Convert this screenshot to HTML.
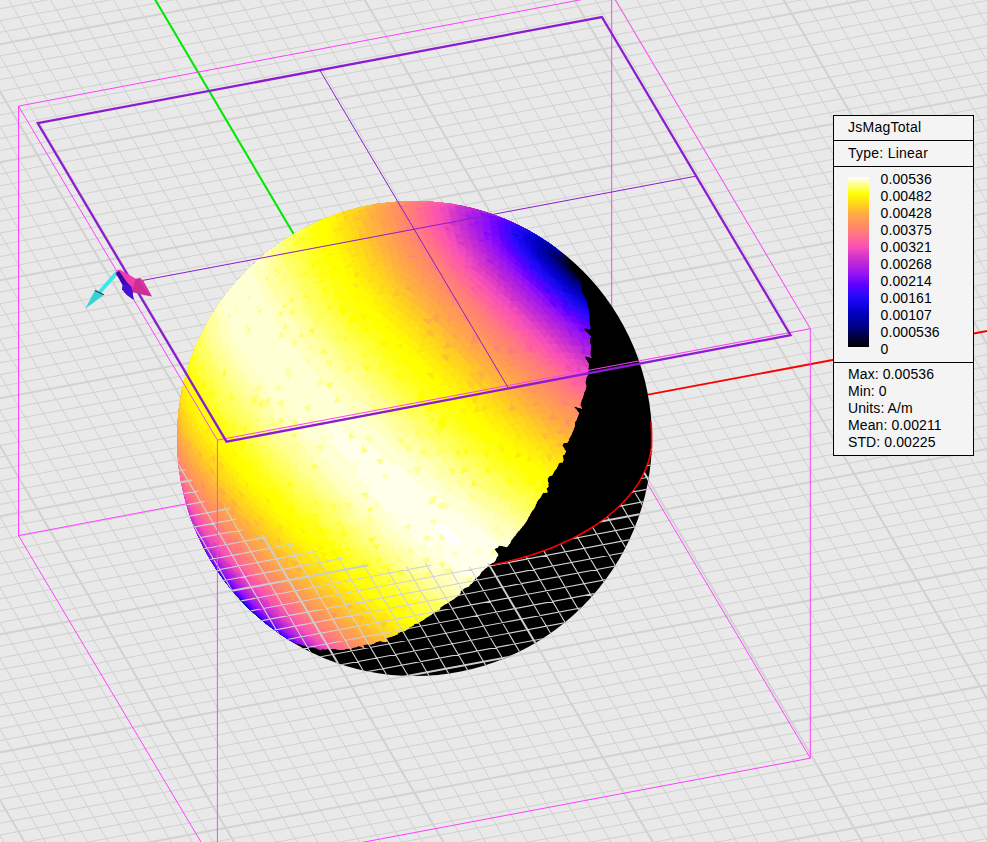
<!DOCTYPE html>
<html><head><meta charset="utf-8"><title>JsMagTotal</title>
<style>
html,body{margin:0;padding:0;background:#e9e9e9;}
body{width:987px;height:842px;overflow:hidden;position:relative;font-family:"Liberation Sans",Arial,sans-serif;font-size:14px;color:#000;}
.lg{position:absolute;left:833px;top:115px;width:139px;height:339px;border:1px solid #000;background:#f4f4f4;}
.lg .hr{position:absolute;left:0;right:0;height:1px;background:#000;}
.lg .t,.lg .v{position:absolute;left:14px;line-height:16px;white-space:nowrap;letter-spacing:0.25px;}
.lg .v{left:46.5px;letter-spacing:0.1px;}
.lg .s{letter-spacing:0.1px;}
.lg .bar{position:absolute;left:14px;top:61px;width:21px;height:170px;}
</style></head><body>
<svg width="987" height="842" viewBox="0 0 987 842" style="display:block">
<rect width="987" height="842" fill="#e9e9e9"/>
<path id="gmin" d="M-5.0 -2.1L10.6 -5.0M-5.0 9.7L73.5 -5.0M-5.0 21.5L136.4 -5.0M-5.0 33.3L199.2 -5.0M-5.0 56.9L325.0 -5.0M-5.0 68.7L387.9 -5.0M-5.0 80.5L450.8 -5.0M-5.0 92.3L513.7 -5.0M-5.0 104.1L576.6 -5.0M-5.0 115.9L639.4 -5.0M-5.0 127.8L702.3 -5.0M-5.0 139.6L765.2 -5.0M-5.0 827.3L6.7 847.0M-5.0 151.4L828.1 -5.0M-5.0 756.4L48.6 847.0M-5.0 175.0L953.9 -5.0M-5.0 721.0L69.5 847.0M-5.0 186.8L992.0 -0.4M-5.0 685.5L90.4 847.0M-5.0 198.6L992.0 11.5M-5.0 650.1L111.4 847.0M-5.0 210.4L992.0 23.3M-5.0 614.6L132.3 847.0M-5.0 222.2L992.0 35.1M-5.0 579.2L153.3 847.0M-5.0 234.0L992.0 46.9M-5.0 543.8L174.2 847.0M-5.0 245.8L992.0 58.7M-5.0 508.3L195.2 847.0M-5.0 257.6L992.0 70.5M-5.0 472.9L216.1 847.0M-5.0 269.4L992.0 82.3M-5.0 402.0L258.0 847.0M-5.0 293.0L992.0 105.9M-5.0 366.6L278.9 847.0M-5.0 304.8L992.0 117.7M-5.0 331.1L299.9 847.0M-5.0 316.6L992.0 129.5M-5.0 295.7L320.8 847.0M-5.0 328.4L992.0 141.3M-5.0 260.3L341.8 847.0M-5.0 340.2L992.0 153.1M-5.0 224.8L362.7 847.0M-5.0 352.0L992.0 164.9M-5.0 189.4L383.7 847.0M-5.0 363.8L992.0 176.7M-5.0 153.9L404.6 847.0M-5.0 375.6L992.0 188.5M-5.0 118.5L425.5 847.0M-5.0 387.4L992.0 200.3M-5.0 47.6L467.4 847.0M-5.0 411.0L992.0 223.9M-5.0 12.2L488.4 847.0M-5.0 422.8L992.0 235.7M5.8 -5.0L509.3 847.0M-5.0 434.6L992.0 247.5M26.7 -5.0L530.3 847.0M-5.0 446.4L992.0 259.3M47.7 -5.0L551.2 847.0M-5.0 458.2L992.0 271.1M68.6 -5.0L572.1 847.0M-5.0 470.0L992.0 282.9M89.6 -5.0L593.1 847.0M-5.0 481.8L992.0 294.7M110.5 -5.0L614.0 847.0M-5.0 493.6L992.0 306.5M131.4 -5.0L635.0 847.0M-5.0 505.4L992.0 318.3M173.3 -5.0L676.9 847.0M-5.0 529.0L992.0 341.9M194.3 -5.0L697.8 847.0M-5.0 540.8L992.0 353.7M215.2 -5.0L718.8 847.0M-5.0 552.6L992.0 365.5M236.2 -5.0L739.7 847.0M-5.0 564.4L992.0 377.3M257.1 -5.0L760.6 847.0M-5.0 576.2L992.0 389.1M278.1 -5.0L781.6 847.0M-5.0 588.0L992.0 400.9M299.0 -5.0L802.5 847.0M-5.0 599.8L992.0 412.7M319.9 -5.0L823.5 847.0M-5.0 611.7L992.0 424.5M340.9 -5.0L844.4 847.0M-5.0 623.5L992.0 436.3M382.8 -5.0L886.3 847.0M-5.0 647.1L992.0 459.9M403.7 -5.0L907.2 847.0M-5.0 658.9L992.0 471.7M424.7 -5.0L928.2 847.0M-5.0 670.7L992.0 483.5M445.6 -5.0L949.1 847.0M-5.0 682.5L992.0 495.3M466.5 -5.0L970.1 847.0M-5.0 694.3L992.0 507.2M487.5 -5.0L991.0 847.0M-5.0 706.1L992.0 519.0M508.4 -5.0L992.0 813.2M-5.0 717.9L992.0 530.8M529.4 -5.0L992.0 777.8M-5.0 729.7L992.0 542.6M550.3 -5.0L992.0 742.3M-5.0 741.5L992.0 554.4M592.2 -5.0L992.0 671.5M-5.0 765.1L992.0 578.0M613.2 -5.0L992.0 636.0M-5.0 776.9L992.0 589.8M634.1 -5.0L992.0 600.6M-5.0 788.7L992.0 601.6M655.0 -5.0L992.0 565.1M-5.0 800.5L992.0 613.4M676.0 -5.0L992.0 529.7M-5.0 812.3L992.0 625.2M696.9 -5.0L992.0 494.3M-5.0 824.1L992.0 637.0M717.9 -5.0L992.0 458.8M-5.0 835.9L992.0 648.8M738.8 -5.0L992.0 423.4M-1.3 847.0L992.0 660.6M759.8 -5.0L992.0 388.0M61.6 847.0L992.0 672.4M801.7 -5.0L992.0 317.1M187.4 847.0L992.0 696.0M822.6 -5.0L992.0 281.6M250.3 847.0L992.0 707.8M843.5 -5.0L992.0 246.2M313.2 847.0L992.0 719.6M864.5 -5.0L992.0 210.8M376.0 847.0L992.0 731.4M885.4 -5.0L992.0 175.3M438.9 847.0L992.0 743.2M906.4 -5.0L992.0 139.9M501.8 847.0L992.0 755.0M927.3 -5.0L992.0 104.4M564.7 847.0L992.0 766.8M948.3 -5.0L992.0 69.0M627.6 847.0L992.0 778.6M969.2 -5.0L992.0 33.6M690.5 847.0L992.0 790.4M816.2 847.0L992.0 814.0M879.1 847.0L992.0 825.8M942.0 847.0L992.0 837.6" stroke="#d1d1d1" stroke-width="1" fill="none"/>
<path id="gmaj" d="M-5.0 45.1L262.1 -5.0M-5.0 791.8L27.6 847.0M-5.0 163.2L891.0 -5.0M-5.0 437.4L237.0 847.0M-5.0 281.2L992.0 94.1M-5.0 83.1L446.5 847.0M-5.0 399.2L992.0 212.1M152.4 -5.0L655.9 847.0M-5.0 517.2L992.0 330.1M361.8 -5.0L865.4 847.0M-5.0 635.3L992.0 448.1M571.3 -5.0L992.0 706.9M-5.0 753.3L992.0 566.2M780.7 -5.0L992.0 352.5M124.5 847.0L992.0 684.2M990.1 -5.0L992.0 -1.9M753.4 847.0L992.0 802.2" stroke="#d2d2d2" stroke-width="2" fill="none"/>
<path d="M414.5 438.5L992.0 330.1" stroke="#ff0000" stroke-width="1.8" fill="none"/>
<path d="M414.5 438.5L152.4 -5.0" stroke="#00ea00" stroke-width="2" fill="none"/>
<path d="M18.5 106.1L611.7 -6.1M611.7 -6.1L810.3 328.7M18.5 106.1L18.5 535.6M611.7 -6.1L611.7 423.4M810.3 328.7L810.3 758.2M18.5 535.6L611.7 423.4M611.7 423.4L810.3 758.2M810.3 758.2L217.4 869.6M217.4 869.6L18.5 535.6" stroke="#ff40ff" stroke-width="1" fill="none"/>
<circle cx="414.5" cy="438.5" r="237.5" fill="#000"/>
<clipPath id="sc"><circle cx="414.5" cy="438.5" r="237.5"/></clipPath>
<clipPath id="tc"><path d="M546.3 241.0L547.7 241.9L548.6 242.5L550.5 243.8L551.9 244.8L553.2 245.9L555.1 247.3L556.3 248.4L557.7 249.6L559.0 250.8L560.2 251.9L560.5 252.5L561.6 253.7L562.7 254.9L563.8 256.1L564.9 257.4L566.0 258.8L567.1 260.1L568.1 261.5L571.2 264.3L569.9 264.1L570.8 265.6L571.7 267.0L572.6 268.5L573.1 269.4L575.0 271.6L575.6 273.0L576.4 274.5L577.1 276.0L578.3 278.0L579.6 280.0L580.3 281.6L581.1 283.3L581.1 284.6L581.8 286.3L581.4 287.4L582.0 289.2L582.6 291.0L580.6 291.0L583.7 294.7L584.3 296.5L585.5 298.9L586.6 301.2L587.5 303.5L587.9 305.4L588.1 307.3L588.7 309.4L589.1 311.4L589.1 313.2L589.4 315.3L589.7 317.3L589.3 319.0L589.6 321.1L589.8 323.2L590.1 325.4L590.3 327.6L590.4 329.8L584.7 328.0L584.8 330.2L591.4 336.8L589.9 338.0L589.9 340.3L589.9 342.5L591.3 345.8L590.8 347.8L590.7 350.1L590.6 352.4L590.4 354.7L591.9 358.2L585.6 356.3L585.4 358.7L589.0 363.7L588.8 366.1L588.5 368.5L588.5 371.1L588.2 373.5L587.8 375.9L586.4 377.7L586.0 380.1L585.6 382.6L586.4 385.9L585.9 388.4L585.4 390.8L584.2 392.8L583.6 395.3L583.0 397.8L581.8 399.9L581.1 402.4L580.5 404.9L582.3 409.1L573.8 406.3L579.2 413.0L578.4 415.5L577.3 417.8L576.5 420.3L575.0 422.4L575.0 425.5L574.1 428.0L573.2 430.6L572.0 432.9L571.1 435.5L569.6 437.6L568.6 440.2L567.6 442.7L563.6 443.2L562.5 445.8L566.0 451.4L564.9 453.9L562.8 455.8L563.7 459.7L562.5 462.2L559.1 463.2L557.9 465.7L556.7 468.3L554.9 470.4L553.6 472.9L552.3 475.4L549.0 476.5L547.6 479.0L548.3 482.8L548.5 486.4L546.7 488.6L547.6 492.6L543.1 493.0L541.7 495.4L540.2 497.8L538.3 500.0L536.8 502.4L535.8 505.1L534.7 507.9L532.9 510.1L531.3 512.4L529.8 514.8L528.5 517.4L527.4 520.1L525.8 522.5L524.1 524.8L522.1 526.9L520.5 529.2L518.5 531.3L516.8 533.5L515.1 535.8L513.2 538.0L511.5 540.2L510.4 542.9L508.6 545.1L506.8 547.2L499.4 545.6L497.6 547.8L494.6 549.1L498.5 555.2L496.6 557.3L495.8 560.1L494.0 562.2L491.0 563.5L489.1 565.5L487.1 567.5L484.7 569.1L482.7 571.1L480.8 573.1L479.6 575.5L477.3 577.2L475.1 578.9L473.9 581.3L471.9 583.2L469.9 585.0L468.2 587.1L465.0 588.1L462.8 589.7L460.7 591.5L460.2 594.2L458.2 595.9L455.9 597.5L453.9 599.1L451.3 600.4L449.2 602.0L447.1 603.6L444.5 604.8L442.4 606.3L440.3 607.8L439.6 610.3L436.5 611.1L434.4 612.5L432.3 613.9L430.3 615.4L428.2 616.7L426.1 618.1L424.0 619.4L421.9 620.7L420.0 622.1L418.2 623.6L414.8 623.9L413.3 625.5L411.2 626.7L409.1 627.8L407.4 629.2L405.6 630.5L403.5 631.6L400.5 631.9L398.4 632.9L397.5 634.7L394.8 635.3L392.7 636.2L390.6 637.1L388.3 637.7L385.6 638.2L387.4 641.6L385.3 642.3L380.0 640.9L378.0 641.6L375.9 642.3L374.6 643.5L372.6 644.1L370.5 644.7L366.9 644.2L364.9 644.7L363.3 645.5L364.7 648.3L358.8 646.1L357.4 646.9L355.4 647.3L353.1 647.4L352.3 648.5L350.3 648.8L347.8 648.7L345.8 648.9L344.6 649.6L342.6 649.7L340.7 649.9L338.8 650.0L335.5 649.1L333.3 648.9L331.4 648.9L329.5 648.9L328.3 649.3L326.4 649.2L324.9 649.3L323.1 649.2L321.3 649.0L321.6 650.2L319.8 650.0L315.9 648.2L313.6 647.6L311.9 647.3L310.2 646.9L308.8 646.8L307.1 646.4L305.4 645.9L303.4 645.2L301.8 644.7L300.2 644.2L299.1 644.0L298.3 644.0L296.9 643.5L294.7 642.4L293.1 641.7L291.6 641.0L290.7 640.6L291.1 641.2L289.6 640.4L285.0 637.4L283.5 636.5L282.7 636.1L280.6 634.6L279.2 633.7L279.3 633.7L-298.8 238.9L-31.7 -153.8z"/></clipPath>
<g clip-path="url(#sc)"><g clip-path="url(#tc)"><g shape-rendering="crispEdges" transform="translate(0.03 0.04)">
<path fill="#ff8c65" stroke="#ff8c65" stroke-width="0.7" d="M361.9 648.2l5.2 3.8-7.8-.7zM264.1 564.8l4.3 7.1-7.3-3.7zM285.1 588.9l7.9 2.9-3 3.5zM277.4 585.6l3-3.4 4.7 6.7zM307.8 611.5l-5-6.5 8.2 2.4zM297.9 598.1l8.2 2.6-3.3 4.3zM297.9 598.1l4.9 6.9-8.1-2.8zM322.2 620.3l-8.8-2.3 3.1-4zM361.9 648.2l-9.2-1.1 2.8-3.4zM349.3 638.9l6.2 4.8-9.1-1.2zM343.1 633.7l-2.9 3.7-6.1-5.3zM264.1 564.8l-3 3.4-3.5-7.9zM251.3 555.7l6.3 4.6-2.9 3.4zM239.4 545.9l2.9-3.4 3 8.3zM184.2 469.9l1.6-3.1 .6 8zM179.3 454.9l1.3 5-.9 3.1zM233.2 541.2l-2.7-8.4 6.1 4.7zM222.4 519.1l2.3 8.7-5.5-5.1zM188.2 471.7l1 9.4-2.8-6.3zM194.4 484.1l3.8 6.1-2.4 3.3zM202.3 496.1l-2.6 3.3-1.5-9.2zM211.7 507.9l5.2 5.7-3.1 3.5zM211.7 507.9l-2.9 3.4-2-9.3zM396.8 203.7l7.5-1.1 .6 1zM411.2 201.3l-7.5 .6-.6-.5zM403.1 201.4l.6 .5-8.1 .3zM410.5 244.1l8.6 2.5-7.2 2.3zM413.3 253.9l7.2-2.4 1.4 5.2zM401.3 214.2l1 2.7-8.5-.8zM403.4 219.9l-8.5-1 7.4-2zM403.4 219.9l1 3.3-8.5-1.1zM405.5 226.8l1.2 3.9-8.6-1.6zM408 234.9l-8.6-1.8 7.3-2.4zM401.3 214.2l-8.4-.7 7.4-2.2zM397.4 204.9l7.5-1.3 1 1.5zM397.4 204.9l8.5 .2-7.5 1.5zM178.6 457.9l-.9-6.7 .6-1.2zM177.2 444.4l.5 6.8-.2 1.2zM177.2 444.4l.3 8-.4-6.8zM428.3 272.7l7.2-2.4-1.1 6.8zM423.3 262.1l6.1 4-7.2 2.5zM428.3 272.7l1.1-6.6 6.1 4.2zM487.7 332l-7.5 2 1.7-7.8zM462.6 317.1l1.6-7.7 6 5.5zM474.4 328.2l1.7-7.8 5.8 5.8zM470.2 314.9l5.9 5.5-7.6 2.2zM440.5 281.6l6.4 4.9-7.6 2.3zM453.2 291.5l-1.2 7.4-6.4-5.2zM570.5 406.4l7.1 .1-3 6.7zM581.5 413.3l-6.9-.1 3-6.7zM521.2 359.2l-3 6.9-5.3-6.4zM536.5 378.6l-8 .5 3-7zM526.4 365.6l5.1 6.5-8.1 .4zM526.4 365.6l-3 6.9-5.2-6.4zM546.4 392.4l-4.9-6.9 8-.1zM546.4 392.4l3.1-7 4.8 6.9zM485.9 339.8l1.8-7.8 6.7 6.9zM494.4 338.9l6.7 7.2-8.5 .8z"/>
<path fill="#ff8273" stroke="#ff8273" stroke-width="0.7" d="M356.8 654.1l2.5-2.8 5.2 3.6zM258.3 571.5l2.8-3.3 4.3 7.1zM282.2 592.2l-7.6-3.3 2.8-3.3zM359.3 651.3l-9.1-1.3 2.5-2.9zM307.8 611.5l-3 3.9-5.1-6.5zM282.2 592.2l7.8 3.1-3.2 4zM290 595.3l4.7 6.9-7.9-2.9zM307.8 611.5l5.6 6.5-8.6-2.6zM343.7 645.7l2.7-3.2 6.3 4.6zM331.3 635.6l8.9 1.8-2.8 3.4zM337.4 640.8l2.8-3.4 6.2 5.1zM331.3 635.6l-6.1-5.5 8.9 2zM248.5 559l6.2 4.7-2.7 3.2zM239.4 545.9l-2.8-8.4 5.7 5zM181.2 468l-.7 2.9-.8-7.9zM239.4 545.9l3.1 8.2-6.3-4.5zM216.3 526.2l2.9-3.5 2.4 8.6zM227.2 536.3l-5.6-5 3.1-3.5zM239.4 545.9l-3.2 3.7-3-8.4zM193.8 496.6l-1.5-9.3 3.5 6.2zM185 477.9l1.4-3.1 1.2 9.4zM190.5 490.4l-2.9-6.2 1.6-3.1zM186.4 474.8l2.8 6.3-1.6 3.1zM194.4 484.1l-2.1 3.2-1.2-9.4zM190.5 490.4l-1.3-9.3 3.1 6.2zM197.5 502.7l-1.7-9.2 3.9 5.9zM216.3 526.2l-2.5-9.1 5.4 5.6zM199.7 499.4l4.4 6-2.5 3.3zM211 520.5l-2.2-9.2 5 5.8zM202.3 496.1l4.5 5.9-2.7 3.4zM206.2 514.7l-2.1-9.3 4.7 5.9zM411.2 201.3l8 .2-7.4 .4zM411.2 201.3l7.7-.2 .3 .4zM410.5 201.1l8.1-.1-7.8 0zM427.7 249.3l1.4 5.1-8.6-2.9zM404.4 223.2l7.4-1.9 1.1 3.5zM409.7 215.2l1.1 2.9-8.5-1.2zM405.5 226.8l-8.5-1.3 7.4-2.3zM405.5 226.8l7.4-2 1.3 3.8zM417.9 241.7l8.6 2.6-7.4 2.3zM412.4 202.7l1 1.3-8.5-.4zM401.3 214.2l7.5-2.1 .9 3.1zM178.6 457.9l.6 8-1-6.7zM178 460.4l-.5-8 .7 6.8zM178 460.4l-.5-6.8 0-1.2zM442.7 268.1l-1.1 6.7-6.1-4.5zM442.7 268.1l-7.2 2.2 1.1-6.5zM489.4 324.2l-7.5 2 1.7-7.7zM477.7 312.8l5.9 5.7-7.5 1.9zM458.2 304.2l-6.2-5.3 7.5-2.2zM453.2 291.5l7.6-2.2-1.3 7.4zM448 279.4l6.4 4.9-7.5 2.2zM531.5 372.1l2.9-6.9 5 6.6zM515.8 352.9l8.1-.5-2.7 6.8zM526.4 365.6l-5.2-6.4 8-.4zM526.4 365.6l2.8-6.8 5.2 6.4zM584.4 406.7l-6.8-.2 2.8-6.9zM577.6 406.5l-4.1-7 6.9 .1zM570.5 406.4l-7.3-.1 3.1-6.9zM558.9 399.3l7.4 .1-3.1 6.9zM561.9 392.4l7.3 0-2.9 7zM566.3 399.4l2.9-7 4.3 7.1zM552.4 378.4l-2.9 7-5-6.9zM552.4 378.4l4.8 7-7.7 0zM489.4 324.2l6.8 6.9-8.5 .9zM502.9 338.2l-8.5 .7 1.8-7.8z"/>
<path fill="#ff896a" stroke="#ff896a" stroke-width="0.7" d="M367.1 652l-2.6 2.9-5.2-3.6zM272.8 578.9l-7.4-3.6 3-3.4zM268.4 571.9l-3 3.4-4.3-7.1zM282.2 592.2l2.9-3.3 4.9 6.4zM272.8 578.9l7.6 3.3-3 3.4zM361.9 648.2l-2.6 3.1-6.6-4.2zM297.9 598.1l-3.2 4.1-4.7-6.9zM319.2 624.2l3-3.9 5.9 6zM307.8 611.5l8.7 2.5-3.1 4zM352.7 647.1l-6.3-4.6 9.1 1.2zM349.3 638.9l-2.9 3.6-6.2-5.1zM337.1 628.2l-3 3.9-6-5.8zM251.3 555.7l-2.8 3.3-3.2-8.2zM261.1 568.2l-6.4-4.5 2.9-3.4zM185 477.9l-.8-8 2.2 4.9zM178.6 457.9l.7-3 .4 8.1zM182.9 472.9l-.7-8 2 5zM181.2 468l-.6-8.1 1.6 5zM227.2 536.3l-2.5-8.5 5.8 5zM194.4 484.1l1.4 9.4-3.5-6.2zM192.3 487.3l-3.1-6.2 1.9-3.2zM195.8 493.5l2.4-3.3 1.5 9.2zM213.8 517.1l3.1-3.5 2.3 9.1zM202.3 496.1l1.8 9.3-4.4-6zM211.7 507.9l2.1 9.2-5-5.8zM206.8 502l2 9.3-4.7-5.9zM584.4 406.7l2.8 9-5.7-2.4zM412.4 202.7l-7.5 .9-.6-1zM411.2 201.3l.6 .6-8.1 0zM404.3 202.6l-.6-.7 8.1 0zM411.2 201.3l-8.1 .1 7.7-.4zM410.5 201.1l7.7 .2 .4-.3zM430.5 259.8l-7.2 2.3-1.4-5.4zM419.1 246.6l1.4 4.9-8.6-2.6zM413.3 253.9l1.4 5.3-8.7-2.6zM406.7 230.7l-7.3 2.4-1.3-4zM410.5 244.1l7.4-2.4 1.2 4.9zM408 234.9l-1.3-4.2 8.7 2zM410.5 244.1l-1.3-4.7 8.7 2.3zM408 234.9l8.7 2.2-7.5 2.3zM399.3 208.7l-.9-2.1 8.4 .5zM399.3 208.7l8.5 .7-7.5 1.9zM178.6 457.9l-.4 1.3-.5-8zM178.2 459.2l-.7-6.8 .2-1.2zM177.4 446.8l-.3-1.2 .4 8zM177.1 445.6l.4 6.8 0 1.2zM440.5 281.6l-6.1-4.5 7.2-2.3zM434.4 277.1l1.1-6.8 6.1 4.5zM430.5 259.8l-1.1 6.3-6.1-4zM465.7 302l-1.5 7.4-6-5.2zM471.7 307.4l-1.5 7.5-6-5.5zM450.7 306.5l1.3-7.6 6.2 5.3zM453.2 291.5l6.3 5.2-7.5 2.2zM584.4 406.7l-2.9 6.6-3.9-6.8zM515.8 352.9l-2.9 6.8-5.4-6.2zM536.5 378.6l-5-6.5 7.9-.3zM526.4 365.6l-8.2 .5 3-6.9zM509.9 366.7l3-7 5.3 6.4zM570.5 406.4l3-6.9 4.1 7zM561.9 392.4l4.4 7-7.4-.1zM570.5 406.4l-4.2-7 7.2 .1zM536.5 378.6l8-.1-3 7zM544.5 378.5l5 6.9-8 .1zM561.9 392.4l-3 6.9-4.6-7zM507.5 353.5l-6.4-7.4 8.3-.6z"/>
<path fill="#ffe810" stroke="#ffe810" stroke-width="0.7" d="M385.3 612.5l5.1 4.7-8.2 .8zM390.4 617.2l-3.1 5.4-5.1-4.6zM392.4 626.9l-8.2 .8 3.1-5.1zM410.9 633.8l-3 4.9-5.1-3.7zM285.7 541.3l4.2-4.3 4 7.1zM302.2 546.7l4.2 6.9-8.4-2.5zM302.2 546.7l-4.2 4.4-4.1-7zM367 611.7l4.1-4.5 5 5zM375.3 602.5l-9.2-.5 4.2-4.8zM367 611.7l-5-5.1 9.1 .6zM357.1 601.2l9 .8-4.1 4.6zM347.3 589.8l-8.9-1.3 4.1-4.6zM333.6 582.5l8.9 1.4-4.1 4.6zM347.3 589.8l4.8 5.8-8.9-1.2zM337.8 577.8l-4.2 4.7-4.8-6.5zM310.8 560.4l8.7 2.2-4.2 4.7zM319.9 574l-4.6-6.7 8.8 2.1zM319.9 574l4.2-4.6 4.7 6.6zM367 611.7l9.1 .5-3.1 5.4zM382.2 618l-9.2-.4 3.1-5.4zM556.4 459.8l6.1 2.5-6.6 5.7zM568.3 464.8l-6.4 5.7 .6-8.2zM562.5 462.3l-.6 8.2-6-2.5zM568.3 464.8l-.6 8.2-5.8-2.5zM555.2 476.1l6.7-5.6-.8 8.2zM556.4 459.8l-6.4 2.5 2.8-9.1zM539.6 458.2l2.9-9.2 3.8 6.7zM521.7 456.4l-7.2 2.3 3-9.1zM527.4 438.1l-7 2.4 2.7-9.1zM535.7 451.5l-4-6.7 6.8-2.4zM527.4 438.1l4.3 6.7-7.1 2.4zM472.9 389.9l5.3 6.3-7.8 2.3zM483.5 402.6l-7.8 2.3 2.5-8.7zM493.7 415.6l-5.1-6.5 7.7-2.3zM493.7 415.6l7.6-2.3-2.6 9.1zM501.3 413.3l5 6.8-7.6 2.3zM503.7 429.2l2.6-9.1 4.9 6.9zM377.1 294.8l9.4-2.3-3.4 6.2zM398 318.3l-6.1-4.6 9.4-2zM385.8 309.4l9.4-2.2-3.3 6.5zM383.1 298.7l6.1 4.2-9.4 2.3zM385.8 309.4l3.4-6.5 6 4.3zM416.5 353.4l3.2-7.3 5.9 5.5zM428.8 344.4l-3.2 7.2-5.9-5.5zM437.4 362.8l-5.9-5.6 9.1-1.7zM434.7 349.9l-3.2 7.3-5.9-5.6zM422.9 339l-3.2 7.1-6.2-5.3zM422.9 339l-9.4 1.8 3.2-7.2zM410.4 328.3l6.3 5.3-9.5 1.9zM413.5 340.8l-6.3-5.3 9.5-1.9zM410.4 328.3l-9.4 2 3.2-7.1zM404.2 323.2l-3.2 7.1-6.2-5zM472.9 389.9l-2.5 8.6-6.5-7.2zM446.4 361.2l-2.4 8.6-6.6-7zM435 371.5l-2.5 8.7-6.6-7zM472.9 389.9l-9 1.4 2.5-8.7zM463.9 391.3l-6.5-7.3 9-1.4zM453.2 368.2l-2.5 8.7-6.7-7.1zM459.8 375.3l-2.4 8.7-6.7-7.1zM268.5 514.6l6.1 4.6-4.1 4.4zM274.6 519.2l2.2 8.9-6.3-4.5zM285.7 541.3l-2.5-8.7 6.7 4.4zM224.8 475.5l-.5-9.2 4.5 4.9zM243.6 486l4.4-4.4 .9 9.2zM244.6 495.1l-5.2-4.8 4.2-4.3zM234.3 485.4l4.1-4.3 1 9.2zM239.4 490.3l-1-9.2 5.2 4.9zM228.8 471.2l4.7 5-4 4.3zM234.3 485.4l-.8-9.2 4.9 4.9zM268.5 514.6l2 9-6.4-4.6zM244.6 495.1l4.3-4.3 1.4 9.3zM256.1 505l-5.8-4.9 4.3-4.4zM268.5 514.6l-4.4 4.4-1.9-9.2zM256.1 505l6.1 4.8-4.3 4.4zM193 405.9l-3.3 3.3 1.7-7.9zM183.7 394.4l.4 4.4-2 3.5zM186.8 412.5l-1.2-4.6 2.7-3.4zM184.7 403.3l2.5-3.3-1.6 7.9zM214.7 445.3l-4.5 3.4 .9-8.3zM206.8 443.8l4.3-3.4-.9 8.3zM194.4 432.4l1.2-8.3 2.4 4.9zM195.6 424.1l3.7-3.4-1.3 8.3zM207.8 435.4l-3.1-4.9 4.4-3.4zM192.1 427.4l1.2-8.3 2.3 5zM186.8 412.5l2.9-3.3-1.4 8.2zM189.7 409.2l1.7 4.9-3.1 3.3zM190 422.4l1.4-8.3 1.9 5zM224.1 457.1l-4.8 3.4-.1-9.3zM335.8 218.4l7.2-3 .7 1.3zM349.1 210.9l-7.8 2.1 7.3-2.4zM349.1 210.9l-7.3 2.6-.5-.5zM348.2 210.4l-.3 .2 7.8-2.2zM361.7 272l8-.5-6.5 5.9zM352.2 267.4l-7.8 .8 6.4-5.9zM357.4 256.7l1.3 4.9-7.9 .7zM352.2 267.4l6.5-5.8 1.5 5.1zM344 240.3l-1.3-3.5 8-1.2zM341.6 233.5l8-1.2-6.9 4.5zM341.6 233.5l-1-3 7.9-1.4zM349.4 257.5l-1.5-4.6 8.1-.8zM347.9 252.9l6.7-5.3 1.4 4.5zM344 240.3l7.9-1.1-6.7 5zM346.5 248.4l-1.3-4.2 8-.9zM339.6 227.7l-1.1-2.8 8.1-1.2zM337.4 222.4l8.1-1.4-7 3.9zM343.7 216.7l.8 2-8 1.5zM337.4 222.4l7.1-3.7 1 2.3zM380.5 288.6l-3.4 6.2-4.7-6zM371.2 277.1l-3.4 5.9-4.6-5.6zM372.4 288.8l-4.6-5.8 8-.3zM359.8 283.4l-3.5 6.2-4.5-5.5zM183.7 394.4l-1.6 7.9 .4-7.2zM183.7 383.7l0-1-1.8 7.9zM181.9 390.6l1.8-7.9-1.6 6.9zM181.6 395.9l1.7-7.9-.8 7.1zM183.9 381.7l-1.3 7.1-.5 .8zM181.6 395.9l1-7.1 .7-.8z"/>
<path fill="#fff308" stroke="#fff308" stroke-width="0.7" d="M395.5 621.7l-8.2 .9 3.1-5.4zM298.6 527.9l8.5 2.4-4.5 4.7zM328.4 564.5l-8.9-1.9 4.4-4.6zM315.1 555.9l8.8 2.1-4.4 4.6zM294.2 532.5l3.9 7.1-8.2-2.6zM319.6 551.3l-4.3-6.9 8.8 2.1zM302.2 546.7l8.6 2.4-4.4 4.5zM306.4 553.6l4.4-4.5 4.3 6.8zM302.2 546.7l-4.1-7.1 8.5 2.5zM302.2 546.7l4.4-4.6 4.2 7zM385.3 612.5l-9.2-.3 4.2-4.6zM375.3 602.5l5 5.1-9.2-.4zM376.1 612.2l-5-5 9.2 .4zM370.3 597.2l-4.2 4.8-4.9-5.5zM375.3 602.5l-4.2 4.7-5-5.2zM347.3 589.8l4.2-4.8 4.8 5.8zM347.3 589.8l-4.8-5.9 9 1.1zM337.8 577.8l9 1.3-4.3 4.8zM351.5 585l-9-1.1 4.3-4.8zM337.8 577.8l-4.8-6.5 9.1 1.6zM328.4 564.5l-4.3 4.9-4.6-6.8zM328.4 564.5l4.6 6.8-8.9-1.9zM400.6 626l4.1-4.6 5.2 4.2zM405.8 630l9.3-.5-4.2 4.3zM416.1 637.4l-5.2-3.6 9.3-.6zM555.2 476.1l-5.8-5.6 6.5-2.5zM543.3 464.8l6.7-2.5-.6 8.2zM555.9 468l-6.5 2.5 .6-8.2zM388.5 606.7l9.2-.1-3.2 5.9zM555.2 476.1l.7-8.1 6 2.5zM535.7 451.5l3.9 6.7-6.8 2.4zM535.7 451.5l-2.9 9.1-4-6.7zM513.2 442.9l7.2-2.4-2.9 9.1zM520.4 440.5l4.2 6.7-7.1 2.4zM467.8 407.3l2.6-8.8 5.3 6.4zM497.9 447.5l7.7-2.3-3 9.1zM493.7 415.6l-2.7 9.1-5-6.8zM513.2 442.9l-4.7-6.8 7.5-2.3zM503.7 429.2l-7.7 2.3 2.7-9.1zM498.7 422.4l-2.7 9.1-5-6.8zM503.7 429.2l4.8 6.9-7.6 2.3zM373.8 301.1l6 4.1-9.3 2.4zM385.8 309.4l-9.3 2.3 3.3-6.5zM388.7 320.4l-6.1-4.4 9.3-2.3zM385.8 309.4l-3.2 6.6-6.1-4.3zM416.5 353.4l9.1-1.8-3.2 7.4zM428.3 364.6l-5.9-5.6 9.1-1.8zM404 342.8l-3.1 7.3-6.2-5.2zM416.5 353.4l-6.2-5.3 9.4-2zM404 342.8l9.5-2-3.2 7.3zM419.7 346.1l-9.4 2 3.2-7.3zM404 342.8l3.2-7.3 6.3 5.3zM391.6 332.5l3.2-7.2 6.2 5zM397.8 337.6l3.2-7.3 6.2 5.2zM467.8 407.3l-2.7 8.8-6.4-7.3zM467.8 407.3l-6.4-7.3 9-1.5zM454.9 392.8l9-1.5-2.5 8.7zM470.4 398.5l-9 1.5 2.5-8.7zM441.6 378.5l-6.6-7 9-1.7zM441.6 378.5l6.7 7.1-9.2 1.6zM454.9 392.8l-6.6-7.2 9.1-1.6zM294.2 532.5l-4.3 4.5-2.4-8.9zM268.5 514.6l-1.8-9.2 6.1 4.6zM268.5 514.6l4.3-4.6 1.8 9.2zM281 523.7l-6.4-4.5 4.4-4.6zM272.8 510l6.2 4.6-4.4 4.6zM224.1 457.1l4.3 4.9-4.1 4.3zM233 466.9l-4.2 4.3-.4-9.2zM242.8 476.7l5.2 4.9-4.4 4.4zM242.8 476.7l.8 9.3-5.2-4.9zM242.8 476.7l-4.4 4.4-.6-9.3zM233 466.9l4.8 4.9-4.3 4.4zM262.2 509.8l-1.6-9.2 6.1 4.8zM253.3 486.4l1.3 9.3-5.7-4.9zM260.6 500.6l-6-4.9 4.6-4.4zM183.7 394.4l1.9-7.8 .3 4.3zM190.2 396.6l1.2 4.7-3.1 3.2zM188.3 404.5l3.1-3.2-1.7 7.9zM190.2 396.6l-1.9 7.9-1.1-4.5zM187.2 400l-.8-4.6 2.8-3.3zM197 415.9l2.3 4.8-3.7 3.4zM201.8 425.6l-3.8 3.4 1.3-8.3zM193 405.9l-1.6 8.2-1.7-4.9zM197 415.9l-3.7 3.2 1.5-8.2zM193 405.9l1.8 5-3.4 3.2zM333.5 215.4l7.3-2.6 .5 .2zM334.5 216.4l-.5-.6 7.8-2.3zM340.5 212.9l-.3 .3 7.7-2.6zM349.4 257.5l1.4 4.8-7.8 1zM340.6 230.5l-6.8 4.5-1-2.9zM336.1 241.6l-1.2-3.4 7.8-1.4zM341.6 233.5l-6.7 4.7-1.1-3.2zM349.4 257.5l-6.4 5.8-1.6-4.8zM344 240.3l-6.8 5.2-1.1-3.9zM330.6 251l1.4 4.2-7.9 1.6zM345.2 244.2l-6.7 5.4-1.3-4.1zM349.4 257.5l-8 1 6.5-5.6zM341.4 258.5l-1.5-4.6 8-1zM346.5 248.4l-6.6 5.5-1.4-4.3zM339.6 227.7l-6.8 4.4-1.3-3zM337.4 222.4l1.1 2.5-8.1 1.5zM331.5 229.1l-1.1-2.7 8.1-1.5zM321.5 226.2l.9 2.1-7.7 2.2zM335.8 218.4l.7 1.8-7.9 1.9zM337.4 222.4l-8 1.7 7.1-3.9zM337.4 222.4l-7 4-1-2.3zM373.8 301.1l-4.8-6.1 8.1-.2zM364.4 289.1l8-.3-3.4 6.2zM355.3 278l7.9-.6-3.4 6zM364.4 289.1l-4.6-5.7 8-.4zM183.7 394.4l.6-7.2 1.3-.6zM183.9 381.7l-.2 1 2-7.9zM185.7 374.8l-2 7.9 1.9-6.9zM185.3 380.1l-1 7.1-1 .8zM183.9 381.7l2.2-7.8-1.6 7z"/>
<path fill="#ffdc18" stroke="#ffdc18" stroke-width="0.7" d="M379.1 623.2l3.1-5.2 5.1 4.6zM379.1 623.2l5.1 4.5-8.1 .4zM399.8 639.7l8.1-1-2.9 4.6zM399.8 639.7l-5.2-3.8 8.2-.9zM285.7 541.3l4 7.1-8-2.8zM293.9 555.4l4.1-4.3 4.3 6.9zM293.9 555.4l-4.2-7 8.3 2.7zM357.1 601.2l4.9 5.4-9-.9zM353 605.7l9 .9-4 4.3zM357.1 601.2l-4.1 4.5-5-5.6zM329.6 587l8.8 1.5-4.1 4.5zM338.4 588.5l4.8 5.9-8.9-1.4zM339.1 598.8l4.1-4.4 4.8 5.7zM329.6 587l-4.9-6.4 8.9 1.9zM319.5 562.6l4.6 6.8-8.8-2.1zM306.6 565l-8.4-2.5 4.1-4.5zM319.9 574l4.8 6.6-8.9-2zM319.9 574l-8.7-2.1 4.1-4.6zM315.3 567.3l-4.1 4.6-4.6-6.9zM367 611.7l-3.1 5.3-5.9-6.1zM379.1 623.2l-9.1-.5 3-5.1zM367 611.7l6 5.9-9.1-.6zM549.1 446.5l-6.6 2.5 2.7-9.1zM545.2 439.9l-2.7 9.1-4-6.6zM527.4 438.1l2.7-9.1 4.2 6.6zM527.4 438.1l-4.3-6.7 7-2.4zM518.6 424.8l7-2.5-2.5 9.1zM472.9 389.9l2.4-8.6 5.4 6.2zM496.3 406.8l7.6-2.2-2.6 8.7zM478.2 396.2l-2.5 8.7-5.3-6.4zM483.5 402.6l5.1 6.5-7.7 2.3zM472.9 389.9l7.8-2.4-2.5 8.7zM480.7 387.5l5.3 6.4-7.8 2.3zM483.5 402.6l2.5-8.7 5.2 6.4zM508.7 411.1l-2.4 9-5-6.8zM518.6 424.8l-7.4 2.2 2.5-9.1zM508.7 411.1l5 6.8-7.4 2.2zM380.5 288.6l6 3.9-9.4 2.3zM380.5 288.6l9.4-2.2-3.4 6.1zM392.5 296.5l6.1 4.3-9.4 2.1zM395.2 307.2l-6-4.3 9.4-2.1zM434.7 349.9l9.1-1.6-3.2 7.2zM422.9 339l9.1-1.8-3.2 7.2zM434.7 349.9l-5.9-5.5 9.1-1.7zM422.9 339l-6.2-5.4 9.4-1.7zM416.7 333.6l3.1-7 6.3 5.3zM407.4 316.3l6.2 5.1-9.4 1.8zM410.4 328.3l3.2-6.9 6.2 5.2zM459.8 375.3l9-1.3-2.4 8.6zM459.8 375.3l-6.6-7.1 8.9-1.4zM285.7 541.3l-4 4.3-2.6-8.7zM272.7 532.4l4.1-4.3 2.3 8.8zM281 523.7l2.2 8.9-6.4-4.5zM224.8 475.5l4.7 5-3.8 4.1zM234.3 485.4l-3.9 4.2-.9-9.1zM234.3 485.4l5.1 4.9-4 4.2zM240.6 499.3l-5.2-4.8 4-4.2zM272.7 532.4l-6.5-4.5 4.3-4.3zM270.5 523.6l-4.3 4.3-2.1-8.9zM244.6 495.1l1.5 9.3-5.5-5.1zM250.3 500.1l1.6 9.2-5.8-4.9zM180.8 410.2l1.3-7.9 .4 4.4zM184.3 415.8l-1-4.5 2.3-3.4zM194.4 432.4l2.6 4.9-3.4 3.3zM186.8 412.5l-1.3 8.3-1.2-5zM194.4 432.4l-3.3 3.3 1-8.3zM190 422.4l2.1 5-3.1 3.3zM190 422.4l-2.9 3.3 1.2-8.3zM188.3 417.4l-1.2 8.3-1.6-4.9zM224.8 475.5l-5.2-5.8 4.7-3.4zM224.8 475.5l-4.5 3.5-.7-9.3zM568.3 464.8l-5.8-2.5 4-6.6zM560.6 453.2l5.9 2.5-4 6.6zM349.1 210.9l7.5-2.2 .5 .5zM356.6 208.7l-8 1.9 7.5-2.2zM350.3 212.6l-.6-1 8-1.5zM349.1 210.9l8-1.7-7.4 2.4zM363.3 206.6l-7.6 1.8-.3 .3zM371.2 277.1l6.5-5.8 1.6 5.6zM371.2 277.1l-1.5-5.6 8-.2zM368.2 266.2l8.1-.3-6.6 5.6zM349.4 257.5l6.6-5.4 1.4 4.6zM362.7 246.9l1.3 4.5-8 .7zM365.3 256.1l-7.9 .6 6.6-5.3zM356 252.1l8-.7-6.6 5.3zM355.3 278l-1.6-5.4 8-.6zM365.3 256.1l1.4 4.9-8 .6zM346.6 223.7l7.9-1.3-7 3.9zM350.7 235.6l8.1-.9-6.9 4.5zM357.6 231.3l-6.9 4.3-1.1-3.3zM339.6 227.7l7.9-1.4-6.9 4.2zM355.5 225.1l-7 4-1-2.8zM349.6 232.3l-1.1-3.2 8-1.1zM346.5 248.4l8.1-.8-6.7 5.3zM362.7 246.9l-6.7 5.2-1.4-4.5zM359.9 238.4l-6.7 4.9-1.3-4.1zM354.6 247.6l-1.4-4.3 8.1-.8zM353.6 220l-7 3.7-1.1-2.7zM351.7 215.3l.9 2.1-8.1 1.3zM345.5 221l-1-2.3 8.1-1.3zM380.5 288.6l-4.7-5.9 8.1 0zM371.2 277.1l8.1-.2-3.5 5.8zM383.9 282.7l-8.1 0 3.5-5.8zM371.2 277.1l4.6 5.6-8 .3zM181.6 395.9l-1.5 7.9 .8-7.1zM180.8 410.2l.2-7.2 1.1-.7zM181.6 395.9l-.6 7.1-.9 .8zM180.6 397.6l1.3-7 .2-1zM180.6 397.6l1.5-8-1.2 7.1zM556.4 459.8l-3.6-6.6 7.8 0z"/>
<path fill="#ffed0c" stroke="#ffed0c" stroke-width="0.7" d="M405.8 630l-8.3 1.1 3.1-5.1zM395.5 621.7l5.1 4.3-8.2 .9zM397.5 631.1l-5.1-4.2 8.2-.9zM395.5 621.7l-3.1 5.2-5.1-4.3zM405.8 630l5.1 3.8-8.1 1.2zM416.1 637.4l-8.2 1.3 3-4.9zM405.8 630l-3 5-5.3-3.9zM310.8 560.4l4.3-4.5 4.4 6.7zM328.4 564.5l-4.5-6.5 9 1.9zM319.6 551.3l8.9 2-4.6 4.7zM302.2 546.7l-8.3-2.6 4.2-4.5zM298.1 539.6l-4.2 4.5-4-7.1zM310.8 560.4l-4.4-6.8 8.7 2.3zM357.1 601.2l4.1-4.7 4.9 5.5zM362 606.6l4.1-4.6 5 5.2zM337.8 577.8l4.7 6.1-8.9-1.4zM357.1 601.2l-5-5.6 9.1 .9zM347.3 589.8l9 1-4.2 4.8zM361.2 596.5l-9.1-.9 4.2-4.8zM337.8 577.8l-9-1.8 4.2-4.7zM328.8 576l-4.7-6.6 8.9 1.9zM385.3 612.5l-3.1 5.5-6.1-5.8zM556.4 459.8l-.5 8.2-5.9-5.7zM567.7 473l-6.6 5.7 .8-8.2zM543.3 464.8l3-9.1 3.7 6.6zM543.3 464.8l-3.7-6.6 6.7-2.5zM535.7 451.5l6.8-2.5-2.9 9.2zM513.2 442.9l2.8-9.1 4.4 6.7zM525.7 463l3.1-9.1 4 6.7zM527.4 438.1l-2.8 9.1-4.2-6.7zM535.7 451.5l-6.9 2.4 2.9-9.1zM524.6 447.2l7.1-2.4-2.9 9.1zM493.7 415.6l-7.7 2.3 2.6-8.8zM486 417.9l-5.1-6.5 7.7-2.3zM483.5 402.6l-2.6 8.8-5.2-6.5zM503.7 429.2l7.5-2.2-2.7 9.1zM508.5 436.1l2.7-9.1 4.8 6.8zM503.7 429.2l-5-6.8 7.6-2.3zM493.7 415.6l5 6.8-7.7 2.3zM373.8 301.1l3.3-6.3 6 3.9zM398 318.3l-9.3 2.1 3.2-6.7zM385.8 309.4l6.1 4.3-9.3 2.3zM373.8 301.1l9.3-2.4-3.3 6.5zM385.8 309.4l-6-4.2 9.4-2.3zM428.3 364.6l3.2-7.4 5.9 5.6zM425.6 351.6l5.9 5.6-9.1 1.8zM398 318.3l-3.2 7-6.1-4.9zM398 318.3l6.2 4.9-9.4 2.1zM410.4 328.3l-3.2 7.2-6.2-5.2zM428.3 364.6l9.1-1.8-2.4 8.7zM444 369.8l-9 1.7 2.4-8.7zM454.9 392.8l2.5-8.8 6.5 7.3zM441.6 378.5l2.4-8.7 6.7 7.1zM441.6 378.5l9.1-1.6-2.4 8.7zM448.3 385.6l2.4-8.7 6.7 7.1zM281 523.7l-4.2 4.4-2.2-8.9zM281 523.7l6.5 4.4-4.3 4.5zM289.9 537l-6.7-4.4 4.3-4.5zM265.2 496.2l5.9 4.6-4.4 4.6zM224.3 466.3l4.1-4.3 .4 9.2zM244.6 495.1l-1-9.1 5.3 4.8zM233 466.9l.5 9.3-4.7-5zM238.4 481.1l-4.9-4.9 4.3-4.4zM268.5 514.6l-6.3-4.8 4.5-4.4zM256.1 505l4.5-4.4 1.6 9.2zM248.9 490.8l5.7 4.9-4.3 4.4zM256.1 505l-1.5-9.3 6 4.9zM186.8 412.5l1.5-8 1.4 4.7zM185.6 407.9l1.6-7.9 1.1 4.5zM183.7 394.4l2.2-3.5-1.8 7.9zM184.7 403.3l-.6-4.5 2.3-3.4zM185.9 390.9l.5 4.5-2.3 3.4zM184.7 403.3l1.7-7.9 .8 4.6zM207.8 435.4l3.3 5-4.3 3.4zM207.8 435.4l-1 8.4-3.2-5zM201.8 425.6l-1.1 8.3-2.7-4.9zM201.8 425.6l2.9 4.9-4 3.4zM207.8 435.4l-4.2 3.4 1.1-8.3zM200.7 433.9l4-3.4-1.1 8.3zM197 415.9l-1.4 8.2-2.3-5zM193.3 419.1l-1.9-5 3.4-3.2zM224.1 457.1l.2 9.2-5-5.8zM214.7 445.3l-.1 9.3-4.4-5.9zM214.7 445.3l4.5 5.9-4.6 3.4zM219.3 460.5l-4.7-5.9 4.6-3.4zM333.5 215.4l.5 .4-7.6 2.5zM348.2 210.4l.4 .2-7.8 2.2zM340.8 212.8l7.8-2.2-7.3 2.4zM335.8 218.4l-.7-1.1 7.9-1.9zM335.1 217.3l7.2-3 .7 1.1zM341.3 213l.5 .5-7.8 2.3zM334.5 216.4l7.3-2.9 .5 .8zM355.3 278l6.4-6 1.5 5.4zM352.2 267.4l8-.7-6.5 5.9zM353.7 272.6l6.5-5.9 1.5 5.3zM349.4 257.5l8-.8-6.6 5.6zM352.2 267.4l-1.4-5.1 7.9-.7zM341.6 233.5l-7.8 1.5 6.8-4.5zM344 240.3l-7.9 1.3 6.6-4.8zM341.6 233.5l1.1 3.3-7.8 1.4zM344 240.3l1.2 3.9-8 1.3zM346.5 248.4l-8 1.2 6.7-5.4zM346.5 248.4l1.4 4.5-8 1zM335.8 218.4l7.9-1.7-7.2 3.5zM337.4 222.4l-.9-2.2 8-1.5zM339.6 227.7l-8.1 1.4 7-4.2zM369 295l3.4-6.2 4.7 6zM363.2 277.4l4.6 5.6-8 .4zM364.4 289.1l3.4-6.1 4.6 5.8zM183.9 381.7l-1.8 7.9 1.6-6.9zM183.7 394.4l-1.2 .7 1.8-7.9zM182.5 395.1l.8-7.1 1-.8zM183.9 381.7l.6-.8-1.9 7.9zM185.3 380.1l-2 7.9 1.2-7.1zM182.6 388.8l1.9-7.9-1.2 7.1z"/>
<path fill="#ffe214" stroke="#ffe214" stroke-width="0.7" d="M389.4 631.9l3-5 5.1 4.2zM389.4 631.9l-5.2-4.2 8.2-.8zM399.8 639.7l3-4.7 5.1 3.7zM389.4 631.9l8.1-.8-2.9 4.8zM402.8 635l-8.2 .9 2.9-4.8zM310.8 560.4l-8.5-2.4 4.1-4.4zM302.3 558l-4.3-6.9 8.4 2.5zM285.7 541.3l8.2 2.8-4.2 4.3zM293.9 544.1l4.1 7-8.3-2.7zM329.6 587l4-4.5 4.8 6zM347.3 589.8l-4.1 4.6-4.8-5.9zM357.1 601.2l-9.1-1.1 4.1-4.5zM343.2 594.4l8.9 1.2-4.1 4.5zM319.9 574l8.9 2-4.1 4.6zM324.7 580.6l4.1-4.6 4.8 6.5zM310.8 560.4l-4.2 4.6-4.3-7zM310.8 560.4l4.5 6.9-8.7-2.3zM379.1 623.2l-6.1-5.6 9.2 .4zM549.1 446.5l3.7 6.7-6.5 2.5zM535.7 451.5l2.8-9.1 4 6.6zM549.1 446.5l-2.8 9.2-3.8-6.7zM518.6 424.8l4.5 6.6-7.1 2.4zM516 433.8l7.1-2.4-2.7 9.1zM527.4 438.1l6.9-2.5-2.6 9.2zM538.5 442.4l-6.8 2.4 2.6-9.2zM493.7 415.6l2.6-8.8 5 6.5zM475.7 404.9l5.2 6.5-7.9 2.3zM483.5 402.6l7.7-2.3-2.6 8.8zM488.6 409.1l2.6-8.8 5.1 6.5zM483.5 402.6l-5.3-6.4 7.8-2.3zM518.6 424.8l-2.6 9-4.8-6.8zM511.2 427l-4.9-6.9 7.4-2.2zM392.5 296.5l-9.4 2.2 3.4-6.2zM398 318.3l3.3-6.6 6.1 4.6zM391.9 313.7l3.3-6.5 6.1 4.5zM392.5 296.5l-3.3 6.4-6.1-4.2zM422.9 339l5.9 5.4-9.1 1.7zM434.7 349.9l-9.1 1.7 3.2-7.2zM446.4 361.2l-9 1.6 3.2-7.3zM434.7 349.9l5.9 5.6-9.1 1.7zM410.4 328.3l9.4-1.7-3.1 7zM398 318.3l9.4-2-3.2 6.9zM410.4 328.3l-6.2-5.1 9.4-1.8zM459.8 375.3l6.6 7.3-9 1.4zM446.4 361.2l6.8 7-9.2 1.6zM459.8 375.3l-9.1 1.6 2.5-8.7zM272.7 532.4l-2.2-8.8 6.3 4.5zM285.7 541.3l-6.6-4.4 4.1-4.3zM276.8 528.1l6.4 4.5-4.1 4.3zM224.8 475.5l4-4.3 .7 9.3zM234.3 485.4l-4.8-4.9 4-4.3zM244.6 495.1l5.7 5-4.2 4.3zM256.1 505l-4.2 4.3-1.6-9.2zM264.1 519l-6.2-4.8 4.3-4.4zM256.1 505l1.8 9.2-6-4.9zM184.7 403.3l-2.2 3.4 1.6-7.9zM184.1 398.8l-1.6 7.9-.4-4.4zM186.8 412.5l-2.5 3.3 1.3-7.9zM184.7 403.3l.9 4.6-2.3 3.4zM184.7 403.3l-1.4 8-.8-4.6zM206.1 452.1l.7-8.3 3.4 4.9zM206.1 452.1l-3.3-5 4-3.3zM199.7 442.2l3.9-3.4-.8 8.3zM202.8 447.1l.8-8.3 3.2 5zM194.4 432.4l3.6-3.4-1 8.3zM199.7 442.2l-2.7-4.9 3.7-3.4zM198 429l2.7 4.9-3.7 3.4zM199.7 442.2l1-8.3 2.9 4.9zM194.4 432.4l-2.3-5 3.5-3.3zM190 422.4l3.3-3.3-1.2 8.3zM190 422.4l-1.7-5 3.1-3.3zM214.8 463.9l4.5-3.4 .3 9.2zM206.1 452.1l4.1-3.4 .1 9.3zM210.2 448.7l4.4 5.9-4.3 3.4zM214.8 463.9l-.2-9.3 4.7 5.9zM556.4 459.8l4.2-6.6 1.9 9.1zM350.3 212.6l.6 1.2-7.9 1.6zM343 215.4l7.9-1.6-7.2 2.9zM348.2 210.4l7.5-2 .4 0zM349.1 210.9l-.5-.3 8-1.9zM334.5 216.4l7.8-2.1-7.2 3zM350.3 212.6l-7.3 2.8-.7-1.1zM349.1 210.9l.6 .7-7.9 1.9zM350.3 212.6l-8 1.7 7.4-2.7zM355.7 208.4l-7.8 2.2 7.5-1.9zM348.2 210.4l-7.7 2.5 7.4-2.3zM368.2 266.2l1.5 5.3-8 .5zM371.2 277.1l-8 .3 6.5-5.9zM368.2 266.2l-6.5 5.8-1.5-5.3zM365.3 256.1l-6.6 5.5-1.3-4.9zM368.2 266.2l-8 .5 6.5-5.7zM358.7 261.6l8-.6-6.5 5.7zM339.6 227.7l7-4 .9 2.6zM344 240.3l6.7-4.7 1.2 3.6zM339.6 227.7l1 2.8-7.8 1.6zM342.7 236.8l6.9-4.5 1.1 3.3zM347.5 226.3l1 2.8-7.9 1.4zM341.6 233.5l6.9-4.4 1.1 3.2zM351.9 239.2l1.3 4.1-8 .9zM346.5 248.4l6.7-5.1 1.4 4.3zM338.5 224.9l7-3.9 1.1 2.7zM380.5 288.6l-8.1 .2 3.4-6.1zM181.6 395.9l.9-.8-1.5 7.9zM182.1 402.3l-1.1 .7 1.5-7.9zM181.6 395.9l-.7 .8 1.7-7.9z"/>
<path fill="#ffca26" stroke="#ffca26" stroke-width="0.7" d="M373.1 632.8l3-4.7 5.1 4.4zM388.7 644.7l2.9-4.2 5.2 3.6zM381.2 632.5l5.2 4.1-8.2 .4zM383.4 641l3-4.4 5.2 3.9zM277.8 549.7l3.9-4.1 4.1 7.1zM334.3 593l-3.9 4.3-4.8-6zM349 609.9l-8.8-1.3 3.8-4.1zM339.1 598.8l-3.9 4.2-4.8-5.7zM325.6 591.3l-8.9-2 3.9-4.2zM302.6 569.4l-8.4-2.5 4-4.4zM311.9 582.9l3.9-4.3 4.8 6.5zM311.9 582.9l-4.8-6.6 8.7 2.3zM373.1 632.8l-6.2-5.3 9.2 .6zM360.9 622l9.1 .7-3.1 4.8zM532.5 419.9l-6.9 2.4 2.4-9zM528 413.3l-2.4 9-4.5-6.6zM532.5 419.9l4.4 6.7-6.8 2.4zM498.8 398.1l7.5-2.3-2.4 8.8zM503.9 404.6l2.4-8.8 5 6.5zM498.8 398.1l-5.1-6.5 7.5-2.2zM488.4 385.2l-2.4 8.7-5.3-6.4zM399.3 284.5l-9.4 1.9 3.4-5.8zM401.9 294.6l-6-4.2 9.4-1.8zM399.3 284.5l-3.4 5.9-6-4zM404.7 305.2l3.3-6.2 6 4.5zM416.7 314.5l-6-4.7 9.4-1.7zM404.7 305.2l9.3-1.7-3.3 6.3zM408 299l-9.4 1.8 3.3-6.2zM452.9 346.8l5.7 5.7-8.9 1.5zM464.4 358.4l-9 1.4 3.2-7.3zM429.2 325l6 5.2-9.1 1.7zM441.1 335.6l-9.1 1.6 3.2-7zM441.1 335.6l5.9 5.5-9.1 1.6zM416.7 314.5l9.4-1.5-3.1 6.7zM477.6 372.7l-8.8 1.3 2.2-8.5zM464.4 358.4l6.6 7.1-8.9 1.3zM275.1 541.2l4-4.3 2.6 8.7zM226.8 493.7l3.6-4.1 1.3 9.1zM236.8 503.5l-5.1-4.8 3.7-4.2zM277.8 549.7l-6.7-4.3 4-4.2zM271.1 545.4l-2.5-8.7 6.5 4.5zM259.9 523.3l2.2 8.9-6.2-4.7zM247.9 513.6l-3.8 4.2-1.9-9.2zM247.9 513.6l5.9 4.9-3.9 4.2zM249.9 522.7l3.9-4.2 2.1 9zM180.8 410.2l.5 4.5-1.6 3.4zM182.1 419.2l-1.8 3.4 1-7.9zM179.7 418.1l1.6-3.4-1 7.9zM193.1 448.9l.5-8.3 2.6 4.9zM196.2 445.5l2.9 5-3.3 3.3zM193.1 448.9l-2.6-4.9 3.1-3.4zM188.2 439.1l2.9-3.4-.6 8.3zM193.6 440.6l-3.1 3.4 .6-8.3zM182.1 419.2l1.1 4.9-2 3.4zM188.2 439.1l-2-5 2.8-3.4zM184.5 429.1l2.6-3.4-.9 8.4zM214.8 463.9l-4.5-5.9 4.3-3.4zM226.8 493.7l-5.5-5.6 4.4-3.5zM216.1 482.4l4.2-3.4 1 9.1zM225.7 484.6l-4.4 3.5-1-9.1zM206.2 461.4l-3.6 3.3-.3-9.3zM216.1 482.4l-.8-9.2 5 5.8zM206.7 470.7l-.5-9.3 4.4 5.9zM564.5 446.5l6 2.5-4 6.7zM576.2 451.5l-3.8 6.7-1.9-9.2zM365.1 207.9l.7 1-8.1 1.2zM365.8 208.9l-7.5 2.3-.6-1.1zM366.4 210.2l-7.4 2.4-.7-1.4zM365.1 207.9l-8 1.3 7.5-2zM384.3 265.8l1.5 5.4-8.1 .1zM384.3 265.8l-8 .1 6.6-5.4zM368.2 266.2l6.6-5.5 1.5 5.2zM382.9 260.5l-6.6 5.4-1.5-5.2zM362.7 246.9l6.7-4.8 1.3 4.3zM381.5 255.5l-6.7 5.2-1.4-5zM355.5 225.1l7.1-3.7 .9 2.7zM362.6 221.4l-8.1 1 7.1-3.6zM359.9 238.4l6.9-4.3 1.2 3.8zM357.6 231.3l7-4.1 1.1 3.3zM357.6 231.3l8.1-.8-6.9 4.2zM358.8 234.7l6.9-4.2 1.1 3.6zM357.6 231.3l-1.1-3.3 8.1-.8zM364.6 227.2l-8.1 .8 7-3.9zM369.4 242.1l-8.1 .4 6.7-4.6zM360.7 216.6l-8.1 .8 7.2-3.2zM351.7 215.3l-7.2 3.4-.8-2zM364.1 206.7l-.5-.2 7.9-1.5zM371.1 205l.4 0-7.9 1.5zM363.3 206.6l7.4-1.3 .4-.3zM180.8 410.2l-1.1 7.9 0-7.2zM180.6 397.6l.3-.9-1.3 7.9zM179.6 404.6l-1.1 8.3 .8-7.1zM179.3 405.8l0 1.2 1.1-8.3zM549.1 433.2l4 6.7-7.9 0zM553.1 439.9l7.7 0-3.9 6.7zM541.1 433.2l-4.2-6.6 8.1-.1zM541.1 433.2l3.9-6.7 4.1 6.7z"/>
<path fill="#ffd61c" stroke="#ffd61c" stroke-width="0.7" d="M389.4 631.9l-8.2 .6 3-4.8zM376.1 628.1l8.1-.4-3 4.8zM399.8 639.7l5.2 3.6-8.2 .8zM389.4 631.9l-3 4.7-5.2-4.1zM399.8 639.7l-8.2 .8 3-4.6zM389.4 631.9l5.2 4-8.2 .7zM293.9 555.4l-8.1-2.7 3.9-4.3zM281.7 545.6l8 2.8-3.9 4.3zM349 609.9l4-4.2 5 5.2zM339.1 598.8l8.9 1.3-4 4.4zM344 604.5l4-4.4 5 5.6zM339.1 598.8l-4.8-5.8 8.9 1.4zM293.9 555.4l8.4 2.6-4.1 4.5zM329.6 587l-9-1.9 4.1-4.5zM320.6 585.1l-4.8-6.5 8.9 2zM302.6 569.4l4-4.4 4.6 6.9zM319.9 574l-4.1 4.6-4.6-6.7zM379.1 623.2l-3 4.9-6.1-5.4zM550 462.3l-3.7-6.6 6.5-2.5zM541.1 433.2l4.1 6.7-6.7 2.5zM518.6 424.8l2.5-9.1 4.5 6.6zM534.3 435.6l-4.2-6.6 6.8-2.4zM530.1 429l-7 2.4 2.5-9.1zM541.1 433.2l-2.6 9.2-4.2-6.8zM498.8 398.1l5.1 6.5-7.6 2.2zM508.7 411.1l-7.4 2.2 2.6-8.7zM498.8 398.1l-2.5 8.7-5.1-6.5zM491.2 400.3l-5.2-6.4 7.7-2.3zM518.6 424.8l-4.9-6.9 7.4-2.2zM380.5 288.6l3.4-5.9 6 3.7zM392.5 296.5l-6-4 9.4-2.1zM395.9 290.4l-9.4 2.1 3.4-6.1zM404.7 305.2l6 4.6-9.4 1.9zM401.3 311.7l9.4-1.9-3.3 6.5zM392.5 296.5l9.4-1.9-3.3 6.2zM404.7 305.2l-3.4 6.5-6.1-4.5zM404.7 305.2l-9.5 2 3.4-6.4zM446.4 361.2l3.3-7.2 5.7 5.8zM422.9 339l3.2-7.1 5.9 5.3zM440.6 355.5l3.2-7.2 5.9 5.7zM432 337.2l5.9 5.5-9.1 1.7zM434.7 349.9l3.2-7.2 5.9 5.6zM416.7 314.5l-3.1 6.9-6.2-5.1zM419.8 326.6l-6.2-5.2 9.4-1.7zM466.4 382.6l2.4-8.6 6.5 7.3zM446.4 361.2l9-1.4-2.2 8.4zM455.4 359.8l6.7 7-8.9 1.4zM459.8 375.3l2.3-8.5 6.7 7.2zM272.7 532.4l6.4 4.5-4 4.3zM229.5 480.5l.9 9.1-4.7-5zM234.3 485.4l1.1 9.1-5-4.9zM259.9 523.3l4.2-4.3 2.1 8.9zM272.7 532.4l-4.1 4.3-2.4-8.8zM246.1 504.4l-3.9 4.2-1.6-9.3zM247.9 513.6l-1.8-9.2 5.8 4.9zM259.9 523.3l-6.1-4.8 4.1-4.3zM251.9 509.3l6 4.9-4.1 4.3zM182.1 419.2l1.2-7.9 1 4.5zM180.8 410.2l1.7-3.5-1.2 8zM182.5 406.7l.8 4.6-2 3.4zM199.7 442.2l-3.5 3.3 .8-8.2zM197 437.3l-.8 8.2-2.6-4.9zM206.1 452.1l-3.8 3.3 .5-8.3zM199.7 442.2l3.1 4.9-3.7 3.4zM202.3 455.4l-3.2-4.9 3.7-3.4zM199.7 442.2l-.6 8.3-2.9-5zM194.4 432.4l-.8 8.2-2.5-4.9zM185.5 420.8l-2.3 3.3 1.1-8.3zM191.1 435.7l-2.1-5 3.1-3.3zM186.8 412.5l1.5 4.9-2.8 3.4zM190 422.4l-1 8.3-1.9-5zM219.6 469.7l-.3-9.2 5 5.8zM224.8 475.5l.9 9.1-5.4-5.6zM206.1 452.1l.1 9.3-3.9-6zM214.8 463.9l4.8 5.8-4.3 3.5zM220.3 479l-5-5.8 4.3-3.5zM206.1 452.1l4.2 5.9-4.1 3.4zM214.8 463.9l-4.2 3.4-.3-9.3zM214.8 463.9l.5 9.3-4.7-5.9zM568.3 464.8l-1.8-9.1 5.9 2.5zM351.7 215.3l-8 1.4 7.2-2.9zM350.3 212.6l7.4-2.5 .6 1.1zM351.7 215.3l-.8-1.5 8.1-1.2zM350.3 212.6l8-1.4-7.4 2.6zM363.3 206.6l.3-.1-7.9 1.9zM363.6 206.5l-7.5 1.9-.4 0zM364.1 206.7l-7.5 2-.5-.3zM357.7 210.1l-8 1.5 7.4-2.4zM369.7 271.5l6.6-5.6 1.4 5.4zM368.2 266.2l-1.5-5.2 8.1-.3zM365.3 256.1l8.1-.4-6.7 5.3zM353.6 220l.9 2.4-7.9 1.3zM355.5 225.1l-8 1.2 7-3.9zM357.6 231.3l1.2 3.4-8.1 .9zM359.9 238.4l-8 .8 6.9-4.5zM357.6 231.3l-8 1 6.9-4.3zM362.7 246.9l-8.1 .7 6.7-5.1zM359.9 238.4l1.4 4.1-8.1 .8zM353.6 220l-8.1 1 7.1-3.6zM387.3 276.9l-3.4 5.8-4.6-5.8zM180.9 396.7l-.8 7.1-.5 .8zM180.8 410.2l-1.1 .7 1.3-7.9zM549.1 446.5l7.8 .1-4.1 6.6zM552.8 453.2l4.1-6.6 3.7 6.6zM549.1 446.5l-3.9-6.6 7.9 0z"/>
<path fill="#ffd020" stroke="#ffd020" stroke-width="0.7" d="M379.1 623.2l8.2-.6-3.1 5.1zM399.8 639.7l-3 4.4-5.2-3.6zM391.6 640.5l-5.2-3.9 8.2-.7zM367 611.7l-9-.8 4-4.3zM329.6 587l4.7 6-8.7-1.7zM339.1 598.8l-8.7-1.5 3.9-4.3zM329.6 587l-4 4.3-5-6.2zM293.9 555.4l-4 4.4-4.1-7.1zM302.6 569.4l-4.4-6.9 8.4 2.5zM293.9 555.4l4.3 7.1-8.3-2.7zM302.6 569.4l8.6 2.5-4.1 4.4zM307.1 576.3l4.1-4.4 4.6 6.7zM366.9 627.5l3.1-4.8 6.1 5.4zM349 609.9l9 1-3.1 5.2zM358 610.9l5.9 6.1-9-.9zM360.9 622l3-5 6.1 5.7zM370 622.7l-6.1-5.7 9.1 .6zM541.1 433.2l-6.8 2.4 2.6-9zM532.5 419.9l-2.4 9.1-4.5-6.7zM488.4 385.2l-7.7 2.3 2.3-8.6zM508.7 411.1l-4.8-6.5 7.4-2.3zM498.8 398.1l-7.6 2.2 2.5-8.7zM488.4 385.2l5.3 6.4-7.7 2.3zM508.7 411.1l7.4-2.2-2.4 9zM521.1 415.7l-7.4 2.2 2.4-9zM387.3 276.9l6 3.7-9.4 2.1zM393.3 280.6l-3.4 5.8-6-3.7zM416.7 314.5l-9.3 1.8 3.3-6.5zM404.7 305.2l-6.1-4.4 9.4-1.8zM449.7 354l8.9-1.5-3.2 7.3zM452.9 346.8l-3.2 7.2-5.9-5.7zM441.1 335.6l-3.2 7.1-5.9-5.5zM437.9 342.7l9.1-1.6-3.2 7.2zM429.2 325l-3.1 6.9-6.3-5.3zM429.2 325l-9.4 1.6 3.2-6.9zM416.7 314.5l6.3 5.2-9.4 1.7zM472.9 389.9l-6.5-7.3 8.9-1.3zM464.4 358.4l-2.3 8.4-6.7-7zM468.8 374l-6.7-7.2 8.9-1.3zM277.8 549.7l-2.7-8.5 6.6 4.4zM226.8 493.7l-1.1-9.1 4.7 5zM244.6 495.1l-4 4.2-1.2-9zM236.8 503.5l-1.4-9 5.2 4.8zM230.4 489.6l5 4.9-3.7 4.2zM272.7 532.4l2.4 8.8-6.5-4.5zM259.9 523.3l6.3 4.6-4.1 4.3zM262.1 532.2l4.1-4.3 2.4 8.8zM247.9 513.6l-5.7-5 3.9-4.2zM236.8 503.5l3.8-4.2 1.6 9.3zM259.9 523.3l-2-9.1 6.2 4.8zM247.9 513.6l4-4.3 1.9 9.2zM182.1 419.2l-.8-4.5 2-3.4zM184.5 429.1l-1.3-5 2.3-3.3zM182.1 419.2l2.2-3.4-1.1 8.3zM188.2 439.1l.8-8.4 2.1 5zM184.5 429.1l1-8.3 1.6 4.9zM186.2 434.1l.9-8.4 1.9 5zM210.3 458l.3 9.3-4.4-5.9zM564.5 446.5l2 9.2-5.9-2.5zM568.3 464.8l4.1-6.6 1.6 9.1zM570.5 449l1.9 9.2-5.9-2.5zM351.7 215.3l7.3-2.7 .8 1.6zM350.9 213.8l7.4-2.6 .7 1.4zM364.1 206.7l-8 1.7 7.5-1.9zM364.1 206.7l.5 .5-8 1.5zM357.1 209.2l-.5-.5 8-1.5zM348.2 210.4l7.9-2-7.5 2.2zM365.1 207.9l-7.4 2.2-.6-.9zM341.8 213.5l7.9-1.9-7.4 2.7zM387.3 276.9l-8 0 6.5-5.7zM379.3 276.9l-1.6-5.6 8.1-.1zM384.3 265.8l-6.6 5.5-1.4-5.4zM365.3 256.1l6.7-5.2 1.4 4.8zM365.3 256.1l-1.3-4.7 8-.5zM362.7 246.9l8-.5-6.7 5zM372 250.9l-8 .5 6.7-5zM374.8 260.7l-8.1 .3 6.7-5.3zM355.5 225.1l-1-2.7 8.1-1zM353.6 220l8-1.2-7.1 3.6zM355.5 225.1l8-1-7 3.9zM355.5 225.1l1 2.9-8 1.1zM362.7 246.9l-1.4-4.4 8.1-.4zM359.9 238.4l8.1-.5-6.7 4.6zM353.6 220l-1-2.6 8.1-.8zM351.7 215.3l8.1-1.1-7.2 3.2zM363.3 206.6l7.8-1.6-7.5 1.5zM179 411.7l.6-7.1 .5-.8zM179 411.7l1.1-7.9-.4 7.1zM180.1 403.8l.9-.8-1.3 7.9zM182.1 389.6l.5-.8-1.7 7.9zM180.6 397.6l-1 7-.3 1.2zM180.6 397.6l-1.3 8.2 1.1-7.1zM564.5 446.5l-3.9 6.7-3.7-6.6zM549.1 446.5l4-6.6 3.8 6.7z"/>
<path fill="#ff9858" stroke="#ff9858" stroke-width="0.7" d="M361.9 648.2l2.7-3.4 5.2 3.8zM369.8 648.6l5.2 3.7-7.9-.3zM264.1 564.8l3.2-3.5 4.2 7.1zM297.9 598.1l3.2-3.5 5 6.1zM288.2 585.4l8 2.8-3.2 3.6zM279.1 571.7l-3.3 3.7-4.3-7zM288.2 585.4l-7.8-3.2 3.2-3.6zM314.4 603.1l-3.4 4.3-4.9-6.7zM355.5 643.7l2.8-3.5 6.3 4.6zM337.1 628.2l8.9 1.6-2.9 3.9zM349.3 638.9l-6.2-5.2 8.9 1.4zM349.3 638.9l2.7-3.8 6.3 5.1zM322.9 605.2l5.5 6.5-8.6-1.9zM337.1 628.2l-5.9-5.8 8.7 1.6zM325.5 616.2l-9-2.2 3.3-4.2zM319.8 609.8l-3.3 4.2-5.5-6.6zM234.1 529l5.5 5.1-3 3.4zM245.4 539l-3.1 3.5-2.7-8.4zM264.1 564.8l-3.3-8 6.5 4.5zM257.7 548.6l6.3 4.5-3.2 3.7zM245.4 539l2.8 8.4-5.9-4.9zM251.4 543.8l3 8.4-6.2-4.8zM178.2 442l.9 5-.8 3zM180.3 451.9l-1 3-.2-7.9zM188.2 471.7l-2.4-4.9 1.9-3.2zM183.7 461.9l1.7-3.2 .4 8.1zM183.7 461.9l-1.9-5 1.6-3.1zM222.4 519.1l3.6-3.7 2.1 8.7zM188.2 471.7l2.1-3.2 .8 9.4zM193.4 474.8l-2.3 3.1-.8-9.4zM194.4 484.1l-1-9.3 3.6 6zM202.3 496.1l-1.3-9.3 4.3 5.9zM200 477.3l4.1 6-3.1 3.5zM201 486.8l-2.8 3.4-1.2-9.4zM211.7 507.9l-1.7-9.4 5 5.8zM222.4 519.1l-5.5-5.5 3.4-3.7zM216.9 513.6l-1.9-9.3 5.3 5.6zM210 498.5l-3.2 3.5-1.5-9.3zM578.5 419.9l5.8 2.4-3.2 6.7zM397.4 204.9l-7.4 1.6-.7-1.3zM395.1 201.9l8-.5-7.5 .8zM397.4 204.9l-8.1 .3 7.5-1.5zM381.2 205.8l7.5-1.7 .6 1.1zM396.2 202.8l.6 .9-8.1 .4zM395.1 201.9l7.7-.6 .3 .1zM395.1 201.9l-.4-.1 8.1-.5zM411.9 248.9l-7.3 2.6-1.4-4.9zM413.3 253.9l-7.3 2.7-1.4-5.1zM393.8 216.1l-8.3-.5 7.4-2.1zM398.1 229.1l-8.5-1.2 7.4-2.4zM386.4 218.3l7.4-2.2 1.1 2.8zM388.5 224.5l7.4-2.4 1.1 3.4zM395.9 222.1l-8.5-.9 7.5-2.3zM399.4 233.1l1.2 4.3-8.6-1.6zM384.5 213.2l7.4-2.4 1 2.7zM178.2 442l.1 8-.8-6.8zM177.2 444.4l-.2-6.9 .2-1.1zM177.2 444.4l0-8 .3 6.8zM438 296.2l-6-4.8 7.3-2.6zM439.3 288.8l-7.3 2.6 1.2-7.2zM416.1 264.6l6.1 4-7.3 2.7zM474.4 328.2l5.8 5.8-7.6 2.1zM485.9 339.8l-7.6 2.2 1.9-8zM462.6 317.1l-7.6 2.3 1.6-7.7zM462.6 317.1l5.9 5.5-7.6 2.2zM474.4 328.2l-7.6 2.3 1.7-7.9zM438 296.2l7.6-2.5-1.2 7.5zM555.7 406.3l7.5 0-3.2 6.7zM563.2 406.3l4.2 6.7-7.4 0zM578.5 419.9l-7-.1 3.1-6.6zM571.5 419.8l-4.1-6.8 7.2 .2zM499.1 354.2l5.5 6.2-8.5 .8zM533.4 385.6l-8.1 .4 3.2-6.9zM520.3 379.6l3.1-7.1 5.1 6.6zM520.3 379.6l-5.1-6.5 8.2-.6zM509.9 366.7l8.3-.6-3 7zM546.4 392.4l4.7 6.9-7.8 .1zM546.4 392.4l-3.1 7-4.9-7zM485.9 339.8l6.7 7.1-8.6 1zM499.1 354.2l-8.5 .8 2-8.1z"/>
<path fill="#ffa44c" stroke="#ffa44c" stroke-width="0.7" d="M367.3 641.1l5.2 4-7.9-.3zM377.8 648.8l-8-.2 2.7-3.5zM279.1 571.7l3.4-3.7 4.4 6.9zM270.6 557.6l4.2 7.1-7.5-3.4zM279.1 571.7l-4.3-7 7.7 3.3zM304.4 590.8l-8.2-2.6 3.3-3.8zM299.5 584.4l-3.3 3.8-4.7-6.5zM314.4 603.1l-5.1-6 8.7 2.3zM367.3 641.1l-6.2-4.8 9.1 .8zM354.9 631.1l6.2 5.2-9.1-1.2zM367.3 641.1l-9-.9 2.8-3.9zM314.4 603.1l8.5 2.1-3.1 4.6zM342.8 619.6l-2.9 4.4-5.8-5.9zM354.9 631.1l-8.9-1.3 2.8-4.3zM339.9 624l8.9 1.5-2.8 4.3zM470.7 344.2l5.7 5.9-8.8 1.1zM435.4 311.6l6 5.1-9.1 1.5zM459.1 332.8l-3.1 6.9-5.9-5.6zM245.4 539l-2.6-8.5 5.9 4.9zM270.6 557.6l-3.3 3.7-3.3-8.2zM264.6 540.9l-3.6 3.9-2.7-8.5zM257.7 548.6l-6.3-4.8 3.4-3.6zM178.2 442l.2-8 .8 4.9zM192.8 465.3l-2.5 3.2-.3-8.1zM187.6 455.6l2.4 4.8-2.3 3.2zM187.6 455.6l-2.2 3.1 0-8zM185.4 450.7l0 8-2-4.9zM183.5 445.7l-.1 8.1-1.7-5zM185.7 442.4l2 4.9-2.3 3.4zM229.8 511.6l2 8.8-5.8-5zM192.8 465.3l3.4 6-2.8 3.5zM200 477.3l-3 3.5-.8-9.5zM208.6 489.1l-3.3 3.6-1.2-9.4zM226 515.4l-5.7-5.5 3.7-3.8zM208.6 489.1l4.8 5.8-3.4 3.6zM218.6 500.6l-3.6 3.7-1.6-9.4zM583.5 438.1l-5.7-2.5 3.3-6.6zM575.3 426.6l5.8 2.4-3.3 6.6zM583.5 438.1l-2.4-9.1 5.7 2.4zM381.2 205.8l8.1-.6-7.4 1.8zM395.1 201.9l-7.6 .9-.4-.2zM381.2 205.8l-.6-1 8.1-.7zM388.1 203.3l.6 .8-8.1 .7zM395.1 201.9l-8 .7 7.6-.8zM394.2 202.1l.5-.3-8.1 .9zM379.1 203.7l-.4 .2 7.9-1.2zM408.9 267.4l-8.7-2.6 7.2-2.9zM393.3 240.2l1.3 4.4-8.6-1.6zM398.7 259.5l7.3-2.9 1.4 5.3zM395.9 249.3l8.7 2.2-7.3 2.8zM398.7 259.5l-1.4-5.2 8.7 2.3zM369.7 218l-.9-2.4 8.3-.2zM386.4 218.3l-7.4 2.4-1-2.7zM384.5 213.2l1 2.4-8.4-.2zM386.4 218.3l-8.4-.3 7.5-2.4zM390.8 231.6l-7.3 2.9-1.2-3.8zM388.5 224.5l-7.4 2.6-1-3.3zM390.8 231.6l-8.5-.9 7.3-2.8zM381.1 227.1l8.5 .8-7.3 2.8zM379 220.7l8.4 .5-7.3 2.6zM390.8 231.6l1.2 4.2-8.5-1.3zM393.3 240.2l-8.6-1.5 7.3-2.9zM382.6 208.5l.9 2.1-8.3 .2zM384.5 213.2l-8.3 0 7.3-2.6zM178.2 442l-.6-6.8 .8-1.2zM177.5 428.4l-.3 8 0-6.9zM177.5 428.4l.1 6.8-.4 1.2zM177.2 430.7l.4-8.3-.4 7.1zM413.7 278.2l-6-4 7.2-2.9zM414.9 271.3l-7.2 2.9 1.2-6.8zM438 296.2l-1.2 7.6-6.1-4.8zM425.9 286.9l6.1 4.5-7.3 2.9zM424.7 294.3l7.3-2.9-1.3 7.6zM425.9 286.9l-7.2 2.9 1.1-7.3zM413.7 278.2l7.3-2.8-1.2 7.1zM482 356l-5.6-5.9 7.6-2.2zM470.7 344.2l7.6-2.2-1.9 8.1zM476.4 350.1l1.9-8.1 5.7 5.9zM459.1 332.8l7.7-2.3-1.9 8zM470.7 344.2l-5.8-5.7 7.7-2.4zM443.1 309l5.9 5.1-7.6 2.6zM459.1 332.8l-5.8-5.5 7.6-2.5zM453.3 327.3l1.7-7.9 5.9 5.4zM459.1 332.8l1.8-8 5.9 5.7zM568.1 426.5l3.4-6.7 3.8 6.8zM564.2 419.7l-7.6 0 3.4-6.7zM560 413l-3.4 6.7-4.3-6.7zM490.6 355l5.5 6.2-8.6 .9zM492.9 368.3l3.2-7.1 5.4 6.2zM520.3 379.6l-3.2 7-5.1-6.5zM517.1 386.6l8.2-.6-3.3 7.1zM539.9 406.4l3.4-7 4.6 6.9zM539.9 406.4l-4.8-6.9 8.2-.1zM482 356l2-8.1 6.6 7.1z"/>
<path fill="#ffa050" stroke="#ffa050" stroke-width="0.7" d="M364.6 644.8l7.9 .3-2.7 3.5zM377.8 648.8l-2.8 3.5-5.2-3.7zM279.1 571.7l-7.6-3.3 3.3-3.7zM267.3 561.3l7.5 3.4-3.3 3.7zM314.4 603.1l-8.3-2.4 3.2-3.6zM304.4 590.8l4.9 6.3-8.2-2.5zM304.4 590.8l-3.3 3.8-4.9-6.4zM279.1 571.7l7.8 3.2-3.3 3.7zM291.5 581.7l-7.9-3.1 3.3-3.7zM367.3 641.1l-2.7 3.7-6.3-4.6zM354.9 631.1l-2.9 4-6-5.3zM325.5 616.2l-5.7-6.4 8.6 1.9zM331.2 622.4l2.9-4.3 5.8 5.9zM325.5 616.2l2.9-4.5 5.7 6.4zM234.1 529l-2.3-8.6 5.4 5.1zM242.8 530.5l-3.2 3.6-2.4-8.6zM260.8 556.8l3.2-3.7 3.3 8.2zM245.4 539l3.3-3.6 2.7 8.4zM178.2 442l1-3.1-.1 8.1zM180.3 443.9l-1.2 3.1 .1-8.1zM190.3 468.5l-2.6-4.9 2.3-3.2zM187.6 455.6l.1 8-2.3-4.9zM192.8 465.3l.6 9.5-3.1-6.3zM196.2 471.3l.8 9.5-3.6-6zM200 477.3l1 9.5-4-6zM213.4 494.9l1.6 9.4-5-5.8zM218.6 500.6l1.7 9.3-5.3-5.6zM208.6 489.1l1.4 9.4-4.7-5.8zM382.6 208.5l-.7-1.5 8.1-.5zM390 206.5l-8.1 .5 7.4-1.8zM395.1 201.9l.5 .3-8.1 .6zM395.6 202.2l-7.5 1.1-.6-.5zM416.1 264.6l-7.2 2.8-1.5-5.5zM395.9 249.3l-1.3-4.7 8.6 2zM393.3 240.2l8.5 1.8-7.2 2.6zM404.6 251.5l1.4 5.1-8.7-2.3zM388.5 224.5l1.1 3.4-8.5-.8zM386.4 218.3l1 2.9-8.4-.5zM388.5 224.5l-8.4-.7 7.3-2.6zM382.6 208.5l8.3-.1-7.4 2.2zM177.2 430.7l0-1.2-.2 8zM177.2 429.5l0 6.9-.2 1.1zM416.1 264.6l-1.2 6.7-6-3.9zM438 296.2l-7.3 2.8 1.3-7.6zM413.7 278.2l1.2-6.9 6.1 4.1zM425.9 286.9l-6.1-4.4 7.3-2.8zM466.8 330.5l5.8 5.6-7.7 2.4zM450.7 306.5l-1.7 7.6-5.9-5.1zM436.8 303.8l7.6-2.6-1.3 7.8zM555.7 406.3l-3.4 6.7-4.4-6.7zM564.2 419.7l-4.2-6.7 7.4 0zM555.7 406.3l4.3 6.7-7.7 0zM492.9 368.3l8.6-.9-3.2 7.1zM509.9 366.7l-3.1 7-5.3-6.3zM520.3 379.6l5 6.4-8.2 .6zM530.2 392.6l-8.2 .5 3.3-7.1zM520.3 379.6l-8.3 .5 3.2-7zM506.8 373.7l8.4-.6-3.2 7zM539.9 406.4l-8.2 .1 3.4-7zM530.2 392.6l8.2-.2-3.3 7.1zM538.4 392.4l4.9 7-8.2 .1z"/>
<path fill="#ffbe32" stroke="#ffbe32" stroke-width="0.7" d="M373.1 632.8l5.1 4.2-8 .1zM383.4 641l-8 .2 2.8-4.2zM331.5 607l3.7-4 5 5.6zM321.7 595.4l8.7 1.9-3.9 4zM349 609.9l-5-5.4 9 1.2zM321.7 595.4l-5-6.1 8.9 2zM311.9 582.9l4.8 6.4-8.7-2.3zM286 564.1l-4.2-7.1 8.1 2.8zM290.4 571l3.8-4.1 4.4 6.8zM311.9 582.9l-8.6-2.4 3.8-4.2zM298.6 573.7l8.5 2.6-3.8 4.2zM360.9 622l-6-5.9 9 .9zM373.1 632.8l-9.1-.7 2.9-4.6zM360.9 622l6 5.5-9-.8zM354.9 616.1l-3.1 4.8-5.9-6zM360.9 622l-3 4.7-6.1-5.8zM477.6 372.7l2.2-8.4 5.5 6.2zM488.4 385.2l2.3-8.5 5.3 6.3zM490.7 376.7l-7.7 2.2 2.3-8.4zM523.3 406.7l-7.2 2.2 2.5-8.7zM513.7 393.7l4.9 6.5-7.3 2.1zM508.6 387.2l-2.3 8.6-5.1-6.4zM513.7 393.7l-2.4 8.6-5-6.5zM411.4 292.9l6 4.4-9.4 1.7zM417.4 297.3l-3.4 6.2-6-4.5zM423.4 301.9l-3.3 6.2-6.1-4.6zM464.4 358.4l-5.8-5.9 9-1.3zM452.9 346.8l8.9-1.4-3.2 7.1zM429.2 325l3.1-6.8 6 5.2zM426.1 331.9l9.1-1.7-3.2 7zM444.2 328.7l-9 1.5 3.1-6.8zM452.9 346.8l-5.9-5.7 9-1.4zM441.1 335.6l9-1.5-3.1 7zM456 339.7l-9 1.4 3.1-7zM464.4 358.4l8.8-1.2-2.2 8.3zM479.8 364.3l-8.8 1.2 2.2-8.3zM277.8 549.7l-3.7 4-3-8.3zM228.2 502.7l3.5-4 1.5 8.9zM252.2 531.6l3.7-4.1 2.4 8.8zM264.6 540.9l-6.3-4.6 3.8-4.1zM236.8 503.5l1.7 9.2-5.3-5.1zM252.2 531.6l-2.3-8.9 6 4.8zM259.9 523.3l-4 4.2-2.1-9zM178.9 426.1l.8-8 .6 4.5zM193.1 448.9l2.7 4.9-3 3.3zM188.2 439.1l-.5 8.2-2-4.9zM193.1 448.9l-3 3.3 .4-8.2zM180.3 422.6l.9 4.9-1.6 3.5zM184.5 429.1l-.6 8.3-1.5-4.9zM188.2 439.1l-2.5 3.3 .5-8.3zM183.9 437.4l2.3-3.3-.5 8.3zM226.8 493.7l1.4 9-5.7-5.5zM216.1 482.4l5.2 5.7-4.1 3.4zM198.8 458.7l3.8 6-3.4 3.4zM206.7 470.7l-3.5 3.3-.6-9.3zM216.1 482.4l-3.9 3.4-1-9.2zM574.2 442.4l-3.7 6.6-2.2-9.1zM576.2 451.5l-2-9.1 5.7 2.4zM368 213.5l-8.2 .7 7.4-2.5zM366.4 210.2l-8.1 1 7.5-2.3zM376.2 237.6l1.2 4.1-8 .4zM378.7 246.1l-8 .3 6.7-4.7zM378.7 246.1l1.4 4.5-8.1 .3zM368 213.5l.8 2.1-8.1 1zM369.7 218l-8.1 .8 7.2-3.2zM353.6 220l7.1-3.4 .9 2.2zM369.7 218l1 2.6-8.1 .8zM363.5 224.1l-.9-2.7 8.1-.8zM369.7 218l-7.1 3.4-1-2.6zM376.2 237.6l-8.2 .3 7-4.2zM368 237.9l-1.2-3.8 8.2-.4zM372.7 226.6l-7 3.9-1.1-3.3zM359.9 238.4l-1.1-3.7 8-.6zM373.8 230l-7 4.1-1.1-3.6zM371.7 223.5l-7.1 3.7-1.1-3.1zM376.2 237.6l-6.8 4.5-1.4-4.2zM365.1 207.9l8-1.2-7.3 2.2zM379.1 203.7l-7.6 1.3-.4 0zM364.6 207.2l7.4-1.9 .5 .5zM365.1 207.9l7.4-2.1 .6 .9zM379.1 203.7l-8 1.3 7.6-1.1zM385.8 271.2l7.2-3.3 1.5 5.6zM381.5 255.5l8.6 1.8-7.2 3.2zM384.3 265.8l-1.4-5.3 8.6 2zM384.3 265.8l7.2-3.3 1.5 5.4zM178.9 426.1l-.2-7.2 1-.8zM178.7 418.9l1-8 0 7.2zM179 411.7l-.3 7.2-.6 1.1zM179 411.7l-.9 8.3 .4-7.1zM399.3 284.5l-6-3.9 7.2-3.3zM394.5 273.5l6 3.8-7.2 3.3zM399.3 284.5l7.2-3.2-1.2 7.3zM541.1 433.2l8 0-3.9 6.7zM557 433.2l7.6 0-3.8 6.7zM568.3 439.9l-7.5 0 3.8-6.7zM564.5 446.5l-7.6 .1 3.9-6.7zM532.5 419.9l-4.5-6.6 8.3-.1zM532.5 419.9l3.8-6.7 4.4 6.6zM557 433.2l-7.9 0 3.8-6.7zM545 426.5l7.9 0-3.8 6.7z"/>
<path fill="#ffad43" stroke="#ffad43" stroke-width="0.7" d="M367.3 641.1l2.9-4 5.2 4.1zM377.8 648.8l2.8-3.8 5.2 3.6zM375.4 641.2l5.2 3.8-8.1 .1zM318 599.4l8.5 1.9-3.6 3.9zM294.9 577.8l-8-2.9 3.5-3.9zM286.9 574.9l-4.4-6.9 7.9 3zM286 564.1l-3.5 3.9-4.3-7.1zM304.4 590.8l-4.9-6.4 8.5 2.6zM304.4 590.8l3.6-3.8 5 6.3zM354.9 631.1l9.1 1-2.9 4.2zM370.2 637.1l-9.1-.8 2.9-4.2zM331.5 607l-3.1 4.7-5.5-6.5zM331.5 607l5.6 6.5-8.7-1.8zM354.9 631.1l-6.1-5.6 9.1 1.2zM482 356l5.5 6.1-7.7 2.2zM482 356l-8.8 1.2 3.2-7.1zM459.1 332.8l5.8 5.7-8.9 1.2zM470.7 344.2l-8.9 1.2 3.1-6.9zM459.1 332.8l-9 1.3 3.2-6.8zM447.4 321.9l5.9 5.4-9.1 1.4zM240.6 521.8l-3.4 3.7-2.1-8.7zM240.6 521.8l5.7 5-3.5 3.7zM270.6 557.6l-6.6-4.5 3.5-3.8zM264 553.1l-3-8.3 6.5 4.5zM252.2 531.6l2.6 8.6-6.1-4.8zM192.8 465.3l0-8.2 2.8 4.9zM180.6 435.9l-1.4 3 .4-7.9zM179.6 431l-.4 7.9-.8-4.9zM180.6 435.9l1.3 4.9-1.6 3.1zM192.8 465.3l-2.8-4.9 2.8-3.3zM187.6 455.6l2.5-3.4-.1 8.2zM183.5 445.7l2.2-3.3-.3 8.3zM187.6 455.6l-2.2-4.9 2.3-3.4zM229.8 511.6l-5.8-5.5 4.2-3.4zM218.6 500.6l3.9-3.4 1.5 8.9zM218.6 500.6l-5.2-5.7 3.8-3.4zM212.2 485.8l5 5.7-3.8 3.4zM192.8 465.3l2.8-3.3 .6 9.3zM195.6 462l3.6 6.1-3 3.2zM204.1 483.3l-.9-9.3 4.3 5.9zM200 477.3l-.8-9.2 4 5.9zM208.6 489.1l-1.1-9.2 4.7 5.9zM583.5 438.1l-3.6 6.7-2.1-9.2zM382.6 208.5l-7.4 2.3-.7-1.6zM366.4 210.2l-.6-1.3 8-1.1zM381.2 205.8l.7 1.2-8.1 .8zM373.8 207.8l8.1-.8-7.4 2.2zM380 204.1l-.5-.3 8-1zM381.2 205.8l-8.1 .9 7.5-1.9zM379.1 203.7l7.5-1 .5-.1zM398.7 259.5l1.5 5.3-8.7-2.3zM395.9 249.3l-7.2 3-1.4-4.8zM398.7 259.5l-8.6-2.2 7.2-3zM388.7 252.3l8.6 2-7.2 3zM376.2 213.2l.9 2.2-8.3 .2zM369.7 218l7.4-2.6 .9 2.6zM375 233.7l7.3-3 1.2 3.8zM380.1 223.8l1 3.3-8.4-.5zM373.8 230l7.3-2.9 1.2 3.6zM371.7 223.5l7.3-2.8 1.1 3.1zM376.2 237.6l7.3-3.1 1.2 4.2zM178.9 426.1l-.5 7.9-.4-6.8zM413.7 278.2l-1.2 7.2-6-4.1zM413.7 278.2l-7.2 3.1 1.2-7.1zM435.4 311.6l-6-4.9 7.4-2.9zM423.4 301.9l7.3-2.9-1.3 7.7zM418.7 289.8l6 4.5-7.3 3zM423.4 301.9l1.3-7.6 6 4.7zM548.7 419.7l-4.3-6.7 7.9 0zM539.9 406.4l4.5 6.6-8.1 .2zM571.9 433.2l-7.3 0 3.5-6.7zM564.6 433.2l-3.9-6.7 7.4 0zM503.5 380.8l-5.2-6.3 8.5-.8zM503.5 380.8l8.5-.7-3.4 7.1zM512 380.1l5.1 6.5-8.5 .6zM513.7 393.7l3.4-7.1 4.9 6.5zM526.8 399.6l8.3-.1-3.4 7z"/>
<path fill="#ffb739" stroke="#ffb739" stroke-width="0.7" d="M378.2 637l-2.8 4.2-5.2-4.1zM383.4 641l5.3 3.7-8.1 .3zM385.8 648.6l-5.2-3.6 8.1-.3zM383.4 641l-2.8 4-5.2-3.8zM383.4 641l-5.2-4 8.2-.4zM331.5 607l-5-5.7 8.7 1.7zM330.4 597.3l4.8 5.7-8.7-1.7zM277.8 549.7l4 7.3-7.7-3.3zM286 564.1l-7.8-3.2 3.6-3.9zM281.8 557l-3.6 3.9-4.1-7.2zM311.9 582.9l-3.9 4.1-4.7-6.5zM321.7 595.4l-8.7-2.1 3.7-4zM308 587l8.7 2.3-3.7 4zM286 564.1l8.2 2.8-3.8 4.1zM298.2 562.5l-4 4.4-4.3-7.1zM294.9 577.8l3.7-4.1 4.7 6.8zM373.1 632.8l-2.9 4.3-6.2-5zM331.5 607l8.7 1.6-3.1 4.9zM345.9 614.9l-8.8-1.4 3.1-4.9zM364 632.1l-6.1-5.4 9 .8zM342.8 619.6l3.1-4.7 5.9 6zM496 383l-5.3-6.3 7.6-2.2zM508.7 411.1l2.6-8.8 4.8 6.6zM503.5 380.8l5.1 6.4-7.4 2.2zM513.7 393.7l-7.4 2.1 2.3-8.6zM503.5 380.8l-2.3 8.6-5.2-6.4zM423.4 301.9l6 4.8-9.3 1.4zM426.1 313l-6-4.9 9.3-1.4zM423.4 301.9l-9.4 1.6 3.4-6.2zM464.4 358.4l3.2-7.2 5.6 6zM452.9 346.8l3.1-7.1 5.8 5.7zM458.6 352.5l3.2-7.1 5.8 5.8zM441.1 335.6l3.1-6.9 5.9 5.4zM452.9 346.8l-9.1 1.5 3.2-7.2zM435.4 311.6l-3.1 6.6-6.2-5.2zM264.6 540.9l6.5 4.5-3.6 3.9zM274.1 553.7l-6.6-4.4 3.6-3.9zM233.2 507.6l5.3 5.1-3.4 4.1zM252.2 531.6l-5.9-4.8 3.6-4.1zM240.6 521.8l3.5-4 2.2 9zM240.6 521.8l-2.1-9.1 5.6 5.1zM198.8 458.7l-3.2 3.3 .2-8.2zM192.8 457.1l3-3.3-.2 8.2zM198.8 458.7l.3-8.2 3.2 4.9zM193.1 448.9l-.3 8.2-2.7-4.9zM187.7 447.3l2.8-3.3-.4 8.2zM178.9 426.1l1.4-3.5-.7 8.4zM180.6 435.9l-1-4.9 1.6-3.5zM181.9 440.8l.5-8.3 1.5 4.9zM180.6 435.9l.6-8.4 1.2 5zM216.1 482.4l1.1 9.1-5-5.7zM198.8 458.7l.4 9.4-3.6-6.1zM202.6 464.7l.6 9.3-4-5.9zM206.7 470.7l4.5 5.9-3.7 3.3zM207.5 479.9l3.7-3.3 1 9.2zM211.2 476.6l-.6-9.3 4.7 5.9zM571.9 433.2l2.3 9.2-5.9-2.5zM371.7 223.5l-8.2 .6 7.2-3.5zM373.8 230l1.2 3.7-8.2 .4zM371.7 223.5l1 3.1-8.1 .6zM373.8 230l-8.1 .5 7-3.9zM368 213.5l-.8-1.8 8-.9zM366.4 210.2l8.1-1-7.3 2.5zM373.1 206.7l.7 1.1-8 1.1zM366.4 210.2l7.4-2.4 .7 1.4zM380 204.1l-7.5 1.7-.5-.5zM379.1 203.7l.4 .1-8 1.2zM379.5 203.8l-7.5 1.5-.5-.3zM401.7 270.4l-7.2 3.1-1.5-5.6zM390.1 257.3l1.4 5.2-8.6-2zM381.5 255.5l-1.4-4.9 8.6 1.7zM378.7 246.1l8.6 1.4-7.2 3.1zM381.5 255.5l7.2-3.2 1.4 5zM178.9 426.1l-.9 1.1 .7-8.3zM178 427.2l.1-7.2 .6-1.1zM179 411.7l-.5 1.2 1.1-8.3zM178.3 414.1l.2-1.2-.8 8.3zM177.7 421.2l.8-8.3-.4 7.1zM401.7 270.4l-1.2 6.9-6-3.8zM399.3 284.5l1.2-7.2 6 4zM523.3 406.7l8.4-.2-3.7 6.8zM531.7 406.5l4.6 6.7-8.3 .1zM548.7 419.7l-3.7 6.8-4.3-6.7zM544.4 413l-3.7 6.8-4.4-6.6zM548.7 419.7l4.2 6.8-7.9 0zM557 433.2l-4.1-6.7 7.8 0zM523.3 406.7l-4.7-6.5 8.2-.6z"/>
<path fill="#ffa848" stroke="#ffa848" stroke-width="0.7" d="M367.3 641.1l8.1 .1-2.9 3.9zM377.8 648.8l-5.3-3.7 8.1-.1zM314.4 603.1l3.6-3.7 4.9 5.8zM270.6 557.6l7.6 3.3-3.4 3.8zM282.5 568l-7.7-3.3 3.4-3.8zM294.9 577.8l4.6 6.6-8-2.7zM294.9 577.8l-3.4 3.9-4.6-6.8zM304.4 590.8l8.6 2.5-3.7 3.8zM309.3 597.1l3.7-3.8 5 6.1zM342.8 619.6l-8.7-1.5 3-4.6zM342.8 619.6l6 5.9-8.9-1.5zM441.4 316.7l-3.1 6.7-6-5.2zM229.8 511.6l5.3 5.2-3.3 3.6zM235.1 516.8l2.1 8.7-5.4-5.1zM248.7 535.4l-5.9-4.9 3.5-3.7zM240.6 521.8l2.2 8.7-5.6-5zM257.7 548.6l-2.9-8.4 6.2 4.6zM257.7 548.6l3.3-3.8 3 8.3zM254.8 540.2l-3.4 3.6-2.7-8.4zM229.8 511.6l3.4-4 1.9 9.2zM183.5 445.7l-1.8 3.1 .2-8zM181.7 448.8l-1.4-4.9 1.6-3.1zM180.6 435.9l-.3 8-1.1-5zM183.5 445.7l1.9 5-2 3.1zM208.6 489.1l3.6-3.3 1.2 9.1zM200 477.3l-3.8-6 3-3.2zM208.6 489.1l-4.5-5.8 3.4-3.4zM200 477.3l3.2-3.3 .9 9.3zM229.8 511.6l-3.8 3.8-2-9.3zM571.9 433.2l3.4-6.6 2.5 9zM382.6 208.5l-8.1 .7 7.4-2.2zM387.5 202.8l-8 1 7.6-1.2zM380 204.1l7.5-1.3 .6 .5zM380 204.1l8.1-.8-7.5 1.5zM387.1 202.6l-.5 .1 8.1-.9zM401.7 270.4l-1.5-5.6 8.7 2.6zM398.7 259.5l8.7 2.4-7.2 2.9zM393.3 240.2l-7.3 2.8-1.3-4.3zM395.9 249.3l-8.6-1.8 7.3-2.9zM394.6 244.6l-7.3 2.9-1.3-4.5zM395.9 249.3l1.4 5-8.6-2zM384.5 213.2l-7.4 2.2-.9-2.2zM370.7 220.6l7.3-2.6 1 2.7zM385.5 215.6l-7.5 2.4-.9-2.6zM383.5 234.5l8.5 1.3-7.3 2.9zM375.2 210.8l8.3-.2-7.3 2.6zM177.5 428.4l.5-1.2-.4 8zM177.5 428.4l-.3 1.1 .5-8.3zM177.6 422.4l.1-1.2-.5 8.3zM401.7 270.4l7.2-3-1.2 6.8zM411.4 292.9l-6.1-4.3 7.2-3.2zM429.4 306.7l1.3-7.7 6.1 4.8zM425.9 286.9l-1.2 7.4-6-4.5zM413.7 278.2l6.1 4.3-7.3 2.9zM412.5 285.4l7.3-2.9-1.1 7.3zM435.4 311.6l7.7-2.6-1.7 7.7zM447.4 321.9l-6-5.2 7.6-2.6zM447.4 321.9l7.6-2.5-1.7 7.9zM435.4 311.6l1.4-7.8 6.3 5.2zM539.9 406.4l8-.1-3.5 6.7zM552.3 413l-7.9 0 3.5-6.7zM571.9 433.2l-3.8-6.7 7.2 .1zM557 433.2l3.7-6.7 3.9 6.7zM564.2 419.7l3.9 6.8-7.4 0zM564.2 419.7l-3.5 6.8-4.1-6.8zM482 356l8.6-1-3.1 7.1zM492.9 368.3l-5.4-6.2 8.6-.9zM498.3 374.5l3.2-7.1 5.3 6.3zM530.2 392.6l-3.4 7-4.8-6.5zM503.5 380.8l3.3-7.1 5.2 6.4zM530.2 392.6l4.9 6.9-8.3 .1z"/>
<path fill="#ffc42c" stroke="#ffc42c" stroke-width="0.7" d="M393.9 648.2l-5.2-3.5 8.1-.6zM383.4 641l8.2-.5-2.9 4.2zM373.1 632.8l8.1-.3-3 4.5zM321.7 595.4l3.9-4.1 4.8 6zM339.1 598.8l4.9 5.7-8.8-1.5zM340.2 608.6l-5-5.6 8.8 1.5zM311.9 582.9l8.7 2.2-3.9 4.2zM277.8 549.7l8 3-4 4.3zM285.8 552.7l4.1 7.1-8.1-2.8zM286 564.1l3.9-4.3 4.3 7.1zM302.6 569.4l4.5 6.9-8.5-2.6zM349 609.9l-3.1 5-5.7-6.3zM349 609.9l5.9 6.2-9-1.2zM360.9 622l-9.1-1.1 3.1-4.8zM523.3 406.7l4.7 6.6-6.9 2.4zM477.6 372.7l5.4 6.2-7.7 2.4zM475.3 381.3l7.7-2.4-2.3 8.6zM488.4 385.2l-5.4-6.3 7.7-2.2zM516.1 408.9l-4.8-6.6 7.3-2.1zM498.8 398.1l2.4-8.7 5.1 6.4zM488.4 385.2l7.6-2.2-2.3 8.6zM501.2 389.4l-7.5 2.2 2.3-8.6zM523.3 406.7l-2.2 9-5-6.8zM411.4 292.9l-9.5 1.7 3.4-6zM392.5 296.5l3.4-6.1 6 4.2zM399.3 284.5l6 4.1-9.4 1.8zM416.7 314.5l3.4-6.4 6 4.9zM410.7 309.8l3.3-6.3 6.1 4.6zM411.4 292.9l-3.4 6.1-6.1-4.4zM441.1 335.6l-5.9-5.4 9-1.5zM429.2 325l9.1-1.6-3.1 6.8zM446.4 361.2l-5.8-5.7 9.1-1.5zM432.3 318.2l-9.3 1.5 3.1-6.7zM477.6 372.7l-6.6-7.2 8.8-1.2zM477.6 372.7l-2.3 8.6-6.5-7.3zM226.8 493.7l4.9 5-3.5 4zM264.6 540.9l4-4.2 2.5 8.7zM255.9 527.5l6.2 4.7-3.8 4.1zM264.6 540.9l-2.5-8.7 6.5 4.5zM247.9 513.6l2 9.1-5.8-4.9zM236.8 503.5l5.4 5.1-3.7 4.1zM242.2 508.6l1.9 9.2-5.6-5.1zM193.1 448.9l3.1-3.4-.4 8.3zM198.8 458.7l-3-4.9 3.3-3.3zM182.1 419.2l-.9 8.3-.9-4.9zM184.5 429.1l-2.1 3.4 .8-8.4zM183.2 424.1l-.8 8.4-1.2-5zM184.5 429.1l1.7 5-2.3 3.3zM206.7 470.7l-4.1-6 3.6-3.3zM198.8 458.7l3.5-3.3 .3 9.3zM216.1 482.4l-4.9-5.8 4.1-3.4zM206.7 470.7l3.9-3.4 .6 9.3zM576.2 451.5l-5.7-2.5 3.7-6.6zM564.5 446.5l3.8-6.6 2.2 9.1zM366.4 210.2l.8 1.5-8.2 .9zM359.8 214.2l-.8-1.6 8.2-.9zM381.5 255.5l1.4 5-8.1 .2zM377.4 241.7l-6.7 4.7-1.3-4.3zM381.5 255.5l-8.1 .2 6.7-5.1zM373.4 255.7l-1.4-4.8 8.1-.3zM378.7 246.1l-6.7 4.8-1.3-4.5zM368.8 215.6l-7.2 3.2-.9-2.2zM368 213.5l-7.3 3.1-.9-2.4zM365.1 207.9l-.5-.7 7.9-1.4zM364.1 206.7l7.9-1.4-7.4 1.9zM364.1 206.7l7.4-1.7 .5 .3zM370.7 205.3l8-1.4-7.6 1.1zM387.3 276.9l-1.5-5.7 8.7 2.3zM384.3 265.8l8.7 2.1-7.2 3.3zM179 411.7l.7-.8-1 8zM178.3 414.1l1-8.3-.8 7.1zM178.3 414.1l1-7.1 0-1.2zM387.3 276.9l7.2-3.4-1.2 7.1zM557 433.2l-3.9 6.7-4-6.7zM564.5 446.5l-3.7-6.6 7.5 0zM557 433.2l3.8 6.7-7.7 0zM532.5 419.9l8.2-.1-3.8 6.8zM536.9 426.6l3.8-6.8 4.3 6.7z"/>
<path fill="#ff945c" stroke="#ff945c" stroke-width="0.7" d="M361.9 648.2l7.9 .4-2.7 3.4zM288.2 585.4l4.8 6.4-7.9-2.9zM297.9 598.1l-4.9-6.3 8.1 2.8zM293 591.8l3.2-3.6 4.9 6.4zM264.1 564.8l7.4 3.6-3.1 3.5zM271.5 568.4l4.3 7-7.4-3.5zM283.6 578.6l-3.2 3.6-4.6-6.8zM311 607.4l-8.2-2.4 3.3-4.3zM361.9 648.2l-6.4-4.5 9.1 1.1zM349.3 638.9l9 1.3-2.8 3.5zM337.1 628.2l-9-1.9 3.1-3.9zM325.5 616.2l5.7 6.2-9-2.1zM325.5 616.2l-3.3 4.1-5.7-6.3zM236.6 537.5l3-3.4 2.7 8.4zM264.1 564.8l-6.5-4.5 3.2-3.5zM257.6 560.3l-3.2-8.1 6.4 4.6zM251.3 555.7l-3.1-8.3 6.2 4.8zM178.3 450l.8-3 .2 7.9zM180.3 451.9l.3 8-1.3-5zM180.3 451.9l1.5 5-1.2 3zM183.7 461.9l-1.5 3-.4-8zM234.1 529l-6-4.9 3.7-3.7zM234.1 529l2.5 8.5-6.1-4.7zM234.1 529l-3.6 3.8-2.4-8.7zM194.4 484.1l-3.3-6.2 2.3-3.1zM205.3 492.7l-4.3-5.9 3.1-3.5zM202.3 496.1l-4.1-5.9 2.8-3.4zM194.4 484.1l2.6-3.3 1.2 9.4zM211.7 507.9l3.3-3.6 1.9 9.3zM211.7 507.9l-4.9-5.9 3.2-3.5zM202.3 496.1l3-3.4 1.5 9.3zM578.5 419.9l3-6.6 2.8 9zM396.2 202.8l-.6-.6 8.1-.3zM410.5 201.1l-7.7 .2-.4 .2zM410.5 244.1l-7.3 2.5-1.4-4.6zM416.1 264.6l-1.4-5.4 8.6 2.9zM410.5 244.1l1.4 4.8-8.7-2.3zM413.3 253.9l-8.7-2.4 7.3-2.6zM390.8 231.6l7.3-2.5 1.3 4zM401.8 242l-1.2-4.6 8.6 2zM397.4 204.9l1 1.7-8.4-.1zM398.4 206.6l-7.5 1.8-.9-1.9zM392.9 213.5l-1-2.7 8.4 .5zM399.3 208.7l-7.4 2.1-1-2.4zM177.2 444.4l.3-1.2 .2 8zM177.7 451.2l-.2-8 .8 6.8zM178.2 442l-.7 1.2 .1-8zM177.2 430.7l-.2 6.8 .1 1.3zM177.2 444.4l-.1 1.2-.1-8.1zM177 437.5l.1 8.1 0-6.8zM416.1 264.6l7.2-2.5-1.1 6.5zM428.3 272.7l-7.3 2.7 1.2-6.8zM428.3 272.7l6.1 4.4-7.3 2.6zM433.2 284.2l-6.1-4.5 7.3-2.6zM428.3 272.7l-1.2 7-6.1-4.3zM470.7 344.2l1.9-8.1 5.7 5.9zM462.6 317.1l-6-5.4 7.6-2.3zM450.7 306.5l7.5-2.3-1.6 7.5zM438 296.2l1.3-7.4 6.3 4.9zM450.7 306.5l-6.3-5.3 7.6-2.3zM445.6 293.7l6.4 5.2-7.6 2.3zM564.2 419.7l7.3 .1-3.4 6.7zM570.5 406.4l-3.1 6.6-4.2-6.7zM570.5 406.4l4.1 6.8-7.2-.2zM509.9 366.7l-5.3-6.3 8.3-.7zM499.1 354.2l8.4-.7-2.9 6.9zM536.5 378.6l-3.1 7-4.9-6.5zM523.4 372.5l-8.2 .6 3-7zM546.4 392.4l-8 0 3.1-6.9zM530.2 392.6l3.2-7 5 6.8zM541.5 385.5l-3.1 6.9-5-6.8zM555.7 406.3l3.2-7 4.3 7zM555.7 406.3l-4.6-7 7.8 0z"/>
<path fill="#1104e2" stroke="#1104e2" stroke-width="0.7" d="M239.8 599l5.5 6-5.3-5.4zM262.6 620.9l6 4.7 .3 .5zM245.1 604.4l5.7 5.9-5.5-5.3zM262.6 620.9l-5.9-4.9-.2-.6zM256.5 615.4l.2 .6-5.9-5.7zM286.2 638.3l-6.2-4.3 1.6 1.3zM239.8 599l.2 .6-5.3-6zM547.4 241.7l1.6 1.3-6.2-4.3zM524.9 242.5l6.3 4.9-5.9-1.1zM525.3 246.3l5.9 1.1 .2 3.9zM524.9 242.5l-6.4-4.7 6 1.3zM544.2 240.2l-6.6-4.4 5.2 2.9zM533.6 234.9l-1.3-1.8 6.7 4.3zM539 237.4l-6.7-4.3 5.3 2.7zM523.8 236l-.7-2.8 6.6 4.4zM590.7 306.5l5.5 7.6-5-2.4zM580.2 302l-5.6-1.9-.6-5.5zM574.6 300.1l-6.3-7.3 5.7 1.8z"/>
<path fill="#0700cd" stroke="#0700cd" stroke-width="0.7" d="M251.1 610.8l-5.5-5.3-.3-.5zM240.4 599.9l-.4-.3 5.6 5.9zM251.1 610.8l5.6 5.2 .4 .3zM257.1 616.3l-.4-.3 6.2 5.3zM240.4 599.9l-5.4-5.9 5 5.6zM553.6 246.1l6.1 4.5-4.6-3.1zM544.2 240.2l4.8 2.8 1.4 1.6zM536.6 245.4l-5.8-1.6-.5-3.3zM537.3 252.6l-6.1-5.2 5.8 1.4zM531.2 247.4l-.4-3.6 6.2 5zM529.7 237.6l6.4 4.7-5.8-1.8zM544.2 240.2l1.3 1.8-6.5-4.6zM540.1 261.5l-7.2-5.7 5.9 1.1zM590.7 306.5l-.7-5.3 5.6 7.8zM579.6 296.7l5.3 2.2 .7 5.3zM567.6 287.4l5.7 1.9 .7 5.3z"/>
<path fill="#0901d2" stroke="#0901d2" stroke-width="0.7" d="M245.3 605l.3 .5-5.6-5.9zM262.9 621.3l6 4.8 .4 .3zM229.9 587.9l5.1 6.1-4.6-5.8zM559.7 250.6l.4 .3 6 4.8zM553.6 246.1l1.5 1.4-6.1-4.5zM533.6 234.9l5.4 2.5 1.2 2zM535.5 239.5l-5.8-1.9-.7-2.6zM535.5 239.5l-6.5-4.5 5.6 2.1zM590.7 306.5l4.9 2.5 .6 5.1zM540.1 261.5l5.9 1.3 1.2 4.7zM537.3 252.6l1.5 4.3-7.4-5.6zM540.1 261.5l-1.3-4.6 7.2 5.9zM590.7 306.5l-5.1-2.3-.7-5.3zM554.1 273.8l6.9 6.7-6-1.6zM567.6 287.4l-5.8-1.7-.8-5.2z"/>
<path fill="#0000b0" stroke="#0000b0" stroke-width="0.7" d="M251.1 610.8l6 5.5-5.5-5.2zM556.4 249.3l-1.3-1.8 6 4.8zM556.4 249.3l-4.8-2.7-1.2-2zM536.6 245.4l5.8 1.8 .3 3.2zM536.1 242.3l5.8 2 .5 2.9zM546.6 244.1l-6.4-4.7 5.3 2.6zM589 296.2l4.8 2.8 1 4.8zM551.7 264.3l-7.1-6 5.7 1.6zM550.3 259.9l-5.7-1.6-1.5-4.3zM589 296.2l1 5-6-7.5zM551.7 264.3l7.2 6.4-5.9-1.7zM565.7 277.3l1.1 5-6.8-6.8z"/>
<path fill="#0300bc" stroke="#0300bc" stroke-width="0.7" d="M240.4 599.9l5.2 5.6 .6 .2zM561.1 252.3l-6-4.8 4.6 3.1zM536.6 245.4l6.1 5-5.7-1.6zM535.5 239.5l6.4 4.8-5.8-2zM546.6 244.1l-5.5-2.4-.9-2.3zM533.6 234.9l6.6 4.5-5.6-2.3zM537.3 252.6l5.8 1.4 1.5 4.3zM551.7 264.3l1.3 4.7-7-6.2zM551.7 264.3l-5.7-1.5-1.4-4.5zM584.9 298.9l-.9-5.2 6 7.5z"/>
<path fill="#0400c1" stroke="#0400c1" stroke-width="0.7" d="M251.1 610.8l.5 .3-6-5.6zM263.5 621.5l-6.4-5.2 5.8 5zM240.4 599.9l-4.8-5.6-.6-.3zM537.3 252.6l-.3-3.8 6.1 5.2zM540.2 239.4l-1.2-2 6.5 4.6zM535.5 239.5l-.9-2.4 6.5 4.6zM578.8 291.5l6.1 7.4-5.3-2.2zM590.7 306.5l-5.8-7.6 5.1 2.3zM554.1 273.8l-1.1-4.8 7 6.5zM578.8 291.5l.8 5.2-6.3-7.4zM574 294.6l-.7-5.3 6.3 7.4zM560 275.5l6.8 6.8-5.8-1.8zM567.6 287.4l-.8-5.1 6.5 7z"/>
<path fill="#0100b6" stroke="#0100b6" stroke-width="0.7" d="M245.6 605.5l6 5.6-5.4-5.4zM545.5 242l4.9 2.6 1.2 2zM556.4 249.3l-6-4.7 4.7 2.9zM543.1 254l-6.1-5.2 5.7 1.6zM535.5 239.5l5.6 2.2 .8 2.6zM536.6 245.4l-.5-3.1 6.3 4.9zM537.3 252.6l7.3 5.7-5.8-1.4zM589 296.2l5.8 7.6-4.8-2.6zM553 269l5.9 1.7 1.1 4.8zM578.8 291.5l-5.5-2.2-.9-5zM566.8 282.3l5.6 2 .9 5z"/>
<path fill="#6702fe" stroke="#6702fe" stroke-width="0.7" d="M241 594.8l4.9 6.6-5.5-5.3zM301.1 647l.1-.5 6.7 3.9zM246.7 599.9l5.1 6.5-5.9-5zM263.4 617.3l-5.5-6.1 6.3 4.6zM275.3 628.6l.6-1.2 6.1 5.4zM203.6 547.2l3.9 7.3-3.7-6.3zM203.8 548.2l3.7 6.3 .3 1zM211.6 561.7l-4.1-7.2 3.9 6.2zM230 584.7l-5.1-5.4 .4-1.3zM220.3 572.5l5 5.5-.4 1.3zM500 243.9l6.5 .2 0 4.5zM496.7 220.3l-1-2 7 3.2zM495.7 218.3l5.9 1.4 1.1 1.8zM517.4 224.5l-7-3.3 5.5 2.6zM517.4 224.5l-5.5-2.4-1.5-.9zM498.3 225.5l-8.2-3.9 7.5 1.1zM499.4 231.9l-8-4.1 7.5 .7zM498.3 225.5l.6 3-8.1-4zM591.3 328.2l-.4 5.8-5.1-7.8zM601.4 338.5l-5.1-2.4 .3-5.6zM515.2 258.6l-7.5-5.2 6.4 .3zM506.5 248.6l7.6 5.1-6.4-.3zM515.2 258.6l7.3 5.5-7.6-.3zM522.2 269.4l-7.3-5.6 7.6 .3zM542.4 293.8l.7-6 6.5 6.6zM528.9 281.1l.5-5.8 6.9 6.1zM542.4 293.8l-6.7-6.5 7.4 .5zM535.7 287.3l.6-5.9 6.8 6.4zM556.3 301.6l-7.2-.7 .5-6.5z"/>
<path fill="#5103ff" stroke="#5103ff" stroke-width="0.7" d="M251.2 607.7l-5.7-5.1 .4-1.2zM251.2 607.7l6 4.9-.5 1.1zM256.7 613.7l.5-1.1 5.7 5.9zM288.4 637.8l-6.8-4.1 .4-.9zM275.3 628.6l-6.5-4.5 .5-1zM262.9 618.5l6.4 4.6-.5 1zM211.6 561.7l.2 .6-4-6.8zM239.9 597.3l-5.1-6.2 5.6 5zM230 584.7l4.8 6.4-5.2-5.3zM230 584.7l.5-1.4 4.8 6.6zM512.9 249l-6.4-4.9 6.4 .5zM506.4 240l6.5 4.6-6.4-.5zM503.7 223.8l.8 2.6-6.9-3.7zM498.9 228.5l6.2 .8 .6 3.2zM498.3 225.5l6.2 .9 .6 2.9zM499.4 231.9l6.3 .6 .4 3.6zM517.4 224.5l5.3 2.6 1.5 .8zM513.2 223.2l-1.3-1.1 6.9 3.4zM568.8 309.4l6 1.6-.2 5.7zM574.6 316.7l.2-5.7 5.6 7.5zM591.3 328.2l.2-5.6 5.1 7.9zM543.6 282l-.5 5.8-6.8-6.4zM556.6 295.3l6.3 6.9-6.6-.6z"/>
<path fill="#4a04ff" stroke="#4a04ff" stroke-width="0.7" d="M239.9 597.3l.5-1.2 5.1 6.5zM245.9 601.4l-.4 1.2-5.1-6.5zM288.1 638.6l6.4 4.3-6.6-3.8zM301.1 647l-6.7-3.7 .1-.4zM275.3 628.6l-.3 .8-6.2-5.3zM275.3 628.6l6.3 5.1-6.6-4.3zM288.1 638.6l-6.8-4.1 .3-.8zM220.1 573.6l0 .9-4.4-6.7zM211.6 561.7l4.1 6.1 .1 .7zM220.1 573.6l4.8 5.7-.2 .9zM224.9 579.3l4.7 6.5-4.9-5.6zM512.7 240.6l-6.3-.6-.3-3.9zM517.4 224.5l6.8 3.4-5.4-2.4zM527.9 230l1.5 .7-6.7-3.6zM508.6 223l-1.1-1.7 6.8 3.5zM514.3 224.8l-6.8-3.5 5.7 1.9zM502.7 221.5l6.9 3.6-5.9-1.3zM601.6 332.8l-5-2.3 .1-5.7zM591.3 328.2l-5.2-7.8 5.4 2.2zM529.7 269.8l-7.2-5.7 6.4 .5zM515.2 258.6l6.4 .4 .9 5.1zM522.5 264.1l-.9-5.1 7.3 5.6zM512.9 249l7.6 5.1-6.4-.4zM520.5 254.1l1.1 4.9-7.5-5.3zM556.6 295.3l-7-.9 .6-5.9zM543.6 282l6.6 6.5-7.1-.7zM529.7 269.8l7.1 6-7.4-.5zM543.6 282l-7.3-.6 .5-5.6z"/>
<path fill="#3508fe" stroke="#3508fe" stroke-width="0.7" d="M262.5 619.5l-6-4.8 .2-1zM256.5 614.7l-5.6-5.9 5.8 4.9zM250.9 608.8l-5.7-5.2 .3-1zM287.9 639.4l0-.3 6.5 4.2zM262.5 619.5l6.3 4.6-.3 .8zM268.8 624.1l6.2 5.3-6.5-4.5zM274.7 630.1l.3-.7 6.3 5.1zM207.8 555.5l4 6.8-3.6-6.4zM220.2 575.1l-4.4-6.6 4.3 6zM215.8 568.5l.3 .5-4.3-6.7zM239.9 597.3l-.2 .9-5.1-6.1zM229.5 586.7l.1-.9 5 6.3zM220.1 573.6l4.6 6.6-4.6-5.7zM541.1 237.6l-6.5-3.9 6.5 4.2zM512.7 240.6l6.4 4.7-6.2-.7zM519.2 249.5l-6.3-4.9 6.2 .7zM511.8 233.4l-6.7-4.1 6.2 1.1zM511.8 233.4l.5 3.4-6.6-4.3zM520 226.8l-1.2-1.3 6.7 3.6zM530.8 231.6l-6.6-3.7 5.2 2.8zM508.6 223l1 2.1-6.9-3.6zM568.8 309.4l-5.9-7.2 6 1.5zM580.5 312.8l-5.7-1.8 0-5.5zM574.8 305.5l0 5.5-5.9-7.3zM596.7 324.8l-.1-5.4 5 7.9zM591.5 317.1l5.2 7.7-5.2-2.2zM536.1 270.5l6.9 6.1-6.2-.8zM556.6 295.3l-.3-5.7 6.5 7.1z"/>
<path fill="#2a08f8" stroke="#2a08f8" stroke-width="0.7" d="M250.7 609.6l.2-.8 5.6 5.9zM250.7 609.6l-5.5-6 5.7 5.2zM262.5 619.5l6 5.4-6.1-4.6zM287.9 639.4l-6.7-4.5 6.7 4.2zM274.7 630.1l6.6 4.4-.1 .4zM287.9 639.4l6.5 3.9-1.4-.8zM229.5 586.7l5.1 5.4-.1 .8zM234.5 592.9l.1-.8 5.1 6.1zM224.7 580.2l0 .8-4.6-6.5zM525.4 250.3l-6.2-.8-.1-4.2zM511.8 233.4l-.5-3 6.6 4.2zM510.5 227.6l6.7 4.1-5.9-1.3zM512.7 240.6l6.2 .8 .2 3.9zM511.8 233.4l6.7 4.4-6.2-1zM541.1 237.6l-5.1-3.1-1.4-.8zM530.8 231.6l-1.4-.9 6.6 3.8zM521.2 228.6l-5.7-1.9-1.2-1.9zM510.5 227.6l5.9 1.4 .8 2.7zM520 226.8l5.5 2.3 1.4 1.6zM562.8 296.7l6.1 7-6-1.5zM580.5 312.8l-5.7-7.3 5.7 1.9zM568.8 298.3l6 7.2-5.9-1.8zM580.5 312.8l0-5.4 5.6 7.5zM591.5 317.1l0 5.5-5.4-7.7zM542.2 271.4l.8 5.2-6.9-6.1zM556.3 289.6l6.1 1.5 .4 5.6z"/>
<path fill="#2f08fb" stroke="#2f08fb" stroke-width="0.7" d="M251.2 607.7l5.5 6-5.8-4.9zM239.9 597.3l5.3 6.3-5.5-5.4zM281.2 634.9l.1-.4 6.6 4.6zM274.7 630.1l-6.2-5.2 6.5 4.5zM220.2 575.1l-4.1-6.1-.3-.5zM212.3 562.7l-.5-.4 4.3 6.7zM234.6 592.1l-5-6.3 5.2 5.3zM229.5 586.7l-4.8-5.7 0-.8zM220.2 575.1l-.1-.6 4.6 6.5zM512.7 240.6l-.4-3.8 6.6 4.6zM530.8 231.6l-5.3-2.5-1.3-1.2zM520 226.8l1.2 1.8-6.9-3.8zM510.5 227.6l-.9-2.5 6.8 3.9zM515.5 226.7l.9 2.3-6.8-3.9zM568.8 298.3l.1 5.4-6.1-7zM591.5 317.1l5.1 2.3 .1 5.4zM527.9 259.6l-7.4-5.5 6.2 .7zM526.7 254.8l-6.2-.7-1.3-4.6zM550.2 288.5l-.5-5.5 6.6 6.6zM543.6 282l-.6-5.4 6.7 6.4zM529.7 269.8l-.8-5.2 7.2 5.9zM527.9 259.6l7.2 5.8-6.2-.8z"/>
<path fill="#1e08f3" stroke="#1e08f3" stroke-width="0.7" d="M239.8 599l-.1-.8 5.4 6.2zM250.7 609.6l-5.6-5.2 .1-.8zM239.7 598.2l5.5 5.4-.1 .8zM287.9 639.4l-6.3-4.1-.4-.4zM274.7 630.1l6.5 4.8-6.2-4.3zM268.5 624.9l.1 .7-6.2-5.3zM250.7 609.6l5.8 5.1 0 .7zM262.4 620.3l-5.9-4.9 0-.7zM287.9 639.4l5.1 3.1-6.8-4.2zM239.8 599l-5.3-6.1 5.2 5.3zM224.7 581l4.9 6.4-4.7-5.8zM541.1 237.6l6.7 4.5-.4-.4zM525.4 250.3l-6.3-5 6.2 1zM519.1 245.3l-.2-3.9 6.4 4.9zM517.2 231.7l-.8-2.7 6.7 4.2zM541.1 237.6l1.7 1.1-6.8-4.2zM530.8 231.6l5.2 2.9 1.6 1.3zM525.5 229.1l6.8 4-5.4-2.4zM568.8 298.3l5.8 1.8 .2 5.4zM580.5 307.4l-5.7-1.9-.2-5.4zM591.5 317.1l-.3-5.4 5.4 7.7zM542.2 271.4l6.9 6.2-6.1-1zM555.7 284.1l-6-1.1-.6-5.4zM555.7 284.1l6.7 7-6.1-1.5z"/>
<path fill="#4306ff" stroke="#4306ff" stroke-width="0.7" d="M251.2 607.7l-.3 1.1-5.4-6.2zM287.9 639.1l6.6 3.8-.1 .4zM262.5 619.5l-5.8-5.8 6.2 4.8zM288.1 638.6l-.2 .5-6.6-4.6zM275 629.4l6.6 4.3-.3 .8zM262.5 619.5l.4-1 5.9 5.6zM301.1 647l-1.5-.7-5.2-3zM220.1 574.5l-4.3-6-.1-.7zM211.6 561.7l4.2 6.8-4-6.2zM230 584.7l-.4 1.1-4.7-6.5zM239.9 597.3l-5.3-5.2 .2-1zM512.9 249l0-4.4 6.3 4.9zM512.7 240.6l.2 4-6.5-4.6zM510.5 227.6l-6-1.2-.8-2.6zM511.3 230.4l-6.2-1.1-.6-2.9zM505.7 232.5l6.6 4.3-6.2-.7zM527.9 230l6.7 3.7-5.2-3zM520 226.8l-6.8-3.6 5.6 2.3zM517.4 224.5l1.4 1-6.9-3.4zM510.5 227.6l-6.8-3.8 5.9 1.3zM580.5 312.8l-.1 5.7-5.6-7.5zM568.8 309.4l.1-5.7 5.9 7.3zM596.6 330.5l-5.1-7.9 5.2 2.2zM529.7 269.8l6.4 .7 .7 5.3zM568.8 309.4l-6.4-.7 .5-6.5z"/>
<path fill="#3b07ff" stroke="#3b07ff" stroke-width="0.7" d="M239.9 597.3l5.6 5.3-.3 1zM212.3 562.7l-4.1-6.8 3.6 6.4zM229.5 586.7l-4.8-6.5 4.9 5.6zM511.8 233.4l-6.1-.9-.6-3.2zM510.5 227.6l.8 2.8-6.8-4zM512.7 240.6l-6.6-4.5 6.2 .7zM518.8 225.5l5.4 2.4 1.3 1.2zM520 226.8l-5.7-2-1.1-1.6zM508.6 223l5.7 1.8 1.2 1.9zM508.6 223l6.9 3.7-5.9-1.6zM556.6 295.3l6.2 1.4 .1 5.5zM580.5 312.8l5.6 7.6-5.7-1.9zM580.5 312.8l5.6 2.1 0 5.5zM586.1 314.9l5.4 7.7-5.4-2.2zM512.9 249l6.3 .5 1.3 4.6zM527.9 259.6l1 5-7.3-5.6zM527.9 259.6l-6.3-.6-1.1-4.9zM556.6 295.3l-6.4-6.8 6.1 1.1zM543.6 282l6.1 1 .5 5.5zM543.6 282l-6.8-6.2 6.2 .8zM549.6 294.4l-6.5-6.6 7.1 .7z"/>
<path fill="#1306e7" stroke="#1306e7" stroke-width="0.7" d="M275.4 630.9l-.4-.3 6.6 4.7zM268.9 626.1l-.3-.5 6.4 5zM239.8 599l5.3 5.4 .2 .6zM220.6 575.6l4.3 6 .5 .4zM229.9 587.9l-.3-.5 5.1 6.2zM553.6 246.1l-6.2-4.4 6.6 4.7zM560.4 251.4l-.3-.5-6.1-4.5zM523.8 236l.7 3.1-6.6-4.5zM511.8 233.4l6.1 1.2 .6 3.2zM533.6 234.9l-6.7-4.2 5.4 2.4zM522.2 230.7l6.8 4.3-5.9-1.8zM533.6 234.9l-5.6-2.2-1.1-2zM522.2 230.7l5.8 2 1 2.3zM580.2 302l5.4 2.2 .4 5.2zM585.6 304.2l5.6 7.5-5.2-2.3zM525.4 250.3l6 1 1.5 4.5zM555 278.9l-5.9-1.3-.9-5.1zM540.1 261.5l-6-1.1-1.2-4.6zM540.1 261.5l1.2 4.8-7.2-5.9zM555.7 284.1l-.7-5.2 6.8 6.8z"/>
<path fill="#1908f0" stroke="#1908f0" stroke-width="0.7" d="M281.6 635.3l-6.6-4.7 6.2 4.3zM274.7 630.1l.3 .5-6.4-5zM220.2 575.1l4.7 6.5-4.3-6zM547.8 242.1l6.2 4.3-6.6-4.7zM523.8 236l-5.9-1.4-.7-2.9zM524.5 239.1l-6-1.3-.6-3.2zM524.9 242.5l-6-1.1-.4-3.6zM522.2 230.7l.9 2.5-6.7-4.2zM542.8 238.7l-5.2-2.9-1.6-1.3zM530.8 231.6l6.8 4.2-5.3-2.7zM522.2 230.7l-1-2.1 6.8 4.1zM526.9 230.7l1.1 2-6.8-4.1zM591.5 317.1l-5.5-7.7 5.2 2.3zM596.6 319.4l-5.4-7.7 5 2.4zM555.7 284.1l.6 5.5-6.6-6.6zM525.4 250.3l7.5 5.5-6.2-1zM542.2 271.4l-7.1-6 6.2 .9zM541.3 266.3l-6.2-.9-1-5zM568.8 298.3l-6.4-7.2 5.9 1.7z"/>
<path fill="#0600c7" stroke="#0600c7" stroke-width="0.7" d="M263.5 621.5l-.6-.2 6.4 5.1zM565.5 255.5l-5.8-4.9 6.4 5.1zM544.2 240.2l6.2 4.4-4.9-2.6zM555.1 247.5l-4.7-2.9-1.4-1.6zM536.6 245.4l.4 3.4-6.2-5zM535.5 239.5l.6 2.8-6.4-4.7zM536.6 245.4l-6.3-4.9 5.8 1.8zM541.1 241.7l-6.5-4.6 5.6 2.3zM554.1 273.8l-6.9-6.3 5.8 1.5zM547.2 267.5l-1.2-4.7 7 6.2zM546 262.8l-7.2-5.9 5.8 1.4zM595.6 309l-5.6-7.8 4.8 2.6zM554.1 273.8l5.9 1.7 1 5zM567.6 287.4l-6.6-6.9 5.8 1.8z"/>
<path fill="#0c02d7" stroke="#0c02d7" stroke-width="0.7" d="M262.6 620.9l6.3 5.2-6-4.8zM251.1 610.8l-5.8-5.8 5.5 5.3zM262.6 620.9l.3 .4-6.2-5.3zM251.1 610.8l-.3-.5 5.9 5.7zM229.9 587.9l.5 .3-5-6.2zM240 599.6l-5-5.6-.3-.4zM229.9 587.9l-4.5-5.9-.5-.4zM537.3 252.6l-5.9-1.3-.2-3.9zM530.3 240.5l.5 3.3-6.3-4.7zM523.8 236l5.9 1.6 .6 2.9zM554.1 273.8l.9 5.1-6.8-6.4zM554.1 273.8l-5.9-1.3-1-5zM580.2 302l-.6-5.3 6 7.5zM561 280.5l.8 5.2-6.8-6.8zM567.6 287.4l6.4 7.2-5.7-1.8zM561.8 285.7l6.5 7.1-5.9-1.7zM580.2 302l-6.2-7.4 5.6 2.1z"/>
<path fill="#2408f6" stroke="#2408f6" stroke-width="0.7" d="M274.7 630.1l-6.1-4.5-.1-.7zM220.2 575.1l.4 .5-4.5-6.6zM229.5 586.7l5 6.2-4.9-5.5zM220.2 575.1l4.5 5.9 .2 .6zM229.5 586.7l.1 .7-4.9-6.4zM517.9 234.6l-6.6-4.2 5.9 1.3zM518.5 237.8l.4 3.6-6.6-4.6zM522.2 230.7l-6.7-4 5.7 1.9zM522.2 230.7l-5.8-1.7-.9-2.3zM530.8 231.6l1.5 1.5-6.8-4zM520 226.8l6.9 3.9-5.7-2.1zM591.5 317.1l-5.4-2.2-.1-5.5zM586 309.4l.1 5.5-5.6-7.5zM525.4 250.3l1.3 4.5-7.5-5.3zM543 276.6l6.1 1 .6 5.4zM527.9 259.6l-1.2-4.8 7.4 5.6zM542.2 271.4l-6.1-.9-1-5.1zM528.9 264.6l6.2 .8 1 5.1zM527.9 259.6l6.2 .8 1 5zM568.8 298.3l-6-1.6-.4-5.6z"/>
<path fill="#1607ec" stroke="#1607ec" stroke-width="0.7" d="M262.6 620.9l-.2-.6 6.2 5.3zM250.7 609.6l.1 .7-5.7-5.9zM262.5 619.5l-.1 .8-5.9-5.6zM262.6 620.9l-6.1-5.5 5.9 4.9zM250.7 609.6l5.8 5.8-5.7-5.1zM216.7 569.4l-.6-.4 4.5 6.6zM239.8 599l-5.1-5.4-.2-.7zM234.7 593.6l-5.1-6.2 4.9 5.5zM229.9 587.9l-5-6.3 4.7 5.8zM525.4 250.3l-.1-4 6.1 5zM524.9 242.5l.4 3.8-6.4-4.9zM523.8 236l-6.6-4.3 5.9 1.5zM580.2 302l.3 5.4-5.9-7.3zM580.2 302l5.8 7.4-5.5-2zM555.7 284.1l-6.6-6.5 5.9 1.3zM542.2 271.4l6 1.1 .9 5.1zM532.9 255.8l1.2 4.6-7.4-5.6zM542.2 271.4l-.9-5.1 6.9 6.2zM568.8 298.3l-.5-5.5 6.3 7.3zM555.7 284.1l6.1 1.6 .6 5.4z"/>
<path fill="#fd5ca5" stroke="#fd5ca5" stroke-width="0.7" d="M253.3 577.5l4.1 7.4-6.4-4.6zM326 641.8l6.3 4.7-8.8-2.4zM338.8 650.8l-8.9-2.1 2.4-2.2zM338.8 650.8l6.5 4.1-8.9-2zM276.2 599.5l-2.7 3.3-4.7-6.9zM276.2 599.5l-7.4-3.6 2.8-3.4zM299.3 622.1l-7.9-3 2.5-3.1zM276.2 599.5l4.8 6.8-7.5-3.5zM286.1 612.9l-5.1-6.6 7.8 3.3zM326 641.8l-8.6-2.5 2.3-2.8zM313.6 631l-2.4 2.9-6.1-5.8zM253.3 577.5l-2.3 2.8-4.4-7zM182.8 489.5l-1.5-7.8 1.5 5zM240.2 568.9l2.7-3.3 3.7 7.7zM221.7 543.1l3.1 8.3-5.4-5.1zM221.7 543.1l-2.3 3.2-3-8.4zM233.2 553.1l-2.6 3.3-3.3-8.2zM224.8 551.4l2.5-3.2 3.3 8.2zM183.2 483.8l1.7 9.3-2.1-6.4zM188 496.6l2.1 9.2-2.7-6.3zM185.4 490.2l2 9.3-2.5-6.4zM188 496.6l3 6.2-.9 3zM597.2 389.4l-2.2 6.4-3.4-8.6zM442.2 202.7l-7.5-.6-.3-.2zM443.7 250.4l7.1-1.6 1.1 5.2zM442.6 245.4l-1.2-4.9 8.3 3.3zM437.6 227.6l-8.6-2.5 7.3-1.3zM442.2 202.7l1.4 .6-8.9-1.2zM434.7 202.1l8.9 1.2-7.4-.4zM435 220.3l-8.4-2 7.5-1.6zM433.2 213.5l.9 3.2-8.4-1.9zM433.2 213.5l-8.4-1.7 7.5-1.2zM429.4 204.2l8.9 1.4-7.9 .4zM429.4 204.2l7.8-.2 1.1 1.6zM181.2 482.9l-1.3-7.9 1.4 6.7zM180 476.3l1.2 6.6 .5 2.7zM180 476.3l.7 2.6-1.5-9.3zM457.7 264.3l-6.4-4.4 7.1-1.6zM451.9 254l6.5 4.3-7.1 1.6zM470.4 273.8l-7.4 1.7 1.1-6.5zM476.7 278.9l-1.1 6.8-6.2-5.2zM468.3 287.4l7.3-1.7-1.2 7.1zM581 379.6l6.4 .5-2.1 6.5zM591.6 387.2l-6.3-.6 2.1-6.5zM562.6 371.8l2.2-6.6 4.8 6.9zM581 379.6l-6.7-.5 2.1-6.6zM569.6 372.1l6.8 .4-2.1 6.6zM547.2 351.8l5.3 6.6-7.8 0zM492.4 309.4l1.3-7.2 7.1 6.5zM506.2 322.7l1.5-7.3 6.7 6.9zM507.7 315.4l-8.3 .5 1.4-7.2zM547.2 351.8l-7.6 .1 1.7-7.8zM539.6 351.9l-6-7.7 7.7-.1zM519.5 337.1l1.6-7.6 6.3 7.2zM531.8 352.1l-6-7.6 7.8-.3z"/>
<path fill="#fa55b0" stroke="#fa55b0" stroke-width="0.7" d="M261.7 592.1l-6.5-4.5 2.2-2.7zM257.4 584.9l-2.2 2.7-4.2-7.3zM326 641.8l-2.5 2.3-6.1-4.8zM261.7 592.1l7.1 3.8-2.5 3.2zM266.3 599.1l2.5-3.2 4.7 6.9zM296.8 625l-5.4-5.9 7.9 3zM286.1 612.9l-7.6-3.5 2.5-3.1zM273.5 602.8l7.5 3.5-2.5 3.1zM296.8 625l2.5-2.9 5.8 6zM305.1 628.1l6.1 5.8-8.4-3zM228.3 559.5l2.3-3.1 3.5 7.9zM211.4 532.6l2.9 8.4-4.8-5.4zM228.3 559.5l-3.5-8.1 5.8 5zM221.7 543.1l5.6 5.1-2.5 3.2zM187 502.4l-2.3-6.4 .2-2.9zM187 502.4l-2.1-9.3 2.5 6.4zM202 520.8l2.8 8.9-4.2-5.8zM194.4 509l2.4 9-3.5-6zM196.8 518l1.2-3 2.6 8.9zM204.8 529.7l1.7-2.9 3 8.8zM456.9 204.9l-7.4-1.3-.3 .1zM459 252.6l-7.1 1.4-1.1-5.2zM449.7 243.8l8.2 3.6-7.1 1.4zM435 220.3l8.4 2.4-7.1 1.1zM437.6 227.6l-1.3-3.8 8.4 2.6zM437.6 227.6l8.4 2.8-7.1 1.3zM438.9 231.7l7.1-1.3 1.2 4.2zM440.2 236l7-1.4 1.3 4.5zM437.6 227.6l1.3 4.1-8.6-2.7zM445.1 204.2l-8.9-1.3 7.4 .4zM442.2 202.7l7.3 .9 1.6 .4zM442.2 202.7l8.9 1.3-7.5-.7zM435 220.3l-.9-3.6 8.9 2.4zM433.2 213.5l8.9 2.1-8 1.1zM433.2 213.5l-.9-2.9 8.9 1.9zM446.1 205.6l-7.8 0-1.1-1.6zM431.4 208.1l7.9-.6 .9 2.3zM182.8 489.5l.4 2.7-2-9.3zM183.2 492.2l-1.5-6.6-.5-2.7zM459 252.6l-.6 5.7-6.5-4.3zM470.4 273.8l-6.3-4.8 7.1-1.5zM494.9 295.3l-1.2 6.9-6-5.5zM494.9 295.3l-7.2 1.4 1.2-7.1zM482.9 284.1l6 5.5-7.2 1.5zM593.6 380.8l-2 6.4-4.2-7.1zM547.2 351.8l7.3 .1-2 6.5zM554.5 351.9l5.2 6.6-7.2-.1zM581 379.6l2-6.5 4.4 7zM581 379.6l-4.6-7.1 6.6 .6zM502 301.6l-1.2 7.1-7.1-6.5zM514.4 322.3l-6.7-6.9 8.1-.4zM509 308.2l-1.3 7.2-6.9-6.7zM535.2 336.5l-7.8 .2 1.5-7.5zM522.5 322l-1.4 7.5-6.7-7.2z"/>
<path fill="#f952b5" stroke="#f952b5" stroke-width="0.7" d="M249 582.9l2-2.6 4.2 7.3zM323.5 644.1l-8.6-2.6 2.5-2.2zM334.1 654.6l2.3-1.7 6.6 3.9zM286.1 612.9l5.3 6.2-7.8-3.3zM308.9 636.5l2.3-2.6 6.2 5.4zM296.8 625l8.3 3.1-2.3 2.8zM249 582.9l-4.5-6.9 6.5 4.3zM240.2 568.9l-2 2.6-4.1-7.2zM240.2 568.9l4.3 7.1-6.3-4.5zM228.3 559.5l-5.5-5.1 2-3zM222.8 554.4l-3.4-8.1 5.4 5.1zM211.4 532.6l5 5.3-2.1 3.1zM187 502.4l.4-2.9 2.3 9.2zM189.7 508.7l-2.3-9.2 2.7 6.3zM192.6 514.9l-2.5-9.1 3.2 6.2zM456.7 242.5l-7 1.3-1.2-4.7zM459 252.6l-8.2-3.8 7.1-1.4zM443.4 222.7l1.3 3.7-8.4-2.6zM437.6 227.6l7.1-1.2 1.3 4zM435 220.3l8-1.2 .4 3.6zM434.1 216.7l8-1.1 .9 3.5zM440.2 209.8l1 2.7-8.9-1.9zM433.2 213.5l8-1 .9 3.1zM447.1 207.3l-7.8 .2-1-1.9zM445.1 204.2l1 1.4-8.9-1.6zM182.8 489.5l-1.6-6.6 .1-1.2zM182.8 489.5l1.8 7.7-1.4-5zM470.4 273.8l7.2-1.3-.9 6.4zM459 252.6l6.5 4.3-7.1 1.4zM465.5 256.9l-.7 5.9-6.4-4.5zM470.4 273.8l.8-6.3 6.4 5zM482.9 284.1l-1.2 7-6.1-5.4zM571.7 365.6l-6.9-.4 2-6.4zM566.8 358.8l-2 6.4-5.1-6.7zM547.2 351.8l2-7.7 5.3 7.8zM494.9 295.3l7.1 6.3-8.3 .6zM509 308.2l-8.2 .5 1.2-7.1zM522.5 322l-8.1 .3 1.4-7.3zM509 308.2l6.8 6.8-8.1 .4zM522.5 322l6.4 7.2-7.8 .3zM547.2 351.8l-5.9-7.7 7.9 0z"/>
<path fill="#d939c7" stroke="#d939c7" stroke-width="0.7" d="M271.1 605.8l-6.7-4.3 1.9-2.4zM257.9 597.1l-6.3-4.7 1.7-2.3zM247.1 585.3l6.2 4.8-1.7 2.3zM281.4 618.4l7.6 3.4-2.2 2.5zM292.5 629.9l2-2.3 6.1 5.7zM191.5 517.6l-2.4-7.6 2.8 6.3zM191.5 517.6l-2.7-6.3 .3-1.3zM206.5 540.2l-4.1-5.8 1.2-1.7zM195.1 522.5l-.7 1.4-2.5-7.6zM224.9 564l1.6-2.2 4 7.2zM461.2 232.5l-8.2-3.2 7-.8zM464.9 246.3l-1.2-4.9 8.2 3.9zM454.3 233.4l6.9-.9 1.3 4.3zM451.7 225.5l-8.3-2.8 7.9-1.1zM451.7 225.5l7.9-1 .4 4zM450.9 218.1l8.3 2.8-7.9 .7zM450.9 218.1l-.9-3.2 8.7 2.7zM449.1 212l8.7 2.5-7.8 .4zM462.6 208.1l-7.7-.6-1-1.5zM448.1 209.4l7.9 0 1 2.4zM186.6 504.9l.7 2.7-2.2-7.7zM187.3 507.6l-1.4-5.1-.8-2.6zM484.6 271.4l-6.3-5.1 7-.9zM596.9 368.3l-1.5 6.2-4.4-7.1zM584.9 366.7l-4.7-7 6.3 .7zM584.9 366.7l1.6-6.3 4.5 7zM575.3 352.9l4.9 6.8-6.6-.5zM497 282l7.3 5.8-8.3 .7zM550.9 336.5l7.2 .2-1.7 7.5zM538.5 321.6l6.3 7.4-7.8 0zM511.4 293.8l-1.1 7.1-7.1-6.5zM525.3 307.2l-1.3 7.3-6.8-6.9zM518.4 300.4l-1.2 7.2-6.9-6.7zM524 314.5l8-.2-1.4 7.4z"/>
<path fill="#df3dc5" stroke="#df3dc5" stroke-width="0.7" d="M257.9 597.1l1.8-2.4 4.7 6.8zM257.9 597.1l-4.6-7 6.4 4.6zM271.1 605.8l-1.7 2.4-5-6.7zM334.1 654.6l-2.1 1.4-6.6-3.9zM308.9 636.5l-2.4 2-5.9-5.2zM321.1 646.2l-2.2 1.7-6.3-4.6zM314.9 641.5l-2.3 1.8-6.1-4.8zM334.1 654.6l-8.7-2.5 2.2-1.5zM318.9 647.9l8.7 2.7-2.2 1.5zM286.8 624.3l2.2-2.5 5.5 5.8zM186.6 504.9l.1-1.2 2.1 7.6zM207.9 538.4l-1.4 1.8-2.9-7.5zM199.6 526.9l4 5.8-1.2 1.7zM199.6 526.9l-1 1.6-2.6-7.6zM196 520.9l2.6 7.6-3.5-6zM199.6 526.9l2.8 7.5-3.8-5.9zM192.6 514.9l2.5 7.6-3.2-6.2zM236.4 573.9l6.2 4.6-1.7 2.3zM240.9 580.8l1.7-2.3 4.5 6.8zM212.6 543.9l3.4 7.5-4.8-5.4zM217.5 549.3l3.6 7.4-5.1-5.3zM236.4 573.9l-5.9-4.9 1.8-2.3zM207.9 538.4l3.3 7.6-4.7-5.8zM596.9 368.3l3.9 8.4-5.4-2.2zM473 250.3l-7 1-1.1-5zM454.3 233.4l-1.3-4.1 8.2 3.2zM451.7 225.5l8.3 3-7 .8zM453 229.3l-7 1.1-1.3-4zM455.5 237.8l7-1 1.2 4.6zM464.1 206.5l8.9 1.9-7.2-1.8zM459.9 205.7l1.4 1-8.8-1.9zM453.9 206l-1.4-1.2 8.8 1.9zM465.8 206.6l1.5 .5-8.9-2zM447.1 207.3l7.8 .2 1.1 1.9zM449.1 212l-1-2.6 8.9 2.4zM183.9 494.8l1.2 5.1 .8 2.6zM484.6 271.4l6.2 5.2-7 1zM497 282l-7 1 .8-6.4zM473 250.3l-.5 5.5-6.5-4.5zM471.9 261.5l.6-5.7 6.4 4.6zM471.9 261.5l7-1.1-.6 5.9zM575.3 352.9l-1.7 6.3-5-6.8zM496 288.5l8.3-.7-1.1 6.6zM561.7 352.1l1.7-7.6 5.2 7.9zM561.7 352.1l-5.3-7.9 7 .3zM538.5 321.6l-1.5 7.4-6.4-7.3zM550.9 336.5l-7.7 0 1.6-7.5z"/>
<path fill="#f64eb9" stroke="#f64eb9" stroke-width="0.7" d="M261.7 592.1l4.6 7-6.6-4.4zM261.7 592.1l-2 2.6-4.5-7.1zM308.9 636.5l8.5 2.8-2.5 2.2zM321.1 646.2l2.4-2.1 6.4 4.6zM329.9 648.7l6.5 4.2-8.8-2.3zM271.1 605.8l-4.8-6.7 7.2 3.7zM286.1 612.9l-2.5 2.9-5.1-6.4zM296.8 625l-7.8-3.2 2.4-2.7zM271.1 605.8l2.4-3 5 6.6zM308.9 636.5l-6.1-5.6 8.4 3zM187 502.4l-.3 1.3-2-7.7zM240.2 568.9l6.4 4.4-2.1 2.7zM228.3 559.5l5.8 4.8-1.8 2.4zM209.5 535.6l4.8 5.4-1.7 2.9zM217.5 549.3l1.9-3 3.4 8.1zM192.6 514.9l-2.9-6.2 .4-2.9zM203.6 532.7l-3-8.8 4.2 5.8zM193.3 512l3.5 6-.8 2.9zM199.6 526.9l-2.8-8.9 3.8 5.9zM194.4 509l-1.1 3-2.3-9.2zM207.9 538.4l-3.1-8.7 4.7 5.9zM456.7 242.5l1.2 4.9-8.2-3.6zM447.2 234.6l8.3 3.2-7 1.3zM456.9 204.9l1.5 .2-8.9-1.5zM445.1 204.2l-1.5-.9 8.9 1.5zM451.1 204l1.4 .8-8.9-1.5zM447.1 207.3l-8.8-1.7 7.8 0zM183.9 494.8l-2.2-9.2 1.5 6.6zM482.9 284.1l7.1-1.1-1.1 6.6zM482.9 284.1l-6.2-5.2 7.1-1.3zM477.6 272.5l6.2 5.1-7.1 1.3zM471.9 261.5l-.7 6-6.4-4.7zM464.1 269l.7-6.2 6.4 4.7zM561.7 352.1l-2 6.4-5.2-6.6zM561.7 352.1l5.1 6.7-7.1-.3zM593.6 380.8l-6.2-.7 1.9-6.4zM587.4 380.1l-4.4-7 6.3 .6zM571.7 365.6l4.7 6.9-6.8-.4zM571.7 365.6l6.7 .5-2 6.4zM535.2 336.5l8 0-1.9 7.6zM541.3 344.1l1.9-7.6 6 7.6zM535.2 336.5l-6.3-7.3 8.1-.2z"/>
<path fill="#ea46bf" stroke="#ea46bf" stroke-width="0.7" d="M264.4 601.5l-4.7-6.8 6.6 4.4zM259.7 594.7l-6.4-4.6 1.9-2.5zM296.8 625l-2.3 2.6-5.5-5.8zM278.5 609.4l5.1 6.4-7.5-3.6zM308.9 636.5l-8.3-3.2 2.2-2.4zM186.6 504.9l-2-7.7 2.1 6.5zM192.6 514.9l-.7 1.4-2.2-7.6zM187 502.4l2.1 7.6-2.4-6.3zM236.4 573.9l-4.1-7.2 5.9 4.8zM217.5 549.3l5.3 5.1-1.7 2.3zM228.3 559.5l4 7.2-5.8-4.9zM217.5 549.3l-3.2-8.3 5.1 5.3zM456.7 242.5l8.2 3.8-7 1.1zM466 251.3l-8.1-3.9 7-1.1zM451.7 225.5l1.3 3.8-8.3-2.9zM454.3 233.4l-8.3-3 7-1.1zM456.9 204.9l7.2 1.6 1.7 .1zM459.9 205.7l-8.8-1.7 7.3 1.1zM458.4 205.1l-7.3-1.1-1.6-.4zM445.1 204.2l7.4 .6 1.4 1.2zM459.9 205.7l-7.4-.9-1.4-.8zM456.9 204.9l8.9 1.7-7.4-1.5zM449.1 212l.9 2.9-8.8-2.4zM447.1 207.3l-1-1.7 8.8 1.9zM449.1 212l-8.9-2.2 7.9-.4zM439.3 207.5l8.8 1.9-7.9 .4zM183.9 494.8l-.7-2.6 1.9 7.7zM484.6 271.4l-.8 6.2-6.2-5.1zM471.9 261.5l-6.4-4.6 7-1.1zM471.9 261.5l6.4 4.8-7.1 1.2zM561.7 352.1l6.9 .3-1.8 6.4zM494.9 295.3l1.1-6.8 7.2 5.9zM561.7 352.1l-7.2-.2 1.9-7.7zM550.9 336.5l-1.7 7.6-6-7.6zM530.6 321.7l6.4 7.3-8.1 .2zM503.2 294.4l7.1 6.5-8.3 .7zM522.5 322l1.5-7.5 6.6 7.2z"/>
<path fill="#d436ca" stroke="#d436ca" stroke-width="0.7" d="M245.5 587.6l1.6-2.3 4.5 7.1zM271.1 605.8l5 6.4-6.7-4zM281.4 618.4l-6.9-3.9 1.6-2.3zM276.1 612.2l-1.6 2.3-5.1-6.3zM257.9 597.1l6.5 4.4-1.7 2.4zM269.4 608.2l-6.7-4.3 1.7-2.4zM325.4 652.1l6.6 3.9-8.7-2.7zM292.5 629.9l-5.7-5.6 7.7 3.3zM189.1 510l-.3 1.3-2.1-7.6zM197.8 530l-2.7-7.5 3.5 6zM201.4 536l-2.8-7.5 3.8 5.9zM191.5 517.6l.4-1.3 2.5 7.6zM245.5 587.6l-4.6-6.8 6.2 4.5zM214.7 553.4l-3.5-7.4 4.8 5.4zM224.9 564l-3.8-7.3 5.4 5.1zM224.9 564l-5.2-5.2 1.4-2.1zM236.4 573.9l4.5 6.9-6.1-4.7zM232.3 566.7l-1.8 2.3-4-7.2zM236.4 573.9l-1.6 2.2-4.3-7.1zM211.2 546l-1.3 1.7-3.4-7.5zM473 250.3l-8.1-4 7-1zM456.7 242.5l7-1.1 1.2 4.9zM454.3 233.4l8.2 3.4-7 1zM470.7 240.6l-7 .8-1.2-4.6zM474.6 208.7l-8.8-2.1 7.2 1.8zM462.6 208.1l-8.7-2.1 7.4 .7zM474.6 208.7l-7.3-1.6-1.5-.5zM459.9 205.7l7.4 1.4 1.5 .8zM450.9 218.1l7.8-.5 .5 3.3zM459.2 220.9l.4 3.6-8.3-2.9zM458.7 217.6l-8.7-2.7 7.8-.4zM449.1 212l7.9-.2 .8 2.7zM463.7 209.8l-7.7-.4-1.1-1.9zM497 282l-6.2-5.4 7-.8zM484.6 271.4l7-.9-.8 6.1zM484.6 271.4l.7-6 6.3 5.1zM473 250.3l6.5 4.5-7 1zM479.5 254.8l-.6 5.6-6.4-4.6zM478.3 266.3l.6-5.9 6.4 5zM575.3 352.9l6.4 .6-1.5 6.2zM596.9 368.3l-5.9-.9 1.5-6.2zM511.4 293.8l-8.2 .6 1.1-6.6zM575.3 352.9l-6.7-.5 1.6-7.5zM568.6 352.4l-5.2-7.9 6.8 .4zM558.1 336.7l5.3 7.8-7-.3zM550.9 336.5l-6.1-7.5 7.7 .2zM525.3 307.2l-8.1 .4 1.2-7.2zM525.3 307.2l6.7 7.1-8 .2zM538.5 321.6l-7.9 .1 1.4-7.4z"/>
<path fill="#e441c2" stroke="#e441c2" stroke-width="0.7" d="M249 582.9l4.3 7.2-6.2-4.8zM308.9 636.5l6 5-8.4-3zM321.1 646.2l-8.5-2.9 2.3-1.8zM321.1 646.2l6.5 4.4-8.7-2.7zM271.1 605.8l7.4 3.6-2.4 2.8zM281.4 618.4l-5.3-6.2 7.5 3.6zM281.4 618.4l2.2-2.6 5.4 6zM294.5 627.6l8.3 3.3-2.2 2.4zM182.8 489.5l1.9 6.5-.1 1.2zM191.9 516.3l-2.8-6.3 .6-1.3zM192.6 514.9l3.4 6-.9 1.6zM249 582.9l-1.9 2.4-4.5-6.8zM236.4 573.9l1.8-2.4 4.4 7zM207.9 538.4l4.7 5.5-1.4 2.1zM217.5 549.3l-1.5 2.1-3.4-7.5zM226.5 561.8l-5.4-5.1 1.7-2.3zM217.5 549.3l-4.9-5.4 1.7-2.9zM456.7 242.5l-1.2-4.7 8.2 3.6zM450.9 218.1l.4 3.5-8.3-2.5zM450.9 218.1l-8.8-2.5 7.9-.7zM454.9 207.5l-8.8-1.9 7.8 .4zM447.1 207.3l8.9 2.1-7.9 0zM186.6 504.9l-1.5-5-.5-2.7zM497 282l-1 6.5-6-5.5zM483.8 277.6l7-1-.8 6.4zM472.5 255.8l-7 1.1 .5-5.6zM484.6 271.4l-7 1.1 .7-6.2zM471.2 267.5l7.1-1.2-.7 6.2zM584.9 366.7l6.1 .7-1.7 6.3zM589.3 373.7l1.7-6.3 4.4 7.1zM573.6 359.2l-6.8-.4 1.8-6.4zM584.9 366.7l-6.5-.6 1.8-6.4zM580.2 359.7l-1.8 6.4-4.8-6.9zM576.4 372.5l2-6.4 4.6 7zM550.9 336.5l5.5 7.7-7.2-.1zM537 329l7.8 0-1.6 7.5zM515.8 315l1.4-7.4 6.8 6.9zM509 308.2l1.3-7.3 6.9 6.7z"/>
<path fill="#f04abc" stroke="#f04abc" stroke-width="0.7" d="M249 582.9l6.2 4.7-1.9 2.5zM321.1 646.2l-6.2-4.7 8.6 2.6zM321.1 646.2l8.8 2.5-2.3 1.9zM334.1 654.6l-6.5-4 8.8 2.3zM283.6 615.8l7.8 3.3-2.4 2.7zM296.8 625l6 5.9-8.3-3.3zM184.7 496l2 7.7-2.1-6.5zM187 502.4l2.7 6.3-.6 1.3zM251 580.3l-6.5-4.3 2.1-2.7zM234.1 564.3l4.1 7.2-5.9-4.8zM249 582.9l-6.4-4.4 1.9-2.5zM242.6 578.5l-4.4-7 6.3 4.5zM228.3 559.5l-1.8 2.3-3.7-7.4zM207.9 538.4l1.6-2.8 3.1 8.3zM207.9 538.4l-4.3-5.7 1.2-3zM199.6 526.9l1-3 3 8.8zM192.6 514.9l.7-2.9 2.7 8.9zM199.6 526.9l-3.6-6 .8-2.9zM593.6 380.8l1.8-6.3 3.7 8.5zM459 252.6l-1.1-5.2 8.1 3.9zM451.7 225.5l-7 .9-1.3-3.7zM454.3 233.4l-7.1 1.2-1.2-4.2zM454.3 233.4l1.2 4.4-8.3-3.2zM456.7 242.5l-8.2-3.4 7-1.3zM443 219.1l8.3 2.5-7.9 1.1zM450.9 218.1l-7.9 1-.9-3.5zM449.1 212l-7.9 .5-1-2.7zM441.2 212.5l8.8 2.4-7.9 .7zM445.1 204.2l8.8 1.8-7.8-.4zM447.1 207.3l1 2.1-8.8-1.9zM184.6 497.2l.5 2.7-1.9-7.7zM494.9 295.3l-6-5.7 7.1-1.1zM488.9 289.6l1.1-6.6 6 5.5zM482.9 284.1l.9-6.5 6.2 5.4zM459 252.6l7-1.3-.5 5.6zM471.9 261.5l-7.1 1.3 .7-5.9zM593.6 380.8l-4.3-7.1 6.1 .8zM571.7 365.6l-4.9-6.8 6.8 .4zM571.7 365.6l-2.1 6.5-4.8-6.9zM584.9 366.7l4.4 7-6.3-.6zM571.7 365.6l1.9-6.4 4.8 6.9zM584.9 366.7l-1.9 6.4-4.6-7zM549.2 344.1l7.2 .1-1.9 7.7zM522.5 322l8.1-.3-1.7 7.5zM535.2 336.5l1.8-7.5 6.2 7.5zM494.9 295.3l8.3-.9-1.2 7.2zM509 308.2l-7-6.6 8.3-.7zM522.5 322l-6.7-7 8.2-.5zM509 308.2l8.2-.6-1.4 7.4z"/>
<path fill="#ca30d0" stroke="#ca30d0" stroke-width="0.7" d="M292.5 629.9l-7.1-3.6 1.4-2zM285.4 626.3l-5.6-5.8 7 3.8zM245.5 587.6l6.1 4.8-1.6 2.2zM316.8 649.3l8.6 2.8-2.1 1.2zM316.8 649.3l-6.3-4.4 8.4 3zM304.3 640.2l8.3 3.1-2.1 1.6zM205.4 541.9l-4-5.9 1-1.6zM191.5 517.6l2.6 7.6-2.8-6.3zM191.5 517.6l2.9 6.3-.3 1.3zM224.9 564l-1.3 2-3.9-7.2zM221.1 556.7l-1.4 2.1-3.7-7.4zM245.5 587.6l-6.2-4.6 1.6-2.2zM239.3 583l-4.5-6.9 6.1 4.7zM224.9 564l4.2 7.2-5.5-5.2zM205.4 541.9l1.1-1.7 3.4 7.5zM473 250.3l-1.1-5 8 4.2zM468.2 231.9l1.3 4.2-8.3-3.6zM470.7 240.6l-8.2-3.8 7-.7zM474.6 208.7l-1.6-.3 8.8 2.4zM462.6 208.1l-1.3-1.4 8.8 2.4zM459.9 205.7l8.9 2.2-7.5-1.2zM461.3 206.7l7.5 1.2 1.3 1.2zM459.9 205.7l-1.5-.6 8.9 2zM468.8 207.9l-1.5-.8 8.8 2.3zM460 228.5l-.4-4 8.3 3.3zM467.5 224l-7.9 .5-.4-3.6zM466.5 217.4l-7.8 .2-.9-3.1zM457.8 214.5l-.8-2.7 8.7 2.7zM464.8 212l-8.8-2.6 7.7 .4zM189.7 515.1l-2.4-7.5 1.6 4.9zM473 250.3l6.9-.8-.4 5.3zM491.6 270.5l-6.3-5.1 7-.8zM596.9 368.3l-4.4-7.1 5.8 .9zM587.9 354.2l-1.4 6.2-4.8-6.9zM587.9 354.2l4.6 7-6-.8zM497 282l.8-6.2 7.4 5.6zM511.4 293.8l-7.1-6 8.1-.5zM575.3 352.9l1.6-7.4 4.8 8zM565 337.1l5.2 7.8-6.8-.4zM565 337.1l-1.6 7.4-5.3-7.8zM575.3 352.9l-5.1-8 6.7 .6zM552.5 329.2l-7.7-.2 1.5-7.3zM511.4 293.8l7 6.6-8.1 .5zM538.5 321.6l-6.5-7.3 7.8 0z"/>
<path fill="#c029d7" stroke="#c029d7" stroke-width="0.7" d="M278.5 622.5l1.3-2 5.6 5.8zM245.5 587.6l4.5 7-5.9-4.9zM316.8 649.3l6.5 4-7.2-2.6zM304.3 640.2l-7-3.1 1-1.9zM298.3 635.2l-1 1.9-6-5.2zM316.8 649.3l-7.1-2.8 .8-1.6zM304.3 640.2l6.2 4.7-7.1-2.9zM292.5 629.9l-1.2 2-5.9-5.6zM205.4 541.9l-.8 1.5-3.2-7.4zM200.8 537.5l.6-1.5 3.2 7.4zM197.8 530l3 7.5-3.5-6.1zM191.3 518.9l2.8 6.3 0 1.2zM245.5 587.6l-1.4 2.1-4.8-6.7zM223.6 566l5.5 5.2-1.3 2zM214.7 553.4l3.8 7.4-5-5.6zM205.4 541.9l4.5 5.8-1 1.7zM471.9 245.3l6.8-.7 1.2 4.9zM468.2 231.9l8.1 3.7-6.8 .5zM470.7 240.6l-1.2-4.5 8 3.9zM470.7 240.6l6.8-.6 1.2 4.6zM474.6 208.7l7.2 2.1 1.6 .5zM462.6 208.1l7.5 1 1.2 1.5zM477.5 210.4l-7.4-1.3-1.3-1.2zM474.6 208.7l1.5 .7-8.8-2.3zM466.5 217.4l.6 3.1-8.4-2.9zM467.5 224l-8.3-3.1 7.9-.4zM464.8 212l-1.1-2.2 8.7 2.7zM466.5 217.4l-8.7-2.9 7.9 0zM191.4 520l-1.7-4.9-.8-2.6zM479.9 249.5l6.4 4.6-6.8 .7zM498.5 269.8l-6.9 .7 .7-5.9zM587.9 354.2l5.9 .8-1.3 6.2zM598.3 362.1l-5.8-.9 1.3-6.2zM511.4 293.8l1-6.5 7 6.1zM576.9 345.5l6.3 .6-1.5 7.4zM565 337.1l-6.9-.4 1.4-7.2zM565 337.1l6.7 .5-1.5 7.3zM526.4 300.2l-8 .2 1-7zM525.3 307.2l1.1-7 6.8 6.9zM532 314.3l1.2-7.2 6.6 7.2z"/>
<path fill="#cf33cd" stroke="#cf33cd" stroke-width="0.7" d="M281.4 618.4l5.4 5.9-7-3.8zM267.8 610.4l1.6-2.2 5.1 6.3zM281.4 618.4l-1.6 2.1-5.3-6zM267.8 610.4l-5.1-6.5 6.7 4.3zM257.9 597.1l-1.6 2.2-4.7-6.9zM257.9 597.1l4.8 6.8-6.4-4.6zM292.5 629.9l8.1 3.4-2.3 1.9zM304.3 640.2l-6-5 8.2 3.3zM300.6 633.3l5.9 5.2-8.2-3.3zM310.5 644.9l2.1-1.6 6.3 4.6zM304.3 640.2l2.2-1.7 6.1 4.8zM316.8 649.3l2.1-1.4 6.5 4.2zM186.6 504.9l2.2 6.4 .1 1.2zM191.5 517.6l-.2 1.3-2.5-7.6zM188.9 512.5l-.1-1.2 2.5 7.6zM205.4 541.9l-3-7.5 4.1 5.8zM197.8 530l.8-1.5 2.8 7.5zM197.8 530l-3.4-6.1 .7-1.4zM214.7 553.4l1.3-2 3.7 7.4zM224.9 564l5.6 5-1.4 2.2zM229.1 571.2l1.4-2.2 4.3 7.1zM214.7 553.4l-4.8-5.7 1.3-1.7zM468.2 231.9l-7 .6-1.2-4zM470.7 240.6l1.2 4.7-8.2-3.9zM469.5 236.1l-7 .7-1.3-4.3zM451.7 225.5l-.4-3.9 8.3 2.9zM464.8 212l-7.8-.2-1-2.4zM186.6 504.9l2.3 7.6-1.6-4.9zM188.3 510.1l-2.4-7.6 1.4 5.1zM497.8 275.8l-7 .8 .8-6.1zM485.9 259.6l-7 .8 .6-5.6zM485.9 259.6l-.6 5.8-6.4-5zM581.7 353.5l4.8 6.9-6.3-.7zM591 367.4l-4.5-7 6 .8zM497 282l8.2-.6-.9 6.4zM550.9 336.5l1.6-7.3 5.6 7.5zM538.5 321.6l7.8 .1-1.5 7.3z"/>
<path fill="#9814f2" stroke="#9814f2" stroke-width="0.7" d="M265.2 614.1l1.2-1.8 5.3 6.1zM252.7 604.9l1-1.7 5.1 6.4zM252.7 604.9l-5.1-6.6 6.1 4.9zM265.2 614.1l-1 1.7-5.4-6.2zM276.6 626l-5.8-5.8 6.6 4.2zM276.6 626l.8-1.6 6 5.6zM265.2 614.1l5.6 6.1-6.6-4.4zM203.6 547.2l-3.4-7.2 3.5 6zM197 532.7l3.3 6.1-.1 1.2zM203.7 546l-3.5-6 .1-1.2zM197.4 534.7l-.3-.9 3.2 7.2zM231.3 581.7l-5.4-5.2 .8-1.6zM226.7 574.9l-.8 1.6-4.4-6.9zM208.1 550.9l3.8 7.3-4.3-6zM220.8 571.1l-4.2-7.1 4.9 5.6zM212.6 556.7l4.8 5.7-.8 1.6zM503.3 218.3l-5.6-2.2-1.5-.5zM484.3 239.6l7.9-.2 0 4.5zM479.9 213.5l8.5 3.2-7.5-1.1zM590.3 339.8l5.4 2.2-.7 5.9zM595 347.9l.7-5.9 4.6 8.1zM514.5 269.2l-7.9 .2 .5-5.6zM567.4 322.7l-6.7-.4 .9-6.9zM554.8 315l6.8 .4-.9 6.9zM566.3 329.8l6.6 .6-1.2 7.2z"/>
<path fill="#bb26da" stroke="#bb26da" stroke-width="0.7" d="M267.8 610.4l5.2 6.1-6.6-4.2zM278.5 622.5l-5.5-6 6.8 4zM267.8 610.4l-1.4 1.9-5.2-6.3zM254.8 601.4l-4.8-6.8 6.3 4.7zM254.8 601.4l1.5-2.1 4.9 6.7zM323.3 653.3l-.6 1.3-6.6-3.9zM309.7 646.5l-6.3-4.5 7.1 2.9zM304.3 640.2l-.9 1.8-6.1-4.9zM316.8 649.3l-.7 1.4-6.4-4.2zM291.3 631.9l-7-3.6 1.1-2zM191.4 520l-.1-1.1 2.8 7.5zM197 532.7l-2.9-7.5 3.2 6.2zM233.4 578.2l5.9 4.8-1.3 2zM244.1 589.7l-6.1-4.7 1.3-2zM222.5 567.9l-4-7.1 5.1 5.2zM233.4 578.2l-5.6-5 1.3-2zM233.4 578.2l-4.3-7 5.7 4.9zM205.4 541.9l3.5 7.5-4.3-6zM213.5 555.2l-4.6-5.8 1-1.7zM486.7 249l-6.8 .5-1.2-4.9zM476.3 235.6l1.2 4.4-8-3.9zM474.6 208.7l8.8 2.6-7.3-1.9zM477.5 210.4l-8.7-2.5 7.3 1.5zM468.2 231.9l-.3-4.1 8.2 3.5zM464.8 212l8.6 2.9-7.7-.4zM471.3 210.6l1.1 1.9-8.7-2.7zM485.9 259.6l.4-5.5 6.5 4.9zM498.5 269.8l7.4 5.5-8.1 .5zM513.2 281.1l-.8 6.2-7.2-5.9zM553.8 322l5.7 7.5-7-.3zM553.8 322l-1.3 7.2-6.2-7.5zM546.3 321.7l-6.5-7.4 7.7 .2z"/>
<path fill="#b120e0" stroke="#b120e0" stroke-width="0.7" d="M278.5 622.5l-6.8-4.1 1.3-1.9zM266.4 612.3l6.6 4.2-1.3 1.9zM254.8 601.4l6.4 4.6-1.3 1.9zM259.9 607.9l1.3-1.9 5.2 6.3zM302.6 643.5l.8-1.5 6.3 4.5zM303.4 642l-7-3.2 .9-1.7zM316.1 650.7l-7.1-2.8 .7-1.4zM290.4 633.8l-6.1-5.5 7 3.6zM204 544.8l-3.2-7.3 3.8 5.9zM191.4 520l2.7 6.4 .2 1zM204 544.8l-3.7-6 .5-1.3zM197 532.7l.3-1.3 3 7.4zM242.8 591.5l-4.8-6.5 6.1 4.7zM233.4 578.2l4.6 6.8-5.8-5zM222.5 567.9l1.1-1.9 4.2 7.2zM222.5 567.9l-5.1-5.5 1.1-1.6zM212.6 556.7l.9-1.5 3.9 7.2zM204.6 543.4l4.3 6-.8 1.5zM212.6 556.7l-3.7-7.3 4.6 5.8zM484.3 239.6l-6.8 .4-1.2-4.4zM486.7 249l-8-4.4 6.8-.5zM477.5 210.4l-1.4-1 8.7 2.7zM484.8 212.1l-8.7-2.7 7.3 1.9zM466.5 217.4l7.7 .2 .7 2.9zM467.9 227.8l7.9-.4 .3 3.9zM474.9 220.5l.5 3.3-8.3-3.3zM465.7 214.5l7.7 .4 .8 2.7zM479.9 213.5l-7.5-1-1.1-1.9zM191.4 520l2.9 7.4-1.8-4.8zM486.7 249l6.4 4.7-6.8 .4zM492.8 259l-6.5-4.9 6.8-.4zM527.3 293.3l-7.9 .1 .9-6.3zM513.2 281.1l7.1 6-7.9 .2zM498.5 269.8l8.1-.4-.7 5.9zM578.2 338.2l5 7.9-6.3-.6zM578.2 338.2l-1.3 7.3-5.2-7.9zM553.8 322l6.9 .3-1.2 7.2zM540.9 307.2l6.6 7.3-7.7-.2zM540.9 307.2l-7.7-.1 1-6.9z"/>
<path fill="#c52cd4" stroke="#c52cd4" stroke-width="0.7" d="M267.8 610.4l6.7 4.1-1.5 2zM273 616.5l1.5-2 5.3 6zM251.6 592.4l4.7 6.9-6.3-4.7zM267.8 610.4l-6.6-4.4 1.5-2.1zM261.2 606l-4.9-6.7 6.4 4.6zM292.5 629.9l5.8 5.3-7-3.3zM191.4 520l-2.5-7.5 2.4 6.4zM197.8 530l3.6 6-.6 1.5zM197.8 530l-.5 1.4-2.9-7.5zM197.3 531.4l-3.2-6.2 .3-1.3zM214.7 553.4l5 5.4-1.2 2zM218.5 560.8l1.2-2 3.9 7.2zM233.4 578.2l1.4-2.1 4.5 6.9zM214.7 553.4l-1.2 1.8-3.6-7.5zM470.7 240.6l8 4-6.8 .7zM467.1 220.5l-7.9 .4-.5-3.3zM468.2 231.9l-8.2-3.4 7.9-.7zM467.5 224l.4 3.8-8.3-3.3zM462.6 208.1l8.7 2.5-7.6-.8zM464.8 212l.9 2.5-8.7-2.7zM462.6 208.1l1.1 1.7-8.8-2.3zM188.3 510.1l-1-2.5 2.4 7.5zM485.9 259.6l-6.4-4.8 6.8-.7zM498.5 269.8l-.7 6-6.2-5.3zM485.9 259.6l6.4 5-7 .8zM505.2 281.4l7.2 5.9-8.1 .5zM559.5 329.5l-1.4 7.2-5.6-7.5zM525.3 307.2l-6.9-6.8 8-.2zM511.4 293.8l8-.4-1 7zM538.5 321.6l1.3-7.3 6.5 7.4zM525.3 307.2l7.9-.1-1.2 7.2z"/>
<path fill="#850cfa" stroke="#850cfa" stroke-width="0.7" d="M241 594.8l.8-1.5 4.9 6.6zM301.5 645.7l-6.4-4.3 6.9 3.3zM276.6 626l6 5.5-6.7-4.1zM203.6 547.2l.2 1-3.5-7.2zM241 594.8l-5-6.5 5.8 5zM220.8 571.1l5.1 5.4-.6 1.5zM494.6 216.6l-1.2-1.4 7.1 2.9zM499.2 216.9l1.3 1.2-7.1-2.9zM503.3 218.3l5.5 2.4 1.6 .5zM488.4 216.7l-1.1-1.9 8.4 3.5zM500 248.5l-7.8-4.6 7.8 0zM492.2 243.9l0-4.5 7.8 4.5zM483.2 224l7.6 .5 .6 3.3zM490.8 224.5l-8.2-3.6 7.5 .7zM491.8 231.3l-8.1-3.9 7.7 .4zM197.4 534.7l3.3 7.2-1.9-4.6zM590.3 339.8l-5-7.8 5.6 2zM601 344.2l-5.3-2.2 .6-5.9zM500 248.5l7.7 4.9-7.9 0zM507.7 253.4l-.3 5-7.6-5zM514.9 263.8l-7.8 0 .3-5.4zM528.9 281.1l6.8 6.2-7.5-.2zM542.4 293.8l-7.5-.4 .8-6.1zM567.4 322.7l.8-6.8 5.6 7.5zM567.4 322.7l-5.8-7.3 6.6 .5zM555.7 308.2l-7.3-.6 .7-6.7zM542.4 293.8l6.7 7.1-7.3-.5z"/>
<path fill="#9d16ee" stroke="#9d16ee" stroke-width="0.7" d="M242.8 591.5l4.8 6.8-5.8-5zM265.2 614.1l-6.4-4.5 1.1-1.7zM289.6 635.4l6.8 3.4-.7 1.4zM315.6 651.9l-.5 1-6.6-3.9zM302.6 643.5l-.6 1.2-6.3-4.5zM302 644.7l7 3.2-.5 1.1zM204 544.8l-.3 1.2-3.4-7.2zM197.1 533.8l3.1 6.2 .1 1zM242.8 591.5l-1 1.8-4.9-6.6zM231.3 581.7l.9-1.7 4.7 6.7zM204 544.8l3.6 7.4-3.9-6.2zM212.6 556.7l4 7.3-4.7-5.8zM492 214.2l-1.5-.7 7.2 2.6zM493.4 248.6l-7.9-4.5 6.7-.2zM484.3 239.6l1.2 4.5-8-4.1zM492 214.2l1.4 1-8.6-3.1zM493.4 215.2l-7.3-1.9-1.3-1.2zM478.8 211.8l7.3 1.5 1.2 1.5zM481.9 218.1l.7 2.8-8.4-3.3zM483.2 224l-8.3-3.5 7.7 .4zM483.2 224l.5 3.4-8.3-3.6zM484 231.2l-8.2-3.8 7.9 0zM197.4 534.7l-1.9-4.7-1.2-2.6zM499.5 258.6l-6.4-4.9 6.7-.3zM499.8 253.4l-6.7 .3 .3-5.1zM527.3 293.3l.9-6.2 6.7 6.3zM520.3 287.1l.8-6.2 7.1 6.2zM514.5 269.2l-.6 5.8-7.3-5.6zM578.2 338.2l1.1-7.1 5.1 7.8zM578.2 338.2l6.2 .7-1.2 7.2zM590.3 339.8l-1.1 7.1-4.8-8zM578.2 338.2l-5.3-7.8 6.4 .7zM567.4 322.7l5.5 7.7-6.6-.6zM534.9 293.4l6.9 7-7.6-.2zM540.9 307.2l.9-6.8 6.6 7.2z"/>
<path fill="#8d0ff8" stroke="#8d0ff8" stroke-width="0.7" d="M252.7 604.9l-6-5 .9-1.6zM301.5 645.7l7 3.3-.4 .8zM288.9 636.7l6.8 3.5-.6 1.2zM295.7 640.2l6.3 4.5-6.9-3.3zM252.7 604.9l6.1 4.7-.9 1.6zM264.2 615.8l-6.3-4.6 .9-1.6zM288.9 636.7l-6.3-5.2 7 3.9zM276.6 626l-6.7-4.2 .9-1.6zM270.8 620.2l-.9 1.6-5.7-6zM197.4 534.7l2.9 6.3 .4 .9zM231.3 581.7l5.6 5-.9 1.6zM211.5 559.5l-4.1-6.1 .2-1.2zM203.6 547.2l.1-1.2 3.7 7.4zM231.3 581.7l4.7 6.6-5.5-5zM220.8 571.1l.7-1.5 4.4 6.9zM211.5 559.5l.4-1.3 4.1 7.2zM503.3 218.3l1.5 .6-7.1-2.8zM497.7 216.1l7.1 2.8-5.6-2zM484 231.2l7.8 .1 .2 3.9zM484.3 239.6l-.1-4.4 8 4.2zM481.9 218.1l7.4 1 .8 2.5zM483.2 224l-.6-3.1 8.2 3.6zM483.2 224l8.2 3.8-7.7-.4zM489.3 219.1l-8.4-3.5 7.5 1.1zM590.3 339.8l.6-5.8 4.8 8zM514.5 269.2l-7.4-5.4 7.8 0zM528.2 287.1l7.5 .2-.8 6.1zM528.9 281.1l-7.8-.2 .6-5.9zM585.3 332l-.9 6.9-5.1-7.8zM555.7 308.2l5.9 7.2-6.8-.4zM542.4 293.8l-.6 6.6-6.9-7zM548.4 307.6l-6.6-7.2 7.3 .5z"/>
<path fill="#9311f6" stroke="#9311f6" stroke-width="0.7" d="M241.8 593.3l5.8 5-.9 1.6zM288.9 636.7l.7-1.3 6.1 4.8zM290.4 633.8l6 5-6.8-3.4zM308.1 649.8l.4-.8 6.6 3.9zM301.5 645.7l.5-1 6.5 4.3zM276.6 626l6.8 4-.8 1.5zM282.6 631.5l.8-1.5 6.2 5.4zM203.6 547.2l-3.3-6.2-.1-1zM236 588.3l.9-1.6 4.9 6.6zM207.6 552.2l-.2 1.2-3.7-7.4zM211.5 559.5l-3.9-7.3 4.3 6zM216.6 564l-.6 1.4-4.1-7.2zM492 214.2l7.2 2.7-5.8-1.7zM492 214.2l5.7 1.9 1.5 .8zM500 248.5l-6.6 .1-1.2-4.7zM494.6 216.6l-8.5-3.3 7.3 1.9zM494.6 216.6l-7.3-1.8-1.2-1.5zM484.2 235.2l7.8 0 .2 4.2zM481.9 218.1l8.2 3.5-7.5-.7zM483.2 224l-7.8-.2-.5-3.3zM484 231.2l-.3-3.8 8.1 3.9zM481.9 218.1l-1-2.5 8.4 3.5zM194.3 527.4l1.2 2.6-3-7.4zM197.4 534.7l1.4 2.6-3.3-7.3zM500 248.5l-.2 4.9-6.4-4.8zM601 344.2l-.7 5.9-4.6-8.1zM499.5 258.6l.3-5.2 7.6 5zM499.5 258.6l7.9-.2-.3 5.4zM528.9 281.1l-.7 6-7.1-6.2zM514.5 269.2l7.2 5.8-7.8 0zM521.1 280.9l-7.2-5.9 7.8 0zM590.3 339.8l-5.9-.9 .9-6.9zM567.4 322.7l6.4 .7-.9 7zM579.3 331.1l-6.4-.7 .9-7zM555.7 308.2l-.9 6.8-6.4-7.4z"/>
<path fill="#b623dd" stroke="#b623dd" stroke-width="0.7" d="M254.8 601.4l-6.1-4.8 1.3-2zM250 594.6l-1.3 2-4.6-6.9zM290.4 633.8l.9-1.9 6 5.2zM278.5 622.5l6.9 3.8-1.1 2zM200.3 538.8l-3-7.4 3.5 6.1zM217.4 562.4l-3.9-7.2 5 5.6zM478.7 244.6l-1.2-4.6 8 4.1zM488.9 213.2l1.6 .3-8.7-2.7zM477.5 210.4l1.3 1.4-8.7-2.7zM470.1 209.1l8.7 2.7-7.5-1.2zM468.2 231.9l7.9-.6 .2 4.3zM467.5 224l8.3 3.4-7.9 .4zM466.5 217.4l8.4 3.1-7.8 0zM467.5 224l-.4-3.5 8.3 3.3zM464.8 212l7.6 .5 1 2.4zM191.4 520l1.1 2.6-2.8-7.5zM498.5 269.8l-6.2-5.2 6.8-.5zM492.3 264.6l.5-5.6 6.3 5.1zM486.7 249l-.4 5.1-6.4-4.6zM599.4 356l-1.1 6.1-4.5-7.1zM513.2 281.1l-8 .3 .7-6.1zM505.9 275.3l-.7 6.1-7.4-5.6zM519.4 293.4l-7-6.1 7.9-.2zM587.9 354.2l1.3-7.3 4.6 8.1zM587.9 354.2l-4.7-8.1 6 .8zM570.2 344.9l1.5-7.3 5.2 7.9zM565 337.1l-5.5-7.6 6.8 .3zM565 337.1l1.3-7.3 5.4 7.8zM527.3 293.3l-.9 6.9-7-6.8zM553.8 322l-7.5-.3 1.2-7.2zM534.2 300.2l-1 6.9-6.8-6.9zM540.9 307.2l-1.1 7.1-6.6-7.2z"/>
<path fill="#ac1ee3" stroke="#ac1ee3" stroke-width="0.7" d="M242.8 591.5l1.3-1.8 4.6 6.9zM254.8 601.4l-1.1 1.8-5-6.6zM302.6 643.5l-6.2-4.7 7 3.2zM290.4 633.8l6.9 3.3-.9 1.7zM315.6 651.9l-6.6-4 7.1 2.8zM302.6 643.5l7.1 3-.7 1.4zM278.5 622.5l-1.1 1.9-5.7-6zM278.5 622.5l5.8 5.8-6.9-3.9zM197 532.7l.1 1.1-3-7.4zM194.1 526.4l3 7.4-2.8-6.4zM222.5 567.9l5.3 5.3-1.1 1.7zM233.4 578.2l-1.2 1.8-4.4-6.8zM227.8 573.2l4.4 6.8-5.5-5.1zM204 544.8l.6-1.4 3.5 7.5zM212.6 556.7l-4.5-5.8 .8-1.5zM488.9 213.2l7.3 2.4-5.7-2.1zM479.9 213.5l-8.6-2.9 7.5 1.2zM476.1 231.3l8.1 3.9-7.9 .4zM485.9 259.6l6.9-.6-.5 5.6zM499.5 258.6l-.4 5.5-6.3-5.1zM498.5 269.8l.6-5.7 7.5 5.3zM513.2 281.1l-7.3-5.8 8-.3zM599.4 356l-5.6-1 1.2-7.1zM593.8 355l-4.6-8.1 5.8 1zM587.9 354.2l-6.2-.7 1.5-7.4zM560.7 322.3l5.6 7.5-6.8-.3zM527.3 293.3l6.9 6.9-7.8 0z"/>
<path fill="#a71be7" stroke="#a71be7" stroke-width="0.7" d="M254.8 601.4l5.1 6.5-6.2-4.7zM265.2 614.1l-5.3-6.2 6.5 4.4zM315.6 651.9l.5-1.2 6.6 3.9zM290.4 633.8l-7-3.8 .9-1.7zM197 532.7l3.2 7.3-3.1-6.2zM197 532.7l-2.9-6.3 0-1.2zM242.8 591.5l-5.9-4.8 1.1-1.7zM232.2 580l5.8 5-1.1 1.7zM222.5 567.9l4.2 7-5.2-5.3zM222.5 567.9l-1 1.7-4.1-7.2zM486.7 249l-1.2-4.9 7.9 4.5zM492 214.2l-8.6-2.9 7.1 2.2zM477.5 210.4l7.3 1.7 1.3 1.2zM477.5 210.4l8.6 2.9-7.3-1.5zM492 214.2l-7.2-2.1-1.4-.8zM484.3 239.6l-8-4 7.9-.4zM484 231.2l-7.9 .1-.3-3.9zM466.5 217.4l-.8-2.9 8.5 3.1zM481.9 218.1l-7.7-.5-.8-2.7zM479.9 213.5l1 2.1-8.5-3.1zM473.4 214.9l-1-2.4 8.5 3.1zM499.5 258.6l-6.7 .4 .3-5.3zM599.4 356l-4.4-8.1 5.3 2.2zM513.2 281.1l7.9-.2-.8 6.2zM506.6 269.4l7.3 5.6-8 .3zM583.2 346.1l1.2-7.2 4.8 8zM553.8 322l1-7 5.9 7.3zM578.2 338.2l-6.5-.6 1.2-7.2zM553.8 322l-6.3-7.5 7.3 .5z"/>
<path fill="#a219eb" stroke="#a219eb" stroke-width="0.7" d="M258.8 609.6l-5.1-6.4 6.2 4.7zM242.8 591.5l5.9 5.1-1.1 1.7zM248.7 596.6l5 6.6-6.1-4.9zM302.6 643.5l-6.9-3.3 .7-1.4zM302.6 643.5l6.4 4.4-7-3.2zM315.6 651.9l-7.1-2.9 .5-1.1zM290.4 633.8l-.8 1.6-6.2-5.4zM265.2 614.1l6.5 4.3-.9 1.8zM271.7 618.4l5.7 6-6.6-4.2zM283.4 630l-6-5.6 6.9 3.9zM197.4 534.7l-3.1-7.3 2.8 6.4zM231.3 581.7l-4.6-6.8 5.5 5.1zM204 544.8l4.1 6.1-.5 1.3zM212.6 556.7l-.7 1.5-3.8-7.3zM221.5 569.6l-4.9-5.6 .8-1.6zM490.5 213.5l5.7 2.1 1.5 .5zM484.3 239.6l7.9 4.3-6.7 .2zM479.9 213.5l-1.1-1.7 8.5 3zM484 231.2l.2 4-8.1-3.9zM474.2 217.6l8.4 3.3-7.7-.4zM467.5 224l7.9-.2 .4 3.6zM475.4 223.8l8.3 3.6-7.9 0zM481.9 218.1l-8.5-3.2 7.5 .7zM486.7 249l6.7-.4-.3 5.1zM499.5 258.6l7.6 5.2-8 .3zM499.1 264.1l8-.3-.5 5.6zM527.3 293.3l-7-6.2 7.9 0zM513.2 281.1l.7-6.1 7.2 5.9zM590.3 339.8l4.7 8.1-5.8-1zM567.4 322.7l-1.1 7.1-5.6-7.5zM540.9 307.2l7.5 .4-.9 6.9zM547.5 314.5l.9-6.9 6.4 7.4zM527.3 293.3l7.6 .1-.7 6.8zM540.9 307.2l-6.7-7 7.6 .2z"/>
<path fill="#7607fc" stroke="#7607fc" stroke-width="0.7" d="M288.9 636.7l6.2 4.7-6.7-3.6zM301.5 645.7l-6.8-3.4 .4-.9zM307.9 650.4l-6.7-3.9 6.9 3.3zM241 594.8l5.7 5.1-.8 1.5zM282 632.8l-6.1-5.4 6.7 4.1zM211.5 559.5l4.2 7.2-4.3-6zM241 594.8l-5.7-4.9 .7-1.6zM220.8 571.1l4.5 6.9-5-5.5zM215.7 566.7l.3-1.3 4.3 7.1zM220.8 571.1l-4.8-5.7 .6-1.4zM500 248.5l0-4.6 6.5 4.7zM494.6 216.6l7 3.1-5.9-1.4zM506.2 219.9l-5.7-1.8-1.3-1.2zM494.6 216.6l5.9 1.5 1.1 1.6zM506.2 219.9l-7-3 5.6 2zM496.7 220.3l-8.3-3.6 7.3 1.6zM500 239.6l-8-4.4 7.7 .4zM499.7 235.6l-7.7-.4-.2-3.9zM497.6 222.7l-7.5-1.1-.8-2.5zM498.3 225.5l-7.5-1-.7-2.9zM499.4 231.9l-7.6-.6-.4-3.5zM585.8 326.2l5.1 7.8-5.6-2zM601 344.2l-4.7-8.1 5.1 2.4zM500 248.5l6.5 .1 1.2 4.8zM515.2 258.6l-7.8-.2 .3-5zM515.2 258.6l-.3 5.2-7.5-5.4zM568.2 315.9l-6.6-.5 .8-6.7z"/>
<path fill="#6000ff" stroke="#6000ff" stroke-width="0.7" d="M288.1 638.6l.3-.8 6.3 4.5zM294.7 642.3l6.5 4.2-6.7-3.6zM251.2 607.7l-5.3-6.3 5.9 5zM263.4 617.3l-.5 1.2-5.7-5.9zM251.2 607.7l.6-1.3 5.4 6.2zM263.4 617.3l5.9 5.8-6.4-4.6zM275.3 628.6l-6-5.5 6.6 4.3zM230 584.7l5.3 5.2-.5 1.2zM240.4 596.1l-5.6-5 .5-1.2zM211.6 561.7l-3.8-6.2-.3-1zM215.7 567.8l-4.3-7.1 4.3 6zM207.4 553.4l4 7.3-3.9-6.2zM220.1 573.6l.2-1.1 4.6 6.8zM220.1 573.6l-4.4-6.9 4.6 5.8zM500 239.6l-.3-4 6.7 4.4zM500 239.6l6.4 .4 .1 4.1zM496.7 220.3l7 3.5-6.1-1.1zM517.4 224.5l-1.5-.7 6.8 3.3zM506.2 219.9l1.3 1.4-7-3.2zM506.2 219.9l5.7 2.2 1.3 1.1zM591.3 328.2l5.3 2.3-.3 5.6zM580.1 324.2l-5.5-7.5 5.8 1.8zM580.1 324.2l.3-5.7 5.4 7.7zM529.7 269.8l-.3 5.5-7.2-5.9zM562.9 302.2l-.5 6.5-6.1-7.1zM568.8 309.4l5.8 7.3-6.4-.8zM555.7 308.2l-6.6-7.3 7.2 .7z"/>
<path fill="#6f05fd" stroke="#6f05fd" stroke-width="0.7" d="M295.1 641.4l-.4 .9-6.3-4.5zM301.5 645.7l-.3 .8-6.5-4.2zM263.4 617.3l-6.2-4.7 .7-1.4zM257.9 611.2l-.7 1.4-5.4-6.2zM288.9 636.7l-.5 1.1-6.4-5zM263.4 617.3l6.5 4.5-.6 1.3zM275.9 627.4l-6.6-4.3 .6-1.3zM241 594.8l-.6 1.3-5.1-6.2zM204.3 549l-3.6-7.1 3.1 6.3zM230 584.7l-4.7-6.7 5.2 5.3zM500 239.6l6.5 4.5-6.5-.2zM506.2 219.9l-1.4-1 7.1 3.2zM511.9 222.1l-7.1-3.2 5.6 2.3zM494.6 216.6l1.1 1.7-8.4-3.5zM499.4 231.9l.3 3.7-7.9-4.3zM496.7 220.3l.9 2.4-8.3-3.6zM491.4 227.8l-.6-3.3 8.1 4zM580.1 324.2l5.7 2-.5 5.8zM591.3 328.2l5 7.9-5.4-2.1zM528.9 281.1l7.4 .3-.6 5.9zM528.9 281.1l-7.2-6.1 7.7 .3zM529.4 275.3l-7.7-.3 .5-5.6zM580.1 324.2l5.2 7.8-6-.9zM555.7 308.2l.6-6.6 6.1 7.1zM580.1 324.2l-6.3-.8 .8-6.7zM573.8 323.4l-5.6-7.5 6.4 .8zM542.4 293.8l7.2 .6-.5 6.5z"/>
<path fill="#7e0afb" stroke="#7e0afb" stroke-width="0.7" d="M301.5 645.7l6.6 4.1-6.9-3.3zM252.7 604.9l-.9 1.5-5.1-6.5zM252.7 604.9l5.2 6.3-6.1-4.8zM263.4 617.3l.8-1.5 5.7 6zM288.9 636.7l-6.9-3.9 .6-1.3zM276.6 626l-.7 1.4-6-5.6zM200.7 541.9l-.4-.9 3.5 7.2zM203.6 547.2l3.8 6.2 .1 1.1zM211.5 559.5l-.1 1.2-4-7.3zM235.3 589.9l-4.8-6.6 5.5 5zM231.3 581.7l-.8 1.6-4.6-6.8zM225.3 578l.6-1.5 4.6 6.8zM211.5 559.5l4.5 5.9-.3 1.3zM220.8 571.1l-.5 1.4-4.3-7.1zM515.9 223.8l-5.5-2.6-1.6-.5zM503.3 218.3l7.1 2.9-5.6-2.3zM479.9 213.5l7.4 1.3 1.1 1.9zM500 239.6l0 4.3-7.8-4.5zM484 231.2l8 4-7.8 0zM500 239.6l-7.8-.2-.2-4.2zM496.7 220.3l-7.4-1.2-.9-2.4zM590.9 334l5.4 2.1-.6 5.9zM514.5 269.2l.4-5.4 7.3 5.6zM514.5 269.2l7.7 .2-.5 5.6zM555.7 308.2l6.7 .5-.8 6.7zM580.1 324.2l-.8 6.9-5.5-7.7z"/>
<path fill="#5802ff" stroke="#5802ff" stroke-width="0.7" d="M288.1 638.6l6.6 3.7-.2 .6zM301.1 647l-6.6-4.1 6.7 3.6zM288.1 638.6l-6.5-4.9 6.8 4.1zM275.3 628.6l6.7 4.2-.4 .9zM204.3 549l3.5 6.5 .4 .4zM204.3 549l-.5-.8 4 7.3zM220.1 573.6l-4.4-5.8 0-1.1zM211.6 561.7l-.2-1 4.3 7.1zM512.9 249l-6.4-.4 0-4.5zM499.4 231.9l6.7 4.2-6.4-.5zM506.1 236.1l.3 3.9-6.7-4.4zM498.3 225.5l-.7-2.8 6.9 3.7zM499.4 231.9l-.5-3.4 6.8 4zM498.3 225.5l6.8 3.8-6.2-.8zM508.6 223l-5.9-1.5-1.1-1.8zM506.2 219.9l7 3.3-5.7-1.9zM508.6 223l-7-3.3 5.9 1.6zM500.5 218.1l7 3.2-5.9-1.6zM496.7 220.3l6 1.2 1 2.3zM591.3 328.2l-5.5-2 .3-5.8zM580.4 318.5l5.7 1.9-.3 5.8zM512.9 249l1.2 4.7-7.6-5.1zM515.2 258.6l-1.1-4.9 7.5 5.3zM529.7 269.8l-7.5-.4 .3-5.3zM536.8 275.8l-.5 5.6-6.9-6.1zM568.8 309.4l-.6 6.5-5.8-7.2zM556.6 295.3l-.3 6.3-6.7-7.2z"/>
<path fill="#ffff2a" stroke="#ffff2a" stroke-width="0.7" d="M312.8 513.4l3.8 7.2-8.6-2.3zM422.3 610.8l-4.1 5.2-5.2-4.4zM422.3 610.8l5.2 4.2-9.3 1zM432.7 619l-9.3 1.1 4.1-5.1zM427.5 615l-4.1 5.1-5.2-4.1zM328.8 541.6l-4.1-6.9 7.4-.5zM320.6 527.7l7.4-.5-3.3 7.5zM324.7 534.7l3.3-7.5 4.1 7zM352.8 553.6l-3.2 7.3-4.5-6.5zM344 540.4l-3.3 7.4-4.3-6.7zM336.4 541.1l4.3 6.7-7.6 .6zM352.8 553.6l-7.7 .8 3.2-7.3zM340.7 547.8l7.6-.7-3.2 7.3zM328.8 541.6l3.3-7.4 4.3 6.9zM344 540.4l-4.3-6.9 7.7-.7zM347.4 532.8l-7.7 .7 3.5-7.7zM398.2 587.9l-3.2 6.6-5-5.3zM395 594.5l-8.3 1.1 3.3-6.4zM371.9 578.8l-4.8-5.9 8.2-.8zM362.4 566.8l8.1-.8-3.4 6.9zM375.3 572.1l-8.2 .8 3.4-6.9zM386.8 564l4.9 5.9-8.2 1.2zM371.9 578.8l3.4-6.7 4.8 5.8zM381.7 590.2l3.3-6.6 5 5.6zM371.9 578.8l8.2-.9-3.3 6.7zM380.1 577.9l4.9 5.7-8.2 1zM352.8 553.6l4.8 6.7-8 .6zM362.4 566.8l-8 .6 3.2-7.1zM349.6 560.9l8-.6-3.2 7.1zM362.4 566.8l-4.8-6.5 8.1-.7zM550.7 508.1l-5.4-5.3 6.8-2.6zM539.7 497.3l6.9-2.5-1.3 8zM552.1 500.2l-6.8 2.6 1.3-8zM515.3 474.4l-.9 8.2-6.4-5.9zM527.8 486l-1.1 8.1-6.1-5.7zM515.3 474.4l6.4 5.9-7.3 2.3zM527.8 486l-7.2 2.4 1.1-8.1zM521.7 480.3l-1.1 8.1-6.2-5.8zM539.7 497.3l1.2-8 5.7 5.5zM527.8 486l6.1 5.7-7.2 2.4zM539.7 497.3l-7 2.5 1.2-8.1zM539.7 497.3l-5.8-5.6 7-2.4zM527.8 486l7.1-2.4-1 8.1zM410.3 599.9l-9.3 .6 3.2-6.4zM404.2 594.1l-3.2 6.4-6-6zM422.3 610.8l-9.3 .8 3.3-6.1zM410.3 599.9l6 5.6-9.3 .7zM413 611.6l-6-5.4 9.3-.7zM410.3 599.9l-3.3 6.3-6-5.7zM407.6 587.4l6 6-9.4 .7zM515.3 474.4l-7.3 2.3 3.3-9zM504 470l7.3-2.3-3.3 9zM472.4 438.5l-7.8 2 2.8-8.8zM467.4 431.7l-2.8 8.8-5-6.8zM482.2 452.1l-7.8 2.1 2.9-8.9zM472.4 438.5l4.9 6.8-7.8 2.1zM474.4 454.2l-4.9-6.8 7.8-2.1zM453.7 451.4l8-2-3 8.8zM472.4 438.5l-2.9 8.9-4.9-6.9zM491.6 465.6l7.8-2.3-3.3 9zM507.2 461l-3.2 9-4.6-6.7zM496.1 472.3l3.3-9 4.6 6.7zM491.6 465.6l-4.7-6.7 7.9-2.3zM490.1 449.8l4.7 6.8-7.9 2.3zM491.6 465.6l3.2-9 4.6 6.7zM482.2 452.1l-4.9-6.8 7.9-2.4zM361 328l6 4.6-9 2.5zM373 337.4l-9 2.3 3-7.1zM367 332.6l-3 7.1-6-4.6zM367.1 351.8l3-7.3 6.1 5zM373 337.4l6.1 4.8-9 2.3zM376.2 349.5l-6.1-5 9-2.3zM373 337.4l-2.9 7.1-6.1-4.8zM392 372.6l2.8-7.6 6.3 5.4zM379.5 362l6.2 5.3-9 2.3zM379.5 362l2.9-7.4 6.2 5.1zM392 372.6l-6.3-5.3 9.1-2.3zM379.5 362l9.1-2.3-2.9 7.6zM385.7 367.3l2.9-7.6 6.2 5.3zM367.1 351.8l-2.8 7.5-6.1-4.9zM385.3 347.2l-2.9 7.4-6.2-5.1zM382.4 354.6l-9.1 2.3 2.9-7.4zM361.5 366.9l9-2.5-2.8 7.6zM462.4 424.9l-2.8 8.8-6.5-6.8zM459.6 433.7l-9.4 2.1 2.9-8.9zM404.2 386.2l-6.1-6.8 9.1-2.2zM404.2 386.2l3-9 6.6 6.9zM417.5 400.1l-6.6-7 9.5-2.1zM404.2 386.2l9.6-2.1-2.9 9zM420.4 391l-9.5 2.1 2.9-9zM443.7 429l3-9.3 6.4 7.2zM453.1 426.9l-6.4-7.2 9.3-2.1zM430.8 414.5l6.5 7.2-9.4 2.1zM443.7 429l-9.4 2 3-9.3zM430.8 414.5l2.9-9.3 6.5 7.2zM417.5 400.1l9.5-2-2.8 9.2zM433.7 405.2l-9.5 2.1 2.8-9.2zM312.8 513.4l-4.8 4.9-1.9-9.1zM299.4 504.9l6.7 4.3-4.9 4.9zM308 518.3l-6.8-4.2 4.9-4.9zM286.6 496l6.4 4.5-4.8 4.8zM299.4 504.9l-4.8 4.8-1.6-9.2zM299.4 504.9l1.8 9.2-6.6-4.4zM305.5 228.8l6.8-3.8 .5 .7zM305.5 228.8l-.7-.4 7.5-3.4zM304.8 228.4l6.9-3.7 .6 .3zM318.2 221.4l-7 3.3-.4 .2zM304.2 228.2l7-3.5 .5 0zM318.2 221.4l-7.4 3.5 7.1-3.2zM313.2 247.1l.9 3.6-7.2 2zM315.2 254.5l-7.2 2 6.1-5.8zM314.1 250.7l-6.1 5.8-1.1-3.8zM315.2 254.5l1.2 4.1-7.3 1.9zM310.4 264.7l-1.3-4.2 7.3-1.9zM315.2 254.5l-6.1 6-1.1-4zM317.8 262.9l1.5 4.5-7.4 1.7zM320.9 272.1l-7.5 1.7 5.9-6.4zM319.3 267.4l-5.9 6.4-1.5-4.7zM320.9 272.1l-5.8 6.6-1.7-4.9zM306.2 275.6l-7.2 2.1 5.6-6.7zM324.4 282.2l-1.8-5.1 7.9-1.5zM192.9 363.6l2-7.2 1 2.3zM197.1 349.3l2.5-7 .6 2.1zM203.5 339.6l-.7-2.2 3.4-4.8zM305.5 228.8l7.3-3.1-7 4.2zM306.3 231.3l-.5-1.4 7.5-2.9zM312.8 225.7l.5 1.3-7.5 2.9zM306.3 231.3l7.6-2.7-6.9 4.5zM313.2 247.1l-6.3 5.6-2-3.3zM296.9 252l-6.1 5.9-1.8-3zM313.2 247.1l-8.3 2.3 6.7-5.7zM310.2 240.5l1.4 3.2-8.2 2.4zM304.9 249.4l-1.5-3.3 8.2-2.4zM287.7 251.9l7.8-3-6.5 6zM307.9 235.2l1.1 2.5-8 2.8zM310.2 240.5l-8.1 2.6 6.9-5.4zM309 237.7l-6.9 5.4-1.1-2.6zM310.2 240.5l-6.8 5.6-1.3-3zM306.3 231.3l-7.7 3.2 7.2-4.6zM307.9 235.2l-7.9 2.9 7-5zM306.3 231.3l.7 1.8-7.8 3.1zM281.4 258.1l-1.3-2.8 7.6-3.4zM301 240.5l-7.8 3 6.8-5.4zM192.9 363.6l-1.5 .5 3.5-7.7zM191.4 364.1l2.1-7.2 1.4-.5zM194.7 350.5l-2.4 7-.9 .8zM194.7 350.5l1.1-.7-3.5 7.7zM192.3 357.5l3.5-7.7-2.3 7.1zM193.3 352l-.3 1 3.1-7.9zM196.1 345.1l-3.1 7.9 3-6.9zM194.7 350.5l-3.3 7.8 2.4-7.1zM193.3 352l2.8-6.9 .5-.9zM193.3 352l3.3-7.8-2.8 7zM194.7 350.5l-.9 .7 3.5-7.7zM192.9 363.6l3-4.9-2.9 9.1zM193.3 372.1l-.3-4.3 3-4.9zM195.9 358.7l.1 4.2-3 4.9zM199.7 362.5l-2.7 9.2-.6-4.4zM193.3 372.1l2.7-9.2 .4 4.4zM201.5 371.6l-2.4 9.2-1.2-4.5zM201.5 371.6l1.2 4.6-3.6 4.6zM204.3 380.8l-3.8 4.7 2.2-9.3zM199.1 380.8l3.6-4.6-2.2 9.3zM201.5 371.6l2.7-9.2 1.1 4.6zM194.7 381l2.3-9.3 .9 4.6zM197 371.7l3.4-4.7-2.5 9.3zM219.2 410.1l3.3 4.9-4.5 4.4zM226.1 419.9l-4.6 4.4 1-9.3zM208.3 390.6l-1.8 9.2-2.2-4.7zM215 391l-4.3 4.4 1.9-9.2zM213.2 400.3l-1.4 9.2-2.8-4.8zM213.2 400.3l-4.2 4.4 1.7-9.3zM210.7 395.4l-1.7 9.3-2.5-4.9zM213.2 400.3l2.9 4.9-4.3 4.3zM219.2 410.1l-4.4 4.4 1.3-9.3zM208.3 390.6l-4 4.5 1.9-9.4zM202.2 390.1l4-4.4-1.9 9.4zM212.6 386.2l-2.3-4.9 4.5-4.4zM324.4 282.2l7.6-1.3-3.5 6.2zM332.8 292.3l-4.3-5.2 7.7-1.2zM361 328l-3 7.1-5.2-6.3zM346.8 343.2l-5.2-6.2 8.1-1zM361 328l-8.2 .8 3.3-7.3zM344.6 329.8l3.2-7.3 5 6.3zM352.8 328.8l-5-6.3 8.3-1zM351.2 315.3l-8.2 1 3.4-7.1zM351.2 315.3l-3.4 7.2-4.8-6.2zM324.4 282.2l4.1 4.9-7.9 1.6zM332.8 292.3l-8 1.4 3.7-6.6zM341.8 303.4l-8.1 1.1 3.5-6.8zM332.8 292.3l4.4 5.4-8 1.3zM333.7 304.5l-4.5-5.5 8-1.3zM332.8 292.3l-3.6 6.7-4.4-5.3zM341.8 303.4l-3.5 6.9-4.6-5.8zM286.6 496l7.2-3.2-.8 7.7zM274.4 486.8l-5.8-4.6 6.8-3.2zM269.6 474.3l5.8 4.7-6.8 3.2zM286.6 496l-6.2-4.6 7.1-3.2zM274.4 486.8l6.9-3.2-.9 7.8zM280.4 491.4l.9-7.8 6.2 4.6zM274.4 486.8l1-7.8 5.9 4.6zM286.6 496l.9-7.8 6.3 4.6zM235.5 431.7l-1.5 8.3-4.1-4.9zM235.5 431.7l4.3 4.9-5.8 3.4zM244.4 441.6l-5.9 3.4 1.3-8.4zM239.8 436.6l-1.3 8.4-4.5-5zM264.7 461.1l-1 8.2-5.4-4.8zM257.4 472.7l.9-8.2 5.4 4.8zM254.2 451.4l-1.2 8.3-5-4.9zM254.2 451.4l5.2 4.9-6.4 3.4zM264.7 461.1l-6.4 3.4 1.1-8.2zM253 459.7l6.4-3.4-1.1 8.2zM244.4 441.6l4.8 4.9-6.1 3.4zM254.2 451.4l-6.2 3.4 1.2-8.3zM243.1 449.9l6.1-3.4-1.2 8.3zM262.9 477.4l.8-8.1 5.9 5zM263.7 469.3l6.8-3.2-.9 8.2zM235.5 431.7l-5.6 3.4 .7-9.3zM225.1 429.2l5.5-3.4-.7 9.3zM228.8 401.5l1.8-9.1 4.2 5.6z"/>
<path fill="#ffff15" stroke="#ffff15" stroke-width="0.7" d="M320.6 527.7l-8.8-2.2 4.8-4.9zM303.2 523.1l4.8-4.8 3.8 7.2zM316.6 520.6l-4.8 4.9-3.8-7.2zM328.8 541.6l-8.9-2 4.8-4.9zM311.2 537.4l4.6-4.8 4.1 7zM319.9 539.6l-4.1-7 8.9 2.1zM320.6 527.7l-4.8 4.9-4-7.1zM311.2 537.4l-4.1-7.1 8.7 2.3zM303.2 523.1l8.6 2.4-4.7 4.8zM315.8 532.6l-8.7-2.3 4.7-4.8zM328.8 541.6l4.3 6.8-9-1.9zM333.1 548.4l-4.6 4.9-4.4-6.8zM414 620.9l-5.1-4.3 9.3-.6zM403.8 612.2l9.2-.6-4.1 5zM418.2 616l-9.3 .6 4.1-5zM414 620.9l4.2-4.9 5.2 4.1zM424.4 628.8l4.2-4.8 5.1 3.7zM433.7 627.7l-5.1-3.7 9.3-1.2zM432.7 619l-4.1 5-5.2-3.9zM414 620.9l9.4-.8-4.2 4.8zM428.6 624l-9.4 .9 4.2-4.8zM312.8 513.4l7.3-.5-3.5 7.7zM346.5 567.9l-4.6-6.4 7.7-.6zM337.5 555l7.6-.6-3.2 7.1zM341.9 561.5l3.2-7.1 4.5 6.5zM337.5 555l3.2-7.2 4.4 6.6zM391.7 600.7l-5-5.1 8.3-1.1zM381.7 590.2l8.3-1-3.3 6.4zM381.7 590.2l5 5.4-8.2 .9zM391.7 600.7l-8.2 1 3.2-6.1zM346.5 567.9l7.9-.5-3.3 6.7zM362.4 566.8l-3.3 6.8-4.7-6.2zM354.4 567.4l4.7 6.2-8 .5zM362.4 566.8l4.7 6.1-8 .7zM371.9 578.8l-8.1 .8 3.3-6.7zM371.9 578.8l4.9 5.8-8.2 .7zM381.7 590.2l-8.1 .8 3.2-6.4zM368.6 585.3l8.2-.7-3.2 6.4zM383.5 571.1l-3.4 6.8-4.8-5.8zM388.4 576.9l4.9 5.6-8.3 1.1zM381.7 590.2l-4.9-5.6 8.2-1zM346.5 567.9l3.1-7 4.8 6.5zM362.4 566.8l3.3-7.2 4.8 6.4zM553.3 492.3l-1.2 7.9-5.5-5.4zM550.7 508.1l-6.8 2.6 1.4-7.9zM508 476.7l6.4 5.9-7.4 2.3zM529.6 469.7l-.8 8.2-6.3-5.8zM527.8 486l-6.1-5.7 7.1-2.4zM515.3 474.4l7.2-2.3-.8 8.2zM528.8 477.9l-7.1 2.4 .8-8.2zM553.3 492.3l-6.7 2.5 1.1-8.1zM546.6 494.8l-5.7-5.5 6.8-2.6zM541.9 481.1l-7 2.5 .9-8.2zM541.9 481.1l-1 8.2-6-5.7zM533.9 491.7l1-8.1 6 5.7zM391.7 600.7l3.3-6.2 6 6zM403.8 612.2l3.2-6 6 5.4zM391.7 600.7l9.3-.2-3.3 6.1zM401 600.5l6 5.7-9.3 .4zM410.3 599.9l9.3-.8-3.3 6.4zM553.3 492.3l5.8 2.5-7 5.4zM507.2 461l4.1 6.7-7.3 2.3zM515.3 474.4l3.3-9 3.9 6.7zM507.2 461l7.3-2.3-3.2 9zM515.3 474.4l-4-6.7 7.3-2.3zM514.5 458.7l4.1 6.7-7.3 2.3zM462.4 424.9l5 6.8-7.8 2zM466.6 456.2l-4.9-6.8 7.8-2zM491.6 465.6l-3.1 8.9-4.6-6.7zM497.9 447.5l-3.1 9.1-4.7-6.8zM497.9 447.5l4.7 6.8-7.8 2.3zM507.2 461l-7.8 2.3 3.2-9zM494.8 456.6l7.8-2.3-3.2 9zM462.4 424.9l7.9-2.4-2.9 9.2zM472.4 438.5l-5-6.8 8-2.4zM472.4 438.5l7.9-2.4-3 9.2zM477.3 445.3l3-9.2 4.9 6.8zM472.4 438.5l3-9.2 4.9 6.8zM482.2 452.1l3-9.2 4.9 6.9zM497.9 447.5l-7.8 2.3 3-9.1zM485.2 442.9l7.9-2.2-3 9.1zM361 328l3.1-6.9 6.1 4.2zM364.1 321.1l9.2-2.7-3.1 6.9zM385.3 347.2l-9.1 2.3 2.9-7.3zM410.1 368.4l-9 2 2.8-7.5zM397.7 357.6l6.2 5.3-9.1 2.1zM401.1 370.4l-6.3-5.4 9.1-2.1zM385.3 347.2l6.2 5.2-9.1 2.2zM397.7 357.6l-9.1 2.1 2.9-7.3zM391.5 352.4l-2.9 7.3-6.2-5.1zM397.7 357.6l-2.9 7.4-6.2-5.3zM385.3 347.2l9.4-2.3-3.2 7.5zM397.7 357.6l-6.2-5.2 9.4-2.3zM373 337.4l-6-4.8 9.2-2.6zM370.2 325.3l6 4.7-9.2 2.6zM373 337.4l9.3-2.6-3.2 7.4zM379.1 342.2l3.2-7.4 6.1 5zM373 337.4l3.2-7.4 6.1 4.8zM410.1 368.4l-2.9 8.8-6.1-6.8zM392 372.6l9.1-2.2-3 9zM407.2 377.2l-9.1 2.2 3-9zM462.4 424.9l-6.4-7.3 9.1-1.5zM449.6 410.4l9.1-1.6-2.7 8.8zM410.1 368.4l6.7 6.7-9.6 2.1zM423.4 382l-9.6 2.1 3-9zM416.8 375.1l-3 9-6.6-6.9zM436.6 396.1l-9.6 2 3-9.1zM423.4 382l6.6 7-9.6 2zM427 398.1l-6.6-7.1 9.6-2zM423.4 382l-3 9-6.6-6.9zM462.4 424.9l-9.3 2 2.9-9.3zM449.6 410.4l6.4 7.2-9.3 2.1zM436.6 396.1l6.5 7.1-9.4 2zM449.6 410.4l-9.4 2 2.9-9.2zM443.1 403.2l-2.9 9.2-6.5-7.2zM449.6 410.4l-2.9 9.3-6.5-7.3zM437.3 421.7l2.9-9.3 6.5 7.3zM436.6 396.1l-2.9 9.1-6.7-7.1zM430.8 414.5l-6.6-7.2 9.5-2.1zM303.2 523.1l-2-9 6.8 4.2zM293 500.5l1.6 9.2-6.4-4.4zM303.2 523.1l-6.7-4.2 4.7-4.8zM290 514.5l4.6-4.8 1.9 9.2zM296.5 518.9l-1.9-9.2 6.6 4.4zM262.9 477.4l5.7 4.8-4.7 4.7zM274.4 486.8l-4.7 4.7-1.1-9.3zM268.6 482.2l1.1 9.3-5.8-4.6zM286.6 496l-4.8 4.7-1.4-9.3zM274.4 486.8l6 4.6-4.7 4.8zM281.8 500.7l-6.1-4.5 4.7-4.8zM286.6 496l1.6 9.3-6.4-4.6zM288.2 505.3l-4.7 4.7-1.7-9.3zM262.9 477.4l-4.9 4.5-.6-9.2zM252.1 467.9l5.3 4.8-4.8 4.5zM262.9 477.4l1 9.5-5.9-5zM192.9 363.6l.1 4.2-2.8 3.4zM193.3 372.1l-3 3.3 2.7-7.6zM193 367.8l-2.7 7.6-.1-4.2zM194.7 381l-3.3 3.2 2.4-7.7zM193.3 372.1l.5 4.4-3.1 3.3zM191.4 384.2l-.7-4.4 3.1-3.3zM193.3 372.1l-2.6 7.7-.4-4.4zM194.7 381l1 4.6-3.4 3.2zM197.1 390.2l-3.6 3.2 2.2-7.8zM319.3 221.5l.4 .6-7.4 2.9zM320.3 222.9l-7.5 2.8 6.9-3.6zM312.3 225l7.4-2.9-6.9 3.6zM304.2 228.2l7.5-3.5-6.9 3.7zM319.3 221.5l-7 3.5-.6-.3zM319.3 221.5l-.6-.2 7.7-3zM318.2 221.4l7.6-3.2-7.1 3.1zM318.2 221.4l.5-.1-7.5 3.4zM319.3 221.5l-7.6 3.2 7-3.4zM311.2 224.7l7.5-3.4-7 3.4zM318.2 221.4l7.3-3 .3-.2zM318.2 221.4l-.3 .3 7.6-3.3zM324.4 282.2l6.1-6.6 1.5 5.3zM339.7 279.7l-7.7 1.2 6.1-6.5zM317.8 262.9l-7.4 1.8 6-6.1zM320.9 272.1l1.7 5-7.5 1.6zM313.2 247.1l6.4-5.3 1.1 3.3zM320.9 272.1l7.8-1.5-6.1 6.5zM322.6 277.1l6.1-6.5 1.8 5zM317.8 262.9l7.7-1.7-6.2 6.2zM320.9 272.1l-1.6-4.7 7.8-1.6zM325.5 261.2l1.6 4.6-7.8 1.6zM320.9 272.1l6.2-6.3 1.6 4.8zM327.1 265.8l7.9-1.4-6.3 6.2zM313.2 247.1l7.5-2-6.6 5.6zM315.2 254.5l-1.1-3.8 7.6-2zM320.7 245.1l1 3.6-7.6 2zM317.8 262.9l-1.4-4.3 7.7-1.8zM315.2 254.5l7.7-1.9-6.5 6zM316.4 258.6l6.5-6 1.2 4.2zM315.2 254.5l6.5-5.8 1.2 3.9zM317.8 262.9l6.3-6.1 1.4 4.4zM313.2 247.1l-1.6-3.4 8-1.9zM310.2 240.5l7.9-2-6.5 5.2zM311.6 243.7l6.5-5.2 1.5 3.3zM307.9 235.2l7.7-2.3-6.6 4.8zM310.2 240.5l-1.2-2.8 7.8-2.2zM315.6 232.9l1.2 2.6-7.8 2.2zM310.2 240.5l6.6-5 1.3 3zM320.3 222.9l-7 4.1-.5-1.3zM307.9 235.2l-.9-2.1 7.7-2.6zM307 233.1l6.9-4.5 .8 1.9zM320.3 222.9l.6 1.5-7.6 2.6zM306.3 231.3l7-4.3 .6 1.6zM320.9 224.4l-7 4.2-.6-1.6zM307.9 235.2l6.8-4.7 .9 2.4zM314.7 230.5l7.7-2.2-6.8 4.6zM307.9 235.2l-6.9 5.3-1-2.4zM294.2 246l-1-2.5 7.8-3zM190.2 364.7l3.3-7.8-2.1 7.2zM188.5 366.2l2.9-7.9-2.2 7.1zM190.2 364.7l-1 .7 3.1-7.9zM191.4 358.3l.9-.8-3.1 7.9zM190.2 364.7l2.1-7.2 1.2-.6zM193.3 352l-2.6 7.1-.3 .9zM193 353l-2.6 7-.1 .9zM188.5 366.2l2.2-7.1 .7-.8zM193.3 352l.5-.8-3.1 7.9zM190.7 359.1l3.1-7.9-2.4 7.1zM194.7 381l-.9-4.5 3.2-4.8zM193.3 372.1l3.1-4.8-2.6 9.2zM193.8 376.5l2.6-9.2 .6 4.4zM200.6 399.6l-1.9-4.8 3.5-4.7zM197.1 390.2l3.4-4.7-1.8 9.3zM198.7 394.8l1.8-9.3 1.7 4.6zM194.7 381l3.2-4.7-2.2 9.3zM197.1 390.2l-1.4-4.6 3.4-4.8zM197.9 376.3l1.2 4.5-3.4 4.8zM197.1 390.2l2-9.4 1.4 4.7zM224.5 438.5l-3.8-4.9 4.4-4.4zM217.1 428.6l4.4-4.3-.8 9.3zM226.1 419.9l-1 9.3-3.6-4.9zM220.7 433.6l.8-9.3 3.6 4.9zM210.6 418.8l4.2-4.3-1.1 9.2zM219.2 410.1l-1.2 9.3-3.2-4.9zM217.1 428.6l-3.4-4.9 4.3-4.3zM214.8 414.5l3.2 4.9-4.3 4.3zM218 419.4l4.5-4.4-1 9.3zM200.6 399.6l3.7-4.5-1.6 9.2zM205.1 409.1l-2.4-4.8 3.8-4.5zM204.3 395.1l2.2 4.7-3.8 4.5zM213.2 400.3l-2.5-4.9 4.3-4.4zM208.3 390.6l4.3-4.4-1.9 9.2zM210.6 418.8l-2.9-4.8 4.1-4.5zM205.1 409.1l3.9-4.4-1.3 9.3zM207.7 414l1.3-9.3 2.8 4.8zM208.3 390.6l2.4 4.8-4.2 4.4zM205.1 409.1l1.4-9.3 2.5 4.9zM210.6 418.8l1.2-9.3 3 5zM211.8 409.5l4.3-4.3-1.3 9.3zM200.6 399.6l1.6-9.5 2.1 5zM361 328l-4.9-6.5 8-.4zM356.1 321.5l3.1-6.8 4.9 6.4zM341.8 303.4l7.9-.9-3.3 6.7zM357.6 301.9l-3.2 6.6-4.7-6zM351.2 315.3l-4.8-6.1 8-.7zM349.7 302.5l4.7 6-8 .7zM351.2 315.3l3.2-6.8 4.8 6.2zM354.4 308.5l8-.5-3.2 6.7zM339.7 279.7l-3.5 6.2-4.2-5zM332 280.9l4.2 5-7.7 1.2zM341.8 303.4l-4.6-5.7 7.8-.9zM332.8 292.3l7.7-1.1-3.3 6.5zM348.4 290.3l-3.4 6.5-4.5-5.6zM339.7 279.7l4.3 5.2-7.8 1zM348.4 290.3l-7.9 .9 3.5-6.3zM332.8 292.3l3.4-6.4 4.3 5.3zM344 284.9l-3.5 6.3-4.3-5.3zM341.8 303.4l3.2-6.6 4.7 5.7zM345 296.8l8-.8-3.3 6.5zM328.5 287.1l-3.7 6.6-4.2-5zM325.7 305.9l8-1.4-3.5 7.1zM262.9 477.4l6.7-3.1-1 7.9zM288.5 480.4l6.3 4.5-7.3 3.3zM224.5 438.5l5.4-3.4-1.3 8.3zM232.8 448.4l-4.2-5 5.4-3.4zM247.6 424.9l-1.7 8.3-4.5-4.9zM242 458.2l-4.7-4.9 5.8-3.4zM232.8 448.4l5.7-3.4-1.2 8.3zM237.3 453.3l1.2-8.3 4.6 4.9zM232.8 448.4l1.2-8.4 4.5 5zM262.9 477.4l-5.5-4.7 6.3-3.4zM252.1 467.9l6.2-3.4-.9 8.2zM242 458.2l6-3.4-1 8.2zM252.1 467.9l-5.1-4.9 6-3.3zM248 454.8l5 4.9-6 3.3zM252.1 467.9l.9-8.2 5.3 4.8zM242 458.2l1.1-8.3 4.9 4.9zM224.5 438.5l.6-9.3 4.8 5.9zM226.1 419.9l4.5 5.9-5.5 3.4zM235.5 431.7l-4.9-5.9 5.8-3.4zM192.9 363.6l-2.7 7.6 1.2-7.1zM190.2 364.7l1.2-.6-2.6 7.6zM190.2 371.2l-1.4 .5 2.6-7.6z"/>
<path fill="#ffff00" stroke="#ffff00" stroke-width="0.7" d="M320.6 527.7l4.1 7-8.9-2.1zM294.2 532.5l4.4-4.6 4 7.1zM303.2 523.1l3.9 7.2-8.5-2.4zM311.2 537.4l-8.6-2.4 4.5-4.7zM346.5 567.9l-9.1-1.6 4.5-4.8zM328.4 564.5l4.5-4.6 4.5 6.4zM337.5 555l4.4 6.5-9-1.6zM337.4 566.3l-4.5-6.4 9 1.6zM319.6 551.3l4.5-4.8 4.4 6.8zM337.5 555l-4.6 4.9-4.4-6.6zM323.9 558l4.6-4.7 4.4 6.6zM328.8 541.6l-4.7 4.9-4.2-6.9zM311.2 537.4l8.7 2.2-4.6 4.8zM324.1 546.5l-8.8-2.1 4.6-4.8zM311.2 537.4l-4.6 4.7-4-7.1zM319.6 551.3l-8.8-2.2 4.5-4.7zM311.2 537.4l4.1 7-8.7-2.3zM355.8 580.1l-9-1 4.3-5zM351.1 574.1l-4.3 5-4.7-6.2zM355.8 580.1l4.8 5.9-9.1-1zM346.5 567.9l-4.4 5-4.7-6.6zM403.8 612.2l-4.2 4.9-5.1-4.6zM394.5 612.5l5.1 4.6-9.2 .1zM414 620.9l-4.1 4.7-5.2-4.2zM403.8 612.2l5.1 4.4-9.3 .5zM414 620.9l-9.3 .5 4.2-4.8zM408.9 616.6l-4.2 4.8-5.1-4.3zM424.4 628.8l-4.2 4.4-5.1-3.7zM432.7 619l5.2 3.8-9.3 1.2zM414 620.9l5.2 4-9.3 .7zM424.4 628.8l-9.3 .7 4.1-4.6zM409.9 625.6l9.3-.7-4.1 4.6zM424.4 628.8l-5.2-3.9 9.4-.9zM328.8 541.6l7.6-.5-3.3 7.3zM337.5 555l-4.4-6.6 7.6-.6zM375.3 602.5l8.2-.8-3.2 5.9zM391.7 600.7l-3.2 6-5-5zM380.3 607.6l3.2-5.9 5 5zM365.4 591.7l8.2-.7-3.3 6.2zM381.7 590.2l-3.2 6.3-4.9-5.5zM375.3 602.5l-5-5.3 8.2-.7zM373.6 591l4.9 5.5-8.2 .7zM375.3 602.5l3.2-6 5 5.2zM378.5 596.5l8.2-.9-3.2 6.1zM355.8 580.1l-4.7-6 8-.5zM365.4 591.7l-4.8-5.7 8-.7zM355.8 580.1l8-.5-3.2 6.4zM371.9 578.8l-3.3 6.5-4.8-5.7zM360.6 586l3.2-6.4 4.8 5.7zM355.8 580.1l3.3-6.5 4.7 6zM367.1 572.9l-3.3 6.7-4.7-6zM365.4 591.7l3.2-6.4 5 5.7zM553.3 492.3l-5.6-5.6 6.6-2.5zM541.9 481.1l6.7-2.4-.9 8zM555.2 476.1l-.9 8.1-5.7-5.5zM547.7 486.7l.9-8 5.7 5.5zM529.6 469.7l6.9-2.4-.7 8.1zM541.9 481.1l-6.1-5.7 6.9-2.4zM536.5 467.3l6.2 5.7-6.9 2.4zM541.9 481.1l.8-8.1 5.9 5.7zM548.6 478.7l-5.9-5.7 6.7-2.5zM529.6 469.7l6.2 5.7-7 2.5zM527.8 486l1-8.1 6.1 5.7zM535.8 475.4l-.9 8.2-6.1-5.7zM385.3 612.5l3.2-5.8 6 5.8zM391.7 600.7l6 5.9-9.2 .1zM403.8 612.2l-9.3 .3 3.2-5.9zM553.3 492.3l1-8.1 5.9 2.5zM554.3 484.2l6.8-5.5-.9 8zM553.3 492.3l6.9-5.6-1.1 8.1zM529.6 469.7l3.2-9.1 3.7 6.7zM507.2 461l3.1-9 4.2 6.7zM517.5 449.6l-3 9.1-4.2-6.7zM529.6 469.7l-7.1 2.4 3.2-9.1zM521.7 456.4l4 6.6-7.1 2.4zM522.5 472.1l-3.9-6.7 7.1-2.4zM521.7 456.4l-3.1 9-4.1-6.7zM529.6 469.7l-3.9-6.7 7.1-2.4zM521.7 456.4l7.1-2.5-3.1 9.1zM462.4 424.9l2.7-8.8 5.2 6.4zM467.8 407.3l5.2 6.4-7.9 2.4zM478.2 420.2l-7.9 2.3 2.7-8.8zM465.1 416.1l7.9-2.4-2.7 8.8zM482.2 452.1l7.9-2.3-3.2 9.1zM513.2 442.9l-2.9 9.1-4.7-6.8zM507.2 461l-4.6-6.7 7.7-2.3zM510.3 452l-7.7 2.3 3-9.1zM478.2 420.2l-2.8 9.1-5.1-6.8zM470.3 422.5l5.1 6.8-8 2.4zM488.2 433.8l-5-6.8 7.8-2.3zM488.2 433.8l-3 9.1-4.9-6.8zM478.2 420.2l5 6.8-7.8 2.3zM488.2 433.8l-7.9 2.3 2.9-9.1zM483.2 427l-2.9 9.1-4.9-6.8zM488.2 433.8l4.9 6.9-7.9 2.2zM488.2 433.8l7.8-2.3-2.9 9.2zM497.9 447.5l-4.8-6.8 7.8-2.3zM496 431.5l4.9 6.9-7.8 2.3zM367.3 314.3l6 4.1-9.2 2.7zM379.4 322.7l-9.2 2.6 3.1-6.9zM367.3 314.3l3.2-6.7 6 4.1zM367.3 314.3l9.2-2.6-3.2 6.7zM379.4 322.7l-6.1-4.3 9.3-2.4zM376.5 311.7l6.1 4.3-9.3 2.4zM410.1 368.4l3.2-7.6 5.9 5.6zM413.3 360.8l9.1-1.8-3.2 7.4zM410.1 368.4l-6.2-5.5 9.4-2.1zM397.7 357.6l9.4-2.2-3.2 7.5zM416.5 353.4l-3.2 7.4-6.2-5.4zM403.9 362.9l3.2-7.5 6.2 5.4zM394.7 344.9l6.2 5.2-9.4 2.3zM397.7 357.6l3.2-7.5 6.2 5.3zM404 342.8l6.3 5.3-9.4 2zM400.9 350.1l9.4-2-3.2 7.3zM361 328l9.2-2.7-3.2 7.3zM379.4 322.7l-3.2 7.3-6-4.7zM379.4 322.7l9.3-2.3-3.2 7.1zM391.6 332.5l-3.2 7.3-6.1-5zM379.4 322.7l6.1 4.8-9.3 2.5zM391.6 332.5l-9.3 2.3 3.2-7.3zM385.5 327.5l-3.2 7.3-6.1-4.8zM385.3 347.2l3.1-7.4 6.3 5.1zM391.6 332.5l6.2 5.1-9.4 2.2zM404 342.8l-9.3 2.1 3.1-7.3zM388.4 339.8l9.4-2.2-3.1 7.3zM456 417.6l2.7-8.8 6.4 7.3zM436.6 396.1l9.1-1.7-2.6 8.8zM454.9 392.8l-2.6 8.8-6.6-7.2zM449.6 410.4l-6.5-7.2 9.2-1.6zM445.7 394.4l6.6 7.2-9.2 1.6zM449.6 410.4l2.7-8.8 6.4 7.2zM467.8 407.3l-9.1 1.5 2.7-8.8zM452.3 401.6l9.1-1.6-2.7 8.8zM410.1 368.4l9.1-2-2.4 8.7zM428.3 364.6l-2.4 8.6-6.7-6.8zM423.4 382l-6.6-6.9 9.1-1.9zM419.2 366.4l6.7 6.8-9.1 1.9zM436.6 396.1l-6.6-7.1 9.1-1.8zM423.4 382l9.1-1.8-2.5 8.8zM441.6 378.5l-2.5 8.7-6.6-7zM430 389l2.5-8.8 6.6 7zM423.4 382l2.5-8.8 6.6 7zM436.6 396.1l2.5-8.9 6.6 7.2zM439.1 387.2l9.2-1.6-2.6 8.8zM417.5 400.1l2.9-9.1 6.6 7.1zM443.7 429l-6.4-7.3 9.4-2zM294.2 532.5l-2.2-9 6.6 4.4zM290 514.5l6.5 4.4-4.5 4.6zM303.2 523.1l-4.6 4.8-2.1-9zM292 523.5l4.5-4.6 2.1 9zM290 514.5l-1.8-9.2 6.4 4.4zM265.2 496.2l-1.3-9.3 5.8 4.6zM277.2 505.4l-1.5-9.2 6.1 4.5zM277.2 505.4l-4.4 4.6-1.7-9.2zM274.4 486.8l1.3 9.4-6-4.7zM277.2 505.4l-6.1-4.6 4.6-4.6zM265.2 496.2l4.5-4.7 1.4 9.3zM275.7 496.2l-4.6 4.6-1.4-9.3zM290 514.5l2 9-6.6-4.4zM277.2 505.4l1.8 9.2-6.2-4.6zM290 514.5l-6.5-4.5 4.7-4.7zM277.2 505.4l4.6-4.7 1.7 9.3zM277.2 505.4l6.3 4.6-4.5 4.6zM290 514.5l-4.6 4.6-1.9-9.1zM279 514.6l4.5-4.6 1.9 9.1zM224.5 438.5l4.1 4.9-4.5 4.4zM232.8 448.4l-4.5 4.3 .3-9.3zM228.6 443.4l-.3 9.3-4.2-4.9zM242 458.2l-4.6 4.3-.1-9.2zM233 466.9l-.2-9.3 4.6 4.9zM237.4 462.5l-4.6-4.9 4.5-4.3zM232.8 448.4l0 9.2-4.5-4.9zM253.3 486.4l-.7-9.2 5.4 4.7zM258 481.9l-5.4-4.7 4.8-4.5zM242 458.2l5 4.8-4.7 4.5zM252.1 467.9l-4.8 4.4-.3-9.3zM242.8 476.7l-.5-9.2 5 4.8zM247 463l.3 9.3-5-4.8zM253.3 486.4l-5.3-4.8 4.6-4.4zM242.8 476.7l4.5-4.4 .7 9.3zM252.1 467.9l.5 9.3-5.3-4.9zM248 481.6l-.7-9.3 5.3 4.9zM242 458.2l.3 9.3-4.9-5zM242.3 467.5l-4.5 4.3-.4-9.3zM265.2 496.2l-6-4.9 4.7-4.4zM253.3 486.4l4.7-4.5 1.2 9.4zM263.9 486.9l-4.7 4.4-1.2-9.4zM187.8 378.8l2.4-7.6 .1 4.2zM188.4 387.5l2.3-7.7 .7 4.4zM187.8 378.8l.2 4.4-2.4 3.4zM188.4 387.5l-.4-4.3 2.7-3.4zM187.8 378.8l2.5-3.4-2.3 7.8zM190.7 379.8l-2.7 3.4 2.3-7.8zM200.6 399.6l-4 3.1 2.1-7.9zM193 405.9l1.9-7.9 1.7 4.7zM197.1 390.2l1.6 4.6-3.8 3.2zM196.6 402.7l-1.7-4.7 3.8-3.2zM190.2 396.6l2.1-7.8 1.2 4.6zM195.7 385.6l-2.2 7.8-1.2-4.6zM190.2 396.6l3.3-3.2-2.1 7.9zM197.1 390.2l-2.2 7.8-1.4-4.6zM191.4 401.3l2.1-7.9 1.4 4.6zM194.7 381l-2.4 7.8-.9-4.6zM190.2 396.6l-1-4.5 3.1-3.3zM188.4 387.5l3-3.3-2.2 7.9zM192.3 388.8l-3.1 3.3 2.2-7.9zM217.1 428.6l3.6 5-5 3.4zM219.4 441.9l-3.7-4.9 5-3.4zM210.6 418.8l3.1 4.9-4.6 3.4zM217.1 428.6l-4.8 3.4 1.4-8.3zM213.7 423.7l-1.4 8.3-3.2-4.9zM217.1 428.6l-1.4 8.4-3.4-5zM200.6 399.6l2.1 4.7-4.1 3.4zM205.1 409.1l-4.3 3.4 1.9-8.2zM197 415.9l1.6-8.2 2.2 4.8zM202.7 404.3l-1.9 8.2-2.2-4.8zM210.6 418.8l-4.5 3.4 1.6-8.2zM205.1 409.1l2.6 4.9-4.4 3.3zM206.1 422.2l-2.8-4.9 4.4-3.3zM205.1 409.1l-1.8 8.2-2.5-4.8zM210.6 418.8l-1.5 8.3-3-4.9zM200.6 399.6l-2 8.1-2-5zM198.6 407.7l-3.8 3.2 1.8-8.2zM224.5 438.5l-.4 9.3-4.7-5.9zM319.3 221.5l7.1-3.2 .4 .5zM334 215.8l-7.2 3-.4-.5zM320.3 222.9l7-3.4 .7 1zM319.3 221.5l7.5-2.7-7.1 3.3zM334.5 216.4l-7.2 3.1-.5-.7zM320.3 222.9l-.6-.8 7.6-2.6zM326.8 218.8l.5 .7-7.6 2.6zM332.8 215.6l7.7-2.7-7.4 2.5zM333.5 215.4l-7.1 2.9-.6-.1zM326.4 218.3l-7.7 3 7.1-3.1zM333.5 215.4l-7.7 2.8 7.3-2.8zM332.8 215.6l.3-.2-7.6 3zM325.8 218.2l-.3 .2 7.6-3zM336.7 269.3l1.4 5.1-7.6 1.2zM330.5 275.6l7.6-1.2-6.1 6.5zM336.7 269.3l6.3-6 1.4 4.9zM339.7 279.7l6.2-6.3 1.5 5.4zM336.7 269.3l7.7-1.1-6.3 6.2zM339.7 279.7l-1.6-5.3 7.8-1zM344.4 268.2l1.5 5.2-7.8 1zM324.4 282.2l-7.5 1.5 5.7-6.6zM317.8 262.9l-5.9 6.2-1.5-4.4zM326.1 236.8l1.1 3.1-7.6 1.9zM328.3 243.2l-7.6 1.9 6.5-5.2zM319.6 241.8l7.6-1.9-6.5 5.2zM326.1 236.8l7.7-1.8-6.6 4.9zM328.3 243.2l-1.1-3.3 7.7-1.7zM336.7 269.3l-6.2 6.3-1.8-5zM333.4 259.7l-6.3 6.1-1.6-4.6zM336.7 269.3l-1.7-4.9 8-1.1zM333.4 259.7l8-1.2-6.4 5.9zM343 263.3l-8 1.1 6.4-5.9zM333.4 259.7l1.6 4.7-7.9 1.4zM328.3 243.2l-6.6 5.5-1-3.6zM330.6 251l-1.2-4 7.8-1.5zM328.3 243.2l7.8-1.6-6.7 5.4zM330.6 251l-6.5 5.8-1.2-4.2zM328.3 243.2l1.1 3.8-7.7 1.7zM330.6 251l-7.7 1.6 6.5-5.6zM333.4 259.7l-7.9 1.5 6.5-6zM324.1 256.8l7.9-1.6-6.5 6zM330.6 251l7.9-1.4-6.5 5.6zM333.4 259.7l-1.4-4.5 7.9-1.3zM326.1 236.8l-6.5 5-1.5-3.3zM323.5 230.8l-6.7 4.7-1.2-2.6zM326.1 236.8l-1.4-3.1 8.1-1.6zM323.5 230.8l8-1.7-6.8 4.6zM323.5 230.8l1.2 2.9-7.9 1.8zM326.1 236.8l-8 1.7 6.6-4.8zM316.8 235.5l7.9-1.8-6.6 4.8zM321.5 226.2l-.6-1.8 7.7-2.3zM320.3 222.9l7.7-2.4-7.1 3.9zM328.6 222.1l-7.7 2.3 7.1-3.9zM321.5 226.2l-6.8 4.3-.8-1.9zM321.5 226.2l-7.6 2.4 7-4.2zM323.5 230.8l-7.9 2.1 6.8-4.6zM321.5 226.2l7.1-4.1 .8 2zM323.5 230.8l-1.1-2.5 8-1.9zM321.5 226.2l7.9-2.1-7 4.2zM322.4 228.3l7-4.2 1 2.3zM188.5 366.2l-.5 .8 2.7-7.9zM187.8 368l2.6-8-2.4 7zM188 367l2.4-7 .3-.9zM193.3 352l-2.9 8 2.6-7zM187.8 368l2.5-7.1 .1-.9zM204.3 380.8l-2.1 9.3-1.7-4.6zM217.1 428.6l.9-9.2 3.5 4.9zM204.3 380.8l1.9 4.9-4 4.4zM351.2 315.3l8-.6-3.1 6.8zM367.3 314.3l-4.9-6.3 8.1-.4zM357.6 301.9l8.1-.5-3.3 6.6zM370.5 307.6l-8.1 .4 3.3-6.6zM357.6 301.9l4.8 6.1-8 .5zM367.3 314.3l-8.1 .4 3.2-6.7zM355.3 278l-3.5 6.1-4.4-5.3zM348.4 290.3l-4.4-5.4 7.8-.8zM339.7 279.7l7.7-.9-3.4 6.1zM351.8 284.1l-7.8 .8 3.4-6.1zM337.2 297.7l3.3-6.5 4.5 5.6zM357.6 301.9l3.4-6.5 4.7 6zM348.4 290.3l4.6 5.7-8 .8zM357.6 301.9l-7.9 .6 3.3-6.5zM348.4 290.3l3.4-6.2 4.5 5.5zM348.4 290.3l7.9-.7-3.3 6.4zM353 296l3.3-6.4 4.7 5.8zM351.2 315.3l4.9 6.2-8.3 1zM341.8 303.4l4.6 5.8-8.1 1.1zM346.4 309.2l-3.4 7.1-4.7-6zM229.9 435.1l4.1 4.9-5.4 3.4zM244.4 441.6l-1.3 8.3-4.6-4.9zM187.8 378.8l1-7.1 1.4-.5zM187.8 378.8l-2.2 7.8 .8-7.2zM188.5 366.2l.7-.8-2.5 7.7zM190.2 364.7l-2.6 7.7 1.6-7zM185.3 380.1l1.4-7 .9-.7zM189.2 365.4l-1.6 7-.9 .7zM185.3 380.1l2.3-7.7-1.2 7zM190.2 364.7l-1.4 7-1.2 .7zM186.4 379.4l1.2-7 1.2-.7zM188.5 366.2l-2.4 7.7 1.9-6.9zM187.8 368l.2-1-2.3 7.8zM188.5 366.2l-1.8 6.9-.6 .8z"/>
<path fill="#fff904" stroke="#fff904" stroke-width="0.7" d="M319.6 551.3l4.3 6.7-8.8-2.1zM337.5 555l-9-1.7 4.6-4.9zM319.6 551.3l-4.5 4.6-4.3-6.8zM294.2 532.5l8.4 2.5-4.5 4.6zM302.6 535l4 7.1-8.5-2.5zM310.8 549.1l-4.2-7 8.7 2.3zM365.4 591.7l4.9 5.5-9.1-.7zM346.5 567.9l4.6 6.2-9-1.2zM337.8 577.8l4.3-4.9 4.7 6.2zM365.4 591.7l-9.1-.9 4.3-4.8zM356.3 590.8l-4.8-5.8 9.1 1zM355.8 580.1l-4.3 4.9-4.7-5.9zM365.4 591.7l-4.2 4.8-4.9-5.7zM328.4 564.5l9 1.8-4.4 5zM342.1 572.9l-9.1-1.6 4.4-5zM385.3 612.5l9.2 0-4.1 4.7zM395.5 621.7l-5.1-4.5 9.2-.1zM405.8 630l-5.2-4 9.3-.4zM395.5 621.7l9.2-.3-4.1 4.6zM395.5 621.7l4.1-4.6 5.1 4.3zM415.1 629.5l5.1 3.7-9.3 .6zM405.8 630l4.1-4.4 5.2 3.9zM385.3 612.5l-5-4.9 8.2-.9zM543.3 464.8l-.6 8.2-6.2-5.7zM555.2 476.1l-6.6 2.6 .8-8.2zM543.3 464.8l6.1 5.7-6.7 2.5zM541.9 481.1l5.8 5.6-6.8 2.6zM403.8 612.2l-6.1-5.6 9.3-.4zM555.2 476.1l5.9 2.6-6.8 5.5zM543.3 464.8l-6.8 2.5 3.1-9.1zM532.8 460.6l6.8-2.4-3.1 9.1zM513.2 442.9l4.3 6.7-7.2 2.4zM521.7 456.4l-4.2-6.8 7.1-2.4zM521.7 456.4l2.9-9.2 4.2 6.7zM478.2 420.2l2.7-8.8 5.1 6.5zM467.8 407.3l7.9-2.4-2.7 8.8zM478.2 420.2l-5.2-6.5 7.9-2.3zM478.2 420.2l7.8-2.3-2.8 9.1zM491 424.7l-7.8 2.3 2.8-9.1zM488.2 433.8l2.8-9.1 5 6.8zM513.2 442.9l-7.6 2.3 2.9-9.1zM497.9 447.5l3-9.1 4.7 6.8zM505.6 445.2l-4.7-6.8 7.6-2.3zM503.7 429.2l-2.8 9.2-4.9-6.9zM379.8 305.2l-3.3 6.5-6-4.1zM379.4 322.7l3.2-6.7 6.1 4.4zM416.5 353.4l5.9 5.6-9.1 1.8zM428.3 364.6l-9.1 1.8 3.2-7.4zM416.5 353.4l-9.4 2 3.2-7.3zM391.6 332.5l-6.1-5 9.3-2.2zM394.8 325.3l-9.3 2.2 3.2-7.1zM385.3 347.2l-6.2-5 9.3-2.4zM404 342.8l-6.2-5.2 9.4-2.1zM391.6 332.5l9.4-2.2-3.2 7.3zM454.9 392.8l6.5 7.2-9.1 1.6zM428.3 364.6l6.7 6.9-9.1 1.7zM441.6 378.5l-9.1 1.7 2.5-8.7zM454.9 392.8l-9.2 1.6 2.6-8.8zM266.7 505.4l4.4-4.6 1.7 9.2zM294.2 532.5l-6.7-4.4 4.5-4.6zM281 523.7l4.4-4.6 2.1 9zM287.5 528.1l-2.1-9 6.6 4.4zM281 523.7l-2-9.1 6.4 4.5zM224.1 457.1l0-9.3 4.2 4.9zM232.8 448.4l4.5 4.9-4.5 4.3zM233 466.9l-4.6-4.9 4.4-4.4zM224.1 457.1l4.2-4.4 .1 9.3zM232.8 457.6l-4.4 4.4-.1-9.3zM253.3 486.4l-4.4 4.4-.9-9.2zM242.8 476.7l-5-4.9 4.5-4.3zM233 466.9l4.4-4.4 .4 9.3zM265.2 496.2l1.5 9.2-6.1-4.8zM265.2 496.2l-4.6 4.4-1.4-9.3zM253.3 486.4l5.9 4.9-4.6 4.4zM188.4 387.5l-2.5 3.4 2.1-7.7zM185.6 386.6l2.4-3.4-2.1 7.7zM193 405.9l-1.6-4.6 3.5-3.3zM188.4 387.5l-2 7.9-.5-4.5zM190.2 396.6l-3 3.4 2-7.9zM188.4 387.5l.8 4.6-2.8 3.3zM224.5 438.5l-5.1 3.4 1.3-8.3zM214.7 445.3l1-8.3 3.7 4.9zM207.8 435.4l1.3-8.3 3.2 4.9zM214.7 445.3l-3.6-4.9 4.6-3.4zM207.8 435.4l4.5-3.4-1.2 8.4zM211.1 440.4l1.2-8.4 3.4 5zM201.8 425.6l1.5-8.3 2.8 4.9zM201.8 425.6l-2.5-4.9 4-3.4zM197 415.9l3.8-3.4-1.5 8.2zM203.3 417.3l-4 3.4 1.5-8.2zM201.8 425.6l4.3-3.4-1.4 8.3zM209.1 427.1l-4.4 3.4 1.4-8.3zM197 415.9l-2.2-5 3.8-3.2zM193 405.9l3.6-3.2-1.8 8.2zM224.1 457.1l-4.9-5.9 4.9-3.4zM214.7 445.3l4.7-3.4-.2 9.3zM224.1 447.8l-4.9 3.4 .2-9.3zM334.5 216.4l-7.7 2.4 7.2-3zM335.8 218.4l-7.8 2.1 7.1-3.2zM334.5 216.4l.6 .9-7.8 2.2zM328 220.5l-.7-1 7.8-2.2zM333.5 215.4l7.8-2.4-7.3 2.8zM333.5 215.4l-.4 0 7.7-2.6zM350.8 262.3l-6.4 5.9-1.4-4.9zM355.3 278l-7.9 .8 6.3-6.2zM352.2 267.4l1.5 5.2-7.8 .8zM347.4 278.8l-1.5-5.4 7.8-.8zM352.2 267.4l-6.3 6-1.5-5.2zM326.1 236.8l6.7-4.7 1 2.9zM328.3 243.2l6.6-5 1.2 3.4zM333.8 235l1.1 3.2-7.7 1.7zM336.7 269.3l-8 1.3 6.3-6.2zM337.2 245.5l-7.8 1.5 6.7-5.4zM329.4 247l-6.5 5.6-1.2-3.9zM330.6 251l6.6-5.5 1.3 4.1zM333.4 259.7l6.5-5.8 1.5 4.6zM338.5 249.6l1.4 4.3-7.9 1.3zM332.8 232.1l-8.1 1.6 6.8-4.6zM335.8 218.4l-7.2 3.7-.6-1.6zM323.5 230.8l6.9-4.4 1.1 2.7zM336.5 220.2l-7.1 3.9-.8-2zM367.3 314.3l-3.2 6.8-4.9-6.4zM373.8 301.1l-3.3 6.5-4.8-6.2zM373.8 301.1l-8.1 .3 3.3-6.4zM364.4 289.1l4.6 5.9-8 .4zM365.7 301.4l-4.7-6 8-.4zM355.3 278l4.5 5.4-8 .7zM364.4 289.1l-8.1 .5 3.5-6.2zM357.6 301.9l-4.6-5.9 8-.6zM364.4 289.1l-3.4 6.3-4.7-5.8zM185.3 380.1l1.1-.7-2.1 7.8zM184.3 387.2l2.1-7.8-.8 7.2zM187.8 378.8l-1.4 .6 2.4-7.7zM183.9 381.7l1.8-6.9 .4-.9zM186.1 373.9l-.4 .9 2.3-7.8zM187.8 368l-2.1 6.8-.1 1zM185.3 380.1l-.8 .8 2.2-7.8zM186.7 373.1l-2.2 7.8 1.6-7z"/>
<path fill="#ffb13f" stroke="#ffb13f" stroke-width="0.7" d="M321.7 595.4l4.8 5.9-8.5-1.9zM331.5 607l-8.6-1.8 3.6-3.9zM270.6 557.6l3.5-3.9 4.1 7.2zM286 564.1l4.4 6.9-7.9-3zM321.7 595.4l-3.7 4-5-6.1zM294.9 577.8l8.4 2.7-3.8 3.9zM303.3 580.5l4.7 6.5-8.5-2.6zM294.9 577.8l-4.5-6.8 8.2 2.7zM302.6 569.4l-4 4.3-4.4-6.8zM342.8 619.6l-5.7-6.1 8.8 1.4zM354.9 631.1l3-4.4 6.1 5.4zM342.8 619.6l9 1.3-3 4.6zM348.8 625.5l3-4.6 6.1 5.8zM492.9 368.3l-7.6 2.2 2.2-8.4zM487.5 362.1l-2.2 8.4-5.5-6.2zM503.5 380.8l-7.5 2.2 2.3-8.5zM492.9 368.3l5.4 6.2-7.6 2.2zM492.9 368.3l-2.2 8.4-5.4-6.2zM477.6 372.7l7.7-2.2-2.3 8.4zM435.4 311.6l-9.3 1.4 3.3-6.3zM473.2 357.2l-5.6-6 8.8-1.1zM464.9 338.5l-3.1 6.9-5.8-5.7zM470.7 344.2l-3.1 7-5.8-5.8zM447.4 321.9l-9.1 1.5 3.1-6.7zM450.1 334.1l-5.9-5.4 9.1-1.4zM447.4 321.9l-3.2 6.8-5.9-5.3zM429.2 325l-6.2-5.3 9.3-1.5zM482 356l-2.2 8.3-6.6-7.1zM252.2 531.6l-3.5 3.8-2.4-8.6zM270.6 557.6l-3.1-8.3 6.6 4.4zM252.2 531.6l6.1 4.7-3.5 3.9zM258.3 536.3l2.7 8.5-6.2-4.6zM264.6 540.9l2.9 8.4-6.5-4.5zM229.8 511.6l-1.6-8.9 5 4.9zM236.8 503.5l-3.6 4.1-1.5-8.9zM240.6 521.8l-5.5-5 3.4-4.1zM246.3 526.8l-2.2-9 5.8 4.9zM178.9 426.1l.7 4.9-1.2 3zM190 460.4l.1-8.2 2.7 4.9zM187.6 455.6l.1-8.3 2.4 4.9zM188.2 439.1l2.3 4.9-2.8 3.3zM183.5 445.7l-1.6-4.9 2-3.4zM180.6 435.9l1.8-3.4-.5 8.3zM183.5 445.7l.4-8.3 1.8 5zM224 506.1l-1.5-8.9 5.7 5.5zM218.6 500.6l-1.4-9.1 5.3 5.7zM226.8 493.7l-4.3 3.5-1.2-9.1zM217.2 491.5l4.1-3.4 1.2 9.1zM206.7 470.7l.8 9.2-4.3-5.9zM571.9 433.2l5.9 2.4-3.6 6.8zM577.8 435.6l2.1 9.2-5.7-2.4zM367.2 211.7l7.3-2.5 .7 1.6zM381.2 205.8l-7.4 2-.7-1.1zM379.1 203.7l8-1.1-7.6 1.2zM380 204.1l-8 1.2 7.5-1.5zM380 204.1l.6 .7-8.1 1zM372.5 205.8l8.1-1-7.5 1.9zM398.7 259.5l-7.2 3-1.4-5.2zM401.7 270.4l-8.7-2.5 7.2-3.1zM391.5 262.5l8.7 2.3-7.2 3.1zM376.2 237.6l8.5 1.1-7.3 3zM378.7 246.1l-1.3-4.4 8.6 1.3zM384.7 238.7l1.3 4.3-8.6-1.3zM380.1 250.6l7.2-3.1 1.4 4.8zM378.7 246.1l7.3-3.1 1.3 4.5zM368 213.5l8.2-.3-7.4 2.4zM371.7 223.5l-1-2.9 8.3 .1zM369.7 218l8.3 0-7.3 2.6zM376.2 237.6l-1.2-3.9 8.5 .8zM373.8 230l8.5 .7-7.3 3zM371.7 223.5l8.4 .3-7.4 2.8zM373.8 230l-1.1-3.4 8.4 .5zM368 213.5l7.2-2.7 1 2.4zM177.5 428.4l.6-8.4-.1 7.2zM177.5 428.4l.2-7.2 .4-1.2zM178.3 414.1l-.7 8.3 .8-7.1zM405.3 288.6l1.2-7.3 6 4.1zM401.7 270.4l6 3.8-7.2 3.1zM407.7 274.2l-1.2 7.1-6-4zM411.4 292.9l7.3-3.1-1.3 7.5zM423.4 301.9l-6-4.6 7.3-3zM411.4 292.9l1.1-7.5 6.2 4.4zM571.9 433.2l-3.6 6.7-3.7-6.7zM539.9 406.4l-3.6 6.8-4.6-6.7zM548.7 419.7l-8 .1 3.7-6.8zM548.7 419.7l7.9 0-3.7 6.8zM556.6 419.7l4.1 6.8-7.8 0zM513.7 393.7l8.3-.6-3.4 7.1zM518.6 400.2l3.4-7.1 4.8 6.5zM513.7 393.7l-5.1-6.5 8.5-.6zM523.3 406.7l3.5-7.1 4.9 6.9z"/>
<path fill="#ff6994" stroke="#ff6994" stroke-width="0.7" d="M253.3 577.5l2.4-2.9 4.5 6.9zM345.3 654.9l2.4-2.3 6.6 3.9zM334.8 643.9l6.4 4.5-8.9-1.9zM338.8 650.8l2.4-2.4 6.5 4.2zM267.3 585.3l-2.9 3.5-4.2-7.3zM276.2 599.5l-4.6-7 7.5 3.5zM267.3 585.3l4.3 7.2-7.2-3.7zM301.9 618.9l-8-2.9 2.8-3.4zM293.9 616l-5.1-6.4 7.9 3zM326 641.8l2.6-2.9 6.2 5zM313.6 631l-5.9-5.9 8.6 2.6zM313.6 631l8.8 2.5-2.7 3zM253.3 577.5l-3.9-7.6 6.3 4.7zM183.2 483.8l-.4 2.9-1.3-7.9zM233.2 553.1l6.2 4.6-2.8 3.4zM236.6 561.1l2.8-3.4 3.5 7.9zM221.7 543.1l2.6-3.3 3 8.4zM188 496.6l-2.6-6.4 .9-2.9zM194.4 509l-2.1-9.2 3.5 6.1zM192.3 499.8l-1.3 3-1.9-9.3zM211.4 532.6l-2.8-8.9 5.1 5.7zM427 201.5l7.4 .4 .3 .2zM441.5 202.8l.3-.2-7.7-.7zM434.1 201.9l7.7 .7-7.4-.7zM427.6 221.5l-8.4-1.8 7.4-1.4zM420.3 223l7.3-1.5 1.4 3.6zM430.3 229l-8.7-2.3 7.4-1.6zM442.6 245.4l1.1 5-8.6-3.2zM441.4 240.5l-7.4 1.8-1.2-4.7zM442.6 245.4l-7.5 1.8-1.1-4.9zM429.4 204.2l-8.5-.9 7.5-.4zM422.9 206.7l-1-1.9 8.5 1.2zM418.2 216.6l7.5-1.8 .9 3.5zM417.3 213.3l7.5-1.5 .9 3zM427.3 202l8.9 .9-7.8 0zM180.1 473.8l1.2 7.9-1.4-6.7zM180 476.3l-.8-6.7-.3-1.2zM180 476.3l-1.1-7.9 1 6.6zM492.4 309.4l-7.3 1.6 1.4-7.3zM444.8 255.7l6.5 4.2-7.5 1.9zM455.6 277.3l1.1-6.6 6.3 4.8zM468.3 287.4l-6.4-5.1 7.5-1.8zM455.6 277.3l7.4-1.8-1.1 6.8zM469.4 280.5l-7.5 1.8 1.1-6.8zM544.7 358.4l-7.6 .1 2.5-6.6zM567.3 378.6l7 .5-2.4 6.5zM589.4 393.7l-6.4-.6 2.3-6.5zM578.7 386l6.6 .6-2.3 6.5zM557.6 365l-2.5 6.7-5.1-6.7zM492.4 309.4l7 6.5-8.5 .8zM506.2 322.7l-8.4 .7 1.6-7.5zM531.8 352.1l-7.9 .3 1.9-7.9zM506.2 322.7l6.7 7.1-8.3 .6z"/>
<path fill="#ff7782" stroke="#ff7782" stroke-width="0.7" d="M258.3 571.5l4.4 7-7-3.9zM356.8 654.1l-9.1-1.5 2.5-2.6zM343.7 645.7l6.5 4.3-9-1.6zM291.7 606.1l8 2.8-3 3.7zM291.7 606.1l3-3.9 5 6.7zM291.7 606.1l-7.9-3.2 3-3.6zM286.8 599.3l-3 3.6-4.7-6.9zM301.9 618.9l2.9-3.5 5.7 6.3zM343.7 645.7l-8.9-1.8 2.6-3.1zM331.3 635.6l-2.7 3.3-6.2-5.4zM325.2 630.1l-2.8 3.4-6.1-5.8zM245.8 562.1l6.2 4.8-2.6 3zM180.5 470.9l1.5 5-.5 2.9zM245.8 562.1l-6.4-4.4 3.1-3.6zM221.6 531.3l2.7 8.5-5.5-5.1zM233.2 553.1l-3.1-8.3 6.1 4.8zM187.6 484.2l1.5 9.3-2.8-6.2zM197.5 502.7l-1.7 3.2-2-9.3zM190.5 490.4l3.3 6.2-1.5 3.2zM197.5 502.7l4.1 6-2 3.1zM206.2 514.7l-2.3 3.1-2.3-9.1zM216.3 526.2l-2.6 3.2-2.7-8.9zM206.2 514.7l4.8 5.8-2.4 3.2zM426.6 201.3l-.3 .1 7.8 .5zM427.3 202l-7.5 .1-.6-.6zM427.3 202l-8.1-.5 7.8 0zM420.3 223l-8.5-1.7 7.4-1.6zM403.4 219.9l7.4-1.8 1 3.2zM418.2 216.6l1 3.1-8.4-1.6zM420.3 223l1.3 3.7-8.7-1.9zM422.9 230.7l-8.7-2.1 7.4-1.9zM427.7 249.3l7.4-2.1 1.2 5.2zM427.7 249.3l-1.2-5 8.6 2.9zM414.4 205.7l-1-1.7 8.5 .8zM421.9 204.8l-8.5-.8 7.5-.7zM418.2 216.6l-8.5-1.4 7.6-1.9zM414.4 205.7l8.5 1-7.5 1.2zM178 460.4l.9 8-.7-6.8zM180.1 473.8l-1.2-6.7 .3-1.2zM178 460.4l.9 6.7 0 1.3zM483.6 318.5l1.5-7.5 5.8 5.7zM442.7 268.1l7.6-2-1.1 6.5zM468.3 287.4l-1.3 7.2-6.2-5.3zM455.6 277.3l6.3 5-7.5 2zM460.8 289.3l-6.4-5 7.5-2zM531.8 352.1l-2.6 6.7-5.3-6.4zM542.2 365l-7.8 .2 2.7-6.7zM576.3 392.6l6.7 .5-2.6 6.5zM580.4 399.6l2.6-6.5 4 7.1zM552.4 378.4l2.7-6.7 4.9 6.8zM552.4 378.4l-5.1-6.7 7.8 0zM576.3 392.6l-7.1-.2 2.7-6.8zM571.9 385.6l-2.7 6.8-4.5-6.9zM489.4 324.2l1.5-7.5 6.9 6.7zM497.8 323.4l6.8 7-8.4 .7zM502.9 338.2l1.7-7.8 6.7 7.2z"/>
<path fill="#ff7288" stroke="#ff7288" stroke-width="0.7" d="M267.3 585.3l-7.1-3.8 2.5-3zM255.7 574.6l7 3.9-2.5 3zM356.8 654.1l-2.5 2.4-6.6-3.9zM343.7 645.7l-2.5 2.7-6.4-4.5zM347.7 652.6l-6.5-4.2 9 1.6zM267.3 585.3l7.3 3.6-3 3.6zM279.1 596l-7.5-3.5 3-3.6zM301.9 618.9l-5.2-6.3 8.1 2.8zM328.6 638.9l8.8 1.9-2.6 3.1zM310.5 621.7l5.8 6-8.6-2.6zM249.4 569.9l2.6-3 3.7 7.7zM183.2 483.8l-1.2-7.9 1.9 5zM180.1 473.8l.4-2.9 1 7.9zM233.2 553.1l3-3.5 3.2 8.1zM216.3 526.2l2.5 8.5-5.1-5.3zM224.3 539.8l5.8 5-2.8 3.4zM186.3 487.3l-.9 2.9-1.5-9.3zM197.5 502.7l2.1 9.1-3.8-5.9zM195.8 505.9l-3.5-6.1 1.5-3.2zM190.5 490.4l1.8 9.4-3.2-6.3zM201.6 508.7l2.3 9.1-4.3-6zM206.2 514.7l2.4 9-4.7-5.9zM589.4 393.7l3.3 8.6-5.7-2.1zM426.6 201.3l7.8 .6-7.4-.4zM426.6 201.3l7.5 .6 .3 0zM444.8 255.7l-7.1 1.9-1.4-5.2zM422.9 230.7l-1.3-4 8.7 2.3zM425.3 239.5l7.5-1.9 1.2 4.7zM426.5 244.3l7.5-2 1.1 4.9zM425.3 239.5l-1.2-4.5 8.7 2.6zM422.9 230.7l8.6 2.5-7.4 1.8zM422.9 230.7l1.2 4.3-8.7-2.3zM427.3 202l1.1 .9-8.6-.8zM428.4 202.9l-7.5 .4-1.1-1.2zM414.4 205.7l7.5-.9 1 1.9zM416.3 210.4l8.5 1.4-7.5 1.5zM178.2 461.6l.7 6.8 .3 1.2zM180.1 473.8l-.2 1.2-1-7.9zM178.9 468.4l0-1.3 1 7.9zM444.8 255.7l-1 6.1-6.1-4.2zM480.5 298.3l-1.4 7.2-6-5.4zM485.1 311l-6-5.5 7.4-1.8zM442.7 268.1l1.1-6.3 6.5 4.3zM455.6 277.3l-6.4-4.7 7.5-1.9zM468.3 287.4l6.1 5.4-7.4 1.8zM467 294.6l7.4-1.8-1.3 7.3zM468.3 287.4l-7.5 1.9 1.1-7zM531.8 352.1l5.3 6.4-7.9 .3zM542.2 365l7.8 0-2.7 6.7zM555.1 371.7l-7.8 0 2.7-6.7zM567.3 378.6l4.6 7-7.2-.1zM567.3 378.6l-2.6 6.9-4.7-7zM517.7 344.9l8.1-.4-1.9 7.9zM519.5 337.1l-1.8 7.8-6.4-7.3z"/>
<path fill="#ff6e8e" stroke="#ff6e8e" stroke-width="0.7" d="M267.3 585.3l2.6-3.1 4.7 6.7zM267.3 585.3l-4.6-6.8 7.2 3.7zM276.2 599.5l2.9-3.5 4.7 6.9zM291.7 606.1l5 6.5-7.9-3zM291.7 606.1l-2.9 3.5-5-6.7zM301.9 618.9l8.6 2.8-2.8 3.4zM319.7 636.5l2.7-3 6.2 5.4zM313.6 631l2.7-3.3 6.1 5.8zM180.1 473.8l1.4 5-.2 2.9zM180.1 473.8l-.9-7.9 1.3 5zM183.2 483.8l-1.7-5 .5-2.9zM245.8 562.1l3.6 7.8-6.5-4.3zM245.8 562.1l-2.9 3.5-3.5-7.9zM216.3 526.2l5.3 5.1-2.8 3.4zM221.7 543.1l-2.9-8.4 5.5 5.1zM233.2 553.1l-5.9-4.9 2.8-3.4zM183.2 483.8l.7-2.9 1.5 9.3zM188 496.6l-1.7-9.3 2.8 6.2zM589.4 393.7l5.6 2.1-2.3 6.5zM427.3 202l-.3-.5 7.7 .6zM420.3 223l-1.1-3.3 8.4 1.8zM418.2 216.6l8.4 1.7-7.4 1.4zM422.9 230.7l7.4-1.7 1.2 4.2zM412.9 224.8l8.7 1.9-7.4 1.9zM420.3 223l8.7 2.1-7.4 1.6zM444.8 255.7l-8.5-3.3 7.4-2zM436.3 252.4l-1.2-5.2 8.6 3.2zM425.3 239.5l8.7 2.8-7.5 2zM432.8 237.6l-8.7-2.6 7.4-1.8zM429.4 204.2l-7.5 .6-1-1.5zM416.3 210.4l7.6-1.3 .9 2.7zM418.2 216.6l-.9-3.3 8.4 1.5zM423.9 209.1l-8.5-1.2 7.5-1.2zM492.4 309.4l-1.5 7.3-5.8-5.7zM480.5 298.3l6 5.4-7.4 1.8zM451.3 259.9l-1 6.2-6.5-4.3zM456.7 270.7l-7.5 1.9 1.1-6.5zM480.5 298.3l-7.4 1.8 1.3-7.3zM542.2 365l-5.1-6.5 7.6-.1zM531.8 352.1l7.8-.2-2.5 6.6zM589.4 393.7l-2.4 6.5-4-7.1zM576.3 392.6l-4.4-7 6.8 .4zM576.3 392.6l2.4-6.6 4.3 7.1zM542.2 365l2.5-6.6 5.3 6.6zM567.3 378.6l-7.3-.1 2.6-6.7zM560 378.5l-4.9-6.8 7.5 .1zM490.9 316.7l8.5-.8-1.6 7.5zM519.5 337.1l6.3 7.4-8.1 .4zM506.2 322.7l-1.6 7.7-6.8-7zM519.5 337.1l-8.2 .5 1.6-7.8zM512.9 329.8l-1.6 7.8-6.7-7.2z"/>
<path fill="#ff856f" stroke="#ff856f" stroke-width="0.7" d="M272.8 578.9l4.6 6.7-7.5-3.4zM272.8 578.9l-2.9 3.3-4.5-6.9zM282.2 592.2l-4.8-6.6 7.7 3.3zM307.8 611.5l-8.1-2.6 3.1-3.9zM299.7 608.9l-5-6.7 8.1 2.8zM319.2 624.2l-5.8-6.2 8.8 2.3zM331.3 635.6l2.8-3.5 6.1 5.3zM319.2 624.2l8.9 2.1-2.9 3.8zM334.1 632.1l-8.9-2 2.9-3.8zM239.4 545.9l5.9 4.9-2.8 3.3zM245.3 550.8l3.2 8.2-6-4.9zM258.3 571.5l-3.6-7.8 6.4 4.5zM251.3 555.7l3.4 8-6.2-4.7zM178.6 457.9l1.1 5.1-.5 2.9zM181.2 468l-1.5-5 .9-3.1zM185 477.9l-2.1-5 1.3-3zM181.2 468l1-3.1 .7 8zM227.2 536.3l3.3-3.5 2.7 8.4zM219.2 522.7l5.5 5.1-3.1 3.5zM584.4 406.7l5.8 2.2-3 6.8zM412.4 202.7l-8.1-.1 7.5-.7zM411.2 201.3l-.4-.3 8.1 .1zM410.8 201l7.8 0 .3 .1zM427.7 249.3l-7.2 2.2-1.4-4.9zM430.5 259.8l-8.6-3.1 7.2-2.3zM421.9 256.7l-1.4-5.2 8.6 2.9zM405.5 226.8l-1.1-3.6 8.5 1.6zM403.4 219.9l8.4 1.4-7.4 1.9zM401.3 214.2l8.4 1-7.4 1.7zM403.4 219.9l-1.1-3 8.5 1.2zM414.2 228.6l1.2 4.1-8.7-2zM409.2 239.4l7.5-2.3 1.2 4.6zM408 234.9l7.4-2.2 1.3 4.4zM404.9 203.6l8.5 .4-7.5 1.1zM401.3 214.2l-1-2.9 8.5 .8zM400.3 211.3l7.5-1.9 1 2.7zM399.3 208.7l7.5-1.6 1 2.3zM430.5 259.8l6.1 4-7.2 2.3zM489.4 324.2l-1.7 7.8-5.8-5.8zM465.7 302l6 5.4-7.5 2zM477.7 312.8l-7.5 2.1 1.5-7.5zM481.9 326.2l-5.8-5.8 7.5-1.9zM462.6 317.1l7.6-2.2-1.7 7.7zM477.7 312.8l-1.6 7.6-5.9-5.5zM440.5 281.6l1.1-6.8 6.4 4.6zM453.2 291.5l-7.6 2.2 1.3-7.2zM465.7 302l-7.5 2.2 1.3-7.5zM440.5 281.6l7.5-2.2-1.1 7.1zM453.2 291.5l-6.3-5 7.5-2.2zM526.4 365.6l8-.4-2.9 6.9zM515.8 352.9l5.4 6.3-8.3 .5zM536.5 378.6l2.9-6.8 5.1 6.7zM561.9 392.4l-7.6-.1 2.9-6.9zM557.2 385.4l-2.9 6.9-4.8-6.9zM496.2 331.1l-1.8 7.8-6.7-6.9zM502.9 338.2l6.5 7.3-8.3 .6zM502.9 338.2l-1.8 7.9-6.7-7.2zM499.1 354.2l-6.5-7.3 8.5-.8z"/>
<path fill="#ff7e78" stroke="#ff7e78" stroke-width="0.7" d="M274.6 588.9l-4.7-6.7 7.5 3.4zM258.3 571.5l7.1 3.8-2.7 3.2zM265.4 575.3l4.5 6.9-7.2-3.7zM356.8 654.1l-6.6-4.1 9.1 1.3zM343.7 645.7l9 1.4-2.5 2.9zM291.7 606.1l-4.9-6.8 7.9 2.9zM319.2 624.2l-8.7-2.5 2.9-3.7zM304.8 615.4l8.6 2.6-2.9 3.7zM343.7 645.7l-6.3-4.9 9 1.7zM319.2 624.2l6 5.9-8.9-2.4zM245.8 562.1l-3.3-8 6 4.9zM258.3 571.5l-6.3-4.6 2.7-3.2zM179.7 463l.8 7.9-1.3-5zM185 477.9l-1.1 3-1-8zM181.2 468l1.7 4.9-.9 3zM181.2 468l.8 7.9-1.5-5zM239.4 545.9l-6.2-4.7 3.4-3.7zM227.2 536.3l6 4.9-3.1 3.6zM236.2 549.6l-6.1-4.8 3.1-3.6zM197.5 502.7l-3.7-6.1 2-3.1zM190.5 490.4l1.8-3.1 1.5 9.3zM197.5 502.7l2.2-3.3 1.9 9.3zM206.2 514.7l-4.6-6 2.5-3.3zM216.3 526.2l-5.3-5.7 2.8-3.4zM206.2 514.7l2.6-3.4 2.2 9.2zM584.4 406.7l2.6-6.5 3.2 8.7zM412.4 202.7l-.6-.8 8 .2zM419.8 202.1l-8-.2 7.4-.4zM426.6 201.3l-8-.3 7.7 .4zM426.6 201.3l-7.7-.2-.3-.1zM430.5 259.8l-1.4-5.4 8.6 3.2zM425.3 239.5l1.2 4.8-8.6-2.6zM427.7 249.3l-8.6-2.7 7.4-2.3zM405.5 226.8l8.7 1.8-7.5 2.1zM422.9 230.7l-7.5 2-1.2-4.1zM425.3 239.5l-7.4 2.2-1.2-4.6zM424.1 235l-7.4 2.1-1.3-4.4zM414.4 205.7l-8.5-.6 7.5-1.1zM408.8 212.1l8.5 1.2-7.6 1.9zM405.9 205.1l.9 2-8.4-.5zM416.3 210.4l-7.5 1.7-1-2.7zM414.4 205.7l1 2.2-8.6-.8zM415.4 207.9l-7.6 1.5-1-2.3zM178 460.4l.2-1.2 .7 7.9zM179.2 465.9l-.3 1.2-.7-7.9zM178 460.4l.2 1.2-.7-8zM430.5 259.8l7.2-2.2-1.1 6.2zM465.7 302l7.4-1.9-1.4 7.3zM477.7 312.8l-6-5.4 7.4-1.9zM442.7 268.1l6.5 4.5-7.6 2.2zM441.6 274.8l7.6-2.2-1.2 6.8zM465.7 302l-6.2-5.3 7.5-2.1zM459.5 296.7l1.3-7.4 6.2 5.3zM453.2 291.5l1.2-7.2 6.4 5zM523.9 352.4l5.3 6.4-8 .4zM584.4 406.7l-4-7.1 6.6 .6zM552.4 378.4l-7.9 .1 2.8-6.8zM539.4 371.8l7.9-.1-2.8 6.8zM576.3 392.6l4.1 7-6.9-.1zM561.9 392.4l2.8-6.9 4.5 6.9zM576.3 392.6l-2.8 6.9-4.3-7.1zM561.9 392.4l-4.7-7 7.5 .1zM515.8 352.9l-6.4-7.4 8.3-.6zM502.9 338.2l8.4-.6-1.9 7.9z"/>
<path fill="#ff9c54" stroke="#ff9c54" stroke-width="0.7" d="M306.1 600.7l-5-6.1 8.2 2.5zM288.2 585.4l3.3-3.7 4.7 6.5zM288.2 585.4l-4.6-6.8 7.9 3.1zM279.1 571.7l4.5 6.9-7.8-3.2zM346 629.8l6 5.3-8.9-1.4zM352 635.1l9.1 1.2-2.8 3.9zM325.5 616.2l8.6 1.9-2.9 4.3zM337.1 613.5l-3 4.6-5.7-6.4zM337.1 628.2l2.8-4.2 6.1 5.8zM314.4 603.1l5.4 6.7-8.8-2.4zM245.4 539l-5.8-4.9 3.2-3.6zM234.1 529l3.1-3.5 2.4 8.6zM257.7 548.6l3.1 8.2-6.4-4.6zM245.4 539l6 4.8-3.2 3.6zM257.7 548.6l-3.3 3.6-3-8.4zM180.3 451.9l0-8 1.4 4.9zM180.3 451.9l-1.2-4.9 1.2-3.1zM188.2 471.7l-.5-8.1 2.6 4.9zM183.7 461.9l-.3-8.1 2 4.9zM185.8 466.8l-.4-8.1 2.3 4.9zM180.3 451.9l1.4-3.1 .1 8.1zM183.4 453.8l-1.6 3.1-.1-8.1zM231.8 520.4l-3.7 3.7-2.1-8.7zM222.4 519.1l-2.1-9.2 5.7 5.5zM218.6 500.6l5.4 5.5-3.7 3.8zM578.5 419.9l2.6 9.1-5.8-2.4zM586.8 431.4l-5.7-2.4 3.2-6.7zM396.2 202.8l-8.1 .5 7.5-1.1zM389.3 205.2l-.6-1.1 8.1-.4zM396.2 202.8l-7.5 1.3-.6-.8zM394.7 201.8l7.7-.3 .4-.2zM403.2 246.6l-8.6-2 7.2-2.6zM395.9 249.3l7.3-2.7 1.4 4.9zM416.1 264.6l-8.7-2.7 7.3-2.7zM407.4 261.9l-1.4-5.3 8.7 2.6zM386.4 218.3l-.9-2.7 8.3 .5zM384.5 213.2l8.4 .3-7.4 2.1zM390.8 231.6l-1.2-3.7 8.5 1.2zM388.5 224.5l8.5 1-7.4 2.4zM388.5 224.5l-1.1-3.3 8.5 .9zM386.4 218.3l8.5 .6-7.5 2.3zM393.3 240.2l7.3-2.8 1.2 4.6zM390.8 231.6l8.6 1.5-7.4 2.7zM393.3 240.2l-1.3-4.4 8.6 1.6zM382.6 208.5l7.4-2 .9 1.9zM384.5 213.2l-1-2.6 8.4 .2zM390.9 208.4l1 2.4-8.4-.2zM178.4 434l-.8 1.2 .4-8zM177.5 443.2l-.3-6.8 .4-1.2zM425.9 286.9l7.3-2.7-1.2 7.2zM422.2 268.6l-1.2 6.8-6.1-4.1zM425.9 286.9l1.2-7.2 6.1 4.5zM427.1 279.7l-7.3 2.8 1.2-7.1zM485.9 339.8l-1.9 8.1-5.7-5.9zM474.4 328.2l-1.8 7.9-5.8-5.6zM462.6 317.1l-1.7 7.7-5.9-5.4zM450.7 306.5l5.9 5.2-7.6 2.4zM447.4 321.9l1.6-7.8 6 5.3zM456.6 311.7l-1.6 7.7-6-5.3zM460.9 324.8l7.6-2.2-1.7 7.9zM438 296.2l6.4 5-7.6 2.6zM450.7 306.5l-7.6 2.5 1.3-7.8zM578.5 419.9l-3.2 6.7-3.8-6.8zM564.2 419.7l3.2-6.7 4.1 6.8zM548.7 419.7l3.6-6.7 4.3 6.7zM499.1 354.2l-3 7-5.5-6.2zM509.9 366.7l-8.4 .7 3.1-7zM504.6 360.4l-3.1 7-5.4-6.2zM530.2 392.6l-4.9-6.6 8.1-.4zM520.3 379.6l8.2-.5-3.2 6.9zM509.9 366.7l5.3 6.4-8.4 .6zM555.7 406.3l-7.8 0 3.2-7zM547.9 406.3l-4.6-6.9 7.8-.1zM484 347.9l8.6-1-2 8.1z"/>
<path fill="#ff9061" stroke="#ff9061" stroke-width="0.7" d="M297.9 598.1l-7.9-2.8 3-3.5zM272.8 578.9l-4.4-7 7.4 3.5zM288.2 585.4l-3.1 3.5-4.7-6.7zM272.8 578.9l3-3.5 4.6 6.8zM307.8 611.5l3.2-4.1 5.5 6.6zM328.1 626.3l-5.9-6 9 2.1zM337.1 628.2l6 5.5-9-1.6zM349.3 638.9l-9.1-1.5 2.9-3.7zM251.3 555.7l-6-4.9 2.9-3.4zM242.3 542.5l5.9 4.9-2.9 3.4zM251.3 555.7l3.1-3.5 3.2 8.1zM178.6 457.9l-.3-7.9 1 4.9zM183.7 461.9l2.1 4.9-1.6 3.1zM188.2 471.7l-1.8 3.1-.6-8zM183.7 461.9l.5 8-2-5zM181.8 456.9l.4 8-1.6-5zM222.4 519.1l5.7 5-3.4 3.7zM230.5 532.8l-5.8-5 3.4-3.7zM188.2 471.7l2.9 6.2-1.9 3.2zM222.4 519.1l-3.2 3.6-2.3-9.1zM589.8 424.8l-5.5-2.5 2.9-6.6zM587.2 415.7l-2.9 6.6-2.8-9zM397.4 204.9l-.6-1.2 8.1-.1zM396.2 202.8l8.1-.2-7.5 1.1zM396.2 202.8l7.5-.9 .6 .7zM410.5 201.1l.3-.1-8 .3zM402.8 201.3l8-.3-7.7 .4zM413.3 253.9l8.6 2.8-7.2 2.5zM414.7 259.2l7.2-2.5 1.4 5.4zM413.3 253.9l-1.4-5 8.6 2.6zM401.3 214.2l-7.5 1.9-.9-2.6zM405.5 226.8l-7.4 2.3-1.1-3.6zM402.3 216.9l-7.4 2-1.1-2.8zM397 225.5l-1.1-3.4 8.5 1.1zM403.4 219.9l-7.5 2.2-1-3.2zM410.5 244.1l-8.7-2.1 7.4-2.6zM408 234.9l1.2 4.5-8.6-2zM408 234.9l-7.4 2.5-1.2-4.3zM399.3 208.7l-8.4-.3 7.5-1.8zM399.3 208.7l1 2.6-8.4-.5zM177.4 446.8l-.3-8 0 6.8zM428.3 272.7l-6.1-4.1 7.2-2.5zM440.5 281.6l-1.2 7.2-6.1-4.6zM440.5 281.6l-7.3 2.6 1.2-7.1zM485.9 339.8l-5.7-5.8 7.5-2zM474.4 328.2l7.5-2-1.7 7.8zM472.6 336.1l7.6-2.1-1.9 8zM464.2 309.4l-7.6 2.3 1.6-7.5zM474.4 328.2l-5.9-5.6 7.6-2.2zM446.9 286.5l-1.3 7.2-6.3-4.9zM578.5 419.9l-3.9-6.7 6.9 .1zM512.9 359.7l-8.3 .7 2.9-6.9zM528.5 379.1l-5.1-6.6 8.1-.4zM536.5 378.6l5 6.9-8.1 .1zM546.4 392.4l7.9-.1-3.2 7zM551.1 399.3l3.2-7 4.6 7zM499.1 354.2l2-8.1 6.4 7.4zM485.9 339.8l8.5-.9-1.8 8z"/>
<path fill="#ff659a" stroke="#ff659a" stroke-width="0.7" d="M338.8 650.8l8.9 1.8-2.4 2.3zM326 641.8l8.8 2.1-2.5 2.6zM338.8 650.8l-6.5-4.3 8.9 1.9zM301.9 618.9l-2.6 3.2-5.4-6.1zM276.2 599.5l7.6 3.4-2.8 3.4zM288.8 609.6l-7.8-3.3 2.8-3.4zM301.9 618.9l5.8 6.2-8.4-3zM326 641.8l-6.3-5.3 8.9 2.4zM181.3 481.7l.2-2.9 1.3 7.9zM253.3 577.5l-6.7-4.2 2.8-3.4zM246.6 573.3l-3.7-7.7 6.5 4.3zM233.2 553.1l3.4 8-6-4.7zM221.7 543.1l-5.3-5.2 2.4-3.2zM211.4 532.6l2.3-3.2 2.7 8.5zM183.2 483.8l2.2 6.4-.5 2.9zM199.6 511.8l-1.6 3.2-2.2-9.1zM194.4 509l-3.4-6.2 1.3-3zM188 496.6l1.1-3.1 1.9 9.3zM202 520.8l-2.4-9 4.3 6zM213.7 529.4l-5.1-5.7 2.4-3.2zM211.4 532.6l-4.9-5.8 2.1-3.1zM203.9 517.8l4.7 5.9-2.1 3.1zM589.4 393.7l2.2-6.5 3.4 8.6zM444.8 255.7l-1.1-5.3 8.2 3.6zM431.5 233.2l-1.2-4.2 8.6 2.7zM442.6 245.4l-8.6-3.1 7.4-1.8zM440.2 236l-7.4 1.6-1.3-4.4zM427.3 202l7.4 .1 1.5 .8zM431.4 208.1l-8.5-1.4 7.5-.7zM429.4 204.2l1 1.8-8.5-1.2zM432.3 210.6l-7.5 1.2-.9-2.7zM431.4 208.1l-7.5 1-1-2.4zM416.3 210.4l-.9-2.5 8.5 1.2zM180 476.3l-.1-1.3 1.3 7.9zM444.8 255.7l7.1-1.7-.6 5.9zM480.5 298.3l7.2-1.6-1.2 7zM457.7 264.3l-7.4 1.8 1-6.2zM463 275.5l-6.3-4.8 7.4-1.7zM468.3 287.4l1.1-6.9 6.2 5.2zM480.5 298.3l-6.1-5.5 7.3-1.7zM567.3 378.6l-4.7-6.8 7 .3zM567.3 378.6l2.3-6.5 4.7 7zM552.5 358.4l-2.5 6.6-5.3-6.6zM557.6 365l5 6.8-7.5-.1zM531.8 352.1l1.8-7.9 6 7.7zM519.5 337.1l7.9-.4-1.6 7.8zM519.5 337.1l-6.6-7.3 8.2-.3z"/>
<path fill="#fc59ab" stroke="#fc59ab" stroke-width="0.7" d="M332.3 646.5l-2.4 2.2-6.4-4.6zM343 656.8l-6.6-3.9 8.9 2zM338.8 650.8l-2.4 2.1-6.5-4.2zM261.7 592.1l-4.3-7.2 7 3.9zM260.2 581.5l4.2 7.3-7-3.9zM261.7 592.1l2.7-3.3 4.4 7.1zM286.1 612.9l7.8 3.1-2.5 3.1zM317.4 639.3l-6.2-5.4 8.5 2.6zM240.2 568.9l-6.1-4.6 2.5-3.2zM230.6 556.4l6 4.7-2.5 3.2zM216.4 537.9l3 8.4-5.1-5.3zM182.8 489.5l0-2.8 1.9 9.3zM182.8 486.7l2.1 6.4-.2 2.9zM194.4 509l3.6 6-1.2 3zM202 520.8l-1.4 3.1-2.6-8.9zM190.1 505.8l.9-3 2.3 9.2zM202 520.8l4.5 6-1.7 2.9zM211.4 532.6l-1.9 3-3-8.8zM593.6 380.8l3.6 8.6-5.6-2.2zM442.2 202.7l-.4-.1 7.7 1zM449.5 203.6l-7.7-1 7.4 1.1zM440.2 236l8.3 3.1-7.1 1.4zM448.5 239.1l1.2 4.7-8.3-3.3zM442.6 245.4l7.1-1.6 1.1 5zM440.2 236l-1.3-4.3 8.3 2.9zM435 220.3l1.3 3.5-8.7-2.3zM431.4 208.1l8.8 1.7-7.9 .8zM445.1 204.2l-7.9-.2-1-1.1zM431.4 208.1l-1-2.1 8.9 1.5zM430.4 206l7.9-.4 1 1.9zM180 476.3l1.7 9.3-1-6.7zM457.7 264.3l7.1-1.5-.7 6.2zM457.7 264.3l.7-6 6.4 4.5zM487.7 296.7l-6-5.6 7.2-1.5zM470.4 273.8l6.3 5.1-7.3 1.6zM482.9 284.1l-7.3 1.6 1.1-6.8zM557.6 365l-5.1-6.6 7.2 .1zM557.6 365l2.1-6.5 5.1 6.7zM535.2 336.5l6.1 7.6-7.7 .1zM528.9 329.2l-1.5 7.5-6.3-7.2zM535.2 336.5l-1.6 7.7-6.2-7.5zM521.1 329.5l-8.2 .3 1.5-7.5z"/>
<path fill="#ff60a0" stroke="#ff60a0" stroke-width="0.7" d="M253.3 577.5l6.9 4-2.8 3.4zM271.6 592.5l-2.8 3.4-4.4-7.1zM286.1 612.9l2.7-3.3 5.1 6.4zM313.6 631l-8.5-2.9 2.6-3zM307.7 625.1l-2.6 3-5.8-6zM313.6 631l6.1 5.5-8.5-2.6zM240.2 568.9l-3.6-7.8 6.3 4.5zM218.8 534.7l-2.4 3.2-2.7-8.5zM188 496.6l-.6 2.9-2-9.3zM202 520.8l-4-5.8 1.6-3.2zM194.4 509l1.4-3.1 2.2 9.1zM202 520.8l1.9-3 2.6 9zM442.2 202.7l-7.8-.8 7.4 .7zM435 220.3l-7.4 1.2-1-3.2zM442.6 245.4l8.2 3.4-7.1 1.6zM436.3 223.8l-7.3 1.3-1.4-3.6zM440.2 236l-8.7-2.8 7.4-1.5zM437.6 227.6l-7.3 1.4-1.3-3.9zM440.2 236l1.2 4.5-8.6-2.9zM426.6 218.3l-.9-3.5 8.4 1.9zM431.4 208.1l.9 2.5-8.4-1.5zM433.2 213.5l-7.5 1.3-.9-3zM429.4 204.2l-1-1.3 8.8 1.1zM436.2 202.9l1 1.1-8.8-1.1zM492.4 309.4l-5.9-5.7 7.2-1.5zM493.7 302.2l-7.2 1.5 1.2-7zM457.7 264.3l6.4 4.7-7.4 1.7zM457.7 264.3l-1 6.4-6.4-4.6zM480.5 298.3l1.2-7.2 6 5.6zM474.4 292.8l1.2-7.1 6.1 5.4zM470.4 273.8l-1 6.7-6.4-5zM547.2 351.8l-2.5 6.6-5.1-6.5zM581 379.6l-2.3 6.4-4.4-6.9zM574.3 379.1l4.4 6.9-6.8-.4zM589.4 393.7l-4.1-7.1 6.3 .6zM581 379.6l4.3 7-6.6-.6zM557.6 365l7.2 .2-2.2 6.6zM557.6 365l-7.6 0 2.5-6.6zM506.2 322.7l-6.8-6.8 8.3-.5zM492.4 309.4l8.4-.7-1.4 7.2zM525.8 344.5l1.6-7.8 6.2 7.5zM506.2 322.7l8.2-.4-1.5 7.5z"/>
<path fill="#ff7b7d" stroke="#ff7b7d" stroke-width="0.7" d="M282.2 592.2l-3.1 3.8-4.5-7.1zM296.7 612.6l3-3.7 5.1 6.5zM282.2 592.2l4.6 7.1-7.7-3.3zM331.3 635.6l6.1 5.2-8.8-1.9zM319.2 624.2l-2.9 3.5-5.8-6zM331.3 635.6l-8.9-2.1 2.8-3.4zM258.3 571.5l-2.6 3.1-3.7-7.7zM245.8 562.1l2.7-3.1 3.5 7.9zM183.9 480.9l-1.9-5 .9-3zM242.5 554.1l-3.1 3.6-3.2-8.1zM227.2 536.3l-2.9 3.5-2.7-8.5zM227.2 536.3l2.9 8.5-5.8-5zM185 477.9l1.3 9.4-2.4-6.4zM185 477.9l2.6 6.3-1.3 3.1zM190.5 490.4l-1.4 3.1-1.5-9.3zM587 400.2l5.7 2.1-2.5 6.6zM426.6 201.3l.4 .2-8.1-.4zM419.2 201.5l-.3-.4 8.1 .4zM427.7 249.3l8.6 3.1-7.2 2zM437.7 257.6l-8.6-3.2 7.2-2zM420.3 223l-7.4 1.8-1.1-3.5zM418.2 216.6l-7.4 1.5-1.1-2.9zM411.8 221.3l-1-3.2 8.4 1.6zM425.3 239.5l-8.6-2.4 7.4-2.1zM412.4 202.7l7.4-.6 1.1 1.2zM412.4 202.7l8.5 .6-7.5 .7zM416.3 210.4l1 2.9-8.5-1.2zM414.4 205.7l-7.6 1.4-.9-2zM416.3 210.4l-8.5-1 7.6-1.5zM442.7 268.1l-6.1-4.3 7.2-2zM443.8 261.8l-7.2 2 1.1-6.2zM435.5 270.3l-6.1-4.2 7.2-2.3zM489.4 324.2l-5.8-5.7 7.3-1.8zM477.7 312.8l7.4-1.8-1.5 7.5zM473.1 300.1l6 5.4-7.4 1.9zM477.7 312.8l1.4-7.3 6 5.5zM455.6 277.3l-7.6 2.1 1.2-6.8zM465.7 302l1.3-7.4 6.1 5.5zM455.6 277.3l-1.2 7-6.4-4.9zM542.2 365l-2.8 6.8-5-6.6zM534.4 365.2l-5.2-6.4 7.9-.3zM542.2 365l5.1 6.7-7.9 .1zM552.4 378.4l7.6 .1-2.8 6.9zM564.7 385.5l-7.5-.1 2.8-6.9zM515.8 352.9l-8.3 .6 1.9-8zM515.8 352.9l1.9-8 6.2 7.5zM489.4 324.2l8.4-.8-1.6 7.7zM502.9 338.2l-6.7-7.1 8.4-.7zM509.4 345.5l1.9-7.9 6.4 7.3z"/>
<path fill="#ffff7f" stroke="#ffff7f" stroke-width="0.7" d="M459.1 604.9l-4 5.7-5.1-3.8zM342.7 510.8l-3.7 7.9-3.9-7.1zM359.5 538.7l-4.3-6.8 7.8-1zM350.9 525l7.8-1-3.5 7.9zM355.2 531.9l3.5-7.9 4.3 6.9zM342.7 510.8l4.1 7.1-7.8 .8zM350.9 525l-7.7 .8 3.6-7.9zM346.8 517.9l-3.6 7.9-4.2-7.1zM404.9 574.3l-4.9-5.7 8.2-1.5zM395.1 562.7l4.9 5.9-8.3 1.3zM359.5 538.7l3.5-7.8 4.7 6.9zM395.1 562.7l3.4-7.6 4.8 6.2zM385.5 550l4.8 6.5-8.2 1.2zM395.1 562.7l-8.3 1.3 3.5-7.5zM382.1 557.7l8.2-1.2-3.5 7.5zM385.5 550l-3.4 7.7-4.9-6.5zM359.5 538.7l8.2-.9-3.5 7.7zM367.7 537.8l4.7 6.7-8.2 1zM369 552.2l3.4-7.7 4.8 6.7zM497.8 495.6l-7.7 2.1 1.5-8.2zM485.4 483.4l6.2 6.1-7.6 2.1zM490.1 497.7l-6.1-6.1 7.6-2.1zM476.2 493.7l-1.6 8.3-6.3-6.2zM533.2 529.3l1.9-8 5.3 5.2zM522.2 518.5l1.7-8.1 5.7 5.5zM533.2 529.3l-5.4-5.4 7.3-2.6zM522.2 518.5l7.4-2.6-1.8 8zM527.8 523.9l1.8-8 5.5 5.4zM497.8 495.6l6.3 5.8-7.9 2.3zM510.3 507.2l-7.8 2.3 1.6-8.1zM510.3 507.2l-6.2-5.8 7.8-2.4zM522.2 518.5l-5.9-5.6 7.6-2.5zM510.3 507.2l7.6-2.5-1.6 8.2zM510.3 507.2l6 5.7-7.8 2.4zM416.9 586.6l3.4-7 6 5.9zM416.9 586.6l-6-6.1 9.4-.9zM404.9 574.3l9.4-.9-3.4 7.1zM420.3 579.6l-9.4 .9 3.4-7.1zM440.8 608.4l3.3-6.5 5.9 4.9zM450 606.8l-5.9-4.9 9.2-1.8zM429 598l3.3-6.7 5.9 5.4zM447.5 595.1l-3.4 6.8-5.9-5.2zM434.9 603.3l3.3-6.6 5.9 5.2zM429 598l-6-5.6 9.3-1.1zM416.9 586.6l9.4-1.1-3.3 6.9zM432.3 591.3l-9.3 1.1 3.3-6.9zM430.7 556.7l-3.5 8-6.1-6.4zM442.8 569l-6.1-6 9.5-1.9zM473.8 575.9l-3.6 7.6-5.9-5.2zM442.8 569l9.6-2-3.6 7.9zM485.4 483.4l-7.7 2.1 3.2-8.9zM473.1 478.7l7.8-2.1-3.2 8.9zM450.7 460.2l8-2-3.1 8.9zM460.4 474l-4.8-6.9 7.9-2zM458.7 458.2l4.8 6.9-7.9 2zM476.2 469.9l-3.1 8.8-4.7-6.8zM465.2 480.8l3.2-8.9 4.7 6.8zM329.4 496.9l-7.5 .7 1-7.8zM314.5 498.2l1-7.8 6.4 7.2zM322.9 489.8l-1 7.8-6.4-7.2zM342.7 510.8l-7.6 .8 .9-7.7zM329.4 496.9l6.6 7-7.6 .7zM329.4 496.9l-1 7.7-6.5-7zM343.7 503.1l7.7-.9-1 7.8zM342.7 510.8l-6.7-6.9 7.7-.8zM334 403.2l2.4-7.9 5.7 6.7zM347.8 439.5l2-8.1 6.2 6.8zM383.6 458l-1.8 8.3-6.6-7zM362.2 445.1l6.5 7.1-8.2 1.2zM360.4 493.3l8.3-1.2-1.6 8zM349.3 357l6 4.9-8.8 2.6zM361.5 366.9l-8.9 2.5 2.7-7.5zM355.3 361.9l-2.7 7.5-6.1-4.9zM356.2 382.2l2.6-7.7 6.2 5.1zM361.5 366.9l6.2 5.1-8.9 2.5zM365 379.6l-6.2-5.1 8.9-2.5zM361.5 366.9l-2.7 7.6-6.2-5.1zM406 437.3l-3.1 8.9-6.4-6.8zM424.9 433.1l-3.1 8.9-6.4-6.8zM412.4 444.1l-3.1 8.9-6.4-6.8zM450.7 460.2l-6.4-6.7 9.4-2.1zM424.9 433.1l6.5 6.8-9.6 2.1zM437.9 446.7l-9.6 2.1 3.1-8.9zM450.7 460.2l-9.5 2.2 3.1-8.9zM374 377.2l-3.1 9.1-5.9-6.7zM370.9 386.3l-8.9 2.5 3-9.2zM398.4 404.4l-2.9 9.3-6.2-6.9zM380 383.9l-3 9.2-6.1-6.8zM398.4 404.4l-9.1 2.4 2.9-9.3zM389.3 406.8l-6.2-6.9 9.1-2.4zM380.3 409.2l-9.1 2.5 2.9-9.3zM386.1 390.7l-3 9.2-6.1-6.8zM368 395.5l9-2.4-2.9 9.3zM411.6 418.7l-9.4 2.1 2.8-9.2zM405 411.6l-2.8 9.2-6.7-7.1zM411.6 418.7l6.7 7.2-9.5 2.1zM415.4 435.2l-6.6-7.2 9.5-2.1zM411.6 418.7l-2.8 9.3-6.6-7.2zM290.4 236l.4-.2-6.7 4.2zM284.1 240l6.7-4.2-6.3 4.1zM290.4 236l-6.3 4-.3 .4zM289.2 271.2l1.3 4.3-6.8 2.4zM291.9 279.9l-6.9 2.4 5.5-6.8zM290.5 275.5l-5.5 6.8-1.3-4.4zM295.2 289.4l-6.9 2.3 5.2-7.1zM291.9 279.9l1.6 4.7-6.9 2.3zM295.2 289.4l-1.7-4.8 7.1-2.2zM291.9 279.9l7.1-2.2-5.5 6.9zM202.3 335.4l3-6.8 .3 1.9zM208.5 322l.2 1.7-3.4 4.9zM205.3 328.6l3.4-4.9-3.1 6.8zM206.2 344.5l2.3-7.1 1.6 2.6zM206.2 344.5l-1.5-2.5 3.8-4.6zM203.5 339.6l3.7-4.7-2.5 7.1zM204.7 342l2.5-7.1 1.3 2.5zM203.5 339.6l2.7-7 1 2.3zM223.9 296.9l4.4-5.9-.4 1zM229.4 312.9l1.8 3.2-4.9 3.9zM215.7 312.5l-.1-1.8 4-5zM289.2 271.2l-5.5 6.7-2.5-3.7zM284.9 264.1l-1.9-3.1 7.8-3.1zM281.4 258.1l1.6 2.9-7.6 3.4zM284.9 264.1l-7.8 3.3 5.9-6.4zM289.2 271.2l-8 3 5.7-6.6zM284.9 264.1l2 3.5-7.8 3.1zM284.9 264.1l-5.8 6.6-2-3.3zM277.5 248.8l-.2-1.6 6.9-3.9zM277.3 247.2l6.8-5.3 .1 1.4zM291.3 235.9l-7.1 4.8 .3-.8zM284.5 239.9l-.3 .8-6.7 4.2zM277.3 245.9l6.9-5.2-.1 1.2zM284.1 241.9l.1-1.2 6.9-3.9zM253.1 273.9l5.7-6.7 1 2.4zM277.5 248.8l6.7-5.5 .6 1.6zM279 252.8l7.5-3.5-6.4 6zM277.5 248.8l7.3-3.9-6.7 5.8zM279 252.8l-.9-2.1 7.4-3.8zM284.8 244.9l.7 2-7.4 3.8zM279 252.8l6.5-5.9 1 2.4zM208.5 322l-3.2 6.6-1.1 .6zM208.5 322l-4.3 7.2 3.4-6.6zM206.8 323.4l.8-.8-4.2 7.3zM204.2 329.2l-.8 .7 4.2-7.3zM206.8 323.4l-.3 .6 4.1-7.3zM206.5 324l3.9-6.6 .2-.7zM214.3 335.7l4.4-4.3-3.8 8.7zM208.1 357.8l3.2-8.9 1 4.5zM206.2 344.5l3.9-4.5-3.5 8.9zM207.2 353.3l-.6-4.4 4-4.5zM210.1 340l.5 4.4-4 4.5zM207.2 353.3l3.4-8.9 .7 4.5zM259.2 314.9l-1.8-4.8 6.2-3zM251 331.1l-5.9 3.4 3.9-8.3zM232.7 383.3l-2.1 9.1-3.1-5zM227 373.5l-2.4 9-2.7-4.8zM232.7 383.3l-5.2 4.1 2.2-9.1zM227 373.5l2.7 4.8-5.1 4.2zM227.5 387.4l-2.9-4.9 5.1-4.2zM209.3 362.4l3-9 1.5 4.6zM212.3 353.4l4.6-4.3-3.1 8.9zM222.3 363.4l2.2 5-5 4.2zM219.5 372.6l5-4.2-2.6 9.3zM222.3 363.4l-2.8 9.2-2.1-4.9zM218.5 353.7l-3.1 9.1-1.6-4.8zM213.8 358l1.6 4.8-4.5 4.4zM218.5 353.7l1.7 4.8-4.8 4.3zM217.4 367.7l-2-4.9 4.8-4.3zM328.5 332.2l-3 7.3-4.8-5.9zM312.9 335.1l7.8-1.5-3 7.4zM328.5 332.2l5 6-8 1.3zM338.7 344.3l-8.1 1.3 2.9-7.4zM333.5 338.2l-2.9 7.4-5.1-6.1zM349.3 357l-8.2 1.1 2.8-7.5zM338.7 344.3l5.2 6.3-8.1 1.2zM341.1 358.1l-5.3-6.3 8.1-1.2zM338.7 344.3l-2.9 7.5-5.2-6.2zM302.3 298.8l7.3-1.8-3.5 6.8zM295.2 289.4l7.1-2.1-3.6 6.7zM302.3 298.8l-3.6-4.8 7.1-2zM310 309.1l-3.2 7.1-4.1-5.2zM295.2 289.4l3.5 4.6-7.2 2.2zM302.3 298.8l-7.2 2.1 3.6-6.9zM310 309.1l-7.3 1.9 3.4-7.2zM302.3 298.8l3.8 5-7.3 2zM302.7 311l-3.9-5.2 7.3-2zM310 309.1l4.4 5.5-7.6 1.6zM319 320.3l-7.8 1.5 3.2-7.2zM314.4 314.6l-3.2 7.2-4.4-5.6zM328.5 332.2l-7.8 1.4 3-7.5zM319 320.3l4.7 5.8-7.8 1.5zM320.7 333.6l-4.8-6 7.8-1.5zM316.6 482.6l-1.1 7.8-6.7-4.3zM291 464.5l7.5-3.3-1.3 7.9zM291 464.5l6.2 4.6-7.5 3.4zM303.5 473.7l-7.6 3.3 1.3-7.9zM316.6 482.6l-7.8 3.5 1.2-7.9zM303.5 473.7l6.5 4.5-7.7 3.4zM308.8 486.1l-6.5-4.5 7.7-3.4zM303.5 473.7l-1.2 7.9-6.4-4.6zM270.7 428.1l-1.8 8.3-5.1-4.9zM262.1 439.7l1.7-8.2 5.1 4.9zM260.7 418.3l-1.9 8.2-4.8-4.9zM257.1 434.8l1.7-8.3 5 5zM263.8 431.5l-5-5 6.8-3.3zM311.3 404.1l-2.2 8-5.9-5zM270.7 428.1l2-8.2 5.4 4.9zM267.3 444.6l1.6-8.2 5.6 4.9zM267.3 444.6l7.2-3.3-1.5 8.3zM278.8 454.6l-5.8-5 7.3-3.3zM274.5 441.3l5.8 5-7.3 3.3zM291 464.5l-6.2-4.9 7.5-3.4zM278.8 454.6l7.4-3.3-1.4 8.3zM284.8 459.6l1.4-8.3 6.1 4.9zM278.8 454.6l1.5-8.3 5.9 5zM289.2 327.7l-8.1 3 4.1-8.1zM277.2 339.1l3.9-8.4 4.1 5.3zM276.9 402.2l7.5-3.1-2.2 9.4zM232.7 383.3l4 5.6-6.1 3.5zM240.9 394.6l-6.1 3.4 1.9-9.1zM230.6 392.4l6.1-3.5-1.9 9.1zM250.4 406.3l5 6-6.6 3.3zM260.7 418.3l-6.7 3.3 1.4-9.3zM248.8 415.6l6.6-3.3-1.4 9.3zM240.9 394.6l-1.8 9.2-4.3-5.8zM250.4 406.3l-1.6 9.3-4.9-5.9zM240.9 394.6l4.6 5.8-6.4 3.4zM250.4 406.3l-6.5 3.4 1.6-9.3zM245.5 400.4l-1.6 9.3-4.8-5.9zM264 399.7l7.5-3.5-2.2 9.5z"/>
<path fill="#ffff6a" stroke="#ffff6a" stroke-width="0.7" d="M451.1 616.1l-5.1-3.8 9.1-1.7zM440.8 608.4l9.2-1.6-4 5.5zM455.1 610.6l-9.1 1.7 4-5.5zM335.5 526.5l-4-7 7.5-.8zM327.5 512.3l7.6-.7-3.6 7.9zM339 518.7l-7.5 .8 3.6-7.9zM373.9 506.8l-3.7 8.2-4.2-7zM359.5 538.7l-3.4 7.5-4.4-6.6zM359.5 538.7l-7.8 .9 3.5-7.7zM350.9 525l4.3 6.9-7.8 .9zM351.7 539.6l-4.3-6.8 7.8-.9zM350.9 525l-3.5 7.8-4.2-7zM404.9 574.3l-3.3 6.9-5-5.6zM395.1 562.7l-3.4 7.2-4.9-5.9zM396.6 575.6l-4.9-5.7 8.3-1.3zM378.7 565.1l3.4-7.4 4.7 6.3zM359.5 538.7l4.7 6.8-8.1 .7zM369 552.2l8.2-1-3.4 7.5zM373.8 558.7l3.4-7.5 4.9 6.5zM369 552.2l-4.8-6.7 8.2-1zM497.8 495.6l-6.2-6.1 7.6-2.2zM485.4 483.4l7.6-2.2-1.4 8.3zM499.2 487.3l-7.6 2.2 1.4-8.3zM485.4 483.4l-1.4 8.2-6.3-6.1zM536.9 513.1l5.4 5.4-7.2 2.8zM533.2 529.3l-7.4 2.6 2-8zM536.9 513.1l-7.3 2.8 1.7-8.2zM531.3 507.7l-1.7 8.2-5.7-5.5zM536.9 513.1l-1.8 8.2-5.5-5.4zM497.8 495.6l1.4-8.3 6.4 5.9zM510.3 507.2l1.6-8.2 6 5.7zM517.9 504.7l-6-5.7 7.6-2.5zM497.8 495.6l7.8-2.4-1.5 8.2zM511.9 499l-7.8 2.4 1.5-8.2zM525.5 502.1l-1.6 8.3-6-5.7zM523.9 510.4l-7.6 2.5 1.6-8.2zM404.9 574.3l6 6.2-9.3 .7zM416.9 586.6l-9.3 .8 3.3-6.9zM401.6 581.2l9.3-.7-3.3 6.9zM440.8 608.4l-5.9-5.1 9.2-1.4zM429 598l9.2-1.3-3.3 6.6zM416.9 586.6l-3.3 6.8-6-6zM416.9 586.6l6.1 5.8-9.4 1zM429 598l-9.4 1.1 3.4-6.7zM423.6 572.4l9.6-1.6-3.6 7.6zM450.7 460.2l3-8.8 5 6.8zM485.4 483.4l3.1-8.9 4.5 6.7zM476.2 469.9l4.7 6.7-7.8 2.1zM485.4 483.4l-4.5-6.8 7.6-2.1zM476.2 469.9l7.7-2.1-3 8.8zM466.6 456.2l-3.1 8.9-4.8-6.9zM466.6 456.2l4.8 6.9-7.9 2zM476.2 469.9l-7.8 2 3-8.8zM471.4 463.1l-3 8.8-4.9-6.8zM327.5 512.3l.9-7.7 6.7 7zM314.5 498.2l7.4-.6-1 7.7zM327.5 512.3l-6.6-7 7.5-.7zM321.9 497.6l6.5 7-7.5 .7zM343.8 372.1l2.7-7.6 6.1 4.9zM374 377.2l-9 2.4 2.7-7.6zM349.3 357l2.8-7.4 6.1 4.8zM349.3 357l8.9-2.6-2.9 7.5zM361.5 366.9l-6.2-5 9-2.6zM358.2 354.4l6.1 4.9-9 2.6zM374 377.2l-6.3-5.2 9-2.4zM437.9 446.7l9.4-2.1-3 8.9zM444.3 453.5l3-8.9 6.4 6.8zM437.9 446.7l-6.5-6.8 9.4-2.1zM434.3 431l6.5 6.8-9.4 2.1zM437.9 446.7l2.9-8.9 6.5 6.8zM437.9 446.7l6.4 6.8-9.5 2.1zM418.8 450.9l9.5-2.1-3 8.9zM398.4 404.4l-6.2-6.9 9.1-2.2zM386.1 390.7l9.1-2.3-3 9.1zM374 377.2l8.9-2.4-2.9 9.1zM386.1 390.7l-6.1-6.8 9-2.3zM395.5 413.7l-9 2.3 2.8-9.2zM374 377.2l6 6.7-9.1 2.4zM386.1 390.7l-9.1 2.4 3-9.2zM386.1 390.7l6.1 6.8-9.1 2.4zM424.9 433.1l-9.5 2.1 2.9-9.3zM424.9 433.1l3-9.3 6.4 7.2zM398.4 404.4l9.6-2.1-3 9.3zM424.9 433.1l-6.6-7.2 9.6-2.1zM411.6 418.7l9.6-2.1-2.9 9.3zM418.3 425.9l2.9-9.3 6.7 7.2zM291.3 235.9l-6.8 4 6.3-4.1zM290.4 236l6.5-3.7 .3-.3zM291.3 235.9l-.5-.1 6.9-3.9zM290.4 236l6.8-4-6.4 3.8zM290.8 235.8l6.4-3.8 .5-.1zM278.3 284.9l5.4-7 1.3 4.4zM289.2 271.2l5.7-6.4 1.2 4zM295.2 289.4l5.4-7 1.7 4.9zM300.6 282.4l7.2-2-5.5 6.9zM289.2 271.2l6.9-2.4-5.6 6.7zM291.9 279.9l-1.4-4.4 7-2.4zM296.1 268.8l1.4 4.3-7 2.4zM306.2 275.6l-5.6 6.8-1.6-4.7zM293.5 284.6l5.5-6.9 1.6 4.7zM291.9 279.9l5.6-6.8 1.5 4.6zM202.3 335.4l.5 2-3.2 4.9zM203.5 339.6l-3.3 4.8 2.6-7zM206.2 344.5l-3.7 4.6 2.2-7.1zM203.5 339.6l1.2 2.4-3.5 4.7zM202.5 349.1l-1.3-2.4 3.5-4.7zM203.5 339.6l-2.3 7.1-1-2.3zM219.5 321.6l-2.7 7-1.6-2.7zM202.3 335.4l3.3-4.9-2.8 6.9zM209.2 325.7l-3 6.9-.6-2.1zM205.6 330.5l.6 2.1-3.4 4.8zM289.2 271.2l-2.3-3.6 8-2.8zM284.9 264.1l7.9-2.9-5.9 6.4zM286.9 267.6l5.9-6.4 2.1 3.6zM281.4 258.1l7.6-3.2-6 6.1zM289 254.9l1.8 3-7.8 3.1zM284.9 264.1l5.9-6.2 2 3.3zM264.1 277.7l7.4-3.6-5.5 6.9zM277.9 244.2l6.6-4.3-7 5zM291.1 238.1l-7 3.8 7-5.1zM291.3 235.9l-.2 .9-6.9 3.9zM271 254.6l-6.7 4.3 6.3-5.9zM281.4 258.1l6.3-6.2 1.3 3zM279 252.8l1.1 2.5-7.4 3.7zM291.1 238.1l.5 1.5-7.4 3.7zM292.3 241.4l-7.5 3.5 6.8-5.3zM284.2 243.3l7.4-3.7-6.8 5.3zM294.2 246l-6.5 5.9-1.2-2.6zM280.1 255.3l6.4-6 1.2 2.6zM292.3 241.4l-6.8 5.5-.7-2zM292.3 241.4l.9 2.1-7.7 3.4zM285.5 246.9l7.7-3.4-6.7 5.8zM202.3 335.4l-1.1 .5 4.1-7.3zM200.3 336.6l3.9-7.4-3 6.7zM201.2 335.9l3-6.7 1.1-.6zM206.8 323.4l-3.4 6.5-.6 .9zM202.8 330.8l.6-.9-3.8 7.5zM200.3 336.6l3.1-6.7 .8-.7zM206.8 323.4l-4 7.4 3.7-6.8zM202.7 331.5l3.8-7.5-3.7 6.8zM206.2 344.5l-3.4 9-.3-4.4zM209.3 362.4l-1.2-4.6 4.2-4.4zM206.2 344.5l.4 4.4-3.8 4.6zM207.2 353.3l-3.9 4.6 3.3-9zM206.6 348.9l-3.3 9-.5-4.4zM209.3 362.4l-4 4.6 2.8-9.2zM207.2 353.3l.9 4.5-3.9 4.6zM207.2 353.3l-3 9.1-.9-4.5zM228.8 401.5l-3.2-5 5-4.1zM222.5 391.6l5-4.2-1.9 9.1zM225.6 396.5l1.9-9.1 3.1 5zM217.1 381.9l4.8-4.2-2.2 9zM222.5 391.6l-2.8-4.9 4.9-4.2zM221.9 377.7l2.7 4.8-4.9 4.2zM222.5 391.6l2.1-9.1 2.9 4.9zM217.1 381.9l2.4-9.3 2.4 5.1zM217.1 381.9l-2.3-5 4.7-4.3zM212.7 372l4.7-4.3-2.6 9.2zM214.8 376.9l2.6-9.2 2.1 4.9zM209.3 362.4l4.5-4.4-2.9 9.2zM212.7 372l-1.8-4.8 4.5-4.4zM212.7 372l2.7-9.2 2 4.9zM333 359.4l-2.7 7.6-5.3-6.3zM349.3 357l-2.8 7.5-5.4-6.4zM349.3 357l-5.4-6.4 8.2-1zM338.7 344.3l8.1-1.1-2.9 7.4zM343.9 350.6l2.9-7.4 5.3 6.4zM328.5 332.2l8-1.2-3 7.2zM336.5 331l5.1 6-8.1 1.2zM338.7 344.3l2.9-7.3 5.2 6.2zM281.4 317.5l-3.6-4.8 6.8-2.4zM288 303.1l-3.4 7.2-3.5-4.8zM310 309.1l-3.9-5.3 7.3-1.7zM317 295.3l-3.6 6.8-3.8-5.1zM309.6 285.5l-3.8 6.5-3.5-4.7zM302.3 287.3l3.5 4.7-7.1 2zM309.6 297l-3.8-5 7.4-1.7zM328.5 332.2l3.2-7.4 4.8 6.2zM297.8 338.6l2.9-7.6 4.6 5.8zM319 320.3l-3.1 7.3-4.7-5.8zM310 309.1l3.4-7 4.4 5.3zM328.5 332.2l-4.8-6.1 8-1.3zM319 320.3l7.9-1.5-3.2 7.3zM323.7 326.1l3.2-7.3 4.8 6zM310 309.1l7.8-1.7-3.4 7.2zM317.8 307.4l4.5 5.6-7.9 1.6zM319 320.3l3.3-7.3 4.6 5.8zM314.5 498.2l-6.7-4.4 7.7-3.4zM301.2 489.5l7.6-3.4-1 7.7zM315.5 490.4l-7.7 3.4 1-7.7zM291 464.5l-1.3 8-6.1-4.7zM288.5 480.4l1.2-7.9 6.2 4.5zM297.2 469.1l-1.3 7.9-6.2-4.5zM301.2 489.5l1.1-7.9 6.5 4.5zM301.2 489.5l-6.4-4.6 7.5-3.3zM295.9 477l6.4 4.6-7.5 3.3zM267.3 444.6l-5.2-4.9 6.8-3.3zM257.1 434.8l6.7-3.3-1.7 8.2zM247.6 424.9l6.4-3.3-1.8 8.3zM257.1 434.8l-4.9-4.9 6.6-3.4zM254 421.6l4.8 4.9-6.6 3.4zM267.3 444.6l-6.7 3.4 1.5-8.3zM291.5 426.3l1.8-8 5.9 4.9zM267.3 444.6l5.7 5-7.1 3.3zM278.8 454.6l-7.2 3.3 1.4-8.3zM291 464.5l-7.4 3.3 1.2-8.2zM278.8 454.6l6 5-7.2 3.3zM283.6 467.8l-6-4.9 7.2-3.3zM278.8 454.6l-1.2 8.3-6-5zM285.7 421.4l-7.6 3.4 2.1-8.2zM297.3 431.3l-1.8 8.3-6-5zM330.2 390.3l-5.5-6.4 8.5-2.9zM247.6 424.9l1.2-9.3 5.2 6zM258.9 393.7l-1.9 9.3-4.9-5.9zM228.8 401.5l6-3.5-1.7 9.3zM237.6 413.1l-4.5-5.8 6-3.5zM234.8 398l4.3 5.8-6 3.5zM247.6 424.9l-5.1-5.9 6.3-3.4zM237.6 413.1l6.3-3.4-1.4 9.3zM242.5 419l1.4-9.3 4.9 5.9zM237.6 413.1l1.5-9.3 4.8 5.9z"/>
<path fill="#ffff40" stroke="#ffff40" stroke-width="0.7" d="M432.7 619l9.2-1.3-4 5.1zM422.3 610.8l9.2-1.1-4 5.3zM440.8 608.4l-4.1 5.4-5.2-4.1zM432.7 619l-5.2-4 9.2-1.2zM431.5 609.7l5.2 4.1-9.2 1.2zM432.7 619l4-5.2 5.2 3.9zM320.6 527.7l-4-7.1 7.4-.5zM320.1 512.9l3.9 7.2-7.4 .5zM335.5 526.5l-3.4 7.7-4.1-7zM320.6 527.7l3.4-7.6 4 7.1zM352.8 553.6l-4.5-6.5 7.8-.9zM344 540.4l7.7-.8-3.4 7.5zM344 540.4l4.3 6.7-7.6 .7zM335.5 526.5l3.5-7.8 4.2 7.1zM335.5 526.5l4.2 7-7.6 .7zM344 540.4l-7.6 .7 3.3-7.6zM332.1 534.2l7.6-.7-3.3 7.6zM378.7 565.1l-3.4 7-4.8-6.1zM378.7 565.1l8.1-1.1-3.3 7.1zM404.9 574.3l-8.3 1.3 3.4-7zM388.4 576.9l-8.3 1 3.4-6.8zM398.2 587.9l-8.2 1.3 3.3-6.7zM390 589.2l-5-5.6 8.3-1.1zM388.4 576.9l-3.4 6.7-4.9-5.7zM352.8 553.6l3.3-7.4 4.7 6.8zM370.5 566l-4.8-6.4 8.1-.9zM352.8 553.6l8-.6-3.2 7.3zM360.8 553l4.9 6.6-8.1 .7zM378.7 565.1l-4.9-6.4 8.3-1zM375.9 536.7l-3.5 7.8-4.7-6.7zM377.2 551.2l-4.8-6.7 8.3-1zM539.7 497.3l-1.3 8-5.7-5.5zM536.9 513.1l-5.6-5.4 7.1-2.4zM532.7 499.8l5.7 5.5-7.1 2.4zM539.7 497.3l5.6 5.5-6.9 2.5zM538.4 505.3l6.9-2.5-1.4 7.9zM500.6 479l7.4-2.3-1 8.2zM513.3 490.7l-6.3-5.8 7.4-2.3zM513.3 490.7l7.3-2.3-1.1 8.1zM519.5 496.5l1.1-8.1 6.1 5.7zM513.3 490.7l1.1-8.1 6.2 5.8zM525.5 502.1l1.2-8 6 5.7zM526.7 494.1l7.2-2.4-1.2 8.1zM398.2 587.9l6 6.2-9.2 .4zM422.3 610.8l3.4-6.2 5.8 5.1zM398.2 587.9l9.4-.5-3.4 6.7zM410.3 599.9l-6.1-5.8 9.4-.7zM422.3 610.8l-6-5.3 9.4-.9zM416.3 605.5l3.3-6.4 6.1 5.5zM500.6 479l3.4-9 4 6.7zM456.7 442.6l2.9-8.9 5 6.8zM466.6 456.2l2.9-8.8 4.9 6.8zM456.7 442.6l7.9-2.1-2.9 8.9zM469.5 447.4l-7.8 2 2.9-8.9zM491.6 465.6l4.5 6.7-7.6 2.2zM469.9 487.5l3.2-8.8 4.6 6.8zM482.2 452.1l4.7 6.8-7.7 2.1zM491.6 465.6l-7.7 2.2 3-8.9zM486.9 458.9l-3 8.9-4.7-6.8zM482.2 452.1l-3 8.9-4.8-6.8zM460.4 474l3.1-8.9 4.9 6.8zM500.6 479l-4.5-6.7 7.9-2.3zM314.5 498.2l6.4 7.1-7.3 .5zM355 342.3l3-7.2 6 4.6zM367.1 351.8l-6.1-4.8 9.1-2.5zM355 342.3l9-2.6-3 7.3zM370.1 344.5l-9.1 2.5 3-7.3zM392 372.6l-9.1 2.2 2.8-7.5zM376.7 369.6l9-2.3-2.8 7.5zM379.5 362l-6.2-5.1 9.1-2.3zM367.1 351.8l9.1-2.3-2.9 7.4zM367.1 351.8l6.2 5.1-9 2.4zM379.5 362l-9 2.4 2.8-7.5zM456.7 442.6l-6.5-6.8 9.4-2.1zM443.7 429l9.4-2.1-2.9 8.9zM443.7 429l-2.9 8.8-6.5-6.8zM404.2 386.2l-2.9 9.1-6.1-6.9zM392 372.6l-3 9-6.1-6.8zM404.2 386.2l-9 2.2 2.9-9zM392 372.6l6.1 6.8-9.1 2.2zM395.2 388.4l-6.2-6.8 9.1-2.2zM404.2 386.2l6.7 6.9-9.6 2.2zM417.5 400.1l-9.5 2.2 2.9-9.2zM401.3 395.3l9.6-2.2-2.9 9.2zM430.8 414.5l9.4-2.1-2.9 9.3zM417.5 400.1l6.7 7.2-9.6 2.1zM430.8 414.5l-9.6 2.1 3-9.3zM305.5 228.8l-7.2 3.4 6.5-3.8zM304.2 228.2l.6 .2-7.1 3.5zM298.3 232.2l-.6-.3 7.1-3.5zM303.5 228.8l7.3-3.9-7 3.5zM300.8 258.6l6.1-5.9 1.1 3.8zM303.2 266.6l5.9-6.1 1.3 4.2zM303.2 266.6l-1.2-4.1 7.1-2zM300.8 258.6l7.2-2.1-6 6zM309.1 260.5l-7.1 2 6-6zM309.6 285.5l5.5-6.8 1.8 5zM316.9 283.7l-1.8-5 7.5-1.6zM306.2 275.6l5.7-6.5 1.5 4.7zM306.2 275.6l7.2-1.8-5.6 6.6zM307.8 280.4l5.6-6.6 1.7 4.9zM306.2 275.6l-1.6-4.6 7.3-1.9zM303.2 266.6l7.2-1.9-5.8 6.3zM311.9 269.1l-7.3 1.9 5.8-6.3zM197.1 349.3l.8 2.2-3 4.9zM199 353.9l-3.1 4.8 2-7.2zM194.9 356.4l3-4.9-2 7.2zM300.8 258.6l-2-3.4 8.1-2.5zM296.9 252l8-2.6-6.1 5.8zM306.9 252.7l-8.1 2.5 6.1-5.8zM300.8 258.6l-8 2.6 6-6zM305.5 228.8l-7.3 4.5 .1-1.1zM291.1 238.1l-6.9 5.2-.1-1.4zM296.9 252l6.5-5.9 1.5 3.3zM294.2 246l6.8-5.5 1.1 2.6zM296.9 252l-1.4-3.1 7.9-2.8zM294.2 246l7.9-2.9-6.6 5.8zM295.5 248.9l6.6-5.8 1.3 3zM305.5 228.8l.3 1.1-7.6 3.4zM305.8 229.9l-7.2 4.6-.4-1.2zM292.3 241.4l6.9-5.2 .8 1.9zM300 238.1l-.8-1.9 7.8-3.1zM306.3 231.3l-7.1 4.9-.6-1.7zM197.1 349.3l-2.2 7.1-1.4 .5zM197.1 349.3l-1.3 .5 3.8-7.5zM194.7 350.5l3.6-7.7-2.5 7zM197.1 349.3l-3.6 7.6 2.3-7.1zM199.2 338.3l-3.1 6.8-.1 1zM199.2 338.3l.4-.9-3.5 7.7zM199.6 337.4l-3 6.8-.5 .9zM194.7 350.5l2.6-7 1-.7zM200.3 336.6l-3 6.9-.7 .7zM196.6 344.2l.7-.7-3.5 7.7zM199 353.9l-3 9-.1-4.2zM199 353.9l.2 4.2-3.2 4.8zM199.7 362.5l-3.3 4.8 2.8-9.2zM199.2 358.1l-2.8 9.2-.4-4.4zM204.3 380.8l-1.6-4.6 3.9-4.6zM201.5 371.6l3.8-4.6-2.6 9.2zM206.6 371.6l-3.9 4.6 2.6-9.2zM199.7 362.5l.7 4.5-3.4 4.7zM201.5 371.6l-3.6 4.7 2.5-9.3zM201.5 371.6l-1.1-4.6 3.8-4.6zM199.7 362.5l3.6-4.6-2.9 9.1zM204.2 362.4l-3.8 4.6 2.9-9.1zM226.1 419.9l-3.6-4.9 4.8-4.3zM219.2 410.1l4.7-4.3-1.4 9.2zM227.3 410.7l-4.8 4.3 1.4-9.2zM213.2 400.3l1.8-9.3 2.8 4.9zM219.2 410.1l1.5-9.3 3.2 5zM213.2 400.3l4.6-4.4-1.7 9.3zM219.2 410.1l-3.1-4.9 4.6-4.4zM217.8 395.9l2.9 4.9-4.6 4.4zM227 373.5l-5.1 4.2 2.6-9.3zM204.3 380.8l2.3-9.2 1.7 4.8zM208.3 390.6l2-9.3 2.3 4.9zM204.3 380.8l4-4.4-2.1 9.3zM208.3 390.6l-2.1-4.9 4.1-4.4zM208.3 376.4l2 4.9-4.1 4.4zM355 342.3l-5.3-6.3 8.3-.9zM344.6 329.8l8.2-1-3.1 7.2zM358 335.1l-8.3 .9 3.1-7.2zM324.4 282.2l-3.8 6.5-3.7-5zM320.6 288.7l-7.4 1.6 3.7-6.6zM302.3 298.8l3.5-6.8 3.8 5zM334.9 317.5l3.4-7.2 4.7 6zM344.6 329.8l-4.9-6.2 8.1-1.1zM334.9 317.5l8.1-1.2-3.3 7.3zM339.7 323.6l3.3-7.3 4.8 6.2zM312.9 335.1l-4.7-5.8 7.7-1.7zM317 295.3l3.6-6.6 4.2 5zM325.7 305.9l3.5-6.9 4.5 5.5zM325.7 305.9l-4.5-5.4 8-1.5zM317 295.3l7.8-1.6-3.6 6.8zM329.2 299l-8 1.5 3.6-6.8zM334.9 317.5l-4.7-5.9 8.1-1.3zM338.3 310.3l-8.1 1.3 3.5-7.1zM312.8 513.4l-6.7-4.2 7.5-3.4zM299.4 504.9l7.5-3.3-.8 7.6zM306.1 509.2l.8-7.6 6.7 4.2zM299.4 504.9l-6.4-4.4 7.3-3.3zM293.8 492.8l6.5 4.4-7.3 3.3zM299.4 504.9l.9-7.7 6.6 4.4zM276.5 471.1l-1.1 7.9-5.8-4.7zM288.5 480.4l-1 7.8-6.2-4.6zM276.5 471.1l5.9 4.6-7 3.3zM288.5 480.4l-7.2 3.2 1.1-7.9zM282.4 475.7l-1.1 7.9-5.9-4.6zM287.5 488.2l7.3-3.3-1 7.9zM244.4 441.6l-4.6-5 6.1-3.4zM235.5 431.7l5.9-3.4-1.6 8.3zM245.9 433.2l-6.1 3.4 1.6-8.3zM264.7 461.1l-5.3-4.8 6.5-3.4zM254.2 451.4l6.4-3.4-1.2 8.3zM244.4 441.6l1.5-8.4 4.7 5zM254.2 451.4l1.3-8.3 5.1 4.9zM254.2 451.4l-5-4.9 6.3-3.4zM244.4 441.6l6.2-3.4-1.4 8.3zM255.5 443.1l-6.3 3.4 1.4-8.3zM264.7 461.1l5.8 5-6.8 3.2zM276.5 471.1l-6.9 3.2 .9-8.2zM264.7 461.1l6.9-3.2-1.1 8.2zM226.1 419.9l1.2-9.2 4.4 5.8zM235.5 431.7l.9-9.3 5 5.9zM226.1 419.9l5.6-3.4-1.1 9.3zM231.7 416.5l4.7 5.9-5.8 3.4z"/>
<path fill="#ffff55" stroke="#ffff55" stroke-width="0.7" d="M451.1 616.1l-9.2 1.6 4.1-5.4zM440.8 608.4l5.2 3.9-9.3 1.5zM441.9 617.7l-5.2-3.9 9.3-1.5zM327.5 512.3l-3.5 7.8-3.9-7.2zM327.5 512.3l4 7.2-7.5 .6zM335.5 526.5l-7.5 .7 3.5-7.7zM331.5 519.5l-3.5 7.7-4-7.1zM356.1 546.2l-7.8 .9 3.4-7.5zM344 540.4l3.4-7.6 4.3 6.8zM335.5 526.5l7.7-.7-3.5 7.7zM398.2 587.9l-4.9-5.4 8.3-1.3zM388.4 576.9l8.2-1.3-3.3 6.9zM393.3 582.5l3.3-6.9 5 5.6zM388.4 576.9l-4.9-5.8 8.2-1.2zM388.4 576.9l3.3-7 4.9 5.7zM378.7 565.1l4.8 6-8.2 1zM369 552.2l-8.2 .8 3.4-7.5zM364.2 545.5l-3.4 7.5-4.7-6.8zM378.7 565.1l-8.2 .9 3.3-7.3zM369 552.2l4.8 6.5-8.1 .9zM369 552.2l-3.3 7.4-4.9-6.6zM536.9 513.1l7-2.4-1.6 7.8zM525.5 502.1l7.2-2.3-1.4 7.9zM536.9 513.1l1.5-7.8 5.5 5.4zM525.5 502.1l-6-5.6 7.2-2.4zM500.6 479l-1.4 8.3-6.2-6.1zM525.5 502.1l5.8 5.6-7.4 2.7zM500.6 479l6.4 5.9-7.8 2.4zM513.3 490.7l-7.7 2.5 1.4-8.3zM507 484.9l-1.4 8.3-6.4-5.9zM525.5 502.1l-7.6 2.6 1.6-8.2zM513.3 490.7l6.2 5.8-7.6 2.5zM513.3 490.7l-1.4 8.3-6.3-5.8zM398.2 587.9l3.4-6.7 6 6.2zM429 598l5.9 5.3-9.2 1.3zM440.8 608.4l-9.3 1.3 3.4-6.4zM425.7 604.6l9.2-1.3-3.4 6.4zM429 598l-3.3 6.6-6.1-5.5zM410.3 599.9l3.3-6.5 6 5.7zM423 592.4l-3.4 6.7-6-5.7zM455.6 467.1l-3.1 8.8-4.9-6.9zM456.7 442.6l5 6.8-8 2zM466.6 456.2l-7.9 2 3-8.8zM500.6 479l-7.6 2.2 3.1-8.9zM493 481.2l-4.5-6.7 7.6-2.2zM476.2 469.9l3-8.9 4.7 6.8zM480.9 476.6l3-8.8 4.6 6.7zM476.2 469.9l-4.8-6.8 7.8-2.1zM466.6 456.2l7.8-2-3 8.9zM479.2 461l-7.8 2.1 3-8.9zM312.8 513.4l.8-7.6 6.5 7.1zM327.5 512.3l-7.4 .6 .8-7.6zM313.6 505.8l7.3-.5-.8 7.6zM335.1 511.6l-6.7-7 7.6-.7zM355 342.3l6 4.7-8.9 2.6zM367.1 351.8l-8.9 2.6 2.8-7.4zM352.1 349.6l8.9-2.6-2.8 7.4zM374 377.2l2.7-7.6 6.2 5.2zM379.5 362l-2.8 7.6-6.2-5.2zM367.7 372l2.8-7.6 6.2 5.2zM361.5 366.9l2.8-7.6 6.2 5.1zM373.3 356.9l-2.8 7.5-6.2-5.1zM456.7 442.6l-3 8.8-6.4-6.8zM424.9 433.1l9.4-2.1-2.9 8.9zM456.7 442.6l-9.4 2 2.9-8.8zM443.7 429l6.5 6.8-9.4 2zM447.3 444.6l-6.5-6.8 9.4-2zM392.2 397.5l3-9.1 6.1 6.9zM382.9 374.8l6.1 6.8-9 2.3zM386.1 390.7l2.9-9.1 6.2 6.8zM398.4 404.4l6.6 7.2-9.5 2.1zM398.4 404.4l2.9-9.1 6.7 7zM427.9 423.8l9.4-2.1-3 9.3zM417.5 400.1l-2.9 9.3-6.6-7.1zM411.6 418.7l-6.6-7.1 9.6-2.2zM408 402.3l6.6 7.1-9.6 2.2zM430.8 414.5l-2.9 9.3-6.7-7.2zM411.6 418.7l3-9.3 6.6 7.2zM424.2 407.3l-3 9.3-6.6-7.2zM291.3 235.9l6.4-4 .6 .3zM303.5 228.8l.3-.4-6.9 3.9zM304.2 228.2l-7 3.8 6.6-3.6zM303.8 228.4l-6.6 3.6-.3 .3zM304.2 228.2l-6.5 3.7-.5 .1zM300.8 258.6l1.2 3.9-7.1 2.3zM303.2 266.6l-7.1 2.2 5.9-6.3zM294.9 264.8l7.1-2.3-5.9 6.3zM306.2 275.6l1.6 4.8-7.2 2zM309.6 285.5l-7.3 1.8 5.5-6.9zM309.6 285.5l-1.8-5.1 7.3-1.7zM303.2 266.6l-5.7 6.5-1.4-4.3zM303.2 266.6l1.4 4.4-7.1 2.1zM304.6 271l-5.6 6.7-1.5-4.6zM202.8 337.4l-2.6 7-.6-2.1zM199 353.9l2.2-7.2 1.3 2.4zM197.1 349.3l3.1-4.9-2.3 7.1zM199 353.9l-1.1-2.4 3.3-4.8zM200.2 344.4l1 2.3-3.3 4.8zM217 316.6l1.1 2.4-4.2 4.4zM300.8 258.6l-5.9 6.2-2.1-3.6zM296.9 252l1.9 3.2-8 2.7zM292.8 261.2l-2-3.3 8-2.7zM273.5 277.5l5.6-6.8 2.1 3.5zM277.1 267.4l2 3.3-7.6 3.4zM291.1 238.1l0-1.3 7.1-3.5zM291.3 235.9l7-3.7-7.2 4.6zM298.2 233.3l-7.1 3.5 7.2-4.6zM277.5 248.8l-6.5 5.8-.4-1.6zM294.2 246l1.3 2.9-7.8 3zM296.9 252l-7.9 2.9 6.5-6zM291.1 238.1l7.1-4.8 .4 1.2zM292.3 241.4l-.7-1.8 7.6-3.4zM291.1 238.1l7.5-3.6-7 5.1zM299.2 236.2l-7.6 3.4 7-5.1zM292.3 241.4l7.7-3.3-6.8 5.4zM294.2 246l-7.7 3.3 6.7-5.8zM202.3 335.4l-2.7 6.9-1.3 .5zM199.6 342.3l-3.8 7.5 2.5-7zM199.2 338.3l3.6-7.5-3.2 6.6zM200.3 336.6l-.7 .8 3.8-7.5zM200.3 336.6l-3.7 7.6 3-6.8zM202.3 335.4l-4 7.4 2.9-6.9zM200.3 336.6l.9-.7-3.9 7.6zM198.3 342.8l-1 .7 3.9-7.6zM199.2 338.3l3.5-6.8 .1-.7zM199.7 362.5l-.5-4.4 3.6-4.6zM199 353.9l3.5-4.8-3.3 9zM202.8 353.5l-3.6 4.6 3.3-9zM207.2 353.3l4.1-4.4-3.2 8.9zM209.3 362.4l-2.7 9.2-1.3-4.6zM199.7 362.5l3.1-9 .5 4.4zM205.3 367l-1.1-4.6 3.9-4.6zM228.8 401.5l-1.5 9.2-3.4-4.9zM217.1 381.9l-2.1 9.1-2.4-4.8zM217.1 381.9l2.6 4.8-4.7 4.3zM222.5 391.6l-4.7 4.3 1.9-9.2zM219.7 386.7l-1.9 9.2-2.8-4.9zM228.8 401.5l-4.9 4.3 1.7-9.3zM222.5 391.6l3.1 4.9-4.9 4.3zM223.9 405.8l-3.2-5 4.9-4.3zM222.5 391.6l-1.8 9.2-2.9-4.9zM209.3 362.4l1.6 4.8-4.3 4.4zM212.7 372l-4.4 4.4 2.6-9.2zM210.9 367.2l-2.6 9.2-1.7-4.8zM217.1 381.9l-4.5 4.3 2.2-9.3zM212.7 372l2.1 4.9-4.5 4.4zM212.7 372l-2.4 9.3-2-4.9zM355 342.3l-2.9 7.3-5.3-6.4zM344.6 329.8l-3 7.2-5.1-6zM338.7 344.3l-5.2-6.1 8.1-1.2zM355 342.3l-8.2 .9 2.9-7.2zM344.6 329.8l5.1 6.2-8.1 1zM322.6 347l5.1 6.1-7.9 1.4zM317 295.3l-3.8-5 7.4-1.6zM309.6 285.5l7.3-1.8-3.7 6.6zM306.1 303.8l3.5-6.8 3.8 5.1zM317 295.3l-7.4 1.7 3.6-6.7zM309.6 285.5l3.6 4.8-7.4 1.7zM288 303.1l3.5-6.9 3.6 4.7zM295.4 313l-7 2.2 3.2-7.2zM334.9 317.5l4.8 6.1-8 1.2zM344.6 329.8l-8.1 1.2 3.2-7.4zM331.7 324.8l8-1.2-3.2 7.4zM317 295.3l4.2 5.2-7.8 1.6zM325.7 305.9l-7.9 1.5 3.4-6.9zM313.4 302.1l7.8-1.6-3.4 6.9zM334.9 317.5l-3.2 7.3-4.8-6zM325.7 305.9l-3.4 7.1-4.5-5.6zM319 320.3l-4.6-5.7 7.9-1.6zM325.7 305.9l4.5 5.7-7.9 1.4zM334.9 317.5l-8 1.3 3.3-7.2zM322.3 313l7.9-1.4-3.3 7.2zM314.5 498.2l-.9 7.6-6.7-4.2zM301.2 489.5l-.9 7.7-6.5-4.4zM301.2 489.5l6.6 4.3-7.5 3.4zM314.5 498.2l-7.6 3.4 .9-7.8zM300.3 497.2l7.5-3.4-.9 7.8zM288.5 480.4l-6.1-4.7 7.3-3.2zM276.5 471.1l7.1-3.3-1.2 7.9zM289.7 472.5l-7.3 3.2 1.2-7.9zM319.2 466.8l-7.9 3.5 1.4-8zM301.2 489.5l-7.4 3.3 1-7.9zM288.5 480.4l7.4-3.4-1.1 7.9zM267.3 444.6l-1.4 8.3-5.3-4.9zM265.9 452.9l-6.5 3.4 1.2-8.3zM247.6 424.9l4.6 5-6.3 3.3zM257.1 434.8l-6.5 3.4 1.6-8.3zM252.2 429.9l-1.6 8.3-4.7-5zM257.1 434.8l5 4.9-6.6 3.4zM260.6 448l-5.1-4.9 6.6-3.4zM257.1 434.8l-1.6 8.3-4.9-4.9zM264.7 461.1l1.2-8.2 5.7 5zM273 449.6l-1.4 8.3-5.7-5zM276.5 471.1l1.1-8.2 6 4.9zM276.5 471.1l-6-5 7.1-3.2zM271.6 457.9l6 5-7.1 3.2zM228.8 401.5l4.3 5.8-5.8 3.4zM237.6 413.1l-5.9 3.4 1.4-9.2zM233.1 407.3l-1.4 9.2-4.4-5.8zM247.6 424.9l-6.2 3.4 1.1-9.3zM237.6 413.1l4.9 5.9-6.1 3.4zM241.4 428.3l-5-5.9 6.1-3.4zM237.6 413.1l-1.2 9.3-4.7-5.9zM250.4 406.3l1.7-9.2 4.9 5.9zM264 399.7l-1.8 9.2-5.2-5.9z"/>
<path fill="#ffffaa" stroke="#ffffaa" stroke-width="0.7" d="M366.6 523l-4.3-6.9 7.9-1.1zM358.2 509l-3.7 8-4.1-7zM366.6 523l-7.9 1 3.6-7.9zM358.2 509l4.1 7.1-7.8 .9zM358.7 524l-4.2-7 7.8-.9zM434.9 503.6l-8 1.7 3.2-8.5zM411.6 559.7l-3.4 7.4-4.9-5.8zM375.9 536.7l3.6-7.9 4.7 6.8zM375.9 536.7l-4.7-6.8 8.3-1.1zM366.6 523l8.2-1-3.6 7.9zM379.5 528.8l-8.3 1.1 3.6-7.9zM411.6 559.7l-8.3 1.6 3.5-7.7zM402 547.3l4.8 6.3-8.3 1.5zM403.3 561.3l-4.8-6.2 8.3-1.5zM385.5 550l3.5-7.8 4.8 6.5zM397.3 540.8l-3.5 7.9-4.8-6.5zM402 547.3l-3.5 7.8-4.7-6.4zM375.9 536.7l8.3-1.1-3.5 7.9zM389 542.2l-8.3 1.3 3.5-7.9zM518.3 534.4l7.5-2.5-2 7.5zM525.8 531.9l5.4 4.9-7.4 2.6zM469.9 487.5l-1.6 8.3-6.3-6.3zM494.5 511.8l-6-5.9 7.7-2.2zM469.9 487.5l6.3 6.2-7.9 2.1zM482.4 499.9l-7.8 2.1 1.6-8.3zM494.5 511.8l-7.7 2.2 1.7-8.1zM482.4 499.9l6.1 6-7.8 2.2zM486.8 514l-6.1-5.9 7.8-2.2zM482.4 499.9l-1.7 8.2-6.1-6.1zM518.3 534.4l2-7.9 5.5 5.4zM494.5 511.8l6.2 5.9-7.9 2.1zM506.7 523.4l-7.8 2.2 1.8-7.9zM490.9 527.7l8-2.1-2 7.9zM502.8 539l-5.9-5.5 7.9-2.2zM518.3 534.4l-5.7-5.4 7.7-2.5zM506.7 523.4l7.8-2.4-1.9 8zM512.6 529l1.9-8 5.8 5.5zM494.5 511.8l8-2.3-1.8 8.2zM506.7 523.4l-6-5.7 7.8-2.4zM506.7 523.4l1.8-8.1 6 5.7zM411.6 559.7l6 6.5-9.4 .9zM423.6 572.4l-9.3 1 3.3-7.2zM450.7 507.8l-9.5 2.2 3.3-8.5zM444.5 501.5l-3.3 8.5-6.3-6.4zM428.3 520.3l9.6-1.9-3.3 8.2zM459.1 604.9l3.8-6.9 5.2 4.8zM462.9 598l9-2.2-3.8 7zM498.1 553.7l-8.7 3.2 3.1-8.4zM423.6 572.4l-6-6.2 9.6-1.5zM435.6 584.2l-6-5.8 9.6-1.6zM447.5 595.1l9.6-2-3.8 7zM453.3 600.1l3.8-7 5.8 4.9zM435.6 584.2l9.6-1.7-3.6 7.3zM447.5 595.1l-5.9-5.3 9.6-1.9zM445.2 582.5l6 5.4-9.6 1.9zM447.5 595.1l3.7-7.2 5.9 5.2zM435.6 584.2l3.6-7.4 6 5.7zM442.8 569l6 5.9-9.6 1.9zM454.1 491.4l-8 1.9 3.2-8.7zM444.5 477.8l3.1-8.8 4.9 6.9zM469.9 487.5l-7.9 2 3.2-8.7zM444.5 477.8l8-1.9-3.2 8.7zM460.4 474l-3.1 8.7-4.8-6.8zM452.5 475.9l4.8 6.8-8 1.9zM319.2 466.8l6.2 7.2-7.5 .7zM331.7 481.1l-7.6 .8 1.3-7.9zM317.9 474.7l7.5-.7-1.3 7.9zM344.8 495.3l6.6 6.9-7.7 .9zM358.2 509l-7.8 1 1-7.8zM331.7 481.1l-1.2 7.9-6.4-7.1zM344.8 495.3l-1.1 7.8-6.7-7zM331.7 481.1l6.5 7.1-7.7 .8zM344.8 495.3l-7.8 .8 1.2-7.9zM338.2 488.2l-1.2 7.9-6.5-7.1zM362.3 414.2l-8.3 1.2 2.3-8zM373.9 506.8l1.5-7.9 6.5 6.7zM338.8 387.5l2.5-7.7 6.1 5zM343.8 372.1l6.2 5-8.7 2.7zM356.2 382.2l-8.8 2.6 2.6-7.7zM341.3 379.8l8.7-2.7-2.6 7.7zM444.5 477.8l-6.4-6.6 9.5-2.2zM431.7 464.5l9.5-2.1-3.1 8.8zM447.6 469l-9.5 2.2 3.1-8.8zM444.5 477.8l-9.5 2.1 3.1-8.7zM418.8 450.9l-6.4-6.8 9.4-2.1zM406 437.3l9.4-2.1-3 8.9zM406 437.3l6.4 6.8-9.5 2.1zM418.8 450.9l-9.5 2.1 3.1-8.9zM418.8 450.9l6.5 6.8-9.6 2.1zM431.7 464.5l3.1-8.9 6.4 6.8zM431.7 464.5l-6.4-6.8 9.5-2.1zM356.2 382.2l-3 9.2-5.8-6.6zM347.4 384.8l5.8 6.6-8.7 2.7zM368 395.5l-2.9 9.3-6-6.7zM356.2 382.2l5.8 6.6-8.8 2.6zM368 395.5l-8.9 2.6 2.9-9.3zM350.3 400.7l2.9-9.3 5.9 6.7zM362 388.8l-2.9 9.3-5.9-6.7zM392.7 422.9l-2.8 9.3-6.3-6.9zM380.3 409.2l-2.9 9.3-6.2-6.8zM380.3 409.2l6.2 6.8-9.1 2.5zM392.7 422.9l-9.1 2.4 2.9-9.3zM377.4 418.5l9.1-2.5-2.9 9.3zM368 395.5l6.1 6.9-9 2.4zM365.1 404.8l9-2.4-2.9 9.3zM392.7 422.9l6.6 7.2-9.4 2.1zM406 437.3l-9.5 2.1 2.8-9.3zM389.9 432.2l9.4-2.1-2.8 9.3zM271.5 248.9l-.2 .4 6.2-4.8zM278.3 284.9l1.5 4.5-6.6 2.7zM281.4 294.1l-6.6 2.6 5-7.3zM281.4 294.1l-1.6-4.7 6.8-2.5zM215.8 309.1l-.2 1.6-3.6 4.8zM215.7 312.5l-3.7 4.6 3.6-6.4zM215.6 310.7l-3.6 6.4 0-1.6zM217 316.6l-4.1 4.5 3.3-6.7zM209.2 325.7l3.1-6.7 .6 2.1zM212.9 321.1l-.6-2.1 3.9-4.6zM215.7 312.5l-3.4 6.5-.3-1.9zM214.3 335.7l2.5-7.1 1.9 2.8zM218.7 331.4l-1.9-2.8 4.5-4.3zM219.5 321.6l-4.3 4.3 2.9-6.9zM211.1 330.3l2.8-6.9 1.3 2.5zM218.1 319l-2.9 6.9-1.3-2.5zM214.3 335.7l-1.8-2.8 4.3-4.3zM211.1 330.3l4.1-4.4-2.7 7zM212.5 332.9l2.7-7 1.6 2.7zM217 316.6l-3.1 6.8-1-2.3zM215.8 309.1l3.8-5-4 6.6zM278.3 284.9l-5.1 7.2-2.6-3.9zM273.5 277.5l-5.3 7-2.2-3.5zM273.5 277.5l7.7-3.3-5.4 6.9zM273.5 277.5l2.3 3.6-7.6 3.4zM278.3 284.9l-7.7 3.3 5.2-7.1zM269.6 270.9l-1.5-2.8 7.3-3.7zM266.7 265.5l7.2-3.9-5.8 6.5zM275.4 264.4l-7.3 3.7 5.8-6.5zM266.7 265.5l1.4 2.6-7.1 3.9zM269.6 270.9l-7.2 3.9 5.7-6.7zM269.6 270.9l1.9 3.2-7.4 3.6zM273.5 277.5l-7.5 3.5 5.5-6.9zM269.6 270.9l7.5-3.5-5.6 6.7zM273.5 277.5l-2-3.4 7.6-3.4zM277.9 244.2l-7 5.3 .6-.6zM270.9 249.5l-6.3 4.8 6.9-5.4zM264.8 260.8l-.5-1.9 6.7-4.3zM264 257.4l6.6-4.4-6.3 5.9zM277.9 244.2l-.4 .7-6.6 4.6zM264.1 255l6.8-5.5-.3 .8zM277.5 244.9l-6.9 5.4 .3-.8zM264 257.4l6.5-5.9 .1 1.5zM277.3 245.9l-6.8 5.6 .1-1.2zM264 257.4l-.1-1.3 6.6-4.6zM270.5 251.5l-6.6 4.6 6.7-5.8zM264.8 260.8l6.2-6.2 .8 2.1zM266.7 265.5l6-6.5 1.2 2.6zM264.8 260.8l7-4.1-6.2 6.3zM266.7 265.5l-1.1-2.5 7.1-4zM271.8 256.7l.9 2.3-7.1 4zM215.8 309.1l-3.8 6.4-.9 .6zM215.8 309.1l-.7 .5 4.6-6.7zM214.7 310.2l4.4-6.8-4 6.2zM215.1 309.6l4-6.2 .6-.5zM214.7 310.2l4.1-6.1 .3-.7zM215.8 309.1l-4.7 7 4-6.5zM223.4 327.3l-4 8.5-.7-4.4zM215.7 344.6l-.8-4.5 4.5-4.3zM219.4 335.8l-4.5 4.3 3.8-8.7zM223.4 327.3l4.8-4-3.9 8.3zM237.8 365.4l-2.7 8.9-2.9-4.9zM215.7 344.6l3.7-8.8 1.1 4.5zM224.3 331.6l-3.8 8.7-1.1-4.5zM228.6 345.4l-5.2 4.1 3.6-8.8zM218.5 353.7l3.3-8.9 1.6 4.7zM223.4 349.5l-1.6-4.7 5.2-4.1zM225.5 336.1l-3.7 8.7-1.3-4.5zM221.8 344.8l-4.9 4.3 3.6-8.8zM237.8 365.4l-5.6 4 2.9-9.2zM232.7 355.2l2.4 5-5.4 4.1zM232.2 369.4l-2.5-5.1 5.4-4.1zM228.6 345.4l2 4.8-5.3 4.1zM232.7 355.2l-5.3 4 3.2-9zM230.6 350.2l-3.2 9-2.1-4.9zM232.7 355.2l-3 9.1-2.3-5.1zM228.6 345.4l-3.3 8.9-1.9-4.8zM225.3 354.3l-5.1 4.2 3.2-9zM343.8 372.1l-2.5 7.7-5.6-6.5zM333.2 381l2.5-7.7 5.6 6.5zM325 360.7l5.3 6.3-8 1.3zM327.7 374.6l2.6-7.6 5.4 6.3zM333 359.4l5.3 6.3-8 1.3zM343.8 372.1l-8.1 1.2 2.6-7.6zM330.3 367l8-1.3-2.6 7.6zM312.9 335.1l-2.9 7.5-4.7-5.8zM305.3 336.8l4.7 5.8-7.6 1.7zM322.6 347l-2.8 7.5-5-6zM312 356.1l2.8-7.6 5 6zM312.9 335.1l4.8 5.9-7.7 1.6zM322.6 347l-7.8 1.5 2.9-7.5zM317.7 341l-2.9 7.5-4.8-5.9zM317.1 362.1l2.7-7.6 5.2 6.2zM333 359.4l-8 1.3 2.7-7.6zM319.8 354.5l7.9-1.4-2.7 7.6zM281.4 294.1l-3.5 6.9-3.1-4.3zM281.4 294.1l6.9-2.4-3.7 6.8zM281.4 294.1l3.2 4.4-6.7 2.5zM288 303.1l-6.9 2.4 3.5-7zM284.6 298.5l-3.5 7-3.2-4.5zM303.6 323.6l-2.9 7.4-4.3-5.4zM295.4 313l-3.1 7.3-3.9-5.1zM295.4 313l4.1 5.2-7.2 2.1zM303.6 323.6l-7.2 2 3.1-7.4zM292.3 320.3l7.2-2.1-3.1 7.4zM288 303.1l3.6 4.9-7 2.3zM284.6 310.3l7-2.3-3.2 7.2zM303.6 323.6l4.6 5.7-7.5 1.7zM300.7 331l7.5-1.7-2.9 7.5zM306.3 457.8l7.9-3.4-1.5 7.9zM319.2 466.8l-1.3 7.9-6.6-4.4zM306.3 457.8l6.4 4.5-7.9 3.4zM311.3 470.3l-6.5-4.6 7.9-3.4zM274.8 411.7l-2.1 8.2-5.1-4.9zM272.7 419.9l-7.1 3.3 2-8.2zM280.2 416.6l-2.1 8.2-5.4-4.9zM281.9 437.9l1.8-8.2 5.8 4.9zM285.7 421.4l-2 8.3-5.6-4.9zM281.9 437.9l-5.7-4.9 7.5-3.3zM283.7 429.7l-7.5 3.3 1.9-8.2zM306.3 457.8l-7.8 3.4 1.5-8.3zM306.3 457.8l-6.3-4.9 7.8-3.4zM293.8 447.9l7.8-3.4-1.6 8.4zM300 452.9l1.6-8.4 6.2 5zM293.8 447.9l-6-5 7.7-3.3zM281.9 437.9l7.6-3.3-1.7 8.3zM295.5 439.6l-7.7 3.3 1.7-8.3zM308.7 365l-5-6 8.3-2.9zM284.6 374.3l3-9.1 4.8 5.9zM284.6 374.3l7.8-3.2-2.9 9.3zM237.8 365.4l3.6 5.5-6.3 3.4zM245.4 376.4l-6.5 3.4 2.5-8.9zM241.4 370.9l-2.5 8.9-3.8-5.5zM254.1 387.9l-6.7 3.3 2.2-9.1zM245.4 376.4l4.2 5.7-6.6 3.4zM247.4 391.2l-4.4-5.7 6.6-3.4zM245.4 376.4l-2.4 9.1-4.1-5.7zM274.8 411.7l-7.2 3.3 1.7-9.3zM260.7 418.3l1.5-9.4 5.4 6.1zM267.6 415l-5.4-6.1 7.1-3.2zM254.1 387.9l4.8 5.8-6.8 3.4zM264 399.7l-7 3.3 1.9-9.3zM254.1 387.9l-2 9.2-4.7-5.9z"/>
<path fill="#ffffbf" stroke="#ffffbf" stroke-width="0.7" d="M358.2 509l7.8-1-3.7 8.1zM370.2 515l-7.9 1.1 3.7-8.1zM411.6 559.7l-4.8-6.1 8.1-1.4zM402 547.3l8.2-1.4-3.4 7.7zM392.5 534.3l8.1-1.3-3.3 7.8zM402 547.3l-4.7-6.5 8.1-1.3zM402 547.3l3.4-7.8 4.8 6.4zM373.9 506.8l8-1.2-3.4 8.3zM383.2 520.8l-8.4 1.2 3.7-8.1zM378.5 513.9l-3.7 8.1-4.6-7zM392.5 534.3l-8.3 1.3 3.6-8zM383.2 520.8l4.6 6.8-8.3 1.2zM384.2 535.6l-4.7-6.8 8.3-1.2zM383.2 520.8l-3.7 8-4.7-6.8zM392.5 534.3l4.8 6.5-8.3 1.4zM402 547.3l-8.2 1.4 3.5-7.9zM392.5 534.3l-3.5 7.9-4.8-6.6zM518.3 534.4l-2.2 7.5-5.5-5.1zM518.3 534.4l5.5 5-7.7 2.5zM523.8 539.4l-2.3 7.4-5.4-4.9zM466.6 504l-6.2-6.3 7.9-1.9zM454.1 491.4l7.9-1.9-1.6 8.2zM468.3 495.8l-7.9 1.9 1.6-8.2zM454.1 491.4l6.3 6.3-7.9 2zM494.5 511.8l-1.7 8-6-5.8zM490.9 527.7l-5.9-5.7 7.8-2.2zM479 516.2l7.8-2.2-1.8 8zM492.8 519.8l-7.8 2.2 1.8-8zM466.6 504l1.7-8.2 6.3 6.2zM479 516.2l1.7-8.1 6.1 5.9zM479 516.2l-6.2-6.1 7.9-2zM466.6 504l8-2-1.8 8.1zM480.7 508.1l-7.9 2 1.8-8.1zM490.9 527.7l1.9-7.9 6.1 5.8zM500.7 517.7l-1.8 7.9-6.1-5.8zM518.3 534.4l-7.7 2.4 2-7.8zM502.8 539l2-7.7 5.8 5.5zM506.7 523.4l5.9 5.6-7.8 2.3zM510.6 536.8l-5.8-5.5 7.8-2.3zM506.7 523.4l-1.9 7.9-5.9-5.7zM498.9 525.6l5.9 5.7-7.9 2.2zM411.6 559.7l3.3-7.5 6.2 6.1zM466.6 590.9l5.3 4.9-9 2.2zM466.6 590.9l9-2.4-3.7 7.3zM500.3 567l-5.4-5 8.6-3.2zM411.6 559.7l9.5-1.4-3.5 7.9zM421.1 558.3l6.1 6.4-9.6 1.5zM442.8 569l-3.6 7.8-6-6zM429.6 578.4l3.6-7.6 6 6zM423.6 572.4l3.6-7.7 6 6.1zM436.7 563l-3.5 7.8-6-6.1zM449.7 553l9.4-2.2-3.3 8.2zM466.6 590.9l-3.7 7.1-5.8-4.9zM454.8 580.5l-3.6 7.4-6-5.4zM454.8 580.5l6 5.3-9.6 2.1zM466.6 590.9l-9.5 2.2 3.7-7.3zM451.2 587.9l9.6-2.1-3.7 7.3zM454.8 580.5l-9.6 2 3.6-7.6zM439.2 576.8l9.6-1.9-3.6 7.6zM444.5 477.8l4.8 6.8-7.9 1.9zM441.4 486.5l7.9-1.9-3.2 8.7zM454.1 491.4l3.2-8.7 4.7 6.8zM454.1 491.4l-4.8-6.8 8-1.9zM319.2 466.8l1.5-7.9 6.1 7.2zM328.3 458.1l-1.5 8-6.1-7.2zM331.7 481.1l1.4-7.9 6.3 7.1zM339.4 480.3l-6.3-7.1 7.7-.8zM334.5 465.3l-1.4 7.9-6.3-7.1zM331.7 481.1l-6.3-7.1 7.7-.8zM319.2 466.8l7.6-.7-1.4 7.9zM333.1 473.2l-7.7 .8 1.4-7.9zM358.2 509l1.1-7.8 6.7 6.8zM366 508l-6.7-6.8 7.8-1.1zM344.8 495.3l1.2-7.9 6.6 6.9zM353.8 486.4l-1.2 7.9-6.6-6.9zM358.2 509l-6.8-6.8 7.9-1zM344.8 495.3l7.8-1-1.2 7.9zM360.4 493.3l-1.1 7.9-6.7-6.9zM351.4 502.2l1.2-7.9 6.7 6.9zM347.2 479.4l-1.2 8-6.6-7.1zM344.8 495.3l-6.6-7.1 7.8-.8zM331.7 481.1l7.7-.8-1.2 7.9zM346 487.4l-7.8 .8 1.2-7.9zM338.8 387.5l5.7 6.6-8.1 1.2zM350.3 400.7l-8.2 1.3 2.4-7.9zM344.5 394.1l-2.4 7.9-5.7-6.7zM350.3 400.7l6 6.7-8.3 1.2zM354 415.4l-6-6.8 8.3-1.2zM350.3 400.7l-2.3 7.9-5.9-6.6zM362.3 414.2l6.1 6.8-8.3 1.2zM374.6 427.8l-8.3 1.2 2.1-8zM380.2 474.5l8-1.4-1.6 8.3zM412.6 468.6l-1.7 8.3-6.4-6.7zM444.5 477.8l-3.1 8.7-6.4-6.6zM431.7 464.5l-3.1 8.8-6.4-6.7zM431.7 464.5l6.4 6.7-9.5 2.1zM428.6 473.3l9.5-2.1-3.1 8.7zM387.1 441.4l9.4-2-3 8.9zM399.8 455.1l-6.3-6.8 9.4-2.1zM396.5 439.4l6.4 6.8-9.4 2.1zM418.8 450.9l-3.1 8.9-6.4-6.8zM406.2 461.9l3.1-8.9 6.4 6.8zM399.8 455.1l3.1-8.9 6.4 6.8zM412.6 468.6l3.1-8.8 6.5 6.8zM431.7 464.5l-9.5 2.1 3.1-8.9zM415.7 459.8l9.6-2.1-3.1 8.9zM338.8 387.5l8.6-2.7-2.9 9.3zM350.3 400.7l-5.8-6.6 8.7-2.7zM362.3 414.2l-6-6.8 8.8-2.6zM350.3 400.7l8.8-2.6-2.8 9.3zM356.3 407.4l2.8-9.3 6 6.7zM387.1 441.4l-6.3-6.8 9.1-2.4zM374.6 427.8l9-2.5-2.8 9.3zM380.8 434.6l2.8-9.3 6.3 6.9zM362.3 414.2l8.9-2.5-2.8 9.3zM374.6 427.8l-6.2-6.8 9-2.5zM371.2 411.7l6.2 6.8-9 2.5zM374.6 427.8l2.8-9.3 6.2 6.8zM362.3 414.2l2.8-9.4 6.1 6.9zM387.1 441.4l2.8-9.2 6.6 7.2zM265.3 253.8l6-4.5 .2-.4zM268.3 299.5l4.9-7.4 1.6 4.6zM223.4 327.3l-4.7 4.1 2.6-7.1zM219.5 321.6l1.8 2.7-4.5 4.3zM215.8 309.1l3.9-6.2-.1 1.2zM223.9 296.9l-.3 1-3.9 5zM223.7 299.2l-4.1 4.9 4-6.2zM219.7 302.9l3.9-5-4 6.2zM268.3 299.5l-6.3 2.9 3.6-6.9zM263.1 291.7l2.5 3.8-6.2 3zM223.4 327.3l2.9-7.3 1.9 3.3zM223.7 299.2l-4.1 6.5 0-1.6zM219.6 304.1l0 1.6-4 5zM217 316.6l-.8-2.2 4.3-4.7zM215.7 312.5l4.2-4.9-3.7 6.8zM224.3 303l-3.8 6.7-.6-2.1zM216.2 314.4l3.7-6.8 .6 2.1zM223.7 299.2l.1 1.8-4.2 4.7zM224.3 303l-4.4 4.6 3.9-6.6zM215.7 312.5l3.9-6.8 .3 1.9zM223.8 301l-3.9 6.6-.3-1.9zM223.4 327.3l-2.1-3 5-4.3zM219.5 321.6l4.8-4.4-3 7.1zM221.3 324.3l3-7.1 2 2.8zM217 316.6l4.5-4.6-3.4 7zM219.5 321.6l-1.4-2.6 4.6-4.5zM221.5 312l1.2 2.5-4.6 4.5zM219.5 321.6l3.2-7.1 1.6 2.7zM217 316.6l3.5-6.9 1 2.3zM224.3 303l.8 2.1-4.6 4.6zM220.5 309.7l4.6-4.6-3.6 6.9zM268.3 299.5l-2.7-4 7.6-3.4zM263.1 291.7l7.5-3.5-5 7.3zM265.6 295.5l5-7.3 2.6 3.9zM258.8 284.8l7.2-3.8-5.2 7.1zM263.1 291.7l-2.3-3.6 7.4-3.6zM266 281l2.2 3.5-7.4 3.6zM263.1 291.7l5.1-7.2 2.4 3.7zM253.1 273.9l6.7-4.3-5.6 6.7zM266.7 265.5l-5.7 6.5-1.2-2.4zM255.5 278.9l-1.3-2.6 6.8-4.3zM259.8 269.6l1.2 2.4-6.8 4.3zM258.8 284.8l-1.8-3.1 7.1-4zM255.5 278.9l6.9-4.1-5.4 6.9zM269.6 270.9l-5.5 6.8-1.7-2.9zM257 281.7l5.4-6.9 1.7 2.9zM255.5 278.9l5.5-6.9 1.4 2.8zM268.1 268.1l-5.7 6.7-1.4-2.8zM258.8 284.8l5.3-7.1 1.9 3.3zM265.3 253.8l-6.7 5.6 .8-.4zM264.1 255l.5-.7 6.3-4.8zM265.3 253.8l6.2-4.9-6.9 5.4zM264.1 255l-6.5 5.9 .4-.9zM265.3 253.8l-.7 .5-6 5.1zM264.1 255l-6.1 5 6.6-5.7zM264.6 254.3l-6.6 5.7 .6-.6zM264.8 260.8l-6 6.4-.7-1.9zM252.3 271.8l5.8-6.5 .7 1.9zM264 257.4l-6.3 6.1-.1-1.4zM251.7 270l6-6.5 .4 1.8zM264 257.4l.3 1.5-6.6 4.6zM264.8 260.8l-6.7 4.5 6.2-6.4zM257.7 263.5l6.6-4.6-6.2 6.4zM264.1 255l-.2 1.1-6.3 4.8zM264 257.4l-6.4 4.7 6.3-6zM257.6 260.9l6.3-4.8-6.3 6zM264.1 255l6.5-4.7-6.7 5.8zM264.8 260.8l.8 2.2-6.8 4.2zM266.7 265.5l-6.9 4.1 5.8-6.6zM258.8 267.2l6.8-4.2-5.8 6.6zM223.9 296.9l-4.2 6-.6 .5zM223.9 296.9l-.5 .5 4.9-6.4zM223.2 298.2l4.8-6.5-4.6 5.7zM223.9 296.9l-4.8 6.5 4.3-6zM218.8 304.1l4.6-6.7-4.3 6zM237.8 365.4l-2.7-5.2 5.6-3.6zM232.7 355.2l5.5-3.7-3.1 8.7zM243.9 348l-3.2 8.6-2.5-5.1zM235.1 360.2l3.1-8.7 2.5 5.1zM228.6 345.4l5.3-3.8-3.3 8.6zM239.4 338l-3.5 8.5-2-4.9zM232.7 355.2l-2.1-5 5.3-3.7zM233.9 341.6l2 4.9-5.3 3.7zM251 331.1l-3.7 8.4-2.2-5zM232.7 355.2l3.2-8.7 2.3 5zM235.9 346.5l5.6-3.6-3.3 8.6zM225.5 336.1l-1.2-4.5 5-3.9zM228.2 323.3l1.1 4.4-5 3.9zM228.6 345.4l-1.6-4.7 5.1-3.9zM225.5 336.1l5.1-3.9-3.6 8.5zM227 340.7l3.6-8.5 1.5 4.6zM225.5 336.1l3.8-8.4 1.3 4.5zM228.6 345.4l3.5-8.6 1.8 4.8zM223.4 327.3l.9 4.3-4.9 4.2zM225.5 336.1l-5 4.2 3.8-8.7zM225.5 336.1l1.5 4.6-5.2 4.1zM338.8 387.5l-5.6-6.5 8.1-1.2zM327.7 374.6l8-1.3-2.5 7.7zM317.1 362.1l7.9-1.4-2.7 7.6zM327.7 374.6l-5.4-6.3 8-1.3zM297.8 338.6l7.5-1.8-2.9 7.5zM307.1 350.1l-4.7-5.8 7.6-1.7zM317.1 362.1l-5.1-6 7.8-1.6zM307.1 350.1l7.7-1.6-2.8 7.6zM268.3 299.5l6.5-2.8-3.5 7zM274.4 308.1l-3.1-4.4 6.6-2.7zM274.8 296.7l3.1 4.3-6.6 2.7zM274.4 308.1l6.7-2.6-3.3 7.2zM277.8 312.7l3.3-7.2 3.5 4.8zM274.4 308.1l3.5-7.1 3.2 4.5zM297.8 338.6l-4.4-5.5 7.3-2.1zM289.2 327.7l7.2-2.1-3 7.5zM293.4 333.1l3-7.5 4.3 5.4zM281.4 317.5l7-2.3-3.2 7.4zM289.2 327.7l-4-5.1 7.1-2.3zM288.4 315.2l3.9 5.1-7.1 2.3zM289.2 327.7l3.1-7.4 4.1 5.3zM281.4 317.5l3.2-7.2 3.8 4.9zM322.3 450.9l-1.6 8-6.5-4.5zM319.2 466.8l-6.5-4.5 8-3.4zM320.7 458.9l-8 3.4 1.5-7.9zM338.8 387.5l-2.4 7.8-6.2-5zM325.8 435l-1.8 8-6.4-4.9zM297.3 431.3l7.9-3.1-1.8 8zM274.8 411.7l7.4-3.2-2 8.1zM289.7 405.3l-2 8.1-5.5-4.9zM285.7 421.4l-5.5-4.8 7.5-3.2zM282.2 408.5l5.5 4.9-7.5 3.2zM297.3 431.3l-5.8-5 7.7-3.1zM285.7 421.4l7.6-3.1-1.8 8zM285.7 421.4l2-8 5.6 4.9zM274.8 411.7l5.4 4.9-7.5 3.3zM297.3 431.3l-7.8 3.3 2-8.3zM285.7 421.4l5.8 4.9-7.8 3.4zM289.5 434.6l-5.8-4.9 7.8-3.4zM322.3 450.9l-8.1 3.5 1.6-8.4zM306.3 457.8l1.5-8.3 6.4 4.9zM309.5 441.1l6.3 4.9-8 3.5zM314.2 454.4l-6.4-4.9 8-3.5zM297.3 431.3l6.1 4.9-7.9 3.4zM309.5 441.1l-7.9 3.4 1.8-8.3zM303.4 436.2l-1.8 8.3-6.1-4.9zM309.5 441.1l-1.7 8.4-6.2-5zM268.3 299.5l3 4.2-7.7 3.4zM274.4 308.1l-7.7 3.3 4.6-7.7zM281.4 317.5l-7.9 3.1 4.3-7.9zM274.4 308.1l3.4 4.6-7.8 3.2zM297.8 338.6l-8.3 2.8 3.9-8.3zM289.2 327.7l4.2 5.4-8.2 2.9zM289.5 341.4l-4.3-5.4 8.2-2.9zM269.4 342.3l7.8-3.2-3.7 8.5zM281.4 317.5l3.8 5.1-8 3zM285.2 322.6l-4.1 8.1-3.9-5.1zM289.2 327.7l-4 8.3-4.1-5.3zM237.8 365.4l2.9-8.8 3.7 5zM240.7 356.6l6.7-3.7-3 8.7zM281.4 317.5l-4.2 8.1-3.7-5zM338.8 387.5l-8.6 2.8 3-9.3zM327.7 374.6l5.5 6.4-8.5 2.9zM317.1 362.1l5.2 6.2-8.4 2.9zM327.7 374.6l-8.5 2.9 3.1-9.2zM322.3 368.3l-3.1 9.2-5.3-6.3zM327.7 374.6l-3 9.3-5.5-6.4zM274.8 411.7l2.1-9.5 5.3 6.3zM289.7 405.3l-5.3-6.2 7.7-3.2zM297.8 338.6l4.6 5.7-8.2 3zM307.1 350.1l-8.2 3 3.5-8.8zM302.4 344.3l-3.5 8.8-4.7-5.8zM317.1 362.1l-8.4 2.9 3.3-8.9zM307.1 350.1l4.9 6-8.3 2.9zM307.1 350.1l-3.4 8.9-4.8-5.9zM317.1 362.1l-3.2 9.1-5.2-6.2zM274.8 411.7l-5.5-6 7.6-3.5zM269.3 405.7l2.2-9.5 5.4 6zM268.9 380.9l-2.6 9.3-4.9-5.9zM264 399.7l-5.1-6 7.4-3.5zM261.4 384.3l4.9 5.9-7.4 3.5zM264 399.7l2.3-9.5 5.2 6zM237.8 365.4l6.6-3.8-3 9.3zM251.2 357.9l-3 9.2-3.8-5.5zM245.4 376.4l-4-5.5 6.8-3.8zM244.4 361.6l3.8 5.5-6.8 3.8zM254.1 387.9l-4.5-5.8 7.1-3.6zM245.4 376.4l6.9-3.7-2.7 9.4zM259.5 369.1l-2.8 9.4-4.4-5.8zM249.6 382.1l2.7-9.4 4.4 5.8zM245.4 376.4l2.8-9.3 4.1 5.6zM255.2 363.4l-2.9 9.3-4.1-5.6zM254.1 387.9l2.6-9.4 4.7 5.8zM256.7 378.5l7.3-3.5-2.6 9.3z"/>
<path fill="#ffff95" stroke="#ffff95" stroke-width="0.7" d="M366.6 523l-3.6 7.9-4.3-6.9zM342.7 510.8l7.7-.8-3.6 7.9zM350.9 525l-4.1-7.1 7.7-.9zM350.4 510l4.1 7-7.7 .9zM350.9 525l3.6-8 4.2 7zM438.1 495.1l-3.2 8.5-4.8-6.8zM406.8 553.6l3.4-7.7 4.7 6.3zM408.8 531.6l-4.8-6.7 8.1-1.4zM395.1 562.7l8.2-1.4-3.3 7.3zM408.2 567.1l-8.2 1.5 3.3-7.3zM366.6 523l3.6-8 4.6 7zM366.6 523l4.6 6.9-8.2 1zM375.9 536.7l-8.2 1.1 3.5-7.9zM363 530.9l8.2-1-3.5 7.9zM395.1 562.7l-4.8-6.2 8.2-1.4zM385.5 550l8.3-1.3-3.5 7.8zM390.3 556.5l3.5-7.8 4.7 6.4zM385.5 550l-4.8-6.5 8.3-1.3zM385.5 550l-8.3 1.2 3.5-7.7zM375.9 536.7l4.8 6.8-8.3 1zM533.2 529.3l-2 7.5-5.4-4.9zM482.4 499.9l7.7-2.2-1.6 8.2zM497.8 495.6l-1.6 8.1-6.1-6zM488.5 505.9l1.6-8.2 6.1 6zM469.9 487.5l7.8-2-1.5 8.2zM482.4 499.9l-6.2-6.2 7.8-2.1zM477.7 485.5l6.3 6.1-7.8 2.1zM482.4 499.9l1.6-8.3 6.1 6.1zM522.2 518.5l5.6 5.4-7.5 2.6zM520.3 526.5l7.5-2.6-2 8zM494.5 511.8l1.7-8.1 6.3 5.8zM496.2 503.7l7.9-2.3-1.6 8.1zM522.2 518.5l-1.9 8-5.8-5.5zM510.3 507.2l-1.8 8.1-6-5.8zM502.5 509.5l6 5.8-7.8 2.4zM522.2 518.5l-7.7 2.5 1.8-8.1zM508.5 515.3l7.8-2.4-1.8 8.1zM404.9 574.3l3.3-7.2 6.1 6.3zM417.6 566.2l-3.3 7.2-6.1-6.3zM435.6 584.2l-9.3 1.3 3.3-7.1zM423.6 572.4l6 6-9.3 1.2zM426.3 585.5l-6-5.9 9.3-1.2zM423.6 572.4l-3.3 7.2-6-6.2zM459.1 604.9l-9.1 1.9 3.3-6.7zM447.5 595.1l5.8 5-9.2 1.8zM435.6 584.2l6 5.6-9.3 1.5zM447.5 595.1l-9.3 1.6 3.4-6.9zM441.6 589.8l-3.4 6.9-5.9-5.4zM435.6 584.2l-3.3 7.1-6-5.8zM431.2 534.9l-3.3 7.9-6.2-6.3zM437.4 541.1l3.4-8.2 6.2 6.1zM491.5 570.1l5.4 4.9-8.8 3.1zM459.1 604.9l-5.8-4.8 9.6-2.1zM450.7 460.2l4.9 6.9-8 1.9zM460.4 474l-7.9 1.9 3.1-8.8zM460.4 474l4.8 6.8-7.9 1.9zM462 489.5l-4.7-6.8 7.9-1.9zM469.9 487.5l-4.7-6.7 7.9-2.1zM460.4 474l8-2.1-3.2 8.9zM316.6 482.6l6.3 7.2-7.4 .6zM316.6 482.6l1.3-7.9 6.2 7.2zM342.7 510.8l1-7.7 6.7 6.9zM316.6 482.6l7.5-.7-1.2 7.9zM329.4 496.9l-6.5-7.1 7.6-.8zM324.1 481.9l6.4 7.1-7.6 .8zM329.4 496.9l7.6-.8-1 7.8zM336 503.9l1-7.8 6.7 7zM329.4 496.9l1.1-7.9 6.5 7.1zM370.5 443.9l-6.3-6.9 8.3-1.2zM343.8 372.1l8.8-2.7-2.6 7.7zM356.2 382.2l-6.2-5.1 8.8-2.6zM352.6 369.4l6.2 5.1-8.8 2.6zM412.6 468.6l9.6-2-3.2 8.7zM450.7 460.2l-3.1 8.8-6.4-6.6zM421.8 442l-9.4 2.1 3-8.9zM418.8 450.9l3-8.9 6.5 6.8zM431.4 439.9l-3.1 8.9-6.5-6.8zM441.2 462.4l-6.4-6.8 9.5-2.1zM437.9 446.7l-3.1 8.9-6.5-6.8zM428.3 448.8l6.5 6.8-9.5 2.1zM368 395.5l-6-6.7 8.9-2.5zM356.2 382.2l8.8-2.6-3 9.2zM392.7 422.9l-6.2-6.9 9-2.3zM380.3 409.2l9-2.4-2.8 9.2zM368 395.5l2.9-9.2 6.1 6.8zM380.3 409.2l2.8-9.3 6.2 6.9zM380.3 409.2l-6.2-6.8 9-2.5zM383.1 399.9l-9 2.5 2.9-9.3zM392.7 422.9l2.8-9.2 6.7 7.1zM406 437.3l2.8-9.3 6.6 7.2zM392.7 422.9l9.5-2.1-2.9 9.3zM406 437.3l-6.7-7.2 9.5-2.1zM402.2 420.8l6.6 7.2-9.5 2.1zM277.9 244.2l6.2-4.2 .4-.1zM277.9 244.2l-.4 .3 6.6-4.5zM277.5 244.5l6.3-4.1 .3-.4zM273.2 292.1l6.6-2.7-5 7.3zM281.4 294.1l5.2-7.2 1.7 4.8zM288.3 291.7l-1.7-4.8 6.9-2.3zM278.3 284.9l6.7-2.6-5.2 7.1zM291.9 279.9l-5.3 7-1.6-4.6zM285 282.3l1.6 4.6-6.8 2.5zM208.5 322l3.5-6.5 0 1.6zM215.7 312.5l.5 1.9-3.9 4.6zM209.2 325.7l-3.6 4.8 3.1-6.8zM209.2 325.7l-.5-2 3.6-4.7zM208.5 322l3.5-4.9-3.3 6.6zM212.3 319l-3.6 4.7 3.3-6.6zM211.1 330.3l1.4 2.6-4 4.5zM214.3 335.7l-4.2 4.3 2.4-7.1zM208.5 337.4l4-4.5-2.4 7.1zM211.1 330.3l-1.2-2.4 4-4.5zM209.2 325.7l3.7-4.6-3 6.8zM213.9 323.4l-4 4.5 3-6.8zM211.1 330.3l-2.6 7.1-1.3-2.5zM209.2 325.7l.7 2.2-3.7 4.7zM211.1 330.3l-3.9 4.6 2.7-7zM209.9 327.9l-2.7 7-1-2.3zM239.8 305.3l-3.4 7-1.9-3.3zM251.1 298.1l-5.8 3.5 3.7-6.8zM226.2 307.6l-3.5 6.9-1.2-2.5zM278.3 284.9l-2.5-3.8 7.9-3.2zM283.7 277.9l-7.9 3.2 5.4-6.9zM268.2 284.5l7.6-3.4-5.2 7.1zM281.4 258.1l-6 6.3-1.5-2.8zM269.6 270.9l5.8-6.5 1.7 3zM283 261l-5.9 6.4-1.7-3zM281.2 274.2l-2.1-3.5 7.8-3.1zM277.3 245.9l6.8-4-6.8 5.3zM277.3 245.9l.2-1 6.7-4.2zM277.3 245.9l-6.7 4.4 6.9-5.4zM277.5 248.8l-6.9 4.2 6.7-5.8zM277.3 245.9l0 1.3-6.8 4.3zM270.6 253l-.1-1.5 6.8-4.3zM277.5 248.8l.6 1.9-7.1 3.9zM279 252.8l-7.2 3.9 6.3-6zM278.1 250.7l-6.3 6-.8-2.1zM281.4 258.1l-7.5 3.5 6.2-6.3zM273.9 261.6l-1.2-2.6 7.4-3.7zM279 252.8l-6.3 6.2-.9-2.3zM208.5 322l-.9 .6 4.4-7.1zM206.8 323.4l4.3-7.3-3.5 6.5zM212 315.5l-4.4 7.1 3.5-6.5zM206.8 323.4l3.8-6.7 .5-.6zM214.7 310.2l.4-.6-4.5 7.1zM211.1 316.1l-.5 .6 4.5-7.1zM214.7 310.2l-4.1 6.5-.2 .7zM215.7 344.6l-3.4 8.8-1-4.5zM214.3 335.7l-3.7 8.7-.5-4.4zM215.7 344.6l-4.4 4.3 3.6-8.8zM214.3 335.7l.6 4.4-4.3 4.3zM211.3 348.9l-.7-4.5 4.3-4.3zM255.9 305.5l6.1-3.1-4.6 7.7zM247.2 321.3l1.8 4.9-5.8 3.4zM232.7 383.3l-3-5 5.4-4zM227 373.5l5.2-4.1-2.5 8.9zM235.1 374.3l-5.4 4 2.5-8.9zM215.7 344.6l1.2 4.5-4.6 4.3zM218.5 353.7l-4.7 4.3 3.1-8.9zM218.5 353.7l-1.6-4.6 4.9-4.3zM215.7 344.6l4.8-4.3-3.6 8.8zM227 373.5l2.7-9.2 2.5 5.1zM222.3 363.4l3-9.1 2.1 4.9zM227 373.5l-2.5-5.1 5.2-4.1zM222.3 363.4l5.1-4.2-2.9 9.2zM224.5 368.4l2.9-9.2 2.3 5.1zM222.3 363.4l-2.1-4.9 5.1-4.2zM218.5 353.7l4.9-4.2-3.2 9zM222.3 363.4l-4.9 4.3 2.8-9.2zM343.8 372.1l-5.5-6.4 8.2-1.2zM333 359.4l8.1-1.3-2.8 7.6zM346.5 364.5l-8.2 1.2 2.8-7.6zM322.6 347l-4.9-6 7.8-1.5zM325.5 339.5l-7.8 1.5 3-7.4zM307.1 350.1l2.9-7.5 4.8 5.9zM322.6 347l2.9-7.5 5.1 6.1zM333 359.4l2.8-7.6 5.3 6.3zM322.6 347l8-1.4-2.9 7.5zM333 359.4l-5.3-6.3 8.1-1.3zM330.6 345.6l5.2 6.2-8.1 1.3zM295.2 289.4l-3.7 6.8-3.2-4.5zM288 303.1l-3.4-4.6 6.9-2.3zM291.5 296.2l-6.9 2.3 3.7-6.8zM303.6 323.6l-4.1-5.4 7.3-2zM295.4 313l7.3-2-3.2 7.2zM306.8 316.2l-7.3 2 3.2-7.2zM298.7 294l-3.6 6.9-3.6-4.7zM295.4 313l3.4-7.2 3.9 5.2zM302.3 298.8l-3.5 7-3.7-4.9zM295.4 313l-3.8-5 7.2-2.2zM288 303.1l7.1-2.2-3.5 7.1zM298.8 305.8l-7.2 2.2 3.5-7.1zM312.9 335.1l-7.6 1.7 2.9-7.5zM303.6 323.6l3.2-7.4 4.4 5.6zM312.9 335.1l3-7.5 4.8 6zM303.6 323.6l7.6-1.8-3 7.5zM311.2 321.8l4.7 5.8-7.7 1.7zM316.6 482.6l-6.6-4.4 7.9-3.5zM303.5 473.7l7.8-3.4-1.3 7.9zM310 478.2l1.3-7.9 6.6 4.4zM306.3 457.8l-1.5 7.9-6.3-4.5zM303.5 473.7l-6.3-4.6 7.6-3.4zM298.5 461.2l6.3 4.5-7.6 3.4zM303.5 473.7l1.3-8 6.5 4.6zM270.7 428.1l-5.1-4.9 7.1-3.3zM260.7 418.3l6.9-3.3-2 8.2zM270.7 428.1l-6.9 3.4 1.8-8.3zM260.7 418.3l4.9 4.9-6.8 3.3zM322.3 450.9l-6.5-4.9 8.2-3zM313.2 425.1l-6.1-5 8.1-3zM270.7 428.1l5.5 4.9-7.3 3.4zM281.9 437.9l-7.4 3.4 1.7-8.3zM268.9 436.4l7.3-3.4-1.7 8.3zM270.7 428.1l7.4-3.3-1.9 8.2zM291 464.5l1.3-8.3 6.2 5zM293.8 447.9l6.2 5-7.7 3.3zM292.3 456.2l7.7-3.3-1.5 8.3zM293.8 447.9l1.7-8.3 6.1 4.9zM281.9 437.9l-1.6 8.4-5.8-5zM293.8 447.9l-1.5 8.3-6.1-4.9zM281.9 437.9l5.9 5-7.5 3.4zM293.8 447.9l-7.6 3.4 1.6-8.4zM287.8 442.9l-1.6 8.4-5.9-5zM316.3 386.8l2.9-9.3 5.5 6.4zM232.7 383.3l2.4-9 3.8 5.5zM240.9 394.6l2.1-9.1 4.4 5.7zM240.9 394.6l-4.2-5.7 6.3-3.4zM232.7 383.3l6.2-3.5-2.2 9.1zM243 385.5l-6.3 3.4 2.2-9.1zM264 399.7l5.3 6-7.1 3.2zM260.7 418.3l-5.3-6 6.8-3.4zM250.4 406.3l6.6-3.3-1.6 9.3zM255.4 412.3l1.6-9.3 5.2 5.9zM250.4 406.3l-4.9-5.9 6.6-3.3zM240.9 394.6l6.5-3.4-1.9 9.2zM252.1 397.1l-6.6 3.3 1.9-9.2zM297.8 338.6l-3.6 8.7-4.7-5.9zM254.1 387.9l7.3-3.6-2.5 9.4zM279.2 392.9l-5.3-6.1 7.9-3.3z"/>
<path fill="#ffffea" stroke="#ffffea" stroke-width="0.7" d="M431.6 512l-4.7-6.7 8-1.7zM422.1 498.5l8-1.7-3.2 8.5zM425 528.5l-4.8-6.6 8.1-1.6zM415.5 515.2l8.1-1.5-3.4 8.2zM431.6 512l-3.3 8.3-4.7-6.6zM420.2 521.9l3.4-8.2 4.7 6.6zM406 501.6l8-1.6-3.3 8.4zM422.1 498.5l-3.3 8.4-4.8-6.9zM415.5 515.2l-4.8-6.8 8.1-1.5zM414 500l4.8 6.9-8.1 1.5zM431.6 512l-8 1.7 3.3-8.4zM415.5 515.2l3.3-8.3 4.8 6.8zM422.1 498.5l4.8 6.8-8.1 1.6zM423.6 513.7l-4.8-6.8 8.1-1.6zM425 528.5l-3.3 8-4.8-6.4zM418.3 544.4l-4.8-6.3 8.2-1.6zM408.8 531.6l8.1-1.5-3.4 8zM421.7 536.5l-8.2 1.6 3.4-8zM389.9 504.4l-3.4 8.2-4.6-7zM406 501.6l-3.4 8.3-4.7-6.9zM399.2 518.2l-4.7-6.9 8.1-1.4zM389.9 504.4l8-1.4-3.4 8.3zM402.6 509.9l-8.1 1.4 3.4-8.3zM389.9 504.4l4.6 6.9-8 1.3zM399.2 518.2l-8 1.3 3.3-8.2zM425 528.5l-8.1 1.6 3.3-8.2zM408.8 531.6l3.3-8.1 4.8 6.6zM415.5 515.2l4.7 6.7-8.1 1.6zM416.9 530.1l-4.8-6.6 8.1-1.6zM399.2 518.2l4.8 6.7-8.1 1.4zM406 501.6l4.7 6.8-8.1 1.5zM415.5 515.2l-8.2 1.5 3.4-8.3zM399.2 518.2l3.4-8.3 4.7 6.8zM410.7 508.4l-3.4 8.3-4.7-6.8zM399.2 518.2l8.1-1.5-3.3 8.2zM415.5 515.2l-3.4 8.3-4.8-6.8zM404 524.9l3.3-8.2 4.8 6.8zM486.9 543.2l8-2-2.4 7.3zM498.1 553.7l-5.6-5.2 8-2zM494.9 541.2l5.6 5.3-8 2zM508.8 563.6l-5.3-4.8 7.9-2.3zM498.1 553.7l7.9-2.1-2.5 7.2zM503.5 558.8l2.5-7.2 5.4 4.9zM498.1 553.7l2.4-7.2 5.5 5.1zM463.1 520.1l-6.1-6.1 7.9-1.9zM486.9 543.2l-5.8-5.6 7.8-2.1zM475.2 531.9l7.9-2-2 7.7zM481.1 537.6l2-7.7 5.8 5.6zM463.1 520.1l8-1.9-1.9 7.9zM475.2 531.9l-6-5.8 7.9-2zM475.2 531.9l1.9-7.8 6 5.8zM486.9 543.2l2-7.7 6 5.7zM438.1 495.1l6.4 6.4-9.6 2.1zM431.6 512l3.3-8.4 6.3 6.4zM463.1 520.1l-9.4 2.3 3.3-8.4zM444.2 524.6l3.3-8.3 6.2 6.1zM450.7 507.8l6.3 6.2-9.5 2.3zM453.7 522.4l-6.2-6.1 9.5-2.3zM425 528.5l3.3-8.2 6.3 6.3zM431.6 512l6.3 6.4-9.6 1.9zM444.2 524.6l-9.6 2 3.3-8.2zM450.7 507.8l-3.2 8.5-6.3-6.3zM444.2 524.6l-6.3-6.2 9.6-2.1zM431.6 512l9.6-2-3.3 8.4zM447.5 516.3l-9.6 2.1 3.3-8.4zM486.9 543.2l-9.2 2.7 3.4-8.3zM468.5 548.4l3.4-8.1 5.8 5.6zM475.2 531.9l5.9 5.7-9.2 2.7zM477.7 545.9l-5.8-5.6 9.2-2.7zM449.7 553l3.4-8 6 5.8zM468.5 548.4l-9.4 2.4 3.4-8.1zM453.1 545l9.4-2.3-3.4 8.1zM463.1 520.1l6.1 6-9.3 2.5zM475.2 531.9l-9.3 2.6 3.3-8.4zM456.5 536.8l3.4-8.2 6 5.9zM469.2 526.1l-3.3 8.4-6-5.9zM468.5 548.4l-6-5.7 9.4-2.4zM456.5 536.8l9.4-2.3-3.4 8.2zM475.2 531.9l-3.3 8.4-6-5.8zM462.5 542.7l3.4-8.2 6 5.8zM425 528.5l6.2 6.4-9.5 1.6zM437.4 541.1l-9.5 1.7 3.3-7.9zM418.3 544.4l3.4-7.9 6.2 6.3zM449.7 553l-9.5 1.9 3.4-7.8zM430.7 556.7l3.4-7.7 6.1 5.9zM437.4 541.1l-3.3 7.9-6.2-6.2zM427.9 542.8l6.2 6.2-9.6 1.7zM463.1 520.1l-3.2 8.5-6.2-6.2zM456.5 536.8l-6.1-6 9.5-2.2zM444.2 524.6l9.5-2.2-3.3 8.4zM459.9 528.6l-9.5 2.2 3.3-8.4zM449.7 553l-6.1-5.9 9.5-2.1zM437.4 541.1l9.6-2.1-3.4 8.1zM443.6 547.1l3.4-8.1 6.1 6zM425 528.5l9.6-1.9-3.4 8.3zM437.4 541.1l-6.2-6.2 9.6-2zM434.6 526.6l6.2 6.3-9.6 2zM473.8 575.9l5.4 5-9 2.6zM486.9 543.2l5.6 5.3-8.7 3.1zM480.5 559.9l3.3-8.3 5.6 5.3zM492.5 548.5l-3.1 8.4-5.6-5.3zM508.8 563.6l-8.5 3.4 3.2-8.2zM491.5 570.1l3.4-8.1 5.4 5zM498.1 553.7l5.4 5.1-8.6 3.2zM473.8 575.9l3.4-7.9 5.5 5.1zM480.5 559.9l5.6 5.2-8.9 2.9zM491.5 570.1l-8.8 3 3.4-8zM477.2 568l8.9-2.9-3.4 8zM498.1 553.7l-3.2 8.3-5.5-5.1zM491.5 570.1l-5.4-5 8.8-3.1zM480.5 559.9l8.9-3-3.3 8.2zM494.9 562l-8.8 3.1 3.3-8.2zM473.8 575.9l8.9-2.8-3.5 7.8zM491.5 570.1l-3.4 8-5.4-5zM484.5 585.8l-5.3-4.9 8.9-2.8zM482.7 573.1l5.4 5-8.9 2.8zM491.5 570.1l8.8-3.1-3.4 8zM449.7 553l-3.5 8.1-6-6.2zM486.9 543.2l-3.1 8.4-6.1-5.7zM480.5 559.9l-6-5.6 9.3-2.7zM468.5 548.4l9.2-2.5-3.2 8.4zM473.8 575.9l-5.9-5.4 9.3-2.5zM461.9 564.8l9.4-2.3-3.4 8zM480.5 559.9l-3.3 8.1-5.9-5.5zM467.9 570.5l3.4-8 5.9 5.5zM468.5 548.4l-3.3 8.3-6.1-5.9zM461.9 564.8l-6.1-5.8 9.4-2.3zM459.1 550.8l6.1 5.9-9.4 2.3zM480.5 559.9l-9.2 2.6 3.2-8.2zM461.9 564.8l3.3-8.1 6.1 5.8zM468.5 548.4l6 5.9-9.3 2.4zM471.3 562.5l-6.1-5.8 9.3-2.4zM449.7 553l6.1 6-9.6 2.1zM461.9 564.8l-9.5 2.2 3.4-8zM455.8 559l-3.4 8-6.2-5.9zM473.8 575.9l-9.5 2.4 3.6-7.8zM461.9 564.8l6 5.7-9.5 2.3zM464.3 578.3l-5.9-5.5 9.5-2.3zM461.9 564.8l-3.5 8-6-5.8zM354.1 446.3l1.9-8.1 6.2 6.9zM329.7 419.1l5.9 6.7-7.9 1.2zM341.7 432.6l-8 1.2 1.9-8zM325.8 435l1.9-8 6 6.8zM335.6 425.8l-1.9 8-6-6.8zM354.1 446.3l-8.1 1.2 1.8-8zM338 448.6l1.8-8 6.2 6.9zM341.7 432.6l6.1 6.9-8 1.1zM346 447.5l-6.2-6.9 8-1.1zM341.7 432.6l-1.9 8-6.1-6.8zM338 448.6l-6.2-6.8 8-1.2zM333.7 433.8l6.1 6.8-8 1.2zM354.1 446.3l-6.3-6.8 8.2-1.3zM341.7 432.6l8.1-1.2-2 8.1zM341.7 432.6l-6.1-6.8 8.1-1.2zM438.1 495.1l-8 1.7 1.7-8.2zM422.1 498.5l1.6-8.2 6.4 6.5zM430.1 496.8l-6.4-6.5 8.1-1.7zM406 501.6l1.6-8.2 6.4 6.6zM409.3 485.2l6.4 6.7-8.1 1.5zM422.1 498.5l-8.1 1.5 1.7-8.1zM407.6 493.4l8.1-1.5-1.7 8.1zM409.3 485.2l1.6-8.3 6.4 6.7zM422.1 498.5l-6.4-6.6 8-1.6zM409.3 485.2l8-1.6-1.6 8.3zM425.4 482l-1.7 8.3-6.4-6.7zM415.7 491.9l1.6-8.3 6.4 6.7zM377 490.8l6.4 6.8-8 1.3zM389.9 504.4l-8 1.2 1.5-8zM375.4 498.9l8-1.3-1.5 8zM380.2 474.5l6.4 6.9-8.1 1.3zM393 488.2l-8 1.3 1.6-8.1zM377 490.8l1.5-8.1 6.5 6.8zM386.6 481.4l-1.6 8.1-6.5-6.8zM406 501.6l-8.1 1.4 1.6-8.1zM389.9 504.4l1.5-8.1 6.5 6.7zM393 488.2l6.5 6.7-8.1 1.4zM397.9 503l-6.5-6.7 8.1-1.4zM377 490.8l8-1.3-1.6 8.1zM393 488.2l-1.6 8.1-6.4-6.8zM389.9 504.4l-6.5-6.8 8-1.3zM385 489.5l6.4 6.8-8 1.3zM396.3 471.7l1.8-8.3 6.4 6.8zM380.2 474.5l1.6-8.2 6.4 6.8zM383.6 458l6.3 6.9-8.1 1.4zM396.3 471.7l-8.1 1.4 1.7-8.2zM381.8 466.3l8.1-1.4-1.7 8.2zM396.3 471.7l-6.4-6.8 8.2-1.5zM406 501.6l-6.5-6.7 8.1-1.5zM393 488.2l8.1-1.5-1.6 8.2zM409.3 485.2l-1.7 8.2-6.5-6.7zM399.5 494.9l1.6-8.2 6.5 6.7zM396.3 471.7l-1.6 8.3-6.5-6.9zM393 488.2l-6.4-6.8 8.1-1.4zM388.2 473.1l6.5 6.9-8.1 1.4zM409.3 485.2l-6.5-6.7 8.1-1.6zM396.3 471.7l8.2-1.5-1.7 8.3zM410.9 476.9l-8.1 1.6 1.7-8.3zM393 488.2l1.7-8.2 6.4 6.7zM396.3 471.7l6.5 6.8-8.1 1.5zM409.3 485.2l-8.2 1.5 1.7-8.2zM394.7 480l8.1-1.5-1.7 8.2zM354.1 446.3l-1.9 8.3-6.2-7.1zM350.5 462.9l-6.3-7.1 8-1.2zM338 448.6l8-1.1-1.8 8.3zM352.2 454.6l-8 1.2 1.8-8.3zM380.2 474.5l-6.7-7 8.3-1.2zM367 460.5l8.2-1.2-1.7 8.2zM373.5 467.5l1.7-8.2 6.6 7zM354.1 446.3l8.1-1.2-1.7 8.3zM370.5 443.9l-1.8 8.3-6.5-7.1zM367 460.5l-6.5-7.1 8.2-1.2zM383.6 458l-8.4 1.3 1.8-8.3zM367 460.5l1.7-8.3 6.5 7.1zM370.5 443.9l6.5 7.1-8.3 1.2zM375.2 459.3l-6.5-7.1 8.3-1.2zM377 490.8l-1.6 8.1-6.7-6.8zM380.2 474.5l-1.7 8.2-6.7-6.9zM377 490.8l-6.8-6.8 8.3-1.3zM363.6 477.1l8.2-1.3-1.6 8.2zM378.5 482.7l-8.3 1.3 1.6-8.2zM363.6 477.1l6.6 6.9-8.2 1.2zM377 490.8l-8.3 1.3 1.5-8.1zM354.1 446.3l6.4 7.1-8.3 1.2zM367 460.5l-8.3 1.2 1.8-8.3zM350.5 462.9l1.7-8.3 6.5 7.1zM360.5 453.4l-1.8 8.3-6.5-7.1zM380.2 474.5l-8.4 1.3 1.7-8.3zM363.6 477.1l1.6-8.3 6.6 7zM367 460.5l6.5 7-8.3 1.3zM371.8 475.8l-6.6-7 8.3-1.3zM363.6 477.1l-8.2 1.2 1.6-8.3zM367 460.5l-1.8 8.3-6.5-7.1zM363.6 477.1l-6.6-7.1 8.2-1.2zM365.2 468.8l-8.2 1.2 1.7-8.3zM329.7 419.1l-2 7.9-6.3-4.9z"/>
<path fill="#ffffd4" stroke="#ffffd4" stroke-width="0.7" d="M418.3 544.4l-3.4 7.8-4.7-6.3zM408.8 531.6l-3.4 7.9-4.8-6.5zM400.6 533l4.8 6.5-8.1 1.3zM408.8 531.6l4.7 6.5-8.1 1.4zM418.3 544.4l-8.1 1.5 3.3-7.8zM405.4 539.5l8.1-1.4-3.3 7.8zM383.2 520.8l-4.7-6.9 8-1.3zM381.9 505.6l4.6 7-8 1.3zM392.5 534.3l-4.7-6.7 8.1-1.3zM383.2 520.8l8-1.3-3.4 8.1zM399.2 518.2l-3.3 8.1-4.7-6.8zM387.8 527.6l3.4-8.1 4.7 6.8zM383.2 520.8l3.3-8.2 4.7 6.9zM394.5 511.3l-3.3 8.2-4.7-6.9zM392.5 534.3l3.4-8 4.7 6.7zM408.8 531.6l-8.2 1.4 3.4-8.1zM395.9 526.3l8.1-1.4-3.4 8.1zM373.9 506.8l4.6 7.1-8.3 1.1zM502.8 539l-2.3 7.5-5.6-5.3zM513.8 549.3l-5.4-5.1 7.7-2.3zM502.8 539l7.8-2.2-2.2 7.4zM516.1 541.9l-7.7 2.3 2.2-7.4zM513.8 549.3l-2.4 7.2-5.4-4.9zM502.8 539l5.6 5.2-7.9 2.3zM513.8 549.3l-7.8 2.3 2.4-7.4zM508.4 544.2l-2.4 7.4-5.5-5.1zM513.8 549.3l5.3 4.8-7.7 2.4zM513.8 549.3l2.3-7.4 5.4 4.9zM438.1 495.1l8-1.8-1.6 8.2zM454.1 491.4l-1.6 8.3-6.4-6.4zM450.7 507.8l-6.2-6.3 8-1.8zM446.1 493.3l6.4 6.4-8 1.8zM450.7 507.8l8-1.9-1.7 8.1zM466.6 504l-1.7 8.1-6.2-6.2zM457 514l1.7-8.1 6.2 6.2zM466.6 504l-7.9 1.9 1.7-8.2zM450.7 507.8l1.8-8.1 6.2 6.2zM460.4 497.7l-1.7 8.2-6.2-6.2zM490.9 527.7l-2 7.8-5.8-5.6zM479 516.2l-1.9 7.9-6-5.9zM471.1 518.2l6 5.9-7.9 2zM479 516.2l6 5.8-7.9 2.1zM490.9 527.7l-7.8 2.2 1.9-7.9zM477.1 524.1l7.9-2.1-1.9 7.9zM463.1 520.1l1.8-8 6.2 6.1zM466.6 504l6.2 6.1-7.9 2zM479 516.2l-7.9 2 1.7-8.1zM464.9 512.1l7.9-2-1.7 8.1zM490.9 527.7l6 5.8-8 2zM502.8 539l-7.9 2.2 2-7.7zM488.9 535.5l8-2-2 7.7zM418.3 544.4l6.2 6.3-9.6 1.5zM430.7 556.7l-9.6 1.6 3.4-7.6zM414.9 552.2l9.6-1.5-3.4 7.6zM437.4 541.1l6.2 6-9.5 1.9zM440.2 554.9l-6.1-5.9 9.5-1.9zM418.3 544.4l9.6-1.6-3.4 7.9zM430.7 556.7l-6.2-6 9.6-1.7zM484.5 585.8l-8.9 2.7 3.6-7.6zM466.6 590.9l3.6-7.4 5.4 5zM479.2 580.9l-3.6 7.6-5.4-5zM484.5 585.8l-3.6 7.4-5.3-4.7zM475.6 588.5l5.3 4.7-9 2.6zM430.7 556.7l9.5-1.8-3.5 8.1zM446.2 561.1l-9.5 1.9 3.5-8.1zM430.7 556.7l6 6.3-9.5 1.7zM442.8 569l-9.6 1.8 3.5-7.8zM483.8 551.6l-9.3 2.7 3.2-8.4zM466.6 590.9l-5.8-5.1 9.4-2.3zM454.8 580.5l9.5-2.2-3.5 7.5zM470.2 583.5l-9.4 2.3 3.5-7.5zM442.8 569l3.4-7.9 6.2 5.9zM454.8 580.5l3.6-7.7 5.9 5.5zM454.8 580.5l-6-5.6 9.6-2.1zM458.4 572.8l-9.6 2.1 3.6-7.9zM438.1 495.1l3.3-8.6 4.7 6.8zM322.3 450.9l6 7.2-7.6 .8zM334.5 465.3l-7.7 .8 1.5-8zM347.2 479.4l-7.8 .9 1.4-7.9zM334.5 465.3l6.3 7.1-7.7 .8zM373.9 506.8l-7.9 1.2 1.1-7.9zM360.4 493.3l6.7 6.8-7.8 1.1zM347.2 479.4l6.6 7-7.8 1zM360.4 493.3l-7.8 1 1.2-7.9zM345.8 416.6l2.2-8 6 6.8zM329.7 419.1l2.1-8 5.9 6.7zM334 403.2l5.9 6.7-8.1 1.2zM345.8 416.6l-8.1 1.2 2.2-7.9zM331.8 411.1l8.1-1.2-2.2 7.9zM345.8 416.6l-5.9-6.7 8.1-1.3zM334 403.2l8.1-1.2-2.2 7.9zM348 408.6l-8.1 1.3 2.2-7.9zM387.1 441.4l-8.3 1.3 2-8.1zM370.5 443.9l2-8.1 6.3 6.9zM374.6 427.8l6.2 6.8-8.3 1.2zM378.8 442.7l-6.3-6.9 8.3-1.2zM358.1 430.2l6.1 6.8-8.2 1.2zM370.5 443.9l-8.3 1.2 2-8.1zM356 438.2l8.2-1.2-2 8.1zM358.1 430.2l2-8 6.2 6.8zM368.4 421l-2.1 8-6.2-6.8zM358.1 430.2l8.2-1.2-2.1 8zM374.6 427.8l-2.1 8-6.2-6.8zM364.2 437l2.1-8 6.2 6.8zM322.3 450.9l1.7-7.9 6.1 6.8zM325.8 435l6 6.8-7.8 1.2zM338 448.6l-7.9 1.2 1.7-8zM324 443l7.8-1.2-1.7 8zM325.8 435l7.9-1.2-1.9 8zM362.3 414.2l-2.2 8-6.1-6.8zM358.1 430.2l-6.2-6.8 8.2-1.2zM345.8 416.6l8.2-1.2-2.1 8zM360.1 422.2l-8.2 1.2 2.1-8zM358.1 430.2l-2.1 8-6.2-6.8zM329.7 419.1l8-1.3-2.1 8zM345.8 416.6l-2.1 8-6-6.8zM337.7 417.8l6 6.8-8.1 1.2zM358.1 430.2l-8.3 1.2 2.1-8zM341.7 432.6l2-8 6.1 6.8zM345.8 416.6l6.1 6.8-8.2 1.2zM349.8 431.4l-6.1-6.8 8.2-1.2zM425.4 482l6.4 6.6-8.1 1.7zM412.6 468.6l6.4 6.7-8.1 1.6zM425.4 482l-8.1 1.6 1.7-8.3zM419 475.3l-1.7 8.3-6.4-6.7zM387.1 441.4l6.4 6.9-8.2 1.4zM399.8 455.1l-8.1 1.5 1.8-8.3zM383.6 458l1.7-8.3 6.4 6.9zM393.5 448.3l-1.8 8.3-6.4-6.9zM412.6 468.6l-8.1 1.6 1.7-8.3zM399.8 455.1l6.4 6.8-8.1 1.5zM404.5 470.2l-6.4-6.8 8.1-1.5zM399.8 455.1l-1.7 8.3-6.4-6.8zM383.6 458l8.1-1.4-1.8 8.3zM398.1 463.4l-8.2 1.5 1.8-8.3zM322.3 450.9l7.8-1.1-1.8 8.3zM338 448.6l-1.8 8.4-6.1-7.2zM334.5 465.3l-6.2-7.2 7.9-1.1zM330.1 449.8l6.1 7.2-7.9 1.1zM347.2 479.4l-6.4-7 8-1.2zM334.5 465.3l7.9-1.2-1.6 8.3zM350.5 462.9l-1.7 8.3-6.4-7.1zM340.8 472.4l1.6-8.3 6.4 7.1zM338 448.6l6.2 7.2-8 1.2zM350.5 462.9l-8.1 1.2 1.8-8.3zM334.5 465.3l1.7-8.3 6.2 7.1zM344.2 455.8l-1.8 8.3-6.2-7.1zM387.1 441.4l-1.8 8.3-6.5-7zM383.6 458l-6.6-7 8.3-1.3zM370.5 443.9l8.3-1.2-1.8 8.3zM385.3 449.7l-8.3 1.3 1.8-8.3zM373.9 506.8l-6.8-6.7 8.3-1.2zM367.1 500.1l1.6-8 6.7 6.8zM347.2 479.4l8.2-1.1-1.6 8.1zM363.6 477.1l-1.6 8.1-6.6-6.9zM360.4 493.3l-6.6-6.9 8.2-1.2zM355.4 478.3l6.6 6.9-8.2 1.2zM360.4 493.3l1.6-8.1 6.7 6.9zM362 485.2l8.2-1.2-1.5 8.1zM347.2 479.4l1.6-8.2 6.6 7.1zM350.5 462.9l6.5 7.1-8.2 1.2zM348.8 471.2l8.2-1.2-1.6 8.3zM350.5 462.9l8.2-1.2-1.7 8.3zM438.1 495.1l-6.3-6.5 9.6-2.1zM425.4 482l9.6-2.1-3.2 8.7zM431.8 488.6l3.2-8.7 6.4 6.6zM425.4 482l-6.4-6.7 9.6-2zM422.2 466.6l6.4 6.7-9.6 2zM425.4 482l3.2-8.7 6.4 6.6zM412.6 468.6l-6.4-6.7 9.5-2.1zM399.8 455.1l9.5-2.1-3.1 8.9zM252 265.3l-4.6 4.5 5.3-5zM251.4 267.1l-4.9 4.2 5.1-5.2zM241.7 275.8l5.1-5.4-.3 .9zM252 265.3l-.4 .8-4.8 4.3zM246.5 271.3l.3-.9 4.8-4.3zM233 285.3l4.9-5.5-.7 .7zM242.9 274.5l-.7 .5-4.3 4.8zM241.7 275.8l-4.5 4.7 5-5.5zM237.9 279.8l4.3-4.8-5 5.5zM252 265.3l-5.2 5.1 .6-.6zM241.7 275.8l.5-.8 4.6-4.6zM242.9 274.5l4.5-4.7-5.2 5.2zM253.1 273.9l-5.5 3.7 4.7-5.8zM242.4 281.6l4.6-5.9 .6 1.9zM251.7 270l.6 1.8-5.3 3.9zM247.6 277.6l-.6-1.9 5.3-3.9zM232.6 290l4.4-6 .4 1.7zM241.6 278.2l.2 1.5-4.8 4.3zM242.4 281.6l-5 4.1 4.4-6zM237 284l4.8-4.3-4.4 6zM251.4 267.1l0 1.3-5 4.1zM251.7 270l-5.2 4 4.9-5.6zM241.6 278.2l4.8-5.7 .1 1.5zM251.4 268.4l-4.9 5.6-.1-1.5zM242.4 281.6l-.6-1.9 5.2-4zM241.6 278.2l4.9-4.2-4.7 5.7zM251.7 270l-4.7 5.7-.5-1.7zM241.8 279.7l4.7-5.7 .5 1.7zM233 285.3l-.5 .9-4.2 4.8zM232.2 287.2l-4.3 4.8 4.6-5.8zM232.5 286.2l-4.6 5.8 .4-1zM232.6 290l-4.6 4.5 4.2-6zM223.7 299.2l4.1-6.1 .2 1.4zM232.2 287.2l0 1.3-4.4 4.6zM228 294.5l-.2-1.4 4.4-4.6zM223.9 296.9l4-4.9-4.3 5.9zM232.2 287.2l-4.4 5.9 .1-1.1zM223.7 299.2l-.1-1.3 4.2-4.8zM227.9 292l-.1 1.1-4.2 4.8zM251.4 267.1l-5 5.4 .1-1.2zM241.6 278.2l-.1-1.3 4.9-4.4zM241.7 275.8l4.8-4.5-5 5.6zM246.4 272.5l-4.9 4.4 5-5.6zM232.6 290l-.4-1.5 4.8-4.5zM232.2 287.2l4.6-4.6-4.6 5.9zM241.6 278.2l-4.6 5.8-.2-1.4zM232.2 288.5l4.6-5.9 .2 1.4zM233 285.3l4.2-4.8-4.7 5.7zM241.7 275.8l-4.8 5.6 .3-.9zM232.2 287.2l.3-1 4.4-4.8zM237.2 280.5l-.3 .9-4.4 4.8zM241.6 278.2l-4.8 4.4 4.7-5.7zM232.2 287.2l4.7-5.8-.1 1.2zM241.7 275.8l-.2 1.1-4.6 4.5zM236.8 282.6l.1-1.2 4.6-4.5zM255.9 305.5l3.5-7 2.6 3.9zM262 302.4l-2.6-3.9 6.2-3zM244.2 312.2l3.3-7.1 2.4 3.7zM251.1 298.1l2.2 3.6-5.8 3.4zM255.9 305.5l-6 3.3 3.4-7.1zM247.5 305.1l5.8-3.4-3.4 7.1zM258.8 284.8l2 3.3-6 3.3zM263.1 291.7l-6.1 3.1 3.8-6.7zM251.1 298.1l3.7-6.7 2.2 3.4zM260.8 288.1l-3.8 6.7-2.2-3.4zM255.9 305.5l-2.6-3.8 6.1-3.2zM251.1 298.1l5.9-3.3-3.7 6.9zM263.1 291.7l-3.7 6.8-2.4-3.7zM253.3 301.7l3.7-6.9 2.4 3.7zM233.3 319.4l-5.1 3.9 3-7.2zM226.3 320l4.9-3.9-3 7.2zM236.4 299.2l1.5 2.9-5.1 3.9zM239.8 305.3l-5.3 3.7 3.4-6.9zM229.4 312.9l3.4-6.9 1.7 3zM237.9 302.1l-3.4 6.9-1.7-3zM244.2 312.2l-5.5 3.5 3.1-7.1zM233.3 319.4l3.1-7.1 2.3 3.4zM239.8 305.3l2 3.3-5.4 3.7zM238.7 315.7l-2.3-3.4 5.4-3.7zM229.4 312.9l5.1-3.9-3.3 7.1zM233.3 319.4l-2.1-3.3 5.2-3.8zM234.5 309l1.9 3.3-5.2 3.8zM253.1 273.9l1.1 2.4-5.6 3.6zM255.5 278.9l-5.7 3.5 4.4-6.1zM244.3 286.2l4.3-6.3 1.2 2.5zM254.2 276.3l-4.4 6.1-1.2-2.5zM258.8 284.8l-5.9 3.3 4.1-6.4zM247.2 291.6l4-6.4 1.7 2.9zM255.5 278.9l1.5 2.8-5.8 3.5zM252.9 288.1l-1.7-2.9 5.8-3.5zM236.4 299.2l3.8-6.6 1.5 2.7zM244.3 286.2l1.3 2.6-5.4 3.8zM247.2 291.6l-5.5 3.7 3.9-6.5zM240.2 292.6l5.4-3.8-3.9 6.5zM255.5 278.9l-4.3 6.3-1.4-2.8zM247.2 291.6l-1.6-2.8 5.6-3.6zM244.3 286.2l5.5-3.8-4.2 6.4zM251.2 285.2l-5.6 3.6 4.2-6.4zM244.2 312.2l-2.4-3.6 5.7-3.5zM239.8 305.3l5.5-3.7-3.5 7zM251.1 298.1l-3.6 7-2.2-3.5zM241.8 308.6l3.5-7 2.2 3.5zM236.4 299.2l5.3-3.9-3.8 6.8zM247.2 291.6l-3.8 6.8-1.7-3.1zM239.8 305.3l-1.9-3.2 5.5-3.7zM241.7 295.3l1.7 3.1-5.5 3.7zM258.8 284.8l-4 6.6-1.9-3.3zM251.1 298.1l-2.1-3.3 5.8-3.4zM247.2 291.6l5.7-3.5-3.9 6.7zM254.8 291.4l-5.8 3.4 3.9-6.7zM239.8 305.3l3.6-6.9 1.9 3.2zM247.2 291.6l1.8 3.2-5.6 3.6zM243.4 298.4l5.6-3.6-3.7 6.8zM232.6 290l-4.3 6.4-.3-1.9zM224.3 303l-.5-2 4.5-4.6zM223.7 299.2l4.3-4.7-4.2 6.5zM228.3 296.4l-4.5 4.6 4.2-6.5zM253.1 273.9l-4.5 6-1-2.3zM244.3 286.2l-1.1-2.5 5.4-3.8zM242.4 281.6l5.2-4-4.4 6.1zM248.6 279.9l-5.4 3.8 4.4-6.1zM236.4 299.2l-1.4-2.7 5.2-3.9zM233.9 294.1l5.1-4.1-4 6.5zM244.3 286.2l-4.1 6.4-1.2-2.6zM235 296.5l4-6.5 1.2 2.6zM232.6 290l4.8-4.3-4.3 6.2zM242.4 281.6l-4.4 6.1-.6-2zM233.9 294.1l-.8-2.2 4.9-4.2zM237.4 285.7l.6 2-4.9 4.2zM244.3 286.2l-5.3 3.8 4.2-6.3zM233.9 294.1l4.1-6.4 1 2.3zM242.4 281.6l.8 2.1-5.2 4zM239 290l-1-2.3 5.2-4zM229.4 312.9l-3.1 7.1-2-2.8zM236.4 299.2l-3.6 6.8-1.6-2.7zM229.4 312.9l-1.7-2.8 5.1-4.1zM226.2 307.6l5-4.3-3.5 6.8zM232.8 306l-5.1 4.1 3.5-6.8zM226.2 307.6l1.5 2.5-5 4.4zM229.4 312.9l-5.1 4.3 3.4-7.1zM222.7 314.5l5-4.4-3.4 7.1zM232.6 290l.5 1.9-4.8 4.5zM233.9 294.1l-4.9 4.3 4.1-6.5zM224.3 303l4-6.6 .7 2zM233.1 291.9l-4.1 6.5-.7-2zM236.4 299.2l-5.2 4.1 3.8-6.8zM226.2 307.6l3.7-6.9 1.3 2.6zM233.9 294.1l1.1 2.4-5.1 4.2zM231.2 303.3l-1.3-2.6 5.1-4.2zM226.2 307.6l-4.7 4.4 3.6-6.9zM233.9 294.1l-4 6.6-.9-2.3zM226.2 307.6l-1.1-2.5 4.8-4.4zM224.3 303l4.7-4.6-3.9 6.7zM229.9 300.7l-4.8 4.4 3.9-6.7zM252 265.3l.7-.5 5.9-5.4zM259.4 259l-.8 .4-5.9 5.4zM251.4 267.1l.2-1 6-5.2zM252 265.3l6-5.3-6.4 6.1zM251.6 266.1l6.4-6.1-.4 .9zM252 265.3l6.6-5.9-.6 .6zM253.1 273.9l-.8-2.1 6.5-4.6zM251.7 270l6.4-4.7-5.8 6.5zM251.4 267.1l6.2-5-6.2 6.3zM251.7 270l-.3-1.6 6.3-4.9zM257.6 262.1l.1 1.4-6.3 4.9zM251.4 267.1l6.2-6.2 0 1.2zM233 285.3l-.3 .7 5.2-6.2zM233 285.3l-4.7 5.7-.3 .7zM228.3 291l-4.9 6.4 4.6-5.7zM233 285.3l-5 6.4 4.7-5.7zM268.3 299.5l-4.7 7.6-1.6-4.7zM263.6 307.1l-6.2 3 4.6-7.7zM251 331.1l-2-4.9 6-3.3zM247.2 321.3l5.9-3.3-4.1 8.2zM259.2 314.9l-4.2 8-1.9-4.9zM249 326.2l4.1-8.2 1.9 4.9zM244.2 312.2l5.7-3.4-4.3 7.9zM255.9 305.5l-4.5 7.8-1.5-4.5zM247.2 321.3l-1.6-4.6 5.8-3.4zM249.9 308.8l1.5 4.5-5.8 3.4zM259.2 314.9l-6.1 3.1 4.3-7.9zM247.2 321.3l4.2-8 1.7 4.7zM255.9 305.5l1.5 4.6-6 3.2zM253.1 318l-1.7-4.7 6-3.2zM243.9 348l-2.4-5.1 5.8-3.4zM239.4 338l5.7-3.5-3.6 8.4zM247.3 339.5l-5.8 3.4 3.6-8.4zM239.4 338l2.1 4.9-5.6 3.6zM243.9 348l-5.7 3.5 3.3-8.6zM233.3 319.4l-4 8.3-1.1-4.4zM244.2 312.2l-4.3 8-1.2-4.5zM235.9 328.4l-1.4-4.5 5.4-3.7zM233.3 319.4l5.4-3.7-4.2 8.2zM239.9 320.2l-5.4 3.7 4.2-8.2zM235.9 328.4l-3.8 8.4-1.5-4.6zM233.3 319.4l1.2 4.5-5.2 3.8zM235.9 328.4l-5.3 3.8 3.9-8.3zM234.5 323.9l-3.9 8.3-1.3-4.5zM239.4 338l3.8-8.4 1.9 4.9zM245.1 334.5l-1.9-4.9 5.8-3.4zM235.9 328.4l1.6 4.8-5.4 3.6zM239.4 338l-5.5 3.6 3.6-8.4zM232.1 336.8l5.4-3.6-3.6 8.4zM244.2 312.2l1.4 4.5-5.7 3.5zM247.2 321.3l-5.8 3.5 4.2-8.1zM235.9 328.4l4-8.2 1.5 4.6zM245.6 316.7l-4.2 8.1-1.5-4.6zM239.4 338l-1.9-4.8 5.7-3.6zM235.9 328.4l5.5-3.6-3.9 8.4zM247.2 321.3l-4 8.3-1.8-4.8zM237.5 333.2l3.9-8.4 1.8 4.8zM334 403.2l-6.1-5 8.5-2.9zM321.8 393.2l8.4-2.9-2.3 7.9zM336.4 395.3l-8.5 2.9 2.3-7.9zM329.7 419.1l-6.2-5.1 8.3-2.9zM317.3 409l8.3-2.9-2.1 7.9zM334 403.2l-2.2 7.9-6.2-5zM323.5 414l2.1-7.9 6.2 5zM305.4 399.1l8.1-3-2.2 8zM321.8 393.2l-2.3 7.9-6-5zM317.3 409l-6-4.9 8.2-3zM313.5 396.1l6 5-8.2 3zM334 403.2l-8.4 2.9 2.3-7.9zM317.3 409l2.2-7.9 6.1 5zM321.8 393.2l6.1 5-8.4 2.9zM325.6 406.1l-6.1-5 8.4-2.9zM309.5 441.1l8.1-3-1.8 7.9zM315.8 446l1.8-7.9 6.4 4.9zM313.2 425.1l-1.9 8-6.1-4.9zM309.5 441.1l-6.1-4.9 7.9-3.1zM305.2 428.2l6.1 4.9-7.9 3.1zM325.8 435l-6.4-5 8.3-3zM313.2 425.1l8.2-3-2 7.9zM327.7 427l-8.3 3 2-7.9zM309.5 441.1l1.8-8 6.3 5zM313.2 425.1l6.2 4.9-8.1 3.1zM325.8 435l-8.2 3.1 1.8-8.1zM311.3 433.1l8.1-3.1-1.8 8.1zM305.4 399.1l-2.2 8-5.7-4.9zM301.1 415.1l-5.8-4.9 7.9-3.1zM289.7 405.3l7.8-3.1-2.2 8zM303.2 407.1l-7.9 3.1 2.2-8zM301.1 415.1l-1.9 8.1-5.9-4.9zM289.7 405.3l5.6 4.9-7.6 3.2zM301.1 415.1l-7.8 3.2 2-8.1zM295.3 410.2l-2 8.1-5.6-4.9zM329.7 419.1l-8.3 3 2.1-8.1zM313.2 425.1l2-8 6.2 5zM317.3 409l6.2 5-8.3 3.1zM321.4 422.1l-6.2-5 8.3-3.1zM297.3 431.3l1.9-8.1 6 5zM301.1 415.1l6 5-7.9 3.1zM313.2 425.1l-8 3.1 1.9-8.1zM299.2 423.2l7.9-3.1-1.9 8.1zM305.4 399.1l5.9 5-8.1 3zM317.3 409l-8.2 3.1 2.2-8zM301.1 415.1l2.1-8 5.9 5zM301.1 415.1l8-3-2 8zM317.3 409l-2.1 8.1-6.1-5zM307.1 420.1l2-8 6.1 5zM259.2 314.9l4.4-7.8 3.1 4.3zM271.3 303.7l-4.6 7.7-3.1-4.3zM265.7 323.9l4.3-8 3.5 4.7zM273.5 320.6l-3.5-4.7 7.8-3.2zM251 331.1l4-8.2 3.2 4.5zM259.2 314.9l3.1 4.4-7.3 3.6zM265.7 323.9l-7.5 3.5 4.1-8.1zM255 322.9l7.3-3.6-4.1 8.1zM274.4 308.1l-4.4 7.8-3.3-4.5zM265.7 323.9l-3.4-4.6 7.7-3.4zM259.2 314.9l7.5-3.5-4.4 7.9zM270 315.9l-7.7 3.4 4.4-7.9zM281.4 344.4l3.8-8.4 4.3 5.4zM265.8 350.8l3.6-8.5 4.1 5.3zM273.2 333.9l4 5.2-7.8 3.2zM281.4 344.4l-7.9 3.2 3.7-8.5zM273.2 333.9l4-8.3 3.9 5.1zM281.4 344.4l-4.2-5.3 8-3.1zM273.2 333.9l7.9-3.2-3.9 8.4zM243.9 348l3.5 4.9-6.7 3.7zM251.2 357.9l-6.8 3.7 3-8.7zM251 331.1l3.3 4.7-7 3.7zM257.9 340.7l-7.1 3.5 3.5-8.4zM243.9 348l3.4-8.5 3.5 4.7zM254.3 335.8l-3.5 8.4-3.5-4.7zM265.8 350.8l-7.4 3.5 3.3-8.6zM251.2 357.9l3.3-8.7 3.9 5.1zM257.9 340.7l3.8 5-7.2 3.5zM258.4 354.3l-3.9-5.1 7.2-3.5zM243.9 348l6.9-3.8-3.4 8.7zM257.9 340.7l-3.4 8.5-3.7-5zM251.2 357.9l-3.8-5 7.1-3.7zM250.8 344.2l3.7 5-7.1 3.7zM273.2 333.9l-3.9-5.1 7.9-3.2zM265.7 323.9l7.8-3.3-4.2 8.2zM277.2 325.6l-7.9 3.2 4.2-8.2zM265.8 350.8l-4.1-5.1 7.7-3.4zM257.9 340.7l7.5-3.5-3.7 8.5zM273.2 333.9l-3.8 8.4-4-5.1zM261.7 345.7l3.7-8.5 4 5.1zM251 331.1l7.2-3.7-3.9 8.4zM265.7 323.9l-4 8.3-3.5-4.8zM257.9 340.7l-3.6-4.9 7.4-3.6zM258.2 327.4l3.5 4.8-7.4 3.6zM273.2 333.9l-7.8 3.3 3.9-8.4zM257.9 340.7l3.8-8.5 3.7 5zM265.7 323.9l3.6 4.9-7.6 3.4zM265.4 337.2l-3.7-5 7.6-3.4zM321.8 393.2l2.9-9.3 5.5 6.4zM305.4 399.1l2.7-9.4 5.4 6.4zM310.9 380.4l5.4 6.4-8.2 2.9zM321.8 393.2l-8.3 2.9 2.8-9.3zM308.1 389.7l8.2-2.9-2.8 9.3zM310.9 380.4l3-9.2 5.3 6.3zM321.8 393.2l-5.5-6.4 8.4-2.9zM310.9 380.4l8.3-2.9-2.9 9.3zM279.2 392.9l5.2 6.2-7.5 3.1zM289.7 405.3l-7.5 3.2 2.2-9.4zM284.6 374.3l4.9 6.1-7.7 3.1zM294.6 386.6l-7.8 3.1 2.7-9.3zM279.2 392.9l2.6-9.4 5 6.2zM289.5 380.4l-2.7 9.3-5-6.2zM305.4 399.1l-7.9 3.1 2.4-9.4zM289.7 405.3l2.4-9.4 5.4 6.3zM294.6 386.6l5.3 6.2-7.8 3.1zM297.5 402.2l-5.4-6.3 7.8-3.1zM279.2 392.9l7.6-3.2-2.4 9.4zM294.6 386.6l-2.5 9.3-5.3-6.2zM286.8 389.7l5.3 6.2-7.7 3.2zM290.8 356.2l3.4-8.9 4.7 5.8zM300.5 368l3.2-9 5 6zM290.8 356.2l4.7 5.8-7.9 3.2zM300.5 368l-8.1 3.1 3.1-9.1zM287.6 365.2l7.9-3.2-3.1 9.1zM300.5 368l-5-6 8.2-3zM290.8 356.2l8.1-3.1-3.4 8.9zM303.7 359l-8.2 3 3.4-8.9zM305.4 399.1l-5.5-6.3 8.2-3.1zM294.6 386.6l8.1-3.1-2.8 9.3zM310.9 380.4l-2.8 9.3-5.4-6.2zM299.9 392.8l2.8-9.3 5.4 6.2zM300.5 368l-3 9.2-5.1-6.1zM294.6 386.6l-5.1-6.2 8-3.2zM292.4 371.1l5.1 6.1-8 3.2zM310.9 380.4l-5.3-6.2 8.3-3zM300.5 368l8.2-3-3.1 9.2zM313.9 371.2l-8.3 3 3.1-9.2zM294.6 386.6l2.9-9.4 5.2 6.3zM300.5 368l5.1 6.2-8.1 3zM310.9 380.4l-8.2 3.1 2.9-9.3zM297.5 377.2l8.1-3-2.9 9.3zM290.8 356.2l-4.8-6 8.2-2.9zM281.4 344.4l8.1-3-3.5 8.8zM294.2 347.3l-8.2 2.9 3.5-8.8zM284.6 374.3l-5.1-6 8.1-3.1zM274.7 362.3l7.9-3.1-3.1 9.1zM290.8 356.2l-3.2 9-5-6zM279.5 368.3l3.1-9.1 5 6zM265.8 350.8l7.7-3.2-3.4 8.9zM281.4 344.4l-3.5 8.9-4.4-5.7zM274.7 362.3l-4.6-5.8 7.8-3.2zM273.5 347.6l4.4 5.7-7.8 3.2zM290.8 356.2l-8.2 3 3.4-9zM274.7 362.3l3.2-9 4.7 5.9zM281.4 344.4l4.6 5.8-8.1 3.1zM282.6 359.2l-4.7-5.9 8.1-3.1zM279.2 392.9l-2.3 9.3-5.4-6zM284.6 374.3l-2.8 9.2-5.2-5.9zM268.9 380.9l7.7-3.3-2.7 9.2zM281.8 383.5l-7.9 3.3 2.7-9.2zM268.9 380.9l5 5.9-7.6 3.4zM279.2 392.9l-7.7 3.3 2.4-9.4zM266.3 390.2l7.6-3.4-2.4 9.4zM265.8 350.8l-3.3 9.1-4.1-5.6zM259.5 369.1l-4.3-5.7 7.3-3.5zM251.2 357.9l7.2-3.6-3.2 9.1zM262.5 359.9l-7.3 3.5 3.2-9.1zM251.2 357.9l4 5.5-7 3.7zM259.5 369.1l-7.2 3.6 2.9-9.3zM284.6 374.3l-8 3.3 2.9-9.3zM268.9 380.9l2.8-9.3 4.9 6zM274.7 362.3l4.8 6-7.8 3.3zM276.6 377.6l-4.9-6 7.8-3.3zM259.5 369.1l4.5 5.9-7.3 3.5zM268.9 380.9l-7.5 3.4 2.6-9.3zM265.8 350.8l4.3 5.7-7.6 3.4zM274.7 362.3l-7.7 3.4 3.1-9.2zM259.5 369.1l3-9.2 4.5 5.8zM270.1 356.5l-3.1 9.2-4.5-5.8zM268.9 380.9l-4.9-5.9 7.7-3.4zM259.5 369.1l7.5-3.4-3 9.3zM274.7 362.3l-3 9.3-4.7-5.9zM264 375l3-9.3 4.7 5.9z"/>
<path fill="#ffffff" stroke="#ffffff" stroke-width="0.7" d="M456.5 536.8l6 5.9-9.4 2.3zM456.5 536.8l-3.4 8.2-6.1-6zM444.2 524.6l-3.4 8.3-6.2-6.3zM456.5 536.8l-9.5 2.2 3.4-8.2zM444.2 524.6l6.2 6.2-9.6 2.1zM447 539l-6.2-6.1 9.6-2.1z"/>
<path fill="#0e03dc" stroke="#0e03dc" stroke-width="0.7" d="M275.4 630.9l6.2 4.4-1.6-1.3zM229.9 587.9l4.8 5.7 .3 .4zM553.6 246.1l-4.6-3.1-1.6-1.3zM544.2 240.2l-1.4-1.5 6.2 4.3zM523.8 236l6.5 4.5-5.8-1.4zM524.9 242.5l-.4-3.4 6.3 4.7zM524.9 242.5l5.9 1.3 .4 3.6zM544.2 240.2l-5.2-2.8-1.4-1.6zM523.1 233.2l5.9 1.8 .7 2.6zM533.6 234.9l1 2.2-6.6-4.4zM528 232.7l6.6 4.4-5.6-2.1zM590.7 306.5l.5 5.2-5.6-7.5zM531.4 251.3l7.4 5.6-5.9-1.1zM540.1 261.5l7.1 6-5.9-1.2zM548.2 272.5l-6.9-6.2 5.9 1.2zM567.6 287.4l.7 5.4-6.5-7.1z"/>
<path fill="#00001a" stroke="#00001a" stroke-width="0.7" d="M569.4 264.6l-.6-2.7 5.3 5.5zM569.4 264.6l4.7 2.8 2.2 3.9zM573.4 272.7l-1.9-4.1 6.8 6.8z"/>
<path fill="#00005a" stroke="#00005a" stroke-width="0.7" d="M568 259.5l5.4 5.3-4.6-2.9zM578.6 270.4l-5.2-5.6 4.4 3.1zM558.3 253.9l5.6 5.3-4.9-2.5zM558.3 253.9l4.9 2.7 .7 2.6zM570 274.8l-1.7-4.5 6.8 6.8zM563.1 268.1l-1.8-4.3 7 6.5zM575.1 277.1l4.9 2.6 1.6 4.5z"/>
<path fill="#000046" stroke="#000046" stroke-width="0.7" d="M578.6 270.4l-4.5-3-.7-2.6zM568.8 261.9l4.6 2.9 .7 2.6zM559.4 259.8l-.4-3.1 5.5 5.4zM564.5 262.1l-5.5-5.4 4.9 2.5zM566.5 266.1l1.8 4.2-7-6.5z"/>
<path fill="#0000a9" stroke="#0000a9" stroke-width="0.7" d="M565.5 255.5l5.7 5-4.3-3.2zM565.5 255.5l-4.4-3.2-1.4-1.7zM565.5 255.5l1.4 1.8-5.8-5zM548.7 255.7l-5.6-1.7-.4-3.6zM546.6 244.1l.8 2.5-6.3-4.9zM547.4 246.6l-5.5-2.3-.8-2.6zM578.8 291.5l-1-5 6.2 7.2zM565.7 277.3l-5.7-1.8-1.1-4.8zM565.7 277.3l6.7 7-5.6-2z"/>
<path fill="#000088" stroke="#000088" stroke-width="0.7" d="M568 259.5l-1.1-2.2 5.5 5.2zM548.1 249.3l5.7 5.1-5.3-2zM558.3 253.9l-5.8-5 5 2.6zM568 259.5l-5.7-5.2 4.6 3zM557.5 251.5l4.8 2.8 .9 2.3zM581.6 284.2l6.2 7.2-4.8-2.6zM586.4 286.9l6.1 7.4-4.7-2.9zM548.7 255.7l5.4 1.9 1.9 4.2zM563.1 268.1l1.4 4.5-7-6.5zM576.6 281.6l1.2 4.9-6.5-7.1z"/>
<path fill="#000095" stroke="#000095" stroke-width="0.7" d="M571.2 260.5l1.2 2-5.5-5.2zM551.6 246.6l5.9 4.9-5-2.6zM556.4 249.3l5.9 5-4.8-2.8zM548.7 255.7l-6-5.3 5.8 2zM589 296.2l-6-7.4 4.8 2.6zM587.8 291.4l4.7 2.9 1.3 4.7zM548.7 255.7l7.3 6.1-5.7-1.9zM565.7 277.3l-1.2-4.7 6.8 6.8zM564.5 272.6l-5.6-1.9-1.4-4.6zM578.8 291.5l-6.4-7.2 5.4 2.2z"/>
<path fill="#000078" stroke="#000078" stroke-width="0.7" d="M568 259.5l4.4 3 1 2.3zM573.4 264.8l-1-2.3 5.4 5.4zM558.3 253.9l-.8-2.4 5.7 5.1zM586.4 286.9l1.4 4.5-6.2-7.2zM554.1 257.6l7.2 6.2-5.3-2zM563.1 268.1l6.9 6.7-5.5-2.2z"/>
<path fill="#000081" stroke="#000081" stroke-width="0.7" d="M548.7 255.7l-.2-3.3 5.6 5.2zM558.3 253.9l-5-2.4-.8-2.6zM548.1 249.3l5.2 2.2 .5 2.9zM568 259.5l-4.8-2.9-.9-2.3zM576.6 281.6l5 2.6 1.4 4.6zM563.1 268.1l-5.6-2-1.5-4.3zM571.3 279.4l-6.8-6.8 5.5 2.2zM577.8 286.5l-5.4-2.2-1.1-4.9z"/>
<path fill="#00006e" stroke="#00006e" stroke-width="0.7" d="M559.4 259.8l-5.3-2.2-.3-3.2zM548.5 252.4l5.3 2 .3 3.2zM558.3 253.9l.7 2.8-5.7-5.2zM553.3 251.5l5.7 5.2-5.2-2.3zM563.1 268.1l-7.1-6.3 5.3 2zM576.6 281.6l-5.3-2.2-1.3-4.6z"/>
<path fill="#00009c" stroke="#00009c" stroke-width="0.7" d="M546.6 244.1l5.9 4.8-5.1-2.3zM556.4 249.3l1.1 2.2-5.9-4.9zM566.9 257.3l-4.6-3-1.2-2zM548.1 249.3l.4 3.1-6.1-5.2zM548.1 249.3l-6.2-5 5.5 2.3zM589 296.2l-1.2-4.8 6 7.6zM583 288.8l1 4.9-6.2-7.2zM565.7 277.3l-6.8-6.6 5.6 1.9zM565.7 277.3l5.6 2.1 1.1 4.9z"/>
<path fill="#00008f" stroke="#00008f" stroke-width="0.7" d="M548.1 249.3l-.7-2.7 5.9 4.9zM552.5 248.9l.8 2.6-5.9-4.9zM576.6 281.6l6.4 7.2-5.2-2.3zM556 261.8l1.5 4.3-7.2-6.2z"/>
<path fill="#000034" stroke="#000034" stroke-width="0.7" d="M569.4 264.6l-4.9-2.5-.6-2.9zM578.6 270.4l2.3 3.8-6.8-6.8zM573.4 272.7l-5.1-2.4-1.8-4.2z"/>
<path fill="#000064" stroke="#000064" stroke-width="0.7" d="M559.4 259.8l-5.6-5.4 5.2 2.3zM568 259.5l.8 2.4-5.6-5.3zM576.6 281.6l-6.6-6.8 5.1 2.3zM563.1 268.1l5.2 2.2 1.7 4.5zM586.4 286.9l-1.6-4.4 6.3 7.3zM576.6 281.6l-1.5-4.5 6.5 7.1zM586.4 286.9l-4.8-2.7-1.6-4.5z"/>
<path fill="#0000a3" stroke="#0000a3" stroke-width="0.7" d="M546.6 244.1l-1.1-2.1 6.1 4.6zM546.6 244.1l5 2.5 .9 2.3zM556.4 249.3l4.7 3 1.2 2zM542.7 250.4l-.3-3.2 6.1 5.2zM548.1 249.3l-5.7-2.1-.5-2.9zM548.7 255.7l1.6 4.2-7.2-5.9zM589 296.2l-5-2.5-1-4.9zM578.8 291.5l5.2 2.2 .9 5.2zM551.7 264.3l-1.4-4.4 7.2 6.2zM551.7 264.3l5.8 1.8 1.4 4.6z"/>
<path fill="#00003c" stroke="#00003c" stroke-width="0.7" d="M569.4 264.6l-5.5-5.4 4.9 2.7zM559.4 259.8l5.1 2.3 2 4zM573.4 272.7l1.7 4.4-6.8-6.8zM573.4 272.7l6.6 7-4.9-2.6zM580 279.7l-1.7-4.3 6.5 7.1z"/>
<path fill="#000050" stroke="#000050" stroke-width="0.7" d="M563.9 259.2l-.7-2.6 5.6 5.3zM559.4 259.8l1.9 4-7.2-6.2zM559.4 259.8l7.1 6.3-5.2-2.3zM583 278.2l6.4 7.2-4.6-2.9zM586.4 286.9l-6.4-7.2 4.8 2.8z"/>
<path fill="#00002b" stroke="#00002b" stroke-width="0.7" d="M583 278.2l-6.7-6.9 4.6 2.9zM571.5 268.6l-5-2.5-2-4zM573.4 272.7l4.9 2.7 1.7 4.3z"/>
<path fill="#000022" stroke="#000022" stroke-width="0.7" d="M574.1 267.4l6.8 6.8-4.6-2.9zM569.4 264.6l2.1 4-7-6.5zM573.4 272.7l-6.9-6.6 5 2.5zM583 278.2l-4.7-2.8-2-4.1zM583 278.2l1.8 4.3-6.5-7.1z"/>
<path fill="#000009" stroke="#000009" stroke-width="0.7" d="M569.4 264.6l6.9 6.7-4.8-2.7zM576.3 271.3l2 4.1-6.8-6.8z"/>
</g></g></g>
<path d="M651.0 422.0L651.3 426.1L651.5 430.2L651.6 434.4L651.6 438.5L651.6 442.6L651.5 446.8L651.3 450.9L651.0 455.0L651.2 449.2L650.7 452.7L649.9 456.2L649.0 459.6L648.0 463.1L646.7 466.5L645.4 469.9L643.8 473.3L642.1 476.7L640.3 480.0L638.3 483.4L636.1 486.6L633.8 489.9L631.3 493.1L628.7 496.3L626.0 499.4L623.1 502.5L620.0 505.6L616.8 508.6L613.5 511.5L610.0 514.5L606.4 517.3L602.7 520.1L598.9 522.9L594.9 525.6L590.8 528.2L586.5 530.8L582.2 533.3L577.7 535.7L573.2 538.1L568.5 540.4L563.7 542.6L558.8 544.8L553.8 546.9L548.7 548.9L543.6 550.8L538.3 552.7L533.0 554.5L527.5 556.2L522.0 557.8L516.4 559.4L510.8 560.8L505.1 562.2L499.3 563.5L493.5 564.7" stroke="#ff0000" stroke-width="1.6" fill="none"/>
<clipPath id="lc"><path d="M76.1 440.0L102.5 435.1L386.6 915.8L360.2 920.8zM101.3 447.1L127.6 442.2L405.5 912.3L379.1 917.2zM120.1 443.6L146.5 438.6L424.3 908.8L397.9 913.7zM139.0 440.1L165.4 435.1L443.2 905.2L416.8 910.2zM201.8 510.9L228.2 505.9L462.0 901.7L435.6 906.6zM239.5 539.2L265.8 534.3L480.9 898.1L454.5 903.1zM264.6 546.3L291.0 541.3L499.7 894.6L473.4 899.6zM289.7 553.4L316.1 548.4L518.6 891.1L492.2 896.0zM314.8 560.5L341.2 555.5L537.5 887.5L511.1 892.5zM340.0 567.6L366.4 562.6L556.3 884.0L529.9 888.9zM365.1 574.6L391.5 569.7L575.2 880.4L548.8 885.4zM384.0 571.1L410.4 566.2L594.0 876.9L567.6 881.9zM402.8 567.6L429.2 562.6L612.9 873.4L586.5 878.3zM427.9 574.7L454.3 569.7L631.7 869.8L605.3 874.8zM446.8 571.1L473.2 566.2L650.6 866.3L624.2 871.2zM465.7 567.6L492.0 562.6L669.4 862.8L643.0 867.7zM489.5 566.1L495.4 564.9L501.2 563.7L507.0 562.4L512.7 561.0L518.3 559.5L523.9 557.9L529.4 556.2L534.8 554.5L540.1 552.7L545.3 550.8L550.5 548.8L555.5 546.8L560.5 544.7L565.3 542.5L570.1 540.2L574.7 537.9L579.2 535.5L583.7 533.0L588.0 530.5L592.2 527.9L596.2 525.3L600.2 522.6L604.0 519.8L607.7 517.0L611.2 514.1L614.6 511.2L617.9 508.2L621.0 505.2L624.0 502.1L626.9 499.0L629.6 495.8L632.2 492.6L634.6 489.4L636.8 486.1L639.0 482.8L640.9 479.5L642.7 476.2L644.4 472.8L645.8 469.4L647.2 466.0L648.3 462.5L649.3 459.1L650.2 455.6L650.9 452.1L651.4 448.6L651.8 445.1L652.0 441.6L833.4 438.5L1042.7 792.7L665.7 863.5z"/></clipPath>
<g clip-path="url(#sc)"><g clip-path="url(#lc)"><path d="M-5.0 -2.1L10.6 -5.0M-5.0 9.7L73.5 -5.0M-5.0 21.5L136.4 -5.0M-5.0 33.3L199.2 -5.0M-5.0 56.9L325.0 -5.0M-5.0 68.7L387.9 -5.0M-5.0 80.5L450.8 -5.0M-5.0 92.3L513.7 -5.0M-5.0 104.1L576.6 -5.0M-5.0 115.9L639.4 -5.0M-5.0 127.8L702.3 -5.0M-5.0 139.6L765.2 -5.0M-5.0 827.3L6.7 847.0M-5.0 151.4L828.1 -5.0M-5.0 756.4L48.6 847.0M-5.0 175.0L953.9 -5.0M-5.0 721.0L69.5 847.0M-5.0 186.8L992.0 -0.4M-5.0 685.5L90.4 847.0M-5.0 198.6L992.0 11.5M-5.0 650.1L111.4 847.0M-5.0 210.4L992.0 23.3M-5.0 614.6L132.3 847.0M-5.0 222.2L992.0 35.1M-5.0 579.2L153.3 847.0M-5.0 234.0L992.0 46.9M-5.0 543.8L174.2 847.0M-5.0 245.8L992.0 58.7M-5.0 508.3L195.2 847.0M-5.0 257.6L992.0 70.5M-5.0 472.9L216.1 847.0M-5.0 269.4L992.0 82.3M-5.0 402.0L258.0 847.0M-5.0 293.0L992.0 105.9M-5.0 366.6L278.9 847.0M-5.0 304.8L992.0 117.7M-5.0 331.1L299.9 847.0M-5.0 316.6L992.0 129.5M-5.0 295.7L320.8 847.0M-5.0 328.4L992.0 141.3M-5.0 260.3L341.8 847.0M-5.0 340.2L992.0 153.1M-5.0 224.8L362.7 847.0M-5.0 352.0L992.0 164.9M-5.0 189.4L383.7 847.0M-5.0 363.8L992.0 176.7M-5.0 153.9L404.6 847.0M-5.0 375.6L992.0 188.5M-5.0 118.5L425.5 847.0M-5.0 387.4L992.0 200.3M-5.0 47.6L467.4 847.0M-5.0 411.0L992.0 223.9M-5.0 12.2L488.4 847.0M-5.0 422.8L992.0 235.7M5.8 -5.0L509.3 847.0M-5.0 434.6L992.0 247.5M26.7 -5.0L530.3 847.0M-5.0 446.4L992.0 259.3M47.7 -5.0L551.2 847.0M-5.0 458.2L992.0 271.1M68.6 -5.0L572.1 847.0M-5.0 470.0L992.0 282.9M89.6 -5.0L593.1 847.0M-5.0 481.8L992.0 294.7M110.5 -5.0L614.0 847.0M-5.0 493.6L992.0 306.5M131.4 -5.0L635.0 847.0M-5.0 505.4L992.0 318.3M173.3 -5.0L676.9 847.0M-5.0 529.0L992.0 341.9M194.3 -5.0L697.8 847.0M-5.0 540.8L992.0 353.7M215.2 -5.0L718.8 847.0M-5.0 552.6L992.0 365.5M236.2 -5.0L739.7 847.0M-5.0 564.4L992.0 377.3M257.1 -5.0L760.6 847.0M-5.0 576.2L992.0 389.1M278.1 -5.0L781.6 847.0M-5.0 588.0L992.0 400.9M299.0 -5.0L802.5 847.0M-5.0 599.8L992.0 412.7M319.9 -5.0L823.5 847.0M-5.0 611.7L992.0 424.5M340.9 -5.0L844.4 847.0M-5.0 623.5L992.0 436.3M382.8 -5.0L886.3 847.0M-5.0 647.1L992.0 459.9M403.7 -5.0L907.2 847.0M-5.0 658.9L992.0 471.7M424.7 -5.0L928.2 847.0M-5.0 670.7L992.0 483.5M445.6 -5.0L949.1 847.0M-5.0 682.5L992.0 495.3M466.5 -5.0L970.1 847.0M-5.0 694.3L992.0 507.2M487.5 -5.0L991.0 847.0M-5.0 706.1L992.0 519.0M508.4 -5.0L992.0 813.2M-5.0 717.9L992.0 530.8M529.4 -5.0L992.0 777.8M-5.0 729.7L992.0 542.6M550.3 -5.0L992.0 742.3M-5.0 741.5L992.0 554.4M592.2 -5.0L992.0 671.5M-5.0 765.1L992.0 578.0M613.2 -5.0L992.0 636.0M-5.0 776.9L992.0 589.8M634.1 -5.0L992.0 600.6M-5.0 788.7L992.0 601.6M655.0 -5.0L992.0 565.1M-5.0 800.5L992.0 613.4M676.0 -5.0L992.0 529.7M-5.0 812.3L992.0 625.2M696.9 -5.0L992.0 494.3M-5.0 824.1L992.0 637.0M717.9 -5.0L992.0 458.8M-5.0 835.9L992.0 648.8M738.8 -5.0L992.0 423.4M-1.3 847.0L992.0 660.6M759.8 -5.0L992.0 388.0M61.6 847.0L992.0 672.4M801.7 -5.0L992.0 317.1M187.4 847.0L992.0 696.0M822.6 -5.0L992.0 281.6M250.3 847.0L992.0 707.8M843.5 -5.0L992.0 246.2M313.2 847.0L992.0 719.6M864.5 -5.0L992.0 210.8M376.0 847.0L992.0 731.4M885.4 -5.0L992.0 175.3M438.9 847.0L992.0 743.2M906.4 -5.0L992.0 139.9M501.8 847.0L992.0 755.0M927.3 -5.0L992.0 104.4M564.7 847.0L992.0 766.8M948.3 -5.0L992.0 69.0M627.6 847.0L992.0 778.6M969.2 -5.0L992.0 33.6M690.5 847.0L992.0 790.4M816.2 847.0L992.0 814.0M879.1 847.0L992.0 825.8M942.0 847.0L992.0 837.6" stroke="#d2d2d2" stroke-width="1.1" fill="none"/><path d="M-5.0 45.1L262.1 -5.0M-5.0 791.8L27.6 847.0M-5.0 163.2L891.0 -5.0M-5.0 437.4L237.0 847.0M-5.0 281.2L992.0 94.1M-5.0 83.1L446.5 847.0M-5.0 399.2L992.0 212.1M152.4 -5.0L655.9 847.0M-5.0 517.2L992.0 330.1M361.8 -5.0L865.4 847.0M-5.0 635.3L992.0 448.1M571.3 -5.0L992.0 706.9M-5.0 753.3L992.0 566.2M780.7 -5.0L992.0 352.5M124.5 847.0L992.0 684.2M990.1 -5.0L992.0 -1.9M753.4 847.0L992.0 802.2" stroke="#cdcdcd" stroke-width="2" fill="none"/></g></g>
<path d="M18.5 106.1L217.4 440.1M217.4 440.1L810.3 328.7M217.4 440.1L217.4 869.6" stroke="#ff40ff" stroke-width="1" fill="none"/>
<path d="M37.7 123.2L601.9 17.0L790.5 335.2L226.5 441.7z" stroke="#8c1cd0" stroke-width="2.3" fill="none" stroke-linejoin="miter"/>
<path d="M132.1 282.4L696.2 176.1M319.8 70.1L508.5 388.4" stroke="#8c1cd0" stroke-width="1" fill="none"/>
<path d="M116.1 270.5L98.2 290.9L101.2 293.6L119.1 273.1z" fill="#3ce8e8"/>
<path d="M95.3 289.7L104.4 294.4L103.0 295.4L94.5 291.2z" fill="#1c5c5c"/>
<path d="M94.6 291.1L85.2 308.8L102.8 295.7z" fill="#34d4d4"/>
<path d="M117.4 270.1L120.7 270.1L137.1 279.4L133.6 291.7L130.6 290.7L115.6 274.3z" fill="#f23cae"/>
<path d="M135.7 279.1L139.9 278.0L143.2 280.9L151.9 296.4L145.0 295.3L131.6 291.9z" fill="#cc2e98"/>
<path d="M139.9 278.0L143.2 280.9L151.9 296.4L140.9 284.4z" fill="#d836a4"/>
<path d="M115.8 272.9L119.2 271.1L126.9 282.2L131.2 286.7L132.4 290.7L133.6 299.8L126.7 294.8L122.1 289.3L122.7 285.5z" fill="#3a04b4"/>
<path d="M124.7 283.4L131.2 286.7L132.4 290.7L133.6 299.8L126.7 294.8L122.1 289.3L122.7 285.5z" fill="#4810d0"/>
</svg>
<div class="lg">
<div class="t" style="top:3px">JsMagTotal</div>
<div class="hr" style="top:24px"></div>
<div class="t" style="top:29px">Type: Linear</div>
<div class="hr" style="top:50px"></div>
<div class="bar" style="background:linear-gradient(to bottom, rgb(255,255,255) 0.0%, rgb(255,255,0) 10.0%, rgb(255,208,32) 16.7%, rgb(255,176,64) 21.0%, rgb(255,144,96) 27.4%, rgb(255,120,128) 33.1%, rgb(255,96,160) 37.5%, rgb(248,80,184) 41.3%, rgb(216,56,200) 46.0%, rgb(176,32,224) 52.6%, rgb(144,16,248) 58.0%, rgb(96,0,255) 63.3%, rgb(56,8,255) 67.9%, rgb(24,8,240) 72.6%, rgb(8,0,208) 77.9%, rgb(0,0,176) 82.5%, rgb(0,0,128) 88.5%, rgb(0,0,64) 93.8%, rgb(0,0,0) 100.0%)"></div>
<div class="v" style="top:54.60px">0.00536</div>
<div class="v" style="top:71.63px">0.00482</div>
<div class="v" style="top:88.66px">0.00428</div>
<div class="v" style="top:105.69px">0.00375</div>
<div class="v" style="top:122.72px">0.00321</div>
<div class="v" style="top:139.75px">0.00268</div>
<div class="v" style="top:156.78px">0.00214</div>
<div class="v" style="top:173.81px">0.00161</div>
<div class="v" style="top:190.84px">0.00107</div>
<div class="v" style="top:207.87px">0.000536</div>
<div class="v" style="top:224.90px">0</div>
<div class="hr" style="top:246px"></div>
<div class="t s" style="top:249.60px">Max: 0.00536</div>
<div class="t s" style="top:266.63px">Min: 0</div>
<div class="t s" style="top:283.66px">Units: A/m</div>
<div class="t s" style="top:300.69px">Mean: 0.00211</div>
<div class="t s" style="top:317.72px">STD: 0.00225</div>
</div>
</body></html>
